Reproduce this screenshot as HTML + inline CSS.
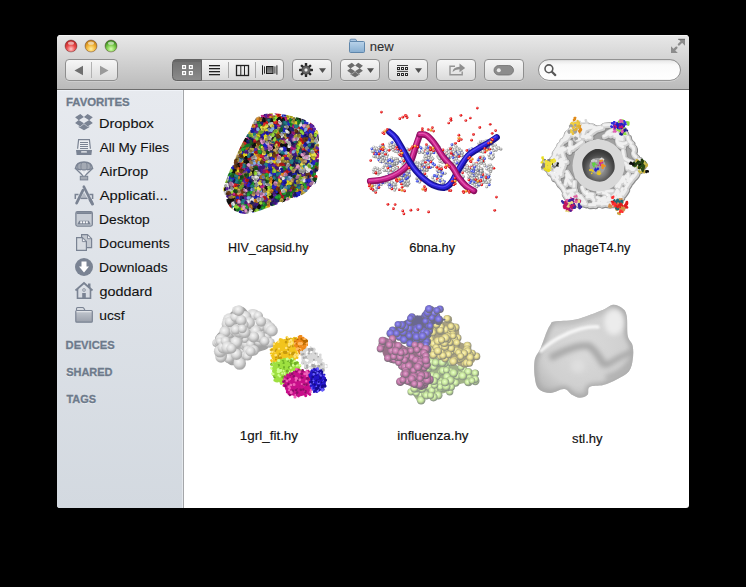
<!DOCTYPE html>
<html><head><meta charset="utf-8"><style>
html,body{margin:0;padding:0;background:#000;width:746px;height:587px;overflow:hidden}
svg{display:block}
text{font-family:"Liberation Sans",sans-serif}
</style></head><body><svg width="746" height="587" viewBox="0 0 746 587"><defs><linearGradient id="tbg" x1="0" y1="0" x2="0" y2="1">
<stop offset="0" stop-color="#e8e8e8"/><stop offset="1" stop-color="#bababa"/></linearGradient>
<linearGradient id="sbg" x1="0" y1="0" x2="0" y2="1">
<stop offset="0" stop-color="#e7eaef"/><stop offset="1" stop-color="#d3d9e0"/></linearGradient>
<linearGradient id="btn" x1="0" y1="0" x2="0" y2="1">
<stop offset="0" stop-color="#f7f7f7"/><stop offset="1" stop-color="#dadada"/></linearGradient>
<linearGradient id="btnsel" x1="0" y1="0" x2="0" y2="1">
<stop offset="0" stop-color="#6e6e6e"/><stop offset="1" stop-color="#8c8c8c"/></linearGradient>
<linearGradient id="fold" x1="0" y1="0" x2="0" y2="1">
<stop offset="0" stop-color="#b9d3ea"/><stop offset="1" stop-color="#88aed0"/></linearGradient>
<radialGradient id="red" cx="0.5" cy="0.75" r="0.65"><stop offset="0" stop-color="#ffc8c8"/><stop offset="0.55" stop-color="#ea4c4c"/><stop offset="1" stop-color="#c02828"/></radialGradient>
<radialGradient id="yel" cx="0.5" cy="0.75" r="0.65"><stop offset="0" stop-color="#fff0a0"/><stop offset="0.55" stop-color="#f2b53a"/><stop offset="1" stop-color="#c88418"/></radialGradient>
<radialGradient id="grn" cx="0.5" cy="0.75" r="0.65"><stop offset="0" stop-color="#d8ffb0"/><stop offset="0.55" stop-color="#7ccc4c"/><stop offset="1" stop-color="#3c8a20"/></radialGradient>
<clipPath id="win"><path d="M61,35 H685 Q689,35 689,39 V505 Q689,508 686,508 H60 Q57,508 57,505 V39 Q57,35 61,35 Z"/></clipPath><linearGradient id="cfg" x1="0" y1="0" x2="0" y2="1"><stop offset="0" stop-color="#5a5a5a"/><stop offset="1" stop-color="#8a8a8a"/></linearGradient><radialGradient id="gearg" cx="0.5" cy="0.5" r="0.5"><stop offset="0.4" stop-color="#7a7a7a"/><stop offset="1" stop-color="#444"/></radialGradient><linearGradient id="srch" x1="0" y1="0" x2="0" y2="1"><stop offset="0" stop-color="#e4e4e4"/><stop offset="0.25" stop-color="#fafafa"/><stop offset="1" stop-color="#ffffff"/></linearGradient><linearGradient id="sfold" x1="0" y1="0" x2="0" y2="1"><stop offset="0" stop-color="#c3c8d0"/><stop offset="1" stop-color="#9aa0ab"/></linearGradient><filter id="bl3" x="-10%" y="-10%" width="120%" height="120%"><feGaussianBlur stdDeviation="0.35"/></filter><filter id="bl6" x="-10%" y="-10%" width="120%" height="120%"><feGaussianBlur stdDeviation="0.6"/></filter><filter id="bl12" x="-20%" y="-20%" width="140%" height="140%"><feGaussianBlur stdDeviation="1.2"/></filter><filter id="bl25" x="-20%" y="-20%" width="140%" height="140%"><feGaussianBlur stdDeviation="2.5"/></filter><clipPath id="capclip"><path d="M257.7,116.6 C262.2,113.6 269.1,113.1 276.4,113.4 C283.6,113.8 294.7,116.4 301.2,118.6 C307.8,120.9 312.8,123.5 315.7,126.9 C318.7,130.4 318.3,133.5 318.8,139.3 C319.3,145.2 319.3,154.9 318.8,162.2 C318.3,169.4 318.7,177.3 315.7,182.9 C312.8,188.4 306.4,192.2 301.2,195.3 C296.0,198.5 291.1,199.1 284.6,201.5 C278.0,204.0 268.4,207.8 261.8,209.9 C255.3,211.9 250.4,214.4 245.2,214.0 C240.0,213.7 234.3,211.5 230.7,207.7 C227.1,203.9 224.1,196.0 223.5,191.2 C222.8,186.3 224.0,185.6 226.6,178.7 C229.2,171.8 235.2,157.6 239.0,149.7 C242.8,141.7 246.2,136.6 249.4,131.1 C252.5,125.6 253.2,119.5 257.7,116.6 Z"/></clipPath><radialGradient id="gb" cx="0.38" cy="0.35" r="0.7"><stop offset="0" stop-color="#ffffff"/><stop offset="0.55" stop-color="#b8b8b8"/><stop offset="1" stop-color="#6a6a6a"/></radialGradient><radialGradient id="bb" cx="0.38" cy="0.35" r="0.7"><stop offset="0" stop-color="#c0c8ff"/><stop offset="0.55" stop-color="#4050f0"/><stop offset="1" stop-color="#2028a0"/></radialGradient><radialGradient id="rb" cx="0.38" cy="0.35" r="0.7"><stop offset="0" stop-color="#ffa0a0"/><stop offset="0.55" stop-color="#f01818"/><stop offset="1" stop-color="#a00000"/></radialGradient><radialGradient id="ob" cx="0.38" cy="0.35" r="0.7"><stop offset="0" stop-color="#ffd090"/><stop offset="0.55" stop-color="#f09020"/><stop offset="1" stop-color="#b05a00"/></radialGradient><radialGradient id="pg" cx="0.4" cy="0.35" r="0.65"><stop offset="0" stop-color="#fafafa"/><stop offset="0.55" stop-color="#d8d8d8"/><stop offset="1" stop-color="#9c9c9c"/></radialGradient><radialGradient id="hole" cx="0.5" cy="0.62" r="0.55"><stop offset="0" stop-color="#b0b0b0"/><stop offset="0.45" stop-color="#7c7c7c"/><stop offset="0.8" stop-color="#4a4a4a"/><stop offset="1" stop-color="#3a3a3a"/></radialGradient><radialGradient id="g1" cx="0.4" cy="0.35" r="0.58"><stop offset="0" stop-color="#f6f6f6"/><stop offset="0.55" stop-color="#dadada"/><stop offset="1" stop-color="#ababab"/></radialGradient><radialGradient id="iblue" cx="0.45" cy="0.42" r="0.52"><stop offset="0" stop-color="#a29cf2"/><stop offset="0.55" stop-color="#766edc"/><stop offset="1" stop-color="#6e6e7c"/></radialGradient><radialGradient id="iyel" cx="0.45" cy="0.42" r="0.52"><stop offset="0" stop-color="#fcf6bc"/><stop offset="0.55" stop-color="#e6da8a"/><stop offset="1" stop-color="#8e8c7a"/></radialGradient><radialGradient id="ipink" cx="0.45" cy="0.42" r="0.52"><stop offset="0" stop-color="#e4a6d0"/><stop offset="0.55" stop-color="#c67aac"/><stop offset="1" stop-color="#7c6c7a"/></radialGradient><radialGradient id="igrn" cx="0.45" cy="0.42" r="0.52"><stop offset="0" stop-color="#eaffcc"/><stop offset="0.55" stop-color="#c8e89c"/><stop offset="1" stop-color="#8a9684"/></radialGradient><radialGradient id="stlg" cx="0.5" cy="0.45" r="0.6"><stop offset="0" stop-color="#dadada"/><stop offset="0.7" stop-color="#d0d0d0"/><stop offset="1" stop-color="#bababa"/></radialGradient><clipPath id="stlc"><path d="M554.4,321.4 C558.6,320.6 567.8,321.4 575.9,319.5 C584.0,317.6 597.1,312.1 603.3,309.7 C609.5,307.2 609.8,305.0 613.1,304.8 C616.4,304.6 620.6,306.8 622.9,308.7 C625.2,310.6 626.0,311.9 626.8,316.5 C627.6,321.1 626.8,331.2 627.8,336.1 C628.8,341.0 631.9,342.0 632.7,345.9 C633.5,349.8 633.4,355.4 632.7,359.6 C632.1,363.9 631.4,368.1 628.8,371.4 C626.2,374.7 621.2,376.9 617.0,379.2 C612.8,381.5 607.9,383.8 603.3,385.1 C598.7,386.4 592.2,385.4 589.6,387.0 C587.0,388.6 589.2,393.0 587.6,394.8 C586.0,396.6 582.4,397.8 579.8,397.8 C577.2,397.8 574.6,396.3 572.0,394.8 C569.4,393.3 567.8,389.3 564.2,389.0 C560.6,388.7 554.8,392.9 550.5,392.9 C546.2,392.9 541.3,391.6 538.7,389.0 C536.1,386.4 535.4,382.1 534.8,377.2 C534.1,372.3 533.8,364.5 534.8,359.6 C535.8,354.7 538.8,352.5 540.7,347.9 C542.7,343.3 544.9,336.1 546.5,332.2 C548.1,328.3 549.2,326.2 550.5,324.4 C551.8,322.6 550.2,322.2 554.4,321.4 Z"/></clipPath></defs><rect x="0" y="0" width="746" height="587" fill="#000"/><g clip-path="url(#win)"><rect x="57" y="35" width="632" height="473" fill="#fff"/><rect x="57" y="35" width="632" height="54" fill="url(#tbg)"/><rect x="57" y="35" width="632" height="1" fill="#f4f4f4"/><rect x="57" y="89" width="632" height="1" fill="#6e6e6e"/><rect x="57" y="90" width="126" height="418" fill="url(#sbg)"/><rect x="57" y="90" width="126" height="1" fill="#f0f3f8"/><rect x="183" y="90" width="1" height="418" fill="#a4a6a9"/><rect x="182" y="90" width="1" height="418" fill="#eef1f5" opacity="0.6"/></g><circle cx="71" cy="46" r="6.5" fill="#d8d8d8" opacity="0.0"/><circle cx="71" cy="46" r="6" fill="url(#red)" stroke="rgba(60,20,20,0.45)" stroke-width="0.8"/><ellipse cx="71" cy="43.2" rx="3" ry="1.6" fill="#fff" opacity="0.55"/><circle cx="91" cy="46" r="6.5" fill="#d8d8d8" opacity="0.0"/><circle cx="91" cy="46" r="6" fill="url(#yel)" stroke="rgba(60,20,20,0.45)" stroke-width="0.8"/><ellipse cx="91" cy="43.2" rx="3" ry="1.6" fill="#fff" opacity="0.55"/><circle cx="111" cy="46" r="6.5" fill="#d8d8d8" opacity="0.0"/><circle cx="111" cy="46" r="6" fill="url(#grn)" stroke="rgba(60,20,20,0.45)" stroke-width="0.8"/><ellipse cx="111" cy="43.2" rx="3" ry="1.6" fill="#fff" opacity="0.55"/><rect x="349.5" y="41.5" width="15" height="11" rx="1" fill="url(#fold)" stroke="#5f86ab" stroke-width="1"/><path d="M350,41.5 V40 Q350,39.2 351,39.2 H355 Q356,39.2 356.3,40 L356.8,41.5 Z" fill="#a9c6e2" stroke="#5f86ab" stroke-width="0.9"/><g fill="#8c8c8c"><path d="M678.2,39 H685 V45.8 Z"/><path d="M671,46.2 V53 H677.8 Z"/></g><path d="M678.9,44.5 L682.2,41.2 M676.4,47.6 L673.6,50.4" stroke="#8c8c8c" stroke-width="2.3" stroke-linecap="round"/><rect x="678.2" y="38.8" width="6.8" height="1" fill="#6a6a6a"/><rect x="65.5" y="60.5" width="52" height="21" rx="3.5" fill="#f0f0f0" opacity="0.55"/><rect x="65.5" y="59.5" width="52" height="21" rx="3.5" fill="url(#btn)" stroke="#8e8e8e" stroke-width="1"/><rect x="91" y="62" width="1" height="16" fill="#b2b2b2"/><path d="M74.5,70.5 L83,65.8 V75.2 Z" fill="#6e6e6e"/><path d="M108.5,70.5 L100,65.8 V75.2 Z" fill="#9a9a9a"/><rect x="173.5" y="60.5" width="110" height="21" rx="3.5" fill="#f0f0f0" opacity="0.55"/><rect x="173.5" y="59.5" width="110" height="21" rx="3.5" fill="url(#btn)" stroke="#8e8e8e" stroke-width="1"/><path d="M176.5,59.5 H201.5 V80.5 H176.5 Q172.5,80.5 172.5,76.5 V63.5 Q172.5,59.5 176.5,59.5 Z" fill="url(#btnsel)" stroke="#626262" stroke-width="1"/><rect x="174" y="60" width="27" height="2" fill="#5a5a5a" opacity="0.35"/><rect x="228" y="62" width="1" height="16" fill="#a8a8a8"/><rect x="255" y="62" width="1" height="16" fill="#a8a8a8"/><rect x="182.7" y="65.7" width="2.7" height="2.7" fill="#3a3a3a" stroke="#fff" stroke-width="1.4"/><rect x="182.7" y="71.7" width="2.7" height="2.7" fill="#3a3a3a" stroke="#fff" stroke-width="1.4"/><rect x="189.5" y="65.7" width="2.7" height="2.7" fill="#3a3a3a" stroke="#fff" stroke-width="1.4"/><rect x="189.5" y="71.7" width="2.7" height="2.7" fill="#3a3a3a" stroke="#fff" stroke-width="1.4"/><rect x="209" y="65" width="11" height="1.3" fill="#222"/><rect x="209" y="68" width="11" height="1.3" fill="#222"/><rect x="209" y="71" width="11" height="1.3" fill="#222"/><rect x="209" y="74" width="11" height="1.3" fill="#222"/><rect x="236.5" y="65.5" width="12" height="10" fill="none" stroke="#222" stroke-width="1.3"/><rect x="240.3" y="65.5" width="1" height="10" fill="#222"/><rect x="244" y="65.5" width="1" height="10" fill="#222"/><rect x="266.5" y="66.5" width="6.5" height="7" fill="url(#cfg)" stroke="#1e1e1e" stroke-width="1"/><rect x="262" y="65.3" width="1" height="9.4" fill="#222"/><rect x="264" y="66.4" width="1" height="7.2" fill="#333"/><rect x="274.4" y="66.4" width="1" height="7.2" fill="#333"/><rect x="276.4" y="65.3" width="1" height="9.4" fill="#222"/><rect x="292.5" y="60.5" width="39" height="21" rx="3.5" fill="#f0f0f0" opacity="0.55"/><rect x="292.5" y="59.5" width="39" height="21" rx="3.5" fill="url(#btn)" stroke="#8e8e8e" stroke-width="1"/><rect x="304.8" y="63" width="2.4" height="3.6" rx="0.6" fill="#262626" transform="rotate(0 306 70)"/><rect x="304.8" y="63" width="2.4" height="3.6" rx="0.6" fill="#262626" transform="rotate(45 306 70)"/><rect x="304.8" y="63" width="2.4" height="3.6" rx="0.6" fill="#262626" transform="rotate(90 306 70)"/><rect x="304.8" y="63" width="2.4" height="3.6" rx="0.6" fill="#262626" transform="rotate(135 306 70)"/><rect x="304.8" y="63" width="2.4" height="3.6" rx="0.6" fill="#262626" transform="rotate(180 306 70)"/><rect x="304.8" y="63" width="2.4" height="3.6" rx="0.6" fill="#262626" transform="rotate(225 306 70)"/><rect x="304.8" y="63" width="2.4" height="3.6" rx="0.6" fill="#262626" transform="rotate(270 306 70)"/><rect x="304.8" y="63" width="2.4" height="3.6" rx="0.6" fill="#262626" transform="rotate(315 306 70)"/><circle cx="306" cy="70" r="4.6" fill="url(#gearg)"/><circle cx="306" cy="70" r="2" fill="#ececec" stroke="#333" stroke-width="0.5"/><path d="M319,68.3 H326 L322.5,73.1 Z" fill="#505050"/><rect x="340.5" y="60.5" width="39" height="21" rx="3.5" fill="#f0f0f0" opacity="0.55"/><rect x="340.5" y="59.5" width="39" height="21" rx="3.5" fill="url(#btn)" stroke="#8e8e8e" stroke-width="1"/><g transform="translate(347.2,62.8) scale(0.367)" fill="#6c6c6c"><path d="M12.6,0 L0,8.2 L8.7,15.2 L21.4,7.4 Z M0,22 L12.6,30.2 L21.4,22.9 L8.7,15 Z M21.4,22.9 L30.2,30.2 L42.8,22 L34.1,15 Z M42.8,8.2 L30.2,0 L21.4,7.4 L34.1,15.2 Z M21.5,24.5 L12.6,31.8 L8.8,29.3 V32.1 L21.5,39.7 L34.2,32.1 V29.3 L30.4,31.8 Z"/></g><path d="M367,68.3 H374 L370.5,73.1 Z" fill="#505050"/><rect x="388.5" y="60.5" width="39" height="21" rx="3.5" fill="#f0f0f0" opacity="0.55"/><rect x="388.5" y="59.5" width="39" height="21" rx="3.5" fill="url(#btn)" stroke="#8e8e8e" stroke-width="1"/><rect x="397" y="65" width="11" height="0.9" fill="#2a2a2a"/><rect x="397" y="70.9" width="11" height="0.9" fill="#2a2a2a"/><rect x="397.5" y="67.5" width="2" height="2" fill="#f6f6f6" stroke="#2a2a2a" stroke-width="1"/><rect x="401.5" y="67.5" width="2" height="2" fill="#f6f6f6" stroke="#2a2a2a" stroke-width="1"/><rect x="405.5" y="67.5" width="2" height="2" fill="#f6f6f6" stroke="#2a2a2a" stroke-width="1"/><rect x="397.5" y="73.5" width="2" height="2" fill="#f6f6f6" stroke="#2a2a2a" stroke-width="1"/><rect x="401.5" y="73.5" width="2" height="2" fill="#f6f6f6" stroke="#2a2a2a" stroke-width="1"/><rect x="405.5" y="73.5" width="2" height="2" fill="#f6f6f6" stroke="#2a2a2a" stroke-width="1"/><path d="M415,68.3 H422 L418.5,73.1 Z" fill="#505050"/><rect x="436.5" y="60.5" width="39" height="21" rx="3.5" fill="#f0f0f0" opacity="0.55"/><rect x="436.5" y="59.5" width="39" height="21" rx="3.5" fill="url(#btn)" stroke="#8e8e8e" stroke-width="1"/><path d="M455,66.2 H450 V74.8 H462.2 V71.5" stroke="#949494" stroke-width="1.4" fill="none"/><path d="M452.5,72 Q453,67 459.5,66.8 V63.6 L465.2,68 L459.5,72.2 V69.3 Q455,69.3 452.5,72 Z" fill="#8e8e8e"/><rect x="484.5" y="60.5" width="39" height="21" rx="3.5" fill="#f0f0f0" opacity="0.55"/><rect x="484.5" y="59.5" width="39" height="21" rx="3.5" fill="url(#btn)" stroke="#8e8e8e" stroke-width="1"/><rect x="494" y="65.5" width="19.5" height="9.5" rx="4.75" fill="#8c8c8c" stroke="#6f6f6f" stroke-width="0.8"/><circle cx="498.8" cy="70.2" r="2" fill="#e9e9e9"/><rect x="538.5" y="61" width="142" height="20.5" rx="10.2" fill="#f2f2f2" opacity="0.6"/><rect x="538.5" y="59.6" width="142" height="20.8" rx="10.4" fill="url(#srch)" stroke="#8a8a8a" stroke-width="1"/><circle cx="548.9" cy="68.8" r="3.9" fill="none" stroke="#585858" stroke-width="1.6"/><path d="M551.9,71.8 L555.3,75.1" stroke="#585858" stroke-width="2.2" stroke-linecap="round"/><g transform="translate(75.1,113.9) scale(0.4136)" fill="#7a8393"><path d="M12.6,0 L0,8.2 L8.7,15.2 L21.4,7.4 Z M0,22 L12.6,30.2 L21.4,22.9 L8.7,15 Z M21.4,22.9 L30.2,30.2 L42.8,22 L34.1,15 Z M42.8,8.2 L30.2,0 L21.4,7.4 L34.1,15.2 Z M21.5,24.5 L12.6,31.8 L8.8,29.3 V32.1 L21.5,39.7 L34.2,32.1 V29.3 L30.4,31.8 Z"/></g><path d="M77.6,148.8 L78.6,139.6 H89.4 L90.4,148.8" fill="#eceef2" stroke="#7a8393" stroke-width="1.2"/><g fill="#7a8393"><rect x="80" y="142" width="8" height="1"/><rect x="80" y="144" width="8" height="1"/><rect x="80" y="146" width="8" height="1"/><rect x="80" y="148" width="8" height="1"/></g><path d="M76,150 H92 L91.4,155 H76.6 Z" fill="#7a8393"/><rect x="81" y="151.2" width="6" height="1.4" rx="0.7" fill="#f4f5f8"/><path d="M75.3,168.6 C76,164 79,162 84,162 C89,162 92,164 92.7,168.6 C88,170 80,170 75.3,168.6 Z" fill="#a4aab4" stroke="#7a8393" stroke-width="1.3"/><path d="M81.6,162.5 C80.8,165 80.8,167 81.2,169.3 M86.4,162.5 C87.2,165 87.2,167 86.8,169.3 M78,163.8 C77.5,165.5 77.6,167 78,168.8 M90,163.8 C90.5,165.5 90.4,167 90,168.8" stroke="#7a8393" stroke-width="0.9" fill="none"/><path d="M76,169 L83,175.8 M92,169 L85,175.8" stroke="#7a8393" stroke-width="1.2"/><path d="M81.5,170.2 L83.5,175 M86.5,170.2 L84.5,175" stroke="#f4f5f8" stroke-width="1" fill="none"/><rect x="80.3" y="176.3" width="7.4" height="3.6" fill="#a4aab4" stroke="#7a8393" stroke-width="1"/><path d="M75.3,199 V194.6 H78.5 M92.6,199 V194.6 H89.4" stroke="#7a8393" stroke-width="1.5" fill="none"/><path d="M80.5,198.6 L84,192.5 L87.5,198.6 Z" fill="#b4bac4"/><rect x="80.5" y="197.8" width="7" height="1.3" fill="#7a8393"/><path d="M76.6,203.2 L83,190.2" stroke="#7a8393" stroke-width="2.7" stroke-linecap="round"/><path d="M83.8,186.6 L91.8,202.6" stroke="#7a8393" stroke-width="2.5" stroke-linecap="round"/><path d="M90,199.5 L92.5,204" stroke="#7a8393" stroke-width="3" stroke-linecap="round"/><rect x="75.9" y="211.7" width="16.4" height="14.4" rx="1.5" fill="#c9ced6" stroke="#7a8393" stroke-width="1.3"/><rect x="76.5" y="212.2" width="15.2" height="1.8" fill="#7a8393"/><path d="M77.2,224.5 L79.2,220.8 H88.8 L90.8,224.5 Z" fill="#7a8393"/><g fill="#f4f5f8"><rect x="80.2" y="221.3" width="2" height="2"/><rect x="83" y="221.3" width="2" height="2"/><rect x="85.8" y="221.3" width="2" height="2"/></g><path d="M81.6,234.6 H87.5 L91.6,238.7 V247.6 H81.6 Z" fill="#c4c9d1" stroke="#7a8393" stroke-width="1.2"/><path d="M87.5,234.8 V238.7 H91.4 Z" fill="#f4f5f8" stroke="#7a8393" stroke-width="0.9"/><path d="M76.6,237.6 H82.4 L86.4,241.6 V250.4 H76.6 Z" fill="#d8dce2" stroke="#7a8393" stroke-width="1.2"/><path d="M82.4,237.8 V241.6 H86.2 Z" fill="#f4f5f8" stroke="#7a8393" stroke-width="0.9"/><circle cx="84" cy="267" r="9" fill="#7a8393"/><path d="M81.5,261.5 H86.5 V266.5 H89 L84,272.5 L79,266.5 H81.5 Z" fill="#fff"/><path d="M77.5,289 V298.3 H90.5 V289" fill="#d8dce3" stroke="#7a8393" stroke-width="1.6"/><path d="M75.5,290.5 L84,283 L92.5,290.5" fill="none" stroke="#7a8393" stroke-width="1.8"/><rect x="88" y="283.5" width="2.5" height="4.5" fill="#7a8393"/><rect x="82.2" y="293" width="3.6" height="5.5" fill="#7a8393"/><circle cx="84" cy="290" r="1.7" fill="#7a8393"/><circle cx="84" cy="290" r="0.8" fill="#fff"/><path d="M76.5,310.5 V308.5 Q76.5,307.5 77.5,307.5 H82.5 Q83.5,307.5 84,308.5 L85,310.5" fill="#d6dae0" stroke="#7a8393" stroke-width="1.1"/><rect x="75.8" y="310.5" width="16.5" height="11.7" rx="1" fill="url(#sfold)" stroke="#7a8393" stroke-width="1.2"/><rect x="76.5" y="311.3" width="15" height="0.9" fill="#eef0f3"/><text x="65.92" y="106.8" font-family="Liberation Sans" font-size="11" font-weight="bold" fill="#ffffff" textLength="63.77" lengthAdjust="spacingAndGlyphs" opacity="0.5">FAVORITES</text><text x="65.92" y="105.8" font-family="Liberation Sans" font-size="11" font-weight="bold" fill="#6d7a8b" textLength="63.77" lengthAdjust="spacingAndGlyphs" stroke="#6d7a8b" stroke-width="0.3">FAVORITES</text><text x="65.64" y="349.8" font-family="Liberation Sans" font-size="11" font-weight="bold" fill="#ffffff" textLength="48.96" lengthAdjust="spacingAndGlyphs" opacity="0.5">DEVICES</text><text x="65.64" y="348.8" font-family="Liberation Sans" font-size="11" font-weight="bold" fill="#6d7a8b" textLength="48.96" lengthAdjust="spacingAndGlyphs" stroke="#6d7a8b" stroke-width="0.3">DEVICES</text><text x="66.15" y="376.9" font-family="Liberation Sans" font-size="11" font-weight="bold" fill="#ffffff" textLength="46.40" lengthAdjust="spacingAndGlyphs" opacity="0.5">SHARED</text><text x="66.15" y="375.9" font-family="Liberation Sans" font-size="11" font-weight="bold" fill="#6d7a8b" textLength="46.40" lengthAdjust="spacingAndGlyphs" stroke="#6d7a8b" stroke-width="0.3">SHARED</text><text x="66.40" y="403.7" font-family="Liberation Sans" font-size="11" font-weight="bold" fill="#ffffff" textLength="29.60" lengthAdjust="spacingAndGlyphs" opacity="0.5">TAGS</text><text x="66.40" y="402.7" font-family="Liberation Sans" font-size="11" font-weight="bold" fill="#6d7a8b" textLength="29.60" lengthAdjust="spacingAndGlyphs" stroke="#6d7a8b" stroke-width="0.3">TAGS</text><text x="98.92" y="128.2" font-family="Liberation Sans" font-size="13.5" font-weight="normal" fill="#111" textLength="54.98" lengthAdjust="spacingAndGlyphs" stroke="#111" stroke-width="0.1">Dropbox</text><text x="99.70" y="152.2" font-family="Liberation Sans" font-size="13.5" font-weight="normal" fill="#111" textLength="69.32" lengthAdjust="spacingAndGlyphs" stroke="#111" stroke-width="0.1">All My Files</text><text x="99.70" y="176.2" font-family="Liberation Sans" font-size="13.5" font-weight="normal" fill="#111" textLength="48.45" lengthAdjust="spacingAndGlyphs" stroke="#111" stroke-width="0.1">AirDrop</text><text x="99.70" y="200.2" font-family="Liberation Sans" font-size="13.5" font-weight="normal" fill="#111" textLength="68.10" lengthAdjust="spacingAndGlyphs" stroke="#111" stroke-width="0.1">Applicati...</text><text x="98.97" y="224.2" font-family="Liberation Sans" font-size="13.5" font-weight="normal" fill="#111" textLength="50.87" lengthAdjust="spacingAndGlyphs" stroke="#111" stroke-width="0.1">Desktop</text><text x="99.07" y="248.2" font-family="Liberation Sans" font-size="13.5" font-weight="normal" fill="#111" textLength="70.58" lengthAdjust="spacingAndGlyphs" stroke="#111" stroke-width="0.1">Documents</text><text x="99.07" y="272.2" font-family="Liberation Sans" font-size="13.5" font-weight="normal" fill="#111" textLength="68.59" lengthAdjust="spacingAndGlyphs" stroke="#111" stroke-width="0.1">Downloads</text><text x="99.47" y="296.2" font-family="Liberation Sans" font-size="13.5" font-weight="normal" fill="#111" textLength="52.68" lengthAdjust="spacingAndGlyphs" stroke="#111" stroke-width="0.1">goddard</text><text x="99.23" y="320.2" font-family="Liberation Sans" font-size="13.5" font-weight="normal" fill="#111" textLength="25.38" lengthAdjust="spacingAndGlyphs" stroke="#111" stroke-width="0.1">ucsf</text><text x="369.75" y="50.7" font-family="Liberation Sans" font-size="13" font-weight="normal" fill="#303030" textLength="23.96" lengthAdjust="spacingAndGlyphs" stroke="#303030" stroke-width="0.1">new</text><text x="227.96" y="252.2" font-family="Liberation Sans" font-size="12" font-weight="normal" fill="#111" textLength="80.57" lengthAdjust="spacingAndGlyphs" stroke="#111" stroke-width="0.15">HIV_capsid.hy</text><text x="409.26" y="252.2" font-family="Liberation Sans" font-size="12" font-weight="normal" fill="#111" textLength="45.89" lengthAdjust="spacingAndGlyphs" stroke="#111" stroke-width="0.15">6bna.hy</text><text x="563.51" y="252.2" font-family="Liberation Sans" font-size="12" font-weight="normal" fill="#111" textLength="66.94" lengthAdjust="spacingAndGlyphs" stroke="#111" stroke-width="0.15">phageT4.hy</text><text x="239.88" y="440" font-family="Liberation Sans" font-size="12" font-weight="normal" fill="#111" textLength="58.15" lengthAdjust="spacingAndGlyphs" stroke="#111" stroke-width="0.15">1grl_fit.hy</text><text x="397.27" y="440" font-family="Liberation Sans" font-size="12" font-weight="normal" fill="#111" textLength="71.29" lengthAdjust="spacingAndGlyphs" stroke="#111" stroke-width="0.15">influenza.hy</text><text x="572.13" y="443" font-family="Liberation Sans" font-size="12" font-weight="normal" fill="#111" textLength="30.39" lengthAdjust="spacingAndGlyphs" stroke="#111" stroke-width="0.15">stl.hy</text><path d="M258.3,118.7 C262.6,115.9 269.3,115.4 276.2,115.7 C283.1,116.0 293.7,118.5 300.0,120.7 C306.2,122.8 311.0,125.3 313.8,128.6 C316.6,131.9 316.3,134.8 316.7,140.5 C317.2,146.1 317.2,155.3 316.7,162.3 C316.3,169.2 316.6,176.8 313.8,182.1 C311.0,187.4 304.9,191.0 300.0,194.0 C295.0,197.0 290.3,197.6 284.1,199.9 C277.8,202.2 268.6,205.9 262.3,207.9 C256.1,209.9 251.4,212.2 246.4,211.8 C241.5,211.5 236.0,209.5 232.5,205.8 C229.1,202.2 226.3,194.6 225.7,190.0 C225.0,185.4 226.2,184.7 228.7,178.1 C231.1,171.5 236.9,157.9 240.5,150.4 C244.1,142.8 247.4,137.9 250.4,132.6 C253.4,127.3 254.0,121.5 258.3,118.7 Z" fill="#403448"/><g clip-path="url(#capclip)"><g filter="url(#bl3)"><path d="M270.3 114.5h0M279.1 116.3h0M287.6 115.9h0M267.4 131.7h0M266.5 130.6h0M265.6 133.7h0M271.1 137.4h0M300.0 143.9h0M310.0 140.9h0M298.5 144.3h0M298.4 145.1h0M260.2 159.4h0M296.2 159.4h0M242.6 161.9h0M244.1 162.3h0M299.0 174.3h0M270.5 185.1h0M235.6 187.9h0M255.2 189.6h0M253.2 187.1h0M223.0 190.1h0M269.0 191.6h0M296.7 189.3h0M267.6 197.6h0M242.2 208.0h0" stroke="#9e9815" stroke-width="3.2" stroke-linecap="round"/><path d="M272.2 112.5h0M270.9 113.8h0M277.9 116.8h0M277.6 115.9h0M276.2 115.8h0M288.1 116.4h0M291.9 117.1h0M293.6 122.2h0M266.7 130.9h0M256.4 135.9h0M259.3 136.5h0M265.2 134.6h0M269.6 136.7h0M269.5 138.1h0M270.5 135.6h0M299.9 142.8h0M301.3 143.6h0M308.8 142.3h0M309.9 140.7h0M257.8 144.2h0M252.5 155.4h0M310.9 154.8h0M258.7 159.2h0M261.0 158.7h0M283.3 158.3h0M294.8 160.2h0M296.8 159.7h0M301.0 157.9h0M274.0 161.2h0M309.3 162.0h0M272.6 167.4h0M275.3 166.8h0M299.5 174.8h0M280.3 182.0h0M286.6 182.0h0M270.5 185.4h0M269.7 184.4h0M286.4 183.8h0M289.8 182.7h0M235.9 186.9h0M237.3 189.4h0M236.6 188.6h0M222.7 191.9h0M286.1 190.7h0M297.0 189.6h0M233.7 199.0h0M290.4 195.6h0M290.3 195.8h0M266.1 206.4h0M230.4 207.9h0M242.8 209.1h0M243.0 207.6h0" stroke="#dcd41e" stroke-width="2.0" stroke-linecap="round"/><path d="M270.7 114.5h0M277.5 116.8h0M287.9 118.1h0M257.4 134.9h0M298.8 145.9h0M297.3 146.3h0M282.6 159.1h0M283.0 158.8h0M313.6 156.5h0M245.2 162.3h0M242.4 161.4h0M309.8 162.7h0M309.4 162.7h0M310.4 162.3h0M273.0 169.8h0M302.1 168.2h0M235.9 171.4h0M236.6 173.5h0M298.5 175.2h0M288.0 181.2h0M270.0 183.1h0M290.4 183.2h0M254.8 187.9h0M223.9 188.9h0M284.0 190.1h0M233.4 197.3h0M268.6 196.5h0M269.4 195.7h0M267.4 208.4h0M267.9 207.4h0M242.1 208.8h0" stroke="#dcd41e" stroke-width="3.2" stroke-linecap="round"/><path d="M271.7 114.0h0M292.8 122.9h0M294.4 124.1h0M257.8 135.1h0M258.3 136.4h0M267.7 136.8h0M309.6 141.1h0M258.9 144.0h0M257.6 143.4h0M297.9 152.5h0M243.3 155.1h0M259.3 159.4h0M283.9 158.7h0M282.8 159.5h0M296.0 159.0h0M313.8 159.7h0M314.7 158.9h0M313.1 157.8h0M321.2 159.3h0M267.9 161.2h0M273.2 160.9h0M273.6 161.6h0M274.1 168.7h0M236.7 171.8h0M279.4 182.2h0M286.4 180.1h0M270.7 185.4h0M287.6 183.2h0M288.8 181.7h0M237.3 187.8h0M234.9 188.3h0M222.7 190.0h0M222.3 190.3h0M268.2 191.5h0M284.7 190.0h0M286.0 191.6h0M296.8 192.1h0M233.1 197.7h0M268.7 196.5h0M290.5 196.5h0M290.0 196.2h0M265.8 207.2h0M231.3 210.6h0" stroke="#9e9815" stroke-width="2.0" stroke-linecap="round"/><path d="M271.4 114.6h0M287.8 116.2h0M291.5 116.3h0M291.7 117.3h0M295.0 124.8h0M266.5 130.3h0M258.5 135.4h0M266.3 135.1h0M300.2 143.3h0M310.0 140.6h0M310.0 140.6h0M298.7 145.1h0M297.7 151.5h0M297.9 154.3h0M297.1 152.0h0M244.2 154.2h0M253.6 155.8h0M255.6 155.1h0M310.5 154.0h0M310.4 153.7h0M295.6 159.4h0M300.2 158.8h0M300.9 160.2h0M300.4 159.3h0M313.5 156.8h0M312.2 157.6h0M320.0 159.1h0M319.4 157.7h0M319.9 159.5h0M319.6 159.9h0M244.3 162.2h0M244.0 163.5h0M267.7 163.6h0M267.7 161.9h0M273.4 168.9h0M302.8 168.8h0M299.1 175.3h0M279.6 181.6h0M286.9 184.8h0M288.1 182.6h0M235.3 187.3h0M253.8 190.1h0M223.7 192.1h0M223.4 190.5h0M266.3 190.5h0M267.6 192.1h0M297.6 192.1h0M296.4 190.6h0M295.5 189.5h0M233.2 197.6h0M267.9 196.9h0M230.7 209.5h0M231.2 209.4h0M231.2 209.2h0" stroke="#dcd41e" stroke-width="2.4" stroke-linecap="round"/><path d="M270.7 114.5h0M278.8 117.0h0M288.0 116.6h0M290.8 116.8h0M291.6 116.1h0M292.1 115.5h0M293.1 123.9h0M266.4 130.7h0M266.4 134.2h0M310.0 141.9h0M297.9 146.1h0M245.0 157.4h0M253.2 157.6h0M283.2 158.6h0M296.3 157.6h0M299.5 157.5h0M300.7 159.7h0M321.0 158.5h0M267.2 161.9h0M310.8 162.5h0M276.2 168.1h0M304.4 166.8h0M303.4 168.4h0M237.4 171.4h0M237.6 171.9h0M280.4 180.9h0M280.9 181.0h0M288.1 180.6h0M290.8 183.4h0M291.5 182.8h0M269.2 190.3h0M284.8 188.5h0M296.6 190.8h0M268.7 197.0h0M265.9 207.4h0M231.3 211.2h0M240.3 208.6h0M241.7 208.0h0" stroke="#9e9815" stroke-width="2.4" stroke-linecap="round"/><path d="M275.4 112.7h0M277.5 114.5h0M263.5 117.7h0M284.8 118.2h0M286.3 118.0h0M285.1 117.8h0M280.5 125.6h0M293.2 133.6h0M292.7 133.4h0M249.6 139.3h0M283.4 141.9h0M284.6 139.7h0M293.1 148.4h0M294.9 148.5h0M294.7 147.4h0M290.3 152.6h0M290.1 151.0h0M275.6 156.9h0M318.7 152.5h0M262.3 159.1h0M245.6 168.3h0M238.4 173.9h0M239.8 174.4h0M279.6 176.5h0M261.3 185.9h0M261.5 186.1h0M290.6 189.5h0M233.3 194.2h0M291.6 197.0h0M247.8 204.3h0M238.8 206.5h0" stroke="#8b1860" stroke-width="2.0" stroke-linecap="round"/><path d="M277.8 112.7h0M278.1 155.1h0M275.0 155.0h0M316.1 157.5h0M256.8 166.7h0M244.4 167.8h0M265.9 171.7h0M291.2 172.2h0M290.8 189.5h0M294.1 194.6h0M249.1 204.3h0M241.0 206.1h0" stroke="#c22286" stroke-width="3.2" stroke-linecap="round"/><path d="M276.7 112.9h0M264.2 116.4h0M261.9 115.8h0M270.2 116.6h0M285.5 118.6h0M285.5 118.7h0M256.0 125.9h0M279.3 125.1h0M279.0 126.2h0M293.1 127.7h0M293.2 126.6h0M293.6 133.1h0M293.2 133.4h0M285.2 142.4h0M292.3 149.3h0M292.8 148.4h0M294.6 147.4h0M290.9 153.1h0M291.1 153.5h0M276.6 156.6h0M277.1 155.6h0M319.2 155.5h0M318.9 152.6h0M265.1 159.3h0M318.0 156.5h0M257.0 165.7h0M263.7 169.8h0M291.9 170.9h0M239.6 173.7h0M239.2 171.8h0M279.4 174.9h0M262.1 187.1h0M261.7 186.1h0M263.4 186.2h0M248.9 202.3h0M239.0 206.3h0" stroke="#c22286" stroke-width="2.4" stroke-linecap="round"/><path d="M276.8 113.9h0M276.4 113.8h0M263.7 116.4h0M271.5 115.1h0M270.5 116.7h0M255.8 126.6h0M256.6 125.7h0M279.0 126.5h0M249.4 138.8h0M249.3 137.8h0M283.9 140.2h0M290.1 153.1h0M318.8 152.9h0M265.0 159.8h0M263.9 160.7h0M245.2 168.2h0M243.6 167.9h0M264.0 171.2h0M264.1 172.3h0M290.5 174.1h0M290.7 171.3h0M238.8 173.5h0M241.2 174.5h0M277.6 175.7h0M261.3 187.5h0M292.8 189.6h0M231.8 192.9h0M233.4 192.8h0M294.2 195.8h0M292.6 196.3h0M248.5 204.9h0" stroke="#c22286" stroke-width="2.0" stroke-linecap="round"/><path d="M276.6 113.8h0M264.4 116.3h0M269.7 115.6h0M280.2 126.8h0M293.6 125.6h0M293.0 126.0h0M248.7 137.6h0M283.3 140.8h0M317.6 155.0h0M318.9 153.5h0M316.8 157.1h0M317.0 156.1h0M257.9 165.3h0M257.4 167.0h0M255.9 165.0h0M243.5 168.0h0M265.1 171.4h0M265.2 171.8h0M291.1 172.3h0M289.6 171.6h0M238.4 172.3h0M279.4 175.7h0M290.8 196.5h0M292.1 196.7h0M249.1 204.4h0" stroke="#8b1860" stroke-width="2.4" stroke-linecap="round"/><path d="M278.2 114.5h0M278.1 114.2h0M279.8 117.8h0M279.3 119.0h0M266.8 123.6h0M273.6 123.1h0M311.9 122.4h0M311.3 123.6h0M300.9 128.0h0M311.2 128.3h0M287.0 136.3h0M301.5 139.3h0M243.7 141.8h0M245.0 145.0h0M253.7 142.1h0M305.1 150.2h0M286.3 153.9h0M274.4 164.4h0M284.2 165.4h0M240.2 168.6h0M268.1 171.2h0M266.8 171.0h0M310.8 176.2h0M246.5 178.5h0M315.4 176.0h0M315.0 176.5h0M316.0 176.3h0M234.7 184.7h0M237.5 192.7h0M240.5 195.0h0M259.5 196.3h0M238.3 200.3h0M227.9 206.5h0" stroke="#a11818" stroke-width="2.4" stroke-linecap="round"/><path d="M277.7 114.3h0M273.7 123.0h0M311.5 123.7h0M312.4 123.4h0M298.4 127.7h0M300.2 128.0h0M310.0 128.2h0M308.5 130.0h0M311.8 129.8h0M308.1 129.8h0M300.6 138.9h0M301.0 139.6h0M301.2 141.6h0M253.0 140.4h0M276.5 144.0h0M276.9 142.0h0M303.0 143.4h0M278.6 145.5h0M240.0 146.3h0M240.1 147.3h0M256.1 152.0h0M261.4 155.8h0M284.7 154.4h0M285.6 155.4h0M251.5 158.5h0M242.2 165.3h0M238.9 164.5h0M275.4 164.5h0M282.5 164.6h0M240.1 167.1h0M310.4 176.6h0M310.5 173.1h0M313.1 175.2h0M245.4 178.0h0M316.5 176.9h0M246.5 180.6h0M235.0 185.3h0M234.6 184.6h0M245.8 186.8h0M245.3 184.2h0M276.4 185.8h0M236.3 191.0h0M236.4 191.9h0M235.7 191.4h0M240.6 195.9h0M282.0 193.2h0M280.3 196.9h0M237.5 200.6h0M228.9 208.5h0M230.8 205.8h0" stroke="#e02222" stroke-width="2.8" stroke-linecap="round"/><path d="M278.9 114.1h0M279.9 114.4h0M281.5 118.2h0M280.3 117.6h0M266.9 122.3h0M272.5 123.6h0M277.1 121.8h0M311.5 124.3h0M311.2 122.9h0M300.3 129.3h0M289.6 138.0h0M300.6 141.8h0M245.7 142.7h0M242.9 144.4h0M255.0 140.1h0M303.3 142.6h0M303.5 142.7h0M280.0 144.5h0M303.1 148.9h0M255.4 153.1h0M317.8 152.3h0M261.8 155.5h0M286.2 154.1h0M275.1 165.0h0M274.4 164.5h0M274.9 165.4h0M282.4 164.4h0M290.8 165.9h0M291.2 165.0h0M238.8 168.3h0M269.3 173.1h0M268.1 171.9h0M266.7 171.4h0M287.9 172.3h0M285.2 172.7h0M310.9 173.9h0M246.2 177.7h0M246.3 178.1h0M244.3 179.4h0M314.8 178.5h0M246.3 181.3h0M246.4 180.6h0M276.0 186.1h0M275.2 185.7h0M308.6 187.0h0M307.2 187.5h0M237.7 192.4h0M239.4 195.4h0M242.2 194.8h0M282.2 193.5h0M259.1 195.4h0M259.4 196.7h0M263.3 197.7h0M283.1 197.4h0M281.9 194.7h0M237.0 201.0h0M237.5 201.1h0M270.0 202.5h0M268.6 201.5h0" stroke="#e02222" stroke-width="2.4" stroke-linecap="round"/><path d="M277.8 115.9h0M279.9 117.7h0M264.2 123.8h0M265.3 122.9h0M273.9 122.1h0M273.5 123.0h0M275.8 123.2h0M301.4 127.9h0M287.5 136.5h0M287.4 138.1h0M244.7 143.8h0M254.4 143.2h0M253.2 141.5h0M276.4 143.1h0M276.5 145.1h0M303.4 142.2h0M278.4 145.2h0M277.8 146.3h0M240.1 147.9h0M240.7 146.5h0M303.1 150.4h0M304.5 149.2h0M303.3 149.5h0M255.1 152.0h0M255.4 152.2h0M317.1 151.6h0M315.4 152.0h0M318.9 150.7h0M263.1 156.2h0M281.7 163.4h0M280.5 164.9h0M292.3 165.2h0M239.0 167.8h0M287.8 172.2h0M237.1 184.6h0M234.0 186.6h0M245.0 185.1h0M246.2 185.6h0M260.4 198.4h0M258.3 196.2h0M263.2 197.8h0M282.1 196.5h0M239.0 202.0h0M268.3 199.4h0M267.7 200.7h0" stroke="#e02222" stroke-width="2.0" stroke-linecap="round"/><path d="M278.6 115.0h0M311.9 123.7h0M300.2 129.6h0M299.2 128.4h0M287.5 138.0h0M300.9 140.0h0M302.6 140.2h0M255.7 141.8h0M303.1 142.0h0M304.7 142.3h0M301.9 143.1h0M278.2 144.8h0M302.9 148.0h0M305.1 149.2h0M315.7 152.0h0M316.4 151.1h0M263.2 157.6h0M284.7 155.5h0M250.3 157.1h0M250.2 156.1h0M241.3 164.5h0M273.6 164.5h0M291.3 163.9h0M238.8 166.4h0M246.5 179.1h0M246.8 180.7h0M235.8 186.3h0M236.4 185.4h0M245.1 185.1h0M246.8 184.1h0M277.3 187.3h0M306.8 189.0h0M307.9 188.2h0M236.5 192.6h0M240.8 193.4h0M241.2 194.5h0M282.3 193.5h0M263.8 196.7h0M282.2 196.4h0M238.2 202.3h0M268.0 201.1h0M269.3 200.2h0" stroke="#a11818" stroke-width="2.0" stroke-linecap="round"/><path d="M282.6 113.9h0M269.4 130.2h0M269.5 129.9h0M272.5 129.1h0M272.5 128.4h0M272.9 128.7h0M305.7 130.1h0M305.6 128.6h0M306.8 142.7h0M280.4 152.8h0M279.8 151.5h0M285.9 153.9h0M293.4 151.5h0M241.2 160.8h0M254.1 162.8h0M259.6 164.6h0M310.7 166.6h0M258.4 174.2h0M260.1 175.0h0M271.3 174.4h0M270.3 174.0h0M263.8 177.7h0M287.8 176.6h0M263.4 183.1h0M254.2 190.8h0M259.4 191.1h0M304.9 189.0h0M265.0 192.8h0M264.8 194.0h0M250.2 197.3h0" stroke="#5f7aa2" stroke-width="2.4" stroke-linecap="round"/><path d="M283.6 115.8h0M283.0 115.4h0M255.9 129.8h0M268.5 129.7h0M305.2 131.0h0M281.8 132.3h0M254.8 150.9h0M252.9 152.6h0M281.5 151.5h0M280.3 150.0h0M279.6 151.3h0M285.2 153.2h0M294.6 151.5h0M239.5 162.4h0M254.4 161.0h0M253.7 163.0h0M257.8 165.0h0M270.2 174.3h0M264.9 183.4h0M286.7 187.9h0M253.4 191.9h0M259.5 192.1h0M307.1 189.0h0M304.0 190.9h0M264.6 193.0h0M266.6 193.7h0M248.2 198.5h0" stroke="#84aae2" stroke-width="2.4" stroke-linecap="round"/><path d="M282.9 113.7h0M257.7 130.7h0M269.4 130.7h0M268.9 129.2h0M271.9 130.5h0M272.6 129.3h0M305.7 128.6h0M283.0 131.7h0M284.4 132.8h0M307.8 141.8h0M306.7 141.1h0M254.1 150.7h0M253.4 152.0h0M286.5 151.9h0M295.1 150.7h0M295.0 152.5h0M240.1 160.8h0M240.3 158.7h0M255.3 162.3h0M255.7 162.9h0M254.0 164.7h0M252.6 164.0h0M260.4 164.0h0M312.2 166.8h0M260.1 176.1h0M258.5 173.7h0M271.3 175.5h0M270.5 174.3h0M262.8 177.3h0M264.8 183.4h0M264.4 184.4h0M263.2 184.2h0M286.1 188.4h0M254.2 191.5h0M260.8 190.7h0M306.7 189.2h0M264.9 193.6h0M265.2 195.4h0M249.7 198.0h0" stroke="#84aae2" stroke-width="2.0" stroke-linecap="round"/><path d="M283.6 112.5h0M269.6 129.5h0M283.1 131.9h0M308.1 141.6h0M287.5 152.7h0M294.8 150.0h0M241.8 159.5h0M252.8 164.2h0M311.9 165.8h0M265.4 183.7h0M253.2 189.8h0M259.9 190.4h0M264.7 194.7h0M250.1 198.8h0" stroke="#5f7aa2" stroke-width="2.8" stroke-linecap="round"/><path d="M283.4 112.8h0M270.7 131.5h0M304.9 129.6h0M284.8 131.8h0M308.9 140.5h0M279.7 151.4h0M285.0 153.7h0M240.3 160.6h0M251.7 165.4h0M260.6 166.0h0M311.6 165.8h0M310.0 164.4h0M260.4 175.0h0M260.2 174.0h0M269.4 175.5h0M262.0 177.4h0M263.8 176.5h0M262.8 176.2h0M289.6 177.4h0M289.7 178.2h0M287.1 187.5h0M284.3 188.6h0M253.4 190.0h0M261.0 192.5h0M260.0 189.3h0M306.3 189.4h0M248.5 197.7h0" stroke="#84aae2" stroke-width="2.8" stroke-linecap="round"/><path d="M282.9 114.4h0M256.4 130.6h0M257.6 130.6h0M259.4 129.9h0M306.3 128.3h0M281.7 131.1h0M284.4 131.0h0M309.5 142.1h0M254.7 150.9h0M253.6 151.1h0M253.4 150.3h0M285.0 153.0h0M294.2 151.3h0M254.7 162.0h0M252.7 161.2h0M254.4 163.0h0M251.5 164.6h0M259.4 164.6h0M258.4 163.3h0M309.8 165.9h0M259.5 176.1h0M271.6 174.4h0M264.4 174.7h0M288.8 179.3h0M285.1 187.4h0M285.2 188.7h0M260.0 190.9h0M306.5 191.1h0M248.1 198.9h0" stroke="#5f7aa2" stroke-width="2.0" stroke-linecap="round"/><path d="M264.4 116.4h0M269.3 115.0h0M293.6 148.3h0M265.3 158.7h0M277.7 176.0h0M233.3 192.4h0M234.3 194.7h0" stroke="#8b1860" stroke-width="3.2" stroke-linecap="round"/><path d="M263.4 117.3h0M268.1 116.7h0M283.6 119.1h0M285.6 120.6h0M257.0 124.8h0M277.8 126.2h0M292.5 126.6h0M294.9 125.8h0M292.7 132.7h0M293.4 133.7h0M249.2 139.0h0M247.8 138.4h0M283.6 141.1h0M283.5 141.3h0M293.5 148.8h0M291.3 147.6h0M291.4 147.9h0M295.4 146.3h0M296.5 146.5h0M291.2 151.8h0M319.3 153.9h0M263.9 157.8h0M316.6 156.4h0M315.5 158.8h0M255.1 166.0h0M257.1 165.8h0M243.9 168.4h0M280.2 175.4h0M279.4 177.6h0M291.0 190.2h0M289.1 188.7h0M233.6 193.0h0M234.0 193.8h0M292.9 196.1h0M248.7 205.4h0M239.2 207.3h0M239.9 206.1h0" stroke="#c22286" stroke-width="2.8" stroke-linecap="round"/><path d="M266.2 115.3h0M311.9 126.0h0M310.4 125.0h0M313.7 130.6h0M256.7 131.6h0M305.4 133.9h0M291.7 135.1h0M281.9 138.9h0M282.1 140.2h0M293.1 138.9h0M294.4 145.7h0M255.6 149.7h0M266.5 147.5h0M316.7 148.7h0M246.4 154.3h0M296.1 155.0h0M287.4 158.7h0M317.2 162.6h0M271.9 164.7h0M247.3 168.9h0M264.0 167.5h0M303.8 174.4h0M244.7 179.7h0M244.5 181.3h0M244.1 181.0h0M310.1 185.7h0M247.9 198.1h0M267.2 201.0h0M231.4 204.9h0M256.7 202.2h0M276.0 204.6h0M243.4 212.8h0" stroke="#401876" stroke-width="2.8" stroke-linecap="round"/><path d="M266.6 116.2h0M311.1 127.3h0M311.3 126.7h0M255.8 129.5h0M256.0 129.0h0M313.7 130.5h0M314.4 129.3h0M255.2 131.4h0M257.8 132.8h0M265.2 132.9h0M305.8 133.5h0M306.9 132.1h0M290.7 134.8h0M262.1 139.5h0M280.2 139.1h0M290.1 138.4h0M292.4 141.4h0M291.3 139.4h0M271.3 145.4h0M271.0 144.7h0M271.5 145.3h0M256.2 148.7h0M266.9 148.2h0M268.2 147.6h0M318.4 149.1h0M245.7 151.4h0M288.2 157.9h0M287.6 157.6h0M246.5 170.0h0M247.3 168.4h0M260.6 168.1h0M260.4 166.9h0M259.0 167.4h0M265.2 167.6h0M277.8 167.8h0M275.8 166.8h0M303.2 174.3h0M301.8 174.4h0M303.2 174.6h0M245.4 181.1h0M244.1 181.9h0M310.1 184.7h0M308.8 184.9h0M229.0 188.3h0M245.2 185.0h0M273.1 193.3h0M273.3 193.2h0M227.6 196.3h0M266.3 198.9h0M273.3 198.6h0M231.6 204.1h0M245.0 204.2h0M245.1 201.9h0M255.9 205.0h0M275.5 201.2h0" stroke="#5a22a4" stroke-width="2.8" stroke-linecap="round"/><path d="M265.5 115.0h0M266.3 114.2h0M311.5 124.6h0M256.5 130.7h0M255.1 129.0h0M313.6 129.8h0M264.4 133.2h0M265.3 135.5h0M264.3 133.5h0M271.7 134.4h0M270.7 135.2h0M318.0 134.9h0M318.4 136.4h0M318.3 135.1h0M259.7 138.6h0M260.6 137.9h0M281.6 140.1h0M272.0 147.0h0M295.2 146.3h0M294.8 146.3h0M256.2 148.4h0M267.5 146.7h0M245.8 153.1h0M246.2 152.7h0M296.1 154.1h0M296.1 152.5h0M296.3 153.5h0M294.5 154.1h0M272.0 164.8h0M272.8 164.1h0M272.1 165.0h0M248.9 167.6h0M246.9 168.5h0M259.0 167.7h0M246.5 171.9h0M261.5 170.1h0M262.7 171.9h0M302.4 175.1h0M245.8 182.3h0M258.6 181.1h0M257.2 178.6h0M259.9 179.7h0M260.6 181.1h0M260.8 180.7h0M229.2 188.0h0M246.1 186.1h0M273.6 194.9h0M229.1 194.6h0M265.3 200.3h0M273.8 199.2h0M272.2 199.8h0M246.5 200.5h0M275.2 203.0h0M275.8 202.4h0" stroke="#5a22a4" stroke-width="2.4" stroke-linecap="round"/><path d="M264.6 114.7h0M255.6 129.2h0M255.3 130.3h0M313.5 129.0h0M257.3 131.6h0M263.9 134.2h0M271.1 134.6h0M318.8 134.1h0M318.3 135.7h0M318.5 137.4h0M261.7 140.9h0M271.2 145.3h0M270.1 146.2h0M293.8 143.4h0M256.1 148.7h0M267.5 146.9h0M317.5 149.1h0M286.7 158.4h0M317.6 160.4h0M271.6 164.1h0M249.0 168.1h0M245.9 168.5h0M259.0 168.4h0M244.7 171.9h0M245.6 172.4h0M244.4 172.2h0M261.9 171.4h0M257.9 180.1h0M261.0 181.8h0M261.5 181.8h0M307.7 184.2h0M228.5 188.6h0M229.1 187.8h0M228.5 186.5h0M245.8 186.5h0M274.8 193.5h0M247.3 197.9h0M246.4 198.1h0M265.4 197.6h0M266.5 198.7h0M273.9 200.1h0M273.9 198.6h0M275.0 198.5h0M243.0 213.6h0" stroke="#401876" stroke-width="2.0" stroke-linecap="round"/><path d="M265.7 115.1h0M257.0 131.9h0M256.0 130.7h0M270.3 133.2h0M306.5 135.0h0M291.5 135.4h0M318.3 135.6h0M263.0 139.7h0M281.8 141.6h0M282.6 140.6h0M291.4 138.3h0M294.8 146.8h0M294.4 144.2h0M256.4 149.0h0M317.3 147.7h0M246.3 151.1h0M285.3 158.9h0M286.0 158.3h0M315.7 159.9h0M316.3 160.8h0M318.5 160.3h0M262.2 166.8h0M264.1 167.3h0M276.0 167.0h0M276.1 167.5h0M246.5 170.8h0M246.6 171.8h0M261.0 171.5h0M261.3 170.2h0M245.2 179.6h0M256.8 178.8h0M261.5 181.5h0M262.5 181.3h0M309.4 184.8h0M228.5 186.1h0M246.1 187.1h0M247.2 185.2h0M230.3 195.3h0M244.4 197.8h0M246.4 198.0h0M244.6 198.8h0M265.3 200.3h0M266.8 197.5h0M272.3 198.4h0M232.9 204.4h0M229.8 203.9h0M232.2 204.0h0M245.9 202.8h0M256.6 203.9h0M256.5 204.9h0M257.4 205.4h0M245.1 214.0h0M244.8 212.1h0" stroke="#5a22a4" stroke-width="2.0" stroke-linecap="round"/><path d="M266.3 113.4h0M313.6 125.7h0M313.0 129.4h0M258.9 131.9h0M265.0 133.5h0M264.5 134.0h0M270.3 132.6h0M305.6 133.6h0M306.0 133.6h0M292.6 140.5h0M271.1 144.5h0M255.5 148.8h0M266.8 146.3h0M317.4 150.0h0M246.2 152.2h0M248.2 153.0h0M295.2 153.8h0M271.9 164.0h0M259.4 168.4h0M276.7 167.4h0M260.3 172.2h0M260.5 170.4h0M303.8 173.0h0M301.7 173.8h0M257.9 179.8h0M256.7 179.6h0M260.7 181.4h0M308.8 183.4h0M246.4 186.4h0M247.1 185.0h0M273.1 193.6h0M229.2 197.2h0M228.3 196.0h0M231.6 204.1h0M231.9 206.2h0M246.1 202.1h0M246.2 202.8h0M256.8 204.0h0M275.8 202.2h0M243.6 214.2h0" stroke="#401876" stroke-width="2.4" stroke-linecap="round"/><path d="M268.2 115.7h0M256.3 124.4h0M256.7 126.8h0M255.7 127.4h0M277.7 127.1h0M292.4 125.3h0M293.5 132.9h0M249.9 137.7h0M291.8 149.9h0M295.7 146.7h0M291.3 151.4h0M276.0 155.1h0M276.9 155.4h0M263.2 158.8h0M315.6 157.8h0M243.4 167.6h0M263.9 171.4h0M290.1 173.5h0M262.0 184.7h0M289.1 188.9h0M290.4 189.1h0M249.4 202.5h0M238.7 206.6h0M240.4 205.9h0" stroke="#8b1860" stroke-width="2.8" stroke-linecap="round"/><path d="M273.8 118.4h0M252.0 125.9h0M251.8 125.4h0M289.6 125.7h0M312.6 147.9h0M256.7 156.4h0M272.9 158.0h0M277.4 165.7h0M237.0 167.6h0M263.1 175.0h0M282.8 173.2h0M239.4 183.1h0M271.4 191.3h0M256.4 198.9h0M251.5 208.7h0" stroke="#a26318" stroke-width="3.2" stroke-linecap="round"/><path d="M273.1 118.9h0M272.5 117.3h0M272.7 116.9h0M258.5 119.0h0M252.9 124.1h0M264.8 127.8h0M263.9 124.9h0M291.1 126.1h0M278.1 133.3h0M247.5 147.2h0M259.3 154.0h0M256.2 155.0h0M257.9 154.9h0M258.9 162.1h0M256.7 160.2h0M280.6 160.9h0M279.0 164.0h0M237.5 167.8h0M279.3 170.3h0M262.9 175.7h0M263.6 176.7h0M281.7 173.9h0M236.3 178.1h0M262.7 176.9h0M262.7 176.4h0M262.1 177.5h0M271.6 178.8h0M271.2 181.9h0M271.4 190.5h0M271.1 190.4h0M300.4 190.7h0M301.7 190.6h0M300.7 192.2h0M238.6 199.7h0M239.3 198.1h0M250.8 206.1h0M268.6 206.0h0" stroke="#e28a22" stroke-width="2.4" stroke-linecap="round"/><path d="M270.6 117.1h0M254.1 126.2h0M264.2 125.3h0M290.2 126.2h0M290.0 126.2h0M290.1 126.2h0M277.8 132.5h0M246.1 147.9h0M246.7 146.9h0M314.8 149.3h0M258.8 156.9h0M259.3 158.9h0M274.9 157.5h0M274.8 157.8h0M276.3 158.4h0M258.1 161.2h0M256.5 161.5h0M280.4 160.6h0M281.1 163.5h0M280.1 164.6h0M318.0 166.5h0M319.4 165.8h0M311.0 168.5h0M264.2 176.3h0M281.0 174.0h0M261.1 177.7h0M270.1 180.5h0M270.9 179.6h0M299.0 191.6h0M251.0 206.6h0M268.8 205.0h0" stroke="#e28a22" stroke-width="2.8" stroke-linecap="round"/><path d="M273.1 117.7h0M272.6 117.0h0M259.0 117.8h0M262.7 126.8h0M262.6 126.1h0M263.4 125.6h0M290.5 125.6h0M289.3 124.5h0M277.9 133.0h0M247.6 147.4h0M275.0 156.8h0M276.2 157.6h0M257.5 161.5h0M280.3 161.8h0M320.3 164.1h0M238.0 169.1h0M310.8 168.5h0M312.5 167.3h0M279.0 170.6h0M236.6 174.7h0M262.9 175.2h0M236.6 177.3h0M261.0 177.8h0M260.7 176.8h0M271.0 177.8h0M270.8 178.5h0M269.7 180.8h0M270.4 180.1h0M240.5 182.7h0M299.1 191.1h0M299.0 189.3h0M299.5 192.1h0M239.9 201.0h0M239.9 199.6h0M256.8 201.8h0M250.3 205.3h0M268.8 206.8h0" stroke="#a26318" stroke-width="2.4" stroke-linecap="round"/><path d="M275.8 117.4h0M288.2 116.2h0M258.7 133.6h0M266.5 134.8h0M269.3 136.9h0M299.3 142.0h0M299.7 145.3h0M259.4 145.4h0M297.5 152.2h0M298.2 153.6h0M244.4 157.1h0M253.7 154.3h0M254.6 157.3h0M310.8 154.4h0M311.3 153.5h0M311.6 156.3h0M260.4 160.3h0M300.0 159.4h0M321.5 160.3h0M244.5 161.9h0M267.9 161.7h0M275.0 160.9h0M309.7 161.2h0M310.5 161.4h0M273.6 168.4h0M304.2 167.8h0M299.4 174.2h0M300.1 175.2h0M287.9 182.8h0M270.6 185.7h0M288.4 184.5h0M286.2 183.6h0M253.9 190.3h0M234.0 197.5h0M234.3 197.4h0M290.9 195.0h0M264.0 207.2h0M231.2 209.0h0" stroke="#9e9815" stroke-width="2.8" stroke-linecap="round"/><path d="M279.9 117.3h0M265.1 122.9h0M265.7 123.7h0M273.4 123.8h0M273.2 123.0h0M278.6 122.5h0M278.5 120.1h0M243.3 143.9h0M253.2 142.2h0M275.4 141.4h0M278.6 143.2h0M240.6 147.6h0M255.6 152.7h0M255.1 153.5h0M317.6 150.7h0M260.7 156.7h0M261.6 155.7h0M285.1 155.5h0M282.5 164.2h0M290.9 165.7h0M239.3 167.4h0M286.5 172.9h0M287.1 170.9h0M310.5 174.2h0M245.7 177.4h0M247.1 185.5h0M274.8 185.4h0M307.9 187.7h0M283.0 192.0h0M280.4 192.2h0M258.7 197.4h0M259.7 197.2h0M264.1 197.3h0M282.1 196.5h0M268.4 201.8h0" stroke="#a11818" stroke-width="2.8" stroke-linecap="round"/><path d="M279.3 118.5h0M264.7 124.1h0M277.4 121.4h0M275.2 121.9h0M288.0 137.0h0M242.9 143.1h0M261.4 155.9h0M285.0 155.6h0M250.2 156.3h0M249.7 158.0h0M250.5 158.4h0M240.0 163.3h0M241.0 164.2h0M291.3 164.7h0M239.2 166.7h0M269.5 171.2h0M285.5 173.1h0M314.9 176.3h0M315.2 178.4h0M246.5 180.2h0M275.8 185.5h0M307.4 186.6h0M307.9 188.1h0M240.5 194.6h0M280.6 192.8h0M282.0 193.4h0M264.1 197.9h0M263.3 198.4h0M230.3 206.6h0M230.1 207.2h0" stroke="#e02222" stroke-width="3.2" stroke-linecap="round"/><path d="M285.1 115.7h0M288.6 123.3h0M288.5 123.2h0M305.9 124.0h0M305.9 124.1h0M251.3 130.4h0M301.7 128.8h0M267.1 133.7h0M307.4 131.2h0M312.4 131.9h0M312.6 132.9h0M262.4 136.5h0M309.2 140.2h0M265.1 144.7h0M305.2 144.8h0M283.2 147.2h0M240.8 151.4h0M311.0 149.4h0M309.2 149.4h0M308.9 150.4h0M318.3 152.1h0M320.3 153.6h0M267.5 154.4h0M270.8 158.0h0M313.4 164.4h0M268.8 164.6h0M270.0 163.5h0M288.9 166.7h0M289.8 169.2h0M248.9 171.8h0M272.0 172.1h0M282.1 170.3h0M311.5 172.1h0M272.9 172.2h0M293.3 174.4h0M232.9 177.8h0M229.9 178.0h0M285.1 180.8h0M285.0 179.4h0M295.3 181.0h0M305.7 180.7h0M311.0 179.7h0M310.3 180.3h0M249.4 185.0h0M296.1 186.5h0M275.8 189.8h0M236.6 197.7h0M252.9 195.6h0M256.5 195.4h0M296.9 194.7h0M298.1 195.6h0M239.7 212.4h0M254.8 212.4h0" stroke="#18188d" stroke-width="2.0" stroke-linecap="round"/><path d="M284.5 114.5h0M282.7 116.0h0M288.7 123.1h0M307.6 122.9h0M276.2 126.2h0M275.4 125.8h0M302.0 128.9h0M312.8 132.8h0M305.2 146.0h0M305.6 145.7h0M306.5 145.9h0M240.8 152.1h0M319.9 153.2h0M267.2 155.7h0M271.7 158.4h0M307.6 161.6h0M306.0 160.6h0M313.3 160.9h0M234.8 166.8h0M268.8 170.0h0M248.2 173.5h0M248.9 172.1h0M248.8 170.7h0M280.7 171.6h0M281.4 169.5h0M311.4 171.7h0M296.8 175.5h0M284.0 180.2h0M297.6 181.1h0M306.5 179.8h0M307.0 180.9h0M249.1 186.3h0M284.0 184.0h0M298.8 184.4h0M298.7 185.0h0M298.7 183.4h0M273.0 186.9h0M275.6 191.1h0M300.0 191.9h0M237.3 198.5h0M254.6 195.2h0M253.9 195.8h0M252.7 195.9h0M257.3 195.9h0M258.0 196.5h0M295.5 195.9h0M297.1 197.0h0M240.9 211.9h0M241.5 212.0h0M254.8 212.3h0M252.9 213.5h0" stroke="#2222c4" stroke-width="2.0" stroke-linecap="round"/><path d="M285.0 114.8h0M288.9 124.5h0M284.6 128.4h0M282.8 130.1h0M302.6 129.9h0M308.7 132.5h0M311.0 131.9h0M262.2 135.5h0M302.3 136.3h0M307.8 138.9h0M284.9 150.3h0M241.6 151.9h0M320.7 154.2h0M267.3 154.3h0M270.8 159.0h0M308.8 161.5h0M307.2 162.2h0M311.8 162.8h0M268.1 163.4h0M233.6 168.2h0M233.7 167.7h0M233.0 168.3h0M290.5 169.8h0M248.9 171.8h0M270.6 172.1h0M295.1 173.8h0M251.0 177.2h0M285.7 182.8h0M305.6 180.9h0M283.6 184.5h0M297.8 184.8h0M298.2 184.0h0M299.9 184.7h0M273.5 185.8h0M296.5 186.6h0M275.2 190.8h0M238.0 198.1h0M237.2 197.7h0M254.4 197.3h0M256.6 197.9h0M296.3 195.8h0M240.0 211.4h0M253.4 211.6h0" stroke="#18188d" stroke-width="2.4" stroke-linecap="round"/><path d="M285.0 115.0h0M283.8 113.8h0M287.8 122.7h0M288.4 123.4h0M274.5 125.8h0M275.5 128.6h0M251.8 128.6h0M284.9 130.1h0M301.0 128.0h0M267.2 133.0h0M309.0 132.1h0M307.6 132.8h0M312.4 132.3h0M311.8 133.4h0M264.0 135.5h0M262.8 134.5h0M262.6 136.1h0M261.8 137.9h0M303.7 135.8h0M265.8 147.1h0M282.1 148.3h0M241.8 152.5h0M241.5 149.9h0M242.0 153.4h0M309.3 150.9h0M310.4 151.0h0M319.8 152.7h0M319.6 152.8h0M320.0 153.1h0M266.5 154.1h0M271.3 157.6h0M271.3 159.4h0M307.8 161.6h0M308.2 161.5h0M269.0 165.0h0M268.9 164.9h0M233.4 166.4h0M231.9 167.9h0M232.8 169.8h0M271.0 168.5h0M288.1 167.0h0M290.7 167.3h0M272.0 172.7h0M311.8 172.5h0M274.1 172.7h0M294.8 173.0h0M229.7 178.8h0M251.0 176.4h0M285.3 180.7h0M296.0 181.6h0M305.7 180.9h0M310.3 180.7h0M308.6 181.6h0M249.3 184.3h0M283.8 183.7h0M283.8 183.7h0M273.8 187.9h0M296.1 186.0h0M294.7 185.8h0M296.5 186.6h0M276.0 190.6h0M237.5 197.7h0M238.3 197.7h0M238.2 199.5h0M254.6 196.7h0M257.5 197.4h0M294.8 196.3h0M297.9 195.0h0M240.2 213.2h0M239.8 214.1h0M253.3 213.8h0M253.9 210.8h0" stroke="#2222c4" stroke-width="2.4" stroke-linecap="round"/><path d="M285.3 114.4h0M304.7 125.2h0M275.1 127.0h0M276.3 127.8h0M274.1 125.3h0M252.7 130.9h0M284.2 130.8h0M301.4 128.4h0M267.5 133.6h0M307.4 132.9h0M304.3 136.0h0M310.2 140.7h0M265.5 143.8h0M265.2 147.3h0M305.7 145.1h0M285.4 148.3h0M241.4 151.3h0M267.1 154.5h0M273.2 159.1h0M307.5 161.9h0M314.5 162.9h0M268.4 168.1h0M271.4 169.4h0M271.1 172.0h0M311.0 171.4h0M273.9 175.0h0M275.0 173.4h0M295.5 175.4h0M231.7 177.4h0M249.2 176.8h0M306.7 182.0h0M312.3 180.4h0M249.8 184.5h0M249.9 184.8h0M275.6 186.4h0M272.5 185.7h0M276.2 192.7h0M298.2 194.3h0M298.7 192.9h0M299.9 192.2h0M254.3 195.7h0M258.5 194.8h0M240.3 213.4h0M254.2 210.7h0" stroke="#18188d" stroke-width="2.8" stroke-linecap="round"/><path d="M289.1 114.5h0M291.5 114.7h0M295.9 122.5h0M296.4 123.6h0M266.2 129.9h0M266.4 130.5h0M264.7 136.5h0M266.1 135.1h0M269.4 134.6h0M300.4 143.4h0M257.2 145.5h0M256.6 144.9h0M259.0 144.7h0M299.1 145.4h0M298.8 153.2h0M243.6 155.9h0M246.2 154.9h0M245.2 155.5h0M254.3 154.6h0M309.9 155.8h0M261.9 160.6h0M260.3 159.3h0M282.5 157.9h0M297.2 160.6h0M314.0 158.9h0M268.2 162.1h0M266.6 161.8h0M272.9 159.5h0M274.6 162.1h0M272.6 161.1h0M302.8 167.5h0M303.6 169.1h0M238.1 171.0h0M239.1 171.3h0M299.1 174.8h0M278.9 179.8h0M280.1 181.1h0M287.0 179.8h0M287.7 181.2h0M271.0 184.6h0M287.2 184.3h0M287.4 183.9h0M290.4 183.3h0M253.4 188.7h0M254.4 188.0h0M269.2 190.3h0M268.0 189.2h0M285.4 189.4h0M285.0 189.6h0M233.2 198.1h0M268.5 196.8h0M290.4 196.5h0M289.9 197.2h0M265.8 207.4h0M242.7 208.5h0" stroke="#dcd41e" stroke-width="2.8" stroke-linecap="round"/><path d="M257.2 118.8h0M256.8 119.7h0M308.5 125.5h0M307.6 126.7h0M308.2 126.0h0M277.6 130.2h0M278.2 128.4h0M302.0 144.9h0M257.9 148.2h0M276.5 150.0h0M277.1 149.7h0M236.8 156.3h0M235.4 156.3h0M289.7 155.0h0M290.1 157.1h0M252.6 163.5h0M296.9 164.1h0M297.9 164.6h0M266.1 168.2h0M267.8 168.6h0M305.1 177.7h0M305.5 177.7h0M292.7 181.7h0M292.7 179.3h0M240.7 183.8h0M242.2 184.6h0M301.5 186.1h0M239.6 191.2h0" stroke="#907446" stroke-width="2.0" stroke-linecap="round"/><path d="M257.2 118.2h0M257.6 119.0h0M278.8 129.7h0M310.8 134.9h0M310.6 135.3h0M271.6 142.3h0M301.5 145.9h0M303.4 146.0h0M259.2 149.1h0M277.1 148.6h0M276.0 148.7h0M236.4 155.5h0M236.8 155.8h0M303.3 161.8h0M302.4 162.3h0M305.8 161.5h0M297.6 165.1h0M297.0 164.6h0M251.8 167.7h0M267.3 165.8h0M295.4 170.0h0M243.8 174.0h0M304.4 178.0h0M241.4 184.7h0M302.1 186.5h0M239.4 192.7h0M239.0 189.7h0M237.6 191.3h0M265.8 189.0h0M264.5 191.4h0M253.6 194.1h0M231.4 196.2h0" stroke="#c8a262" stroke-width="2.8" stroke-linecap="round"/><path d="M258.3 118.5h0M306.5 125.7h0M279.9 128.3h0M310.9 134.4h0M272.8 142.5h0M302.7 147.4h0M237.0 155.5h0M235.5 155.2h0M291.9 156.3h0M290.7 155.0h0M293.1 154.8h0M290.7 158.8h0M290.0 157.6h0M251.4 162.6h0M251.0 162.8h0M303.8 161.1h0M298.0 166.1h0M250.3 167.3h0M266.9 167.6h0M266.6 167.2h0M292.8 172.1h0M293.7 171.1h0M305.1 178.1h0M304.3 177.2h0M242.4 183.0h0M302.0 188.5h0M302.1 187.7h0M266.2 190.2h0M253.7 194.8h0M229.6 196.0h0" stroke="#c8a262" stroke-width="2.4" stroke-linecap="round"/><path d="M255.8 118.8h0M310.2 136.1h0M269.7 143.2h0M271.7 141.4h0M302.3 145.9h0M291.6 154.7h0M290.1 157.8h0M297.0 164.1h0M250.8 167.9h0M293.7 170.4h0M291.9 170.2h0M246.4 172.5h0M242.9 183.8h0M302.1 188.2h0M264.6 190.2h0M264.9 191.4h0M253.9 194.3h0M253.6 194.2h0M231.9 197.4h0" stroke="#907446" stroke-width="2.8" stroke-linecap="round"/><path d="M256.2 117.7h0M306.6 125.4h0M307.0 128.2h0M278.4 127.6h0M278.4 129.4h0M271.0 142.1h0M270.3 141.6h0M303.0 145.1h0M255.8 147.5h0M258.5 147.6h0M256.0 146.9h0M291.1 157.3h0M290.1 156.9h0M249.7 162.0h0M250.6 162.2h0M297.7 165.1h0M252.7 168.2h0M251.3 167.4h0M266.3 166.5h0M244.4 173.9h0M244.5 172.7h0M305.0 177.2h0M291.9 180.5h0M292.2 179.4h0M291.5 179.7h0M241.6 184.9h0M241.6 184.1h0M302.4 186.7h0M263.6 188.4h0M252.5 194.4h0M230.9 197.1h0M230.9 197.5h0" stroke="#c8a262" stroke-width="2.0" stroke-linecap="round"/><path d="M260.9 120.4h0M259.0 119.3h0M254.2 126.4h0M277.1 134.0h0M277.9 132.9h0M314.7 149.3h0M314.3 148.6h0M258.2 156.8h0M280.5 162.0h0M279.1 164.5h0M317.6 165.0h0M237.0 167.7h0M309.8 167.0h0M310.1 166.9h0M309.3 168.4h0M279.2 171.3h0M277.9 168.9h0M235.2 174.8h0M236.7 174.3h0M237.0 175.4h0M263.8 176.2h0M282.6 176.0h0M238.0 177.7h0M270.9 178.1h0M270.6 180.8h0M240.8 182.8h0M239.4 182.8h0M240.7 184.2h0M239.5 183.7h0M272.4 190.5h0M271.7 190.2h0M239.7 200.5h0M239.8 199.5h0M254.1 200.4h0M257.0 199.9h0M257.2 201.5h0M250.5 209.2h0M250.3 208.4h0M268.4 207.4h0M269.3 205.9h0" stroke="#e28a22" stroke-width="2.0" stroke-linecap="round"/><path d="M261.4 118.8h0M316.2 149.5h0M257.8 156.0h0M258.4 157.0h0M257.3 156.2h0M257.1 162.8h0M257.5 160.6h0M280.6 162.3h0M320.3 165.6h0M278.7 170.4h0M279.0 170.5h0M236.1 174.8h0M282.2 174.8h0M279.9 174.2h0M238.2 178.0h0M260.9 175.9h0M271.3 191.6h0M240.0 199.0h0M268.7 204.8h0M268.2 204.7h0" stroke="#a26318" stroke-width="2.0" stroke-linecap="round"/><path d="M257.8 119.5h0M252.8 125.9h0M264.2 128.3h0M246.6 147.8h0M315.8 149.2h0M257.8 156.1h0M258.0 157.6h0M274.9 159.4h0M278.1 164.5h0M319.5 165.3h0M236.7 168.7h0M237.3 168.2h0M278.1 170.1h0M236.3 173.8h0M282.4 174.3h0M238.8 177.6h0M237.4 177.6h0M271.0 178.9h0M271.6 181.8h0M254.4 200.7h0" stroke="#e28a22" stroke-width="3.2" stroke-linecap="round"/><path d="M259.9 119.0h0M252.4 125.4h0M277.4 133.7h0M279.4 134.2h0M246.8 147.6h0M246.5 148.7h0M314.3 148.9h0M259.0 154.1h0M258.7 155.5h0M281.2 161.7h0M276.5 164.0h0M280.3 164.9h0M319.0 164.7h0M236.5 167.8h0M311.0 169.5h0M237.1 174.2h0M263.9 175.8h0M237.4 178.7h0M270.7 179.1h0M268.9 179.5h0M241.4 184.0h0M271.6 192.4h0M256.4 201.2h0M250.2 207.6h0" stroke="#a26318" stroke-width="2.8" stroke-linecap="round"/><path d="M264.5 121.0h0M264.4 119.7h0M272.2 120.5h0M271.6 121.8h0M289.1 128.9h0M289.8 132.4h0M272.9 139.2h0M319.5 137.7h0M288.1 150.2h0M246.5 158.6h0M238.9 164.5h0M233.4 171.5h0M265.7 188.1h0M266.2 187.9h0M229.3 200.6h0M230.5 201.1h0M230.5 201.1h0M232.6 199.6h0M284.7 200.9h0M235.2 208.7h0M254.8 208.8h0" stroke="#0c0c0c" stroke-width="2.4" stroke-linecap="round"/><path d="M264.5 118.8h0M264.2 119.1h0M262.7 121.3h0M271.6 120.2h0M278.3 118.8h0M283.1 120.0h0M300.2 118.6h0M288.4 129.9h0M289.6 129.0h0M286.9 128.0h0M289.4 127.1h0M289.8 133.3h0M271.3 138.3h0M319.6 138.0h0M318.7 137.3h0M282.0 145.2h0M284.9 145.6h0M286.3 144.4h0M273.9 148.4h0M287.4 149.1h0M288.3 148.2h0M280.8 154.7h0M246.6 157.5h0M248.0 162.4h0M239.1 164.6h0M233.6 171.4h0M254.7 171.4h0M272.9 182.5h0M274.1 180.5h0M274.1 179.8h0M226.1 187.3h0M226.3 187.7h0M265.8 187.5h0M266.6 187.1h0M271.9 194.2h0M228.8 199.5h0M234.2 198.4h0M233.2 200.0h0M285.3 200.3h0M229.7 204.0h0M259.7 205.1h0M258.8 205.6h0M236.2 208.0h0M235.5 210.3h0" stroke="#121212" stroke-width="2.0" stroke-linecap="round"/><path d="M263.3 120.0h0M278.0 120.0h0M290.3 132.9h0M289.6 133.7h0M290.3 132.4h0M244.5 140.2h0M246.9 139.8h0M318.2 140.2h0M254.3 144.9h0M254.7 143.6h0M283.6 145.3h0M281.8 145.7h0M282.6 144.2h0M274.5 147.4h0M288.9 150.2h0M300.4 154.0h0M237.4 165.9h0M233.4 170.5h0M232.7 172.7h0M252.1 170.9h0M274.0 180.7h0M225.2 189.4h0M267.5 187.9h0M266.1 189.2h0M229.1 200.3h0M230.8 199.5h0M286.0 200.9h0M285.4 200.8h0M228.3 202.7h0M284.0 202.6h0M253.7 209.6h0M253.4 210.9h0" stroke="#121212" stroke-width="2.4" stroke-linecap="round"/><path d="M263.4 118.0h0M270.5 120.2h0M283.5 120.7h0M282.4 120.8h0M299.9 119.1h0M288.5 128.5h0M288.8 131.8h0M289.2 131.3h0M319.2 140.0h0M283.5 143.9h0M282.8 144.4h0M287.3 144.8h0M281.3 155.5h0M281.8 153.9h0M299.2 156.2h0M302.2 156.1h0M246.7 158.2h0M246.2 160.6h0M247.4 160.8h0M239.3 166.4h0M238.9 164.3h0M254.2 171.0h0M273.3 182.8h0M226.7 185.7h0M266.4 189.4h0M276.3 193.0h0M271.5 195.6h0M270.2 194.6h0M232.7 200.2h0M284.9 200.3h0M285.2 201.0h0M284.5 201.9h0M257.9 206.5h0M253.4 209.6h0" stroke="#0c0c0c" stroke-width="2.0" stroke-linecap="round"/><path d="M268.8 120.9h0M286.1 122.5h0M303.1 120.8h0M296.3 126.6h0M253.6 133.9h0M279.2 140.8h0M271.9 140.4h0M294.0 142.8h0M314.7 142.3h0M312.6 142.5h0M283.6 151.3h0M283.8 153.9h0M248.5 157.5h0M248.8 156.2h0M292.0 163.0h0M266.3 166.8h0M303.1 165.0h0M302.4 165.0h0M304.0 166.0h0M276.8 173.3h0M236.1 176.3h0M274.3 178.4h0M274.2 176.4h0M285.9 178.8h0M231.7 180.9h0M236.8 181.6h0M280.9 186.6h0M277.1 197.3h0M275.0 198.1h0M241.2 202.1h0M242.6 200.1h0M232.0 204.9h0M261.2 210.4h0" stroke="#18575f" stroke-width="2.4" stroke-linecap="round"/><path d="M270.2 120.2h0M268.6 120.1h0M303.5 121.3h0M249.3 137.4h0M248.4 135.9h0M278.8 139.6h0M278.4 139.7h0M278.4 140.1h0M273.1 141.9h0M273.7 141.9h0M293.2 141.3h0M314.5 142.2h0M314.8 142.6h0M314.6 142.2h0M310.1 144.4h0M309.8 146.1h0M300.3 152.8h0M300.3 153.3h0M241.6 158.3h0M241.9 156.0h0M297.4 160.6h0M299.2 160.9h0M244.8 167.1h0M265.2 165.3h0M303.8 166.0h0M304.4 167.2h0M236.9 177.9h0M274.2 178.0h0M285.6 176.9h0M229.6 181.4h0M229.7 180.6h0M236.1 180.3h0M276.8 180.7h0M276.8 180.8h0M275.5 180.0h0M298.4 186.7h0M297.6 186.5h0M299.5 185.9h0M277.0 197.2h0M276.2 196.1h0M244.4 200.3h0M241.3 202.4h0M232.1 206.7h0M232.0 205.1h0M260.8 210.7h0" stroke="#227a84" stroke-width="2.4" stroke-linecap="round"/><path d="M268.5 120.4h0M269.5 120.0h0M283.6 123.6h0M285.0 121.6h0M304.0 123.7h0M281.7 126.9h0M283.0 126.5h0M281.8 126.2h0M283.1 125.9h0M252.9 133.6h0M253.4 135.1h0M250.0 135.6h0M278.7 140.0h0M272.1 140.2h0M292.6 141.1h0M311.0 145.0h0M282.8 151.4h0M280.8 151.7h0M300.6 153.0h0M248.8 156.6h0M249.5 157.1h0M241.4 157.3h0M292.7 163.0h0M297.5 160.5h0M244.6 165.4h0M278.2 174.9h0M278.2 174.4h0M235.7 178.1h0M274.0 178.1h0M285.8 179.2h0M286.2 177.3h0M230.9 179.6h0M236.8 181.7h0M276.5 180.5h0M252.8 187.1h0M254.3 186.6h0M250.5 186.1h0M282.6 187.0h0M287.6 187.9h0M233.7 206.2h0M261.1 210.3h0" stroke="#227a84" stroke-width="2.0" stroke-linecap="round"/><path d="M270.4 121.2h0M303.9 122.3h0M281.9 127.1h0M294.9 127.0h0M278.3 139.8h0M300.8 152.8h0M300.7 150.6h0M241.5 157.6h0M291.2 162.4h0M298.3 161.0h0M299.8 161.9h0M243.6 164.9h0M244.7 165.3h0M266.3 165.7h0M266.7 164.1h0M274.5 178.3h0M285.9 176.6h0M287.0 175.7h0M229.7 180.6h0M230.7 179.6h0M276.9 180.4h0M282.5 186.7h0M288.6 186.4h0M287.6 186.1h0M242.0 201.3h0M230.3 205.8h0M261.7 211.0h0" stroke="#18575f" stroke-width="2.0" stroke-linecap="round"/><path d="M270.8 119.7h0M281.7 126.6h0M282.7 126.1h0M297.5 125.9h0M252.7 135.4h0M253.3 135.4h0M249.1 136.6h0M272.6 141.7h0M272.7 141.6h0M295.2 141.2h0M315.9 142.6h0M308.0 146.3h0M309.7 145.3h0M299.1 153.9h0M249.1 155.3h0M241.2 158.2h0M244.9 166.6h0M277.2 175.7h0M235.8 177.4h0M235.7 177.3h0M234.7 182.0h0M277.0 179.9h0M276.0 180.6h0M251.6 187.1h0M252.0 185.0h0M281.8 186.9h0M298.7 186.6h0M299.7 187.2h0M298.5 185.7h0M275.7 196.0h0M232.1 204.9h0M262.7 208.6h0" stroke="#18575f" stroke-width="2.8" stroke-linecap="round"/><path d="M271.9 119.7h0M271.6 121.2h0M272.5 120.6h0M278.1 119.1h0M278.8 118.5h0M283.3 119.2h0M299.7 118.2h0M300.2 116.7h0M245.5 139.1h0M244.5 139.4h0M271.1 140.6h0M317.8 139.2h0M254.6 145.2h0M286.1 145.4h0M274.4 149.4h0M274.1 147.4h0M281.1 155.7h0M280.4 155.1h0M302.2 155.3h0M301.0 156.6h0M246.1 158.4h0M245.4 158.2h0M246.4 157.3h0M246.6 162.8h0M248.3 162.3h0M238.8 164.5h0M238.3 164.8h0M235.4 170.2h0M254.2 172.3h0M253.7 170.2h0M226.3 187.0h0M276.5 192.9h0M275.4 193.9h0M276.8 191.6h0M271.4 197.0h0M270.1 196.6h0M270.8 196.4h0M227.7 200.1h0M232.6 200.0h0M285.2 200.3h0M229.7 203.2h0M227.8 202.9h0M283.7 202.6h0M284.0 201.9h0M260.0 206.8h0M259.2 207.0h0M235.1 209.8h0M255.2 209.7h0" stroke="#121212" stroke-width="2.8" stroke-linecap="round"/><path d="M275.4 118.3h0M274.4 119.0h0M274.9 132.0h0M275.3 131.3h0M252.4 135.2h0M272.8 134.2h0M273.1 135.9h0M315.1 134.9h0M258.7 137.8h0M274.9 138.9h0M275.8 139.8h0M308.1 165.1h0M228.9 171.7h0M266.7 178.7h0M295.1 185.5h0M268.8 187.7h0M269.0 186.9h0M231.2 191.0h0M230.4 189.5h0M232.6 191.0h0M256.5 211.5h0" stroke="#6c9b28" stroke-width="2.0" stroke-linecap="round"/><path d="M276.3 117.7h0M274.5 118.0h0M260.4 131.8h0M262.7 131.4h0M276.0 132.3h0M275.0 131.0h0M302.1 132.1h0M251.8 134.8h0M252.9 136.6h0M273.5 134.7h0M273.1 133.5h0M315.0 135.3h0M315.3 134.1h0M257.3 139.4h0M274.6 139.5h0M275.0 138.3h0M298.0 149.8h0M297.3 149.7h0M298.2 148.2h0M310.0 166.2h0M307.8 166.2h0M292.6 167.3h0M255.2 174.4h0M256.6 172.4h0M266.8 177.5h0M302.2 178.1h0M224.8 180.0h0M295.2 184.6h0M241.5 187.0h0M240.2 187.4h0M268.4 187.2h0M231.5 190.2h0M260.7 202.9h0M236.1 205.5h0M255.0 210.2h0" stroke="#96d838" stroke-width="2.4" stroke-linecap="round"/><path d="M274.8 119.2h0M260.7 131.8h0M274.5 131.5h0M302.0 131.4h0M251.8 135.2h0M256.6 139.6h0M257.1 138.1h0M308.9 166.8h0M291.2 169.0h0M229.8 170.1h0M273.9 173.0h0M266.7 178.4h0M267.2 177.4h0M267.3 178.0h0M301.7 178.2h0M299.6 179.5h0M225.7 181.3h0M225.3 181.5h0M295.2 184.6h0M295.0 185.0h0M295.2 184.2h0M301.0 182.6h0M300.6 182.6h0M242.3 188.2h0M240.9 187.2h0M269.0 187.0h0M269.6 185.6h0M233.2 190.5h0M260.6 203.0h0M260.3 202.6h0M236.0 207.5h0M266.0 208.6h0M266.7 208.5h0" stroke="#96d838" stroke-width="2.0" stroke-linecap="round"/><path d="M274.5 120.0h0M261.0 132.3h0M276.5 130.7h0M251.1 133.6h0M315.8 133.5h0M308.6 165.5h0M229.9 170.3h0M256.0 173.2h0M300.4 179.4h0M302.5 182.6h0M269.2 188.0h0M231.5 190.3h0M232.0 192.1h0M255.6 210.8h0M257.2 208.9h0" stroke="#96d838" stroke-width="3.2" stroke-linecap="round"/><path d="M273.8 118.7h0M259.3 131.2h0M262.4 131.2h0M302.4 131.4h0M251.4 136.6h0M258.8 138.8h0M291.3 165.7h0M291.8 167.7h0M274.4 171.6h0M274.1 171.8h0M256.4 174.3h0M267.6 176.7h0M301.2 179.2h0M225.8 181.4h0M295.0 184.0h0M301.6 182.7h0M302.7 183.3h0M235.6 207.2h0" stroke="#6c9b28" stroke-width="2.4" stroke-linecap="round"/><path d="M278.7 119.9h0M283.5 121.8h0M289.6 128.3h0M246.2 141.1h0M253.3 145.4h0M281.3 144.8h0M286.8 146.0h0M275.2 149.1h0M273.6 148.0h0M273.4 149.6h0M288.5 149.2h0M288.5 149.4h0M280.4 155.2h0M301.7 156.5h0M246.1 157.3h0M246.4 162.1h0M252.8 169.3h0M273.8 181.0h0M275.5 194.5h0M231.1 199.6h0M227.8 203.2h0M283.6 202.8h0M259.4 208.2h0M235.6 209.6h0M252.2 210.3h0" stroke="#0c0c0c" stroke-width="2.8" stroke-linecap="round"/><path d="M279.7 118.6h0M278.8 119.1h0M300.1 120.2h0M298.1 118.9h0M244.4 139.0h0M244.6 139.7h0M273.1 139.5h0M272.5 138.6h0M319.5 139.1h0M254.2 144.9h0M252.8 144.0h0M286.0 145.4h0M233.8 173.0h0M233.8 171.7h0M253.2 172.4h0M274.4 179.2h0M225.6 189.5h0M226.0 188.1h0M277.9 192.9h0M271.8 196.9h0M285.9 200.8h0M228.7 203.2h0M227.2 202.4h0M258.6 207.6h0M237.3 209.9h0" stroke="#0c0c0c" stroke-width="3.2" stroke-linecap="round"/><path d="M282.1 120.3h0M283.6 120.0h0M299.8 119.1h0M272.6 139.4h0M273.5 139.2h0M253.8 146.8h0M288.1 145.8h0M288.8 148.9h0M280.8 154.8h0M301.0 154.4h0M244.8 161.7h0M275.4 192.5h0M228.4 200.8h0M283.6 202.7h0M235.6 210.0h0M254.2 209.3h0" stroke="#121212" stroke-width="3.2" stroke-linecap="round"/><path d="M291.2 120.8h0M290.7 121.1h0M258.8 122.8h0M243.6 149.6h0M310.9 150.2h0M283.4 168.8h0M229.5 175.4h0M266.3 174.8h0M267.5 175.0h0M252.8 184.9h0M306.5 183.4h0M303.9 185.0h0M257.7 190.8h0M293.5 189.2h0M285.2 192.8h0M290.9 194.0h0M243.0 202.7h0M264.2 204.6h0M264.1 204.4h0M246.0 204.5h0M273.6 205.6h0" stroke="#187324" stroke-width="2.4" stroke-linecap="round"/><path d="M290.4 120.3h0M290.6 121.1h0M258.9 124.4h0M291.1 123.9h0M289.3 124.6h0M298.1 120.3h0M242.5 146.6h0M310.4 149.9h0M258.8 151.5h0M259.2 152.5h0M316.4 163.5h0M315.4 165.8h0M282.4 167.8h0M230.9 173.7h0M229.1 175.1h0M267.1 174.7h0M267.1 174.7h0M312.6 175.0h0M238.1 181.3h0M240.4 181.2h0M253.7 185.6h0M252.9 183.0h0M305.3 185.9h0M258.6 189.4h0M258.2 191.9h0M257.7 192.0h0M294.1 189.5h0M248.7 194.1h0M248.8 193.0h0M286.7 198.0h0M287.0 196.9h0M242.6 204.6h0M243.0 202.8h0M242.5 205.6h0M245.5 206.3h0M246.5 206.8h0M273.3 206.6h0M273.5 205.9h0M239.3 208.5h0" stroke="#22a032" stroke-width="2.8" stroke-linecap="round"/><path d="M290.5 119.6h0M291.1 125.8h0M297.5 120.4h0M298.8 121.9h0M260.2 126.5h0M244.9 148.2h0M243.8 147.7h0M248.6 146.1h0M248.6 145.6h0M248.7 145.8h0M261.7 146.5h0M243.0 148.8h0M243.5 149.4h0M310.6 149.8h0M260.4 151.1h0M317.1 166.1h0M317.0 163.4h0M313.4 167.1h0M228.7 175.4h0M229.1 175.8h0M313.7 173.6h0M314.9 174.1h0M241.3 180.5h0M252.1 184.0h0M252.2 184.7h0M304.5 183.9h0M294.7 190.0h0M294.2 189.6h0M248.9 192.8h0M283.5 193.4h0M290.4 194.1h0M290.6 194.2h0M290.6 194.1h0M278.6 198.3h0M278.8 195.2h0M286.7 198.3h0M264.2 204.3h0M263.5 204.6h0M264.1 204.6h0M263.2 208.0h0M263.4 207.3h0M273.6 205.7h0M274.6 204.0h0M239.2 209.0h0" stroke="#22a032" stroke-width="2.0" stroke-linecap="round"/><path d="M291.2 120.6h0M291.2 124.1h0M290.4 123.6h0M299.4 122.1h0M244.3 146.7h0M247.1 146.0h0M261.5 146.2h0M260.4 153.0h0M316.7 164.8h0M317.4 164.5h0M313.8 167.1h0M229.1 173.8h0M312.5 173.7h0M313.3 175.5h0M240.0 183.0h0M240.0 182.2h0M251.8 183.1h0M295.4 189.3h0M250.3 192.1h0M251.3 192.6h0M283.9 192.7h0M291.6 193.0h0M286.4 197.2h0M285.3 197.5h0M265.4 204.8h0M246.4 207.3h0M273.2 206.2h0M237.6 209.2h0" stroke="#187324" stroke-width="2.8" stroke-linecap="round"/><path d="M290.0 122.6h0M258.9 123.2h0M259.4 124.8h0M259.1 123.2h0M292.3 122.7h0M298.6 123.1h0M260.1 123.8h0M245.2 146.3h0M247.4 145.2h0M261.8 147.6h0M261.9 146.2h0M241.5 149.4h0M311.8 148.9h0M310.4 149.6h0M284.0 167.5h0M283.0 167.4h0M284.5 168.4h0M311.6 166.4h0M313.5 167.1h0M314.0 167.5h0M265.8 174.8h0M266.9 174.3h0M314.8 174.3h0M239.4 180.4h0M293.9 189.3h0M251.2 192.7h0M251.5 192.2h0M282.6 192.2h0M290.9 194.3h0M286.9 198.3h0M243.1 204.6h0M263.7 203.2h0M244.9 205.6h0M264.2 206.5h0M236.8 209.7h0M237.9 208.9h0" stroke="#22a032" stroke-width="2.4" stroke-linecap="round"/><path d="M293.9 121.0h0M294.0 118.7h0M286.3 136.8h0M285.1 134.8h0M312.6 139.7h0M283.2 142.6h0M252.0 149.9h0M239.9 152.2h0M277.2 152.5h0M236.9 158.7h0M285.2 160.0h0M302.4 194.2h0M281.8 199.5h0M281.4 199.8h0" stroke="#84782e" stroke-width="3.2" stroke-linecap="round"/><path d="M294.3 120.8h0M286.9 136.4h0M298.4 136.1h0M283.4 141.4h0M243.2 146.0h0M238.2 153.1h0M287.6 162.7h0M288.2 161.9h0M287.6 160.9h0M297.2 182.4h0M277.3 185.8h0M302.3 193.4h0" stroke="#b8a840" stroke-width="2.0" stroke-linecap="round"/><path d="M292.8 121.9h0M294.1 121.1h0M285.0 135.6h0M242.8 145.2h0M316.2 145.4h0M314.5 145.3h0M317.1 146.0h0M239.9 152.4h0M240.6 151.9h0M237.2 160.7h0M284.3 161.0h0M278.4 185.1h0M304.4 193.1h0M281.7 200.2h0" stroke="#b8a840" stroke-width="3.2" stroke-linecap="round"/><path d="M294.2 120.7h0M285.7 135.5h0M300.3 135.3h0M312.2 140.9h0M312.4 138.6h0M312.0 141.3h0M281.9 141.6h0M242.5 146.2h0M242.9 147.2h0M239.6 150.4h0M274.1 151.0h0M275.5 153.0h0M273.4 152.8h0M275.2 151.9h0M237.1 160.4h0M283.5 160.0h0M287.6 161.9h0M299.3 182.9h0M278.5 185.6h0M281.5 200.6h0M269.9 200.9h0M268.5 202.2h0" stroke="#b8a840" stroke-width="2.8" stroke-linecap="round"/><path d="M293.7 121.3h0M298.6 135.8h0M318.1 145.2h0M252.4 149.3h0M238.8 152.0h0M274.8 153.5h0M273.9 151.5h0M237.9 159.2h0M287.2 162.7h0M287.8 163.8h0M299.7 181.3h0" stroke="#84782e" stroke-width="2.4" stroke-linecap="round"/><path d="M295.6 120.1h0M297.4 117.0h0M279.3 129.6h0M251.7 143.4h0M251.9 142.4h0M257.0 167.8h0M257.5 169.3h0M233.3 176.2h0M233.4 174.7h0M249.2 176.1h0M247.4 175.1h0M240.6 178.7h0M241.4 177.5h0M295.7 176.3h0M293.7 177.0h0M265.9 181.3h0M268.1 182.8h0M289.3 194.9h0M287.0 194.7h0" stroke="#154018" stroke-width="2.0" stroke-linecap="round"/><path d="M297.2 118.4h0M297.5 116.9h0M297.1 118.3h0M296.8 118.4h0M282.6 129.9h0M252.4 143.3h0M269.3 152.9h0M267.5 150.8h0M255.8 168.3h0M254.5 168.6h0M256.7 166.8h0M234.7 174.4h0M233.2 175.1h0M241.4 178.2h0M241.3 178.2h0M294.1 175.7h0M294.6 176.4h0M314.8 179.8h0M236.7 190.4h0M235.0 190.7h0M288.4 195.1h0M289.3 193.3h0" stroke="#1e5a22" stroke-width="2.4" stroke-linecap="round"/><path d="M297.7 118.8h0M270.0 153.0h0M234.6 191.0h0M288.3 193.8h0" stroke="#154018" stroke-width="2.4" stroke-linecap="round"/><path d="M302.7 119.1h0M262.3 122.7h0M306.2 136.4h0M247.6 142.0h0M271.5 152.6h0M271.1 153.7h0M304.3 151.6h0M250.8 154.6h0M294.4 158.0h0M296.7 162.7h0M315.7 170.7h0M287.6 174.5h0M290.6 174.6h0M250.0 181.2h0M251.0 190.6h0M251.6 188.8h0M295.3 193.1h0M241.1 196.8h0M277.5 201.3h0M278.3 200.5h0M250.9 203.3h0M271.0 202.9h0M273.3 201.2h0M255.1 206.9h0" stroke="#18184f" stroke-width="2.0" stroke-linecap="round"/><path d="M305.2 117.6h0M305.0 119.3h0M292.2 129.4h0M306.2 136.0h0M306.9 135.2h0M249.0 143.5h0M291.3 141.4h0M293.5 141.2h0M272.9 152.3h0M303.0 152.8h0M295.3 156.6h0M295.7 161.5h0M293.1 164.4h0M298.2 171.0h0M317.9 169.0h0M232.6 180.8h0M250.7 181.1h0M250.3 180.1h0M317.3 182.4h0M250.0 189.4h0M250.3 190.6h0M275.5 201.6h0M276.9 199.2h0M252.2 202.3h0M273.5 203.1h0" stroke="#22226e" stroke-width="2.8" stroke-linecap="round"/><path d="M304.9 117.8h0M261.1 124.4h0M260.1 124.1h0M287.7 135.9h0M307.6 136.5h0M252.3 139.2h0M252.0 141.2h0M247.3 141.0h0M292.2 143.7h0M312.4 146.5h0M271.3 152.4h0M305.6 153.3h0M302.3 153.5h0M303.2 151.5h0M252.6 154.7h0M250.5 153.3h0M296.2 161.9h0M296.5 161.9h0M293.8 164.8h0M293.4 165.4h0M298.0 171.3h0M297.3 171.7h0M315.7 169.4h0M316.8 169.8h0M315.6 168.5h0M287.5 174.5h0M289.0 174.6h0M290.8 173.6h0M292.4 174.3h0M291.4 172.7h0M306.9 176.9h0M232.0 180.5h0M233.1 180.8h0M251.3 181.3h0M251.3 180.8h0M243.6 186.7h0M243.7 187.1h0M244.6 187.0h0M294.7 193.9h0M241.6 196.8h0M252.0 202.9h0M252.0 202.8h0M272.3 204.4h0M254.3 205.3h0" stroke="#22226e" stroke-width="2.4" stroke-linecap="round"/><path d="M304.4 119.7h0M261.3 123.7h0M290.8 129.0h0M289.0 134.9h0M287.1 137.5h0M306.7 136.0h0M250.3 138.4h0M251.5 141.1h0M247.5 142.1h0M249.5 141.3h0M313.1 146.5h0M272.2 153.8h0M294.7 160.5h0M297.0 162.1h0M296.8 162.7h0M296.1 172.3h0M292.2 174.3h0M307.9 176.4h0M307.6 176.3h0M232.5 182.9h0M250.2 182.9h0M316.6 183.6h0M316.0 183.8h0M295.3 194.0h0M275.8 198.7h0M271.3 204.5h0" stroke="#18184f" stroke-width="2.8" stroke-linecap="round"/><path d="M304.7 119.2h0M291.6 127.7h0M287.3 136.4h0M286.8 136.1h0M251.2 139.4h0M248.4 140.7h0M291.0 143.6h0M312.4 145.2h0M312.1 144.2h0M270.6 152.7h0M271.5 154.0h0M252.8 154.5h0M294.6 160.3h0M294.6 158.7h0M297.8 163.3h0M292.8 165.7h0M300.0 171.5h0M288.3 174.6h0M308.5 175.1h0M307.8 176.8h0M308.4 176.5h0M315.9 183.2h0M316.2 183.1h0M244.1 188.0h0M249.7 188.6h0M248.0 190.0h0M296.8 194.1h0M293.6 195.5h0M241.3 197.2h0M240.5 197.8h0M241.9 199.0h0M252.4 203.1h0M273.0 204.1h0M272.3 203.2h0M256.0 207.8h0M255.2 205.4h0" stroke="#22226e" stroke-width="2.0" stroke-linecap="round"/><path d="M304.0 118.8h0M261.5 124.0h0M292.3 129.3h0M291.0 129.2h0M292.7 142.8h0M293.2 143.6h0M249.4 156.0h0M294.2 157.9h0M293.1 164.5h0M293.4 163.8h0M299.4 173.0h0M232.4 181.2h0M234.4 180.6h0M244.5 187.6h0M242.6 187.9h0M249.5 188.4h0M254.9 206.7h0" stroke="#18184f" stroke-width="3.2" stroke-linecap="round"/><path d="M253.8 120.5h0M255.4 120.3h0M271.7 124.6h0M270.0 123.1h0M272.5 123.6h0M255.9 135.7h0M269.6 138.0h0M298.2 138.2h0M296.6 139.8h0M316.0 139.8h0M265.5 143.2h0M264.0 143.4h0M250.0 153.7h0M312.1 151.9h0M267.8 156.0h0M305.5 158.4h0M269.2 160.3h0M270.3 161.2h0M300.0 168.1h0M301.0 166.9h0M299.9 167.7h0M257.0 171.0h0M303.2 172.2h0M312.8 177.9h0M310.5 178.0h0M256.1 181.7h0M255.7 180.1h0M266.8 183.1h0M231.2 187.3h0M244.8 194.2h0M258.4 197.7h0M245.5 212.5h0" stroke="#878787" stroke-width="2.0" stroke-linecap="round"/><path d="M253.3 122.5h0M269.3 124.2h0M271.9 123.5h0M297.1 139.8h0M297.7 139.0h0M297.6 138.8h0M316.5 139.5h0M267.7 143.0h0M306.9 148.5h0M307.7 149.4h0M312.8 151.3h0M255.0 157.0h0M255.8 158.2h0M267.2 158.1h0M267.1 156.6h0M266.3 156.8h0M265.6 158.0h0M306.3 156.6h0M303.5 157.7h0M304.9 158.0h0M271.0 162.2h0M288.3 164.0h0M299.9 167.0h0M300.0 169.7h0M256.0 170.6h0M300.3 170.6h0M300.5 171.8h0M227.5 177.1h0M227.3 179.5h0M267.7 184.4h0M266.2 183.8h0M230.8 190.2h0M258.3 200.5h0M261.3 199.2h0M262.1 199.2h0M247.0 212.2h0" stroke="#bcbcbc" stroke-width="2.8" stroke-linecap="round"/><path d="M255.1 122.2h0M253.3 121.3h0M271.0 123.6h0M285.3 126.7h0M285.8 127.1h0M295.3 130.9h0M254.7 135.9h0M256.0 138.1h0M268.6 138.1h0M316.6 139.7h0M316.6 139.6h0M266.7 144.5h0M266.7 143.9h0M250.3 151.5h0M249.5 153.4h0M250.5 152.3h0M254.2 157.3h0M305.6 157.6h0M268.4 161.6h0M287.4 165.2h0M300.1 168.0h0M258.5 173.0h0M301.1 171.5h0M304.1 170.5h0M225.2 179.0h0M226.7 178.2h0M256.3 179.5h0M258.1 184.5h0M267.1 184.9h0M232.6 189.0h0M243.5 193.3h0M260.4 200.3h0M260.9 199.1h0M247.3 214.1h0M246.2 211.9h0" stroke="#bcbcbc" stroke-width="2.4" stroke-linecap="round"/><path d="M255.3 122.5h0M295.3 129.0h0M316.0 140.5h0M267.0 142.3h0M306.4 148.3h0M250.2 153.5h0M252.4 158.3h0M266.0 157.8h0M305.7 158.4h0M305.5 156.5h0M257.0 172.5h0M300.3 170.9h0M302.3 170.3h0M258.6 198.4h0M262.4 199.3h0M247.2 212.0h0" stroke="#878787" stroke-width="3.2" stroke-linecap="round"/><path d="M255.6 121.5h0M287.7 126.3h0M287.8 127.4h0M298.3 129.8h0M296.4 130.3h0M254.9 136.6h0M267.8 139.1h0M270.1 139.3h0M297.3 139.7h0M316.5 140.3h0M265.9 143.7h0M307.1 147.8h0M308.0 148.4h0M249.1 154.8h0M313.9 152.4h0M311.9 151.3h0M252.9 158.2h0M268.9 161.3h0M287.0 167.5h0M288.2 165.8h0M300.3 168.6h0M257.9 173.1h0M303.4 172.3h0M303.6 172.0h0M303.1 173.3h0M312.2 178.0h0M310.8 176.7h0M312.1 178.1h0M312.5 179.3h0M255.6 181.0h0M256.8 185.3h0M256.8 184.4h0M257.6 182.8h0M267.5 182.6h0M232.2 189.2h0M232.8 188.9h0M244.1 192.8h0M243.7 192.4h0M244.4 191.9h0M257.3 199.1h0M258.9 199.0h0M258.5 200.0h0M246.0 212.4h0" stroke="#bcbcbc" stroke-width="2.0" stroke-linecap="round"/><path d="M258.7 123.4h0M257.7 122.7h0M290.3 123.8h0M299.0 120.9h0M259.2 126.2h0M259.9 126.1h0M245.5 146.5h0M259.8 146.9h0M260.8 144.7h0M243.1 150.2h0M243.9 150.4h0M311.3 148.6h0M310.3 148.6h0M259.3 152.3h0M260.7 153.0h0M313.1 166.3h0M227.5 175.3h0M266.0 176.3h0M313.0 174.2h0M239.1 181.1h0M251.2 185.3h0M306.4 185.0h0M257.5 190.5h0M248.5 193.5h0M248.4 192.6h0M251.4 192.8h0M250.1 192.0h0M278.8 195.0h0M287.1 198.7h0M243.3 205.6h0M243.0 205.2h0M246.9 206.2h0M262.1 207.1h0" stroke="#187324" stroke-width="2.0" stroke-linecap="round"/><path d="M260.0 124.3h0M261.6 123.4h0M292.4 129.9h0M290.7 128.3h0M288.2 137.4h0M307.1 134.6h0M252.1 139.4h0M248.6 141.1h0M311.1 146.9h0M250.8 155.1h0M294.6 158.6h0M288.6 174.1h0M292.5 174.6h0M232.0 181.7h0M317.6 183.3h0M294.3 195.0h0M277.4 201.0h0M277.0 200.2h0M255.3 205.8h0" stroke="#22226e" stroke-width="3.2" stroke-linecap="round"/><path d="M270.8 124.7h0M298.0 130.0h0M254.8 137.0h0M270.6 137.2h0M312.1 151.2h0M271.2 161.7h0M258.9 173.1h0M301.7 170.9h0M255.2 181.4h0M255.3 181.3h0" stroke="#bcbcbc" stroke-width="3.2" stroke-linecap="round"/><path d="M278.1 123.2h0M310.4 129.6h0M308.7 130.5h0M287.7 138.6h0M276.8 143.4h0M276.5 143.2h0M277.9 143.7h0M240.3 147.8h0M238.9 148.2h0M255.9 152.1h0M249.0 159.0h0M243.0 163.8h0M240.9 164.7h0M274.7 165.6h0M280.7 164.2h0M290.1 165.2h0M269.4 171.5h0M286.4 173.8h0M309.8 176.0h0M247.0 180.3h0M247.4 179.9h0M277.6 187.9h0M236.6 194.4h0M264.9 198.2h0M281.9 197.0h0M237.8 200.4h0M229.8 207.0h0M230.6 205.2h0" stroke="#a11818" stroke-width="3.2" stroke-linecap="round"/><path d="M280.9 124.1h0M279.2 122.5h0M287.2 131.8h0M286.3 131.6h0M282.5 135.2h0M280.4 135.3h0M288.8 140.4h0M317.2 141.2h0M289.2 145.1h0M288.4 145.2h0M283.2 150.0h0M306.1 167.2h0M305.6 167.8h0M309.2 170.0h0M254.3 176.7h0M256.5 177.9h0M282.9 179.7h0M301.2 180.6h0M303.7 179.0h0M227.4 185.2h0M228.3 186.3h0M226.9 193.9h0M252.8 200.8h0M233.6 202.2h0M231.9 204.6h0M249.7 208.6h0M251.6 210.5h0" stroke="#a4a4a4" stroke-width="2.0" stroke-linecap="round"/><path d="M280.0 122.2h0M301.2 123.5h0M300.5 125.6h0M300.6 124.9h0M286.6 131.4h0M316.7 143.5h0M316.9 141.4h0M309.2 158.9h0M308.5 156.8h0M307.3 158.6h0M309.2 156.2h0M305.8 168.2h0M255.7 176.8h0M253.5 177.6h0M283.2 179.4h0M226.8 185.1h0M223.9 193.5h0M249.1 201.4h0M232.4 203.4h0M250.1 209.7h0M250.2 211.3h0" stroke="#e4e4e4" stroke-width="2.4" stroke-linecap="round"/><path d="M280.2 122.3h0M279.1 120.8h0M279.6 135.0h0M281.8 136.9h0M281.8 135.3h0M288.0 141.7h0M316.4 141.4h0M289.2 146.9h0M282.1 150.4h0M281.0 150.4h0M279.7 162.1h0M279.2 161.6h0M280.3 169.9h0M253.7 179.1h0M252.4 176.7h0M256.5 179.1h0M281.0 176.5h0M304.5 179.4h0M302.9 179.9h0M302.9 180.9h0M226.4 185.3h0M228.0 189.9h0M227.5 190.1h0M282.7 191.1h0M224.4 193.5h0M224.0 192.3h0M248.7 201.1h0M248.1 201.2h0M232.9 202.7h0M250.2 210.2h0M251.9 210.4h0" stroke="#e4e4e4" stroke-width="2.0" stroke-linecap="round"/><path d="M280.0 122.8h0M287.8 132.0h0M286.9 140.8h0M287.8 140.1h0M317.0 141.3h0M289.0 146.5h0M278.7 159.4h0M280.1 168.9h0M308.8 169.8h0M307.6 171.9h0M257.5 177.5h0M227.1 184.3h0M227.5 186.9h0M228.2 190.3h0M227.9 189.9h0M252.2 200.4h0M233.3 204.5h0" stroke="#e4e4e4" stroke-width="3.2" stroke-linecap="round"/><path d="M279.9 122.3h0M301.7 124.3h0M298.8 124.1h0M287.0 141.6h0M283.0 149.7h0M282.1 148.7h0M307.9 156.7h0M276.8 161.1h0M278.6 169.0h0M252.5 177.7h0M283.7 178.0h0M302.6 179.9h0M228.6 191.4h0M227.6 187.7h0M252.3 201.4h0M251.1 201.1h0M233.3 204.5h0M250.1 209.2h0" stroke="#a4a4a4" stroke-width="2.4" stroke-linecap="round"/><path d="M283.8 122.1h0M284.9 123.9h0M303.5 122.9h0M246.8 135.3h0M248.6 135.8h0M279.4 139.0h0M295.3 141.2h0M309.5 144.7h0M281.8 153.0h0M241.5 157.4h0M291.1 162.6h0M296.7 160.7h0M278.2 173.0h0M238.0 182.4h0M252.1 186.3h0M288.8 188.3h0" stroke="#18575f" stroke-width="3.2" stroke-linecap="round"/><path d="M286.6 123.8h0M284.9 122.4h0M302.7 121.4h0M304.7 122.3h0M295.4 125.8h0M295.4 125.6h0M296.3 126.2h0M254.5 134.9h0M254.8 133.9h0M248.7 134.6h0M271.6 140.9h0M294.8 139.7h0M294.3 141.5h0M315.3 142.8h0M309.4 145.2h0M281.9 151.9h0M300.2 152.9h0M248.4 156.6h0M249.6 154.4h0M291.8 162.7h0M290.7 161.1h0M299.4 161.8h0M243.8 164.6h0M243.6 167.0h0M266.7 165.4h0M265.2 165.0h0M303.5 165.6h0M279.8 173.5h0M277.3 174.5h0M235.4 175.7h0M237.2 176.5h0M274.5 178.5h0M274.0 178.0h0M286.1 177.7h0M236.3 181.9h0M236.9 180.2h0M251.8 186.3h0M281.1 188.5h0M281.6 185.8h0M281.8 186.1h0M288.9 186.2h0M290.2 187.2h0M287.2 188.0h0M276.6 196.5h0M276.2 195.8h0M233.0 204.8h0M259.7 210.5h0M260.9 209.8h0" stroke="#227a84" stroke-width="2.8" stroke-linecap="round"/><path d="M288.7 124.5h0M305.4 122.7h0M305.8 123.8h0M251.9 131.6h0M253.2 131.2h0M283.6 130.1h0M283.7 129.3h0M303.2 129.0h0M301.3 127.7h0M267.1 133.4h0M266.9 133.6h0M267.7 134.0h0M312.4 132.1h0M301.8 135.6h0M304.7 135.7h0M307.6 139.7h0M309.7 139.1h0M265.3 145.6h0M304.2 145.5h0M284.2 150.5h0M285.4 149.7h0M308.6 149.9h0M308.7 149.8h0M265.7 155.2h0M269.0 154.0h0M314.0 162.8h0M314.3 162.0h0M268.8 165.6h0M269.5 164.6h0M270.2 167.6h0M288.9 169.3h0M291.0 167.3h0M272.9 172.3h0M273.8 173.2h0M281.8 171.0h0M311.5 172.1h0M274.6 173.4h0M274.2 173.8h0M274.1 172.5h0M295.8 174.9h0M293.5 175.3h0M230.5 177.0h0M232.9 179.0h0M230.3 178.7h0M248.2 176.6h0M249.4 176.9h0M248.7 177.5h0M283.6 180.7h0M310.8 181.9h0M309.2 179.9h0M247.8 185.5h0M249.3 183.3h0M298.1 183.3h0M275.2 186.6h0M273.1 186.7h0M276.6 192.0h0M277.3 190.5h0M299.1 193.1h0M299.1 194.8h0" stroke="#2222c4" stroke-width="2.8" stroke-linecap="round"/><path d="M298.9 123.5h0M260.4 125.8h0M243.5 146.6h0M247.0 145.5h0M249.3 144.8h0M318.6 163.6h0M285.2 168.0h0M282.6 167.9h0M312.2 167.8h0M258.2 189.6h0M293.5 190.4h0M283.1 193.5h0M291.2 196.3h0M279.0 196.3h0M278.4 198.3h0M263.9 206.8h0M262.2 207.7h0M273.9 205.5h0M237.9 209.9h0M237.9 209.4h0" stroke="#187324" stroke-width="3.2" stroke-linecap="round"/><path d="M306.0 123.8h0M252.2 131.8h0M285.5 130.8h0M306.7 132.8h0M310.0 130.8h0M302.6 136.0h0M307.1 139.9h0M307.8 140.1h0M265.7 146.3h0M264.3 144.5h0M284.0 148.1h0M273.3 158.6h0M313.5 163.5h0M270.3 168.3h0M248.0 170.2h0M271.9 171.9h0M280.4 169.8h0M311.3 173.1h0M285.1 180.7h0M296.2 182.0h0M296.3 181.1h0M305.8 181.1h0M283.1 184.0h0M296.3 185.0h0M297.3 193.3h0M259.4 196.0h0" stroke="#2222c4" stroke-width="3.2" stroke-linecap="round"/><path d="M259.5 125.6h0M259.7 125.1h0M260.0 147.2h0M242.6 149.4h0M260.1 151.7h0M305.6 187.2h0M306.0 186.2h0M257.1 189.7h0M248.2 194.6h0M251.2 192.6h0M251.3 192.4h0M284.0 193.1h0M284.5 193.2h0M276.6 197.2h0M279.7 196.6h0M247.0 207.2h0M263.0 208.1h0" stroke="#22a032" stroke-width="3.2" stroke-linecap="round"/><path d="M266.1 127.2h0M267.2 126.3h0M271.7 125.6h0M264.2 129.5h0M251.3 133.8h0M317.8 133.4h0M295.0 138.0h0M275.7 145.9h0M276.3 146.4h0M276.1 146.1h0M263.1 149.3h0M314.0 155.8h0M260.8 183.8h0M259.8 189.8h0M257.6 188.4h0M268.7 194.2h0" stroke="#a7a135" stroke-width="2.8" stroke-linecap="round"/><path d="M267.1 126.0h0M266.2 126.8h0M266.6 125.1h0M263.2 129.2h0M250.0 132.3h0M251.6 132.4h0M316.5 132.5h0M315.3 133.3h0M264.7 137.9h0M277.2 146.9h0M276.0 147.0h0M261.9 147.1h0M263.8 148.8h0M263.0 149.2h0M264.3 153.1h0M263.1 153.5h0M264.6 154.0h0M269.8 154.9h0M270.6 154.0h0M288.0 153.0h0M314.6 153.9h0M302.1 164.0h0M302.6 165.6h0M259.5 189.1h0" stroke="#e8e04a" stroke-width="2.4" stroke-linecap="round"/><path d="M266.6 124.7h0M264.7 128.6h0M317.3 132.2h0M316.6 131.1h0M295.6 137.6h0M266.6 138.8h0M263.7 153.1h0M271.4 153.6h0M290.4 155.3h0M312.8 156.8h0M301.1 164.5h0M303.3 164.0h0M250.8 174.1h0M259.7 181.3h0M258.4 187.0h0M269.4 191.4h0" stroke="#a7a135" stroke-width="2.0" stroke-linecap="round"/><path d="M265.5 126.5h0M272.6 126.2h0M261.9 129.7h0M317.7 133.1h0M296.4 134.9h0M295.9 136.6h0M294.7 136.4h0M264.1 139.0h0M266.4 137.5h0M265.6 137.7h0M276.6 144.6h0M277.1 147.0h0M264.4 148.9h0M262.9 154.3h0M289.1 154.3h0M287.9 156.1h0M288.9 154.4h0M250.2 173.6h0M260.3 184.3h0M259.1 183.3h0M258.0 188.0h0M258.4 188.4h0M270.4 194.4h0M268.4 193.6h0M268.3 192.6h0" stroke="#e8e04a" stroke-width="2.0" stroke-linecap="round"/><path d="M271.4 126.0h0M261.4 127.5h0M264.2 128.0h0M249.0 132.7h0M316.5 132.5h0M293.8 138.0h0M314.2 154.7h0M301.5 164.4h0M249.5 173.2h0M250.8 172.9h0M260.9 184.1h0" stroke="#e8e04a" stroke-width="2.8" stroke-linecap="round"/><path d="M271.9 126.0h0M272.7 125.9h0M248.2 131.8h0M270.5 155.2h0M270.2 154.8h0M315.2 155.5h0M312.7 154.6h0M303.6 164.0h0M249.1 175.1h0M259.5 182.9h0M258.2 188.4h0M268.9 194.1h0" stroke="#e8e04a" stroke-width="3.2" stroke-linecap="round"/><path d="M273.1 127.5h0M272.7 126.2h0M263.2 128.9h0M249.3 133.2h0M250.6 132.6h0M266.3 139.8h0M262.9 148.8h0M264.6 152.5h0M268.6 154.8h0M288.6 156.2h0M288.9 154.6h0M314.4 156.9h0M300.3 166.1h0M260.6 181.1h0M269.4 194.3h0" stroke="#a7a135" stroke-width="2.4" stroke-linecap="round"/><path d="M287.1 126.7h0M286.9 127.0h0M255.4 136.7h0M254.4 137.4h0M268.6 137.2h0M296.5 137.8h0M249.4 151.1h0M312.4 152.4h0M254.1 156.7h0M286.8 167.1h0M256.9 174.1h0M301.2 171.6h0M226.7 178.1h0M312.0 179.9h0M256.1 186.1h0M256.4 184.2h0M269.1 184.9h0M232.1 188.6h0M243.9 192.6h0M242.6 192.2h0M262.9 199.1h0M246.4 212.3h0" stroke="#878787" stroke-width="2.8" stroke-linecap="round"/><path d="M286.9 127.3h0M296.5 130.2h0M296.3 130.3h0M268.2 138.0h0M316.1 140.0h0M307.4 148.2h0M306.9 147.3h0M312.5 151.6h0M252.6 157.6h0M267.8 158.6h0M270.6 162.8h0M289.0 165.0h0M288.3 165.3h0M302.6 171.8h0M304.7 171.3h0M226.1 179.0h0M226.7 177.9h0M255.7 179.8h0M255.5 185.4h0M267.5 184.0h0M231.8 188.4h0M258.6 199.2h0M262.1 198.1h0" stroke="#878787" stroke-width="2.4" stroke-linecap="round"/><path d="M296.8 126.6h0M282.4 152.3h0M241.5 156.4h0M292.2 160.7h0M266.1 164.2h0M304.0 166.1h0M231.1 180.0h0M298.9 187.8h0M242.6 202.0h0M243.3 199.3h0" stroke="#227a84" stroke-width="3.2" stroke-linecap="round"/><path d="M300.1 125.8h0M288.3 132.7h0M316.7 141.9h0M280.4 169.0h0M281.1 168.0h0M304.4 169.0h0M311.3 170.9h0M308.2 171.5h0M254.2 177.4h0M257.2 178.7h0M256.2 177.3h0M282.6 177.7h0M227.1 190.4h0M282.8 191.2h0M224.2 192.4h0M226.2 194.0h0M249.9 201.3h0M248.6 200.9h0M247.3 201.5h0" stroke="#a4a4a4" stroke-width="2.8" stroke-linecap="round"/><path d="M300.7 125.0h0M286.4 130.8h0M287.2 132.2h0M282.6 135.4h0M289.1 142.7h0M289.6 145.9h0M289.3 145.2h0M281.9 148.8h0M280.6 149.0h0M279.4 161.3h0M281.1 170.0h0M280.4 167.9h0M307.1 167.7h0M305.9 166.8h0M307.3 169.5h0M309.9 169.9h0M309.2 170.8h0M255.8 177.1h0M256.3 177.0h0M283.3 178.5h0M283.3 178.7h0M304.2 181.0h0M282.3 190.7h0M282.6 191.2h0M282.7 191.0h0M223.5 193.2h0M248.1 202.0h0M251.9 200.9h0M251.3 199.9h0M252.6 198.7h0M233.6 204.5h0" stroke="#e4e4e4" stroke-width="2.8" stroke-linecap="round"/><path d="M305.7 125.0h0M268.8 146.3h0M269.2 146.9h0M303.7 154.8h0M302.8 155.5h0M306.6 156.3h0M249.4 166.2h0M284.9 175.2h0M297.7 176.7h0M261.8 196.3h0M261.7 193.7h0M287.9 200.3h0M238.2 202.8h0M238.3 201.2h0M239.4 202.5h0M244.0 207.1h0" stroke="#a26d90" stroke-width="2.4" stroke-linecap="round"/><path d="M303.6 125.9h0M303.8 125.9h0M263.5 141.0h0M269.2 146.3h0M271.5 148.5h0M270.5 147.2h0M308.0 156.8h0M305.3 157.5h0M280.0 157.1h0M285.3 173.9h0M296.5 176.7h0M231.8 183.7h0M232.3 184.5h0M311.7 183.4h0M244.6 190.4h0M258.1 194.8h0M258.2 191.2h0M263.5 194.3h0M286.3 201.4h0M287.4 198.6h0M239.1 201.7h0M242.8 205.8h0" stroke="#e298c8" stroke-width="2.8" stroke-linecap="round"/><path d="M303.9 126.1h0M292.7 139.3h0M294.9 139.3h0M261.6 141.5h0M268.7 145.7h0M268.3 144.3h0M269.3 149.8h0M268.9 150.5h0M302.7 155.0h0M279.3 157.1h0M297.5 165.6h0M297.2 167.0h0M285.7 174.7h0M285.1 175.1h0M284.4 175.3h0M297.0 176.9h0M275.2 183.8h0M274.7 182.7h0M313.2 181.6h0M312.0 183.2h0M246.7 190.9h0M244.2 189.0h0M257.5 192.3h0M257.6 191.3h0M262.1 194.1h0M287.3 200.1h0M289.9 201.0h0M239.4 202.3h0M238.8 202.1h0M244.8 206.6h0M244.4 208.7h0M244.9 209.5h0" stroke="#e298c8" stroke-width="2.0" stroke-linecap="round"/><path d="M305.2 125.9h0M303.9 127.4h0M296.3 139.4h0M261.6 141.7h0M269.3 146.3h0M306.7 156.3h0M305.6 156.0h0M277.7 158.0h0M250.5 164.5h0M297.2 167.3h0M295.6 168.2h0M275.3 183.1h0M311.3 182.4h0M243.8 190.5h0M257.3 192.6h0M287.8 199.8h0M243.5 206.9h0M245.2 210.6h0" stroke="#a26d90" stroke-width="2.0" stroke-linecap="round"/><path d="M304.0 125.8h0M295.1 139.2h0M262.4 142.8h0M270.3 147.6h0M302.5 155.0h0M305.7 157.6h0M279.2 156.6h0M298.7 176.6h0M232.2 184.5h0" stroke="#e298c8" stroke-width="3.2" stroke-linecap="round"/><path d="M308.1 126.5h0M311.1 135.8h0M274.9 150.0h0M276.8 148.0h0M290.6 155.7h0M293.9 171.1h0M244.6 174.2h0M291.9 180.4h0M238.3 193.3h0M253.6 194.9h0" stroke="#c8a262" stroke-width="3.2" stroke-linecap="round"/><path d="M312.0 126.4h0M314.3 128.9h0M270.8 133.1h0M306.4 134.4h0M291.8 135.1h0M292.2 137.0h0M255.5 149.5h0M265.0 148.7h0M317.2 148.1h0M316.5 147.5h0M316.0 160.6h0M274.2 165.5h0M263.9 166.8h0M244.6 172.4h0M307.7 184.6h0M227.1 188.7h0M274.8 195.0h0M229.9 196.0h0M245.7 198.2h0M276.2 204.0h0M244.0 213.8h0M244.1 215.0h0" stroke="#5a22a4" stroke-width="3.2" stroke-linecap="round"/><path d="M251.9 131.5h0M266.9 132.5h0M262.4 137.7h0M304.2 135.9h0M305.4 143.7h0M269.8 169.9h0M248.9 172.0h0M281.6 169.0h0M282.1 171.3h0M311.4 171.9h0M247.7 177.1h0M295.5 182.4h0M295.5 181.1h0M285.2 182.5h0M285.0 182.9h0M295.5 186.0h0" stroke="#18188d" stroke-width="3.2" stroke-linecap="round"/><path d="M256.0 129.4h0M270.6 133.3h0M290.4 136.6h0M291.5 135.3h0M262.1 138.8h0M261.0 139.0h0M281.0 140.0h0M289.7 139.7h0M294.1 145.9h0M293.2 154.5h0M285.8 159.0h0M317.6 160.8h0M260.8 167.4h0M262.9 167.9h0M263.8 166.8h0M277.5 168.4h0M276.2 167.4h0M274.0 193.2h0M228.0 195.9h0M246.1 202.7h0M255.3 205.0h0M274.5 202.9h0" stroke="#401876" stroke-width="3.2" stroke-linecap="round"/><path d="M257.7 129.6h0M257.8 128.8h0M272.8 128.7h0M271.3 130.3h0M306.0 129.3h0M308.0 142.0h0M286.0 152.9h0M293.2 151.9h0M254.6 163.2h0M258.9 162.7h0M311.6 165.8h0M291.0 177.2h0M289.2 179.0h0M251.9 189.6h0M248.2 197.8h0" stroke="#84aae2" stroke-width="3.2" stroke-linecap="round"/><path d="M278.5 129.1h0M301.9 146.5h0M257.3 146.2h0M291.1 156.3h0M251.1 162.5h0M302.4 160.1h0M244.9 173.8h0M244.4 174.0h0M238.3 191.5h0M253.7 193.0h0M231.0 197.2h0" stroke="#907446" stroke-width="3.2" stroke-linecap="round"/><path d="M281.5 130.5h0M281.1 129.2h0M251.6 142.9h0M267.8 152.3h0M232.8 176.0h0M314.8 180.8h0M236.1 192.2h0" stroke="#154018" stroke-width="2.8" stroke-linecap="round"/><path d="M281.6 128.2h0M250.6 144.1h0M251.3 142.8h0M267.7 152.6h0M247.7 174.3h0M242.8 178.0h0M268.4 180.7h0M315.0 179.3h0M314.1 179.0h0M236.9 191.6h0M235.2 191.5h0" stroke="#1e5a22" stroke-width="2.0" stroke-linecap="round"/><path d="M280.3 130.8h0M281.1 129.3h0M255.5 166.8h0M231.6 176.1h0M247.9 174.7h0M242.3 176.4h0M266.7 180.6h0M267.0 181.8h0M316.1 179.0h0M287.8 195.4h0M287.8 193.9h0" stroke="#1e5a22" stroke-width="3.2" stroke-linecap="round"/><path d="M261.0 132.4h0M300.9 130.7h0M315.7 135.6h0M274.9 139.9h0M298.3 147.7h0M297.2 146.2h0M309.5 166.1h0M273.4 171.7h0M255.0 172.9h0M255.2 172.2h0M295.7 185.5h0M242.4 186.2h0M240.1 187.6h0M236.3 206.5h0M257.8 210.7h0M256.2 210.3h0" stroke="#6c9b28" stroke-width="3.2" stroke-linecap="round"/><path d="M275.5 131.0h0M300.9 130.8h0M250.1 135.7h0M271.3 134.5h0M315.4 134.3h0M257.9 137.8h0M298.2 147.8h0M309.0 166.1h0M291.0 167.6h0M230.7 170.1h0M228.5 170.2h0M267.7 179.2h0M299.8 178.1h0M300.1 177.0h0M223.8 181.2h0M226.3 181.6h0M301.5 182.4h0M241.3 188.4h0M270.7 187.3h0M260.7 202.8h0M260.9 202.2h0M261.4 202.9h0M236.4 207.8h0M264.8 209.6h0M266.1 211.0h0M264.2 210.2h0" stroke="#6c9b28" stroke-width="2.8" stroke-linecap="round"/><path d="M296.5 131.2h0M296.6 131.4h0M279.4 136.4h0M278.1 137.4h0M306.0 138.8h0M257.7 143.2h0M241.9 155.8h0M235.1 160.3h0M263.4 162.1h0M261.0 162.7h0M319.3 167.4h0M242.5 170.5h0M241.7 170.4h0M278.9 191.1h0M227.3 193.8h0" stroke="#4c290e" stroke-width="2.8" stroke-linecap="round"/><path d="M297.7 131.2h0M295.6 131.4h0M296.2 130.9h0M278.1 136.1h0M279.2 137.2h0M306.0 139.0h0M258.4 143.9h0M241.3 157.3h0M239.9 156.4h0M273.7 156.9h0M235.6 161.4h0M261.5 161.3h0M317.0 168.5h0M242.2 170.9h0M240.1 170.5h0M308.3 175.9h0M242.1 190.7h0M279.1 188.5h0M278.2 188.2h0M228.8 193.4h0" stroke="#6a3a14" stroke-width="2.0" stroke-linecap="round"/><path d="M296.5 131.4h0M308.5 174.4h0" stroke="#4c290e" stroke-width="3.2" stroke-linecap="round"/><path d="M295.7 130.3h0M304.7 140.4h0M241.0 155.7h0M235.6 167.3h0M236.4 166.5h0M235.9 166.3h0M241.3 171.7h0M243.0 190.4h0M228.9 192.7h0" stroke="#6a3a14" stroke-width="3.2" stroke-linecap="round"/><path d="M302.9 133.5h0M301.3 131.8h0M273.0 134.9h0M272.6 135.8h0M315.7 135.3h0M256.7 138.6h0M274.6 139.3h0M274.3 140.2h0M298.5 147.9h0M290.8 167.8h0M291.3 167.6h0M231.0 170.0h0M231.4 170.8h0M274.5 170.5h0M274.8 171.4h0M275.0 171.5h0M255.8 173.5h0M225.4 180.6h0M301.1 182.7h0M260.8 203.3h0M235.1 206.8h0M237.6 207.2h0M257.2 210.6h0M266.0 210.5h0M266.9 208.8h0" stroke="#96d838" stroke-width="2.8" stroke-linecap="round"/><path d="M278.6 135.1h0M258.7 141.2h0M257.8 142.2h0M241.2 155.8h0M275.4 155.4h0M274.6 154.7h0M235.6 161.4h0M236.4 166.1h0M316.0 168.6h0M240.8 170.6h0M307.3 175.7h0M293.5 189.4h0M243.7 191.9h0M243.2 190.6h0M243.8 190.3h0M278.6 189.4h0M228.4 193.5h0" stroke="#4c290e" stroke-width="2.4" stroke-linecap="round"/><path d="M277.2 135.3h0M277.7 135.5h0M306.9 138.7h0M258.7 143.8h0M274.2 153.2h0M274.5 155.2h0M235.1 162.8h0M234.7 166.0h0M315.9 167.0h0M308.3 174.3h0M309.1 174.2h0M293.1 187.7h0M294.5 187.6h0M242.6 190.9h0M242.5 192.6h0M228.2 192.6h0M229.0 193.6h0" stroke="#6a3a14" stroke-width="2.8" stroke-linecap="round"/><path d="M281.7 134.5h0M288.7 142.7h0M315.2 140.8h0M289.9 144.3h0M306.7 157.3h0M307.8 157.9h0M278.7 160.1h0M278.0 161.9h0M225.5 185.7h0M282.9 191.5h0M284.1 191.2h0" stroke="#a4a4a4" stroke-width="3.2" stroke-linecap="round"/><path d="M285.8 137.5h0M299.4 137.0h0M299.1 136.2h0M313.1 141.5h0M282.0 141.3h0M280.3 141.0h0M317.7 144.6h0M250.7 148.9h0M252.9 149.3h0M251.9 149.7h0M250.8 149.8h0M237.5 158.9h0M237.3 159.3h0M284.6 161.4h0M284.9 161.2h0M296.9 181.3h0M297.4 180.9h0M277.8 183.6h0M303.3 193.9h0M302.9 192.3h0M280.6 200.8h0M281.6 199.2h0M268.0 202.9h0M269.2 201.2h0" stroke="#b8a840" stroke-width="2.4" stroke-linecap="round"/><path d="M285.2 134.9h0M298.2 135.9h0M281.0 140.8h0M243.0 143.9h0M243.1 145.5h0M250.7 151.0h0M237.5 158.9h0M282.4 161.2h0M299.1 181.8h0M297.6 183.2h0M279.4 184.0h0M278.3 182.8h0M268.4 202.0h0" stroke="#84782e" stroke-width="2.8" stroke-linecap="round"/><path d="M287.3 134.6h0M305.5 135.1h0M252.0 140.0h0M292.4 143.5h0M313.7 144.5h0M312.1 145.5h0M304.6 152.1h0M303.4 152.2h0M251.7 154.6h0M292.4 165.3h0M296.6 171.2h0M316.7 170.4h0M315.9 169.5h0M289.6 174.0h0M290.8 173.2h0M291.5 175.8h0M308.2 176.5h0M250.1 181.6h0M316.4 182.8h0M245.3 187.2h0M295.4 194.6h0M240.2 199.6h0M243.0 197.9h0M252.3 202.4h0M251.8 201.6h0M255.3 206.6h0" stroke="#18184f" stroke-width="2.4" stroke-linecap="round"/><path d="M295.5 136.3h0M266.6 139.2h0M262.9 149.4h0M263.8 152.0h0M269.0 154.2h0M250.8 173.8h0M250.4 174.2h0" stroke="#a7a135" stroke-width="3.2" stroke-linecap="round"/><path d="M299.1 135.4h0M312.4 139.3h0M313.2 139.4h0M283.5 141.8h0M242.4 145.7h0M314.8 147.3h0M317.1 145.3h0M240.3 151.1h0M284.4 160.7h0M288.7 162.0h0M278.4 184.4h0M302.6 194.2h0M302.9 194.4h0M281.6 200.7h0M268.3 202.4h0M267.6 201.9h0" stroke="#84782e" stroke-width="2.0" stroke-linecap="round"/><path d="M310.9 137.4h0M310.0 135.3h0M271.8 140.6h0M257.6 146.3h0M276.8 147.1h0M238.4 156.1h0M290.5 157.6h0M250.5 161.1h0M304.0 163.1h0M303.6 163.0h0M251.5 167.6h0M252.0 169.6h0M265.8 168.6h0M293.2 171.6h0M306.5 177.1h0M293.3 179.6h0M301.7 186.7h0M239.2 191.8h0M264.9 190.0h0M229.5 197.1h0" stroke="#907446" stroke-width="2.4" stroke-linecap="round"/><path d="M293.1 140.4h0M295.9 138.9h0M261.1 139.7h0M263.5 141.8h0M271.0 148.1h0M304.3 153.6h0M280.0 157.9h0M248.6 165.7h0M298.7 168.0h0M285.9 174.6h0M298.0 177.0h0M230.3 184.5h0M231.6 185.4h0M275.2 182.2h0M312.1 183.6h0M244.8 190.3h0M244.4 190.3h0M258.3 193.2h0M256.6 193.7h0M243.3 206.3h0M245.6 210.0h0M245.8 211.4h0" stroke="#a26d90" stroke-width="2.8" stroke-linecap="round"/><path d="M294.2 139.8h0M261.3 141.2h0M301.6 154.7h0M301.8 154.2h0M306.8 157.8h0M278.7 158.3h0M248.5 164.2h0M249.1 164.5h0M247.8 164.8h0M249.1 165.6h0M296.9 167.2h0M298.3 166.3h0M296.9 176.8h0M230.7 183.0h0M274.6 183.4h0M276.4 182.9h0M310.9 184.0h0M245.8 190.1h0M260.9 196.2h0M262.4 195.1h0M239.0 200.8h0M243.7 207.0h0M243.4 208.5h0M245.9 210.4h0M245.9 211.1h0" stroke="#e298c8" stroke-width="2.4" stroke-linecap="round"/><path d="M306.7 140.6h0M306.0 139.7h0M242.9 156.9h0M273.9 153.3h0M236.6 159.6h0M261.9 162.2h0M236.4 165.1h0M237.0 165.8h0M318.2 167.7h0M306.6 174.3h0M292.2 186.6h0M293.5 187.7h0M278.9 190.3h0M227.8 194.2h0" stroke="#4c290e" stroke-width="2.0" stroke-linecap="round"/><path d="M304.3 138.4h0M258.2 143.1h0M258.6 144.5h0M240.3 154.6h0M273.2 155.4h0M236.6 161.7h0M235.4 160.4h0M261.8 160.5h0M262.8 162.1h0M262.7 162.4h0M318.7 168.4h0M317.8 168.6h0M240.3 171.3h0M307.2 174.6h0M291.1 187.9h0M292.4 186.9h0M276.9 189.5h0M279.7 190.4h0" stroke="#6a3a14" stroke-width="2.4" stroke-linecap="round"/><path d="M250.6 141.1h0M267.9 152.6h0M232.9 174.1h0M246.4 176.5h0M247.4 175.5h0M294.0 176.8h0M295.2 175.9h0M266.7 181.3h0" stroke="#1e5a22" stroke-width="2.8" stroke-linecap="round"/><path d="M269.5 148.2h0M269.3 148.8h0M278.9 157.6h0M286.1 174.8h0M296.8 177.3h0M230.8 183.0h0M275.4 184.3h0M310.8 184.0h0M261.5 193.7h0M288.0 199.4h0" stroke="#a26d90" stroke-width="3.2" stroke-linecap="round"/><path d="M267.8 152.7h0M255.9 168.5h0M245.6 174.8h0M241.3 177.0h0M294.1 176.4h0M265.9 181.6h0M314.6 178.8h0M313.9 179.1h0M234.9 191.2h0" stroke="#154018" stroke-width="3.2" stroke-linecap="round"/><path d="M279.9 151.0h0M240.4 161.1h0M263.1 176.9h0M288.3 179.0h0M264.1 182.1h0M285.9 187.3h0M253.3 189.4h0M305.8 190.7h0" stroke="#5f7aa2" stroke-width="3.2" stroke-linecap="round"/></g></g><path d="M449.4,157.9L447.0,158.3M447.0,158.3L445.6,156.0M445.6,156.0L446.5,153.3M446.5,153.3L448.9,152.9M448.9,152.9L450.3,155.2M450.3,155.2L450.8,155.5M392.2,164.9L390.3,166.8M390.3,166.8L388.1,165.9M388.1,165.9L387.6,163.1M387.6,163.1L389.4,161.2M389.4,161.2L391.7,162.1M391.7,162.1L393.2,165.4M393.2,165.4L391.2,162.8M391.2,162.8L388.5,165.1M441.1,176.1L438.7,176.6M438.7,176.6L437.2,174.3M437.2,174.3L438.1,171.6M438.1,171.6L440.5,171.2M440.5,171.2L442.0,173.5M442.0,173.5L442.4,174.1M442.4,174.1L445.0,173.2M445.0,173.2L442.7,173.0M384.2,148.4L382.8,150.7M382.8,150.7L380.4,150.4M380.4,150.4L379.4,147.8M379.4,147.8L380.9,145.5M380.9,145.5L383.2,145.8M383.2,145.8L386.3,149.7M386.3,149.7L385.7,151.0M403.2,175.6L401.2,177.1M401.2,177.1L399.0,175.8M399.0,175.8L399.0,172.9M399.0,172.9L401.0,171.4M401.0,171.4L403.1,172.8M403.1,172.8L404.1,175.6M404.1,175.6L406.3,174.8M406.3,174.8L404.3,175.4M473.4,174.9L471.8,177.1M471.8,177.1L469.5,176.5M469.5,176.5L468.7,173.8M468.7,173.8L470.3,171.6M470.3,171.6L472.6,172.2M472.6,172.2L472.8,175.4M408.9,153.9L406.9,155.5M406.9,155.5L404.8,154.3M404.8,154.3L404.6,151.4M404.6,151.4L406.6,149.8M406.6,149.8L408.8,151.0M408.8,151.0L411.3,155.8M411.3,155.8L410.7,155.9M458.0,156.1L456.2,158.0M456.2,158.0L453.9,157.0M453.9,157.0L453.5,154.2M453.5,154.2L455.3,152.3M455.3,152.3L457.6,153.3M457.6,153.3L459.6,153.5M459.6,153.5L457.6,153.2M457.6,153.2L454.9,155.0M458.6,153.1L456.6,154.7M456.6,154.7L454.5,153.4M454.5,153.4L454.4,150.5M454.4,150.5L456.4,148.9M456.4,148.9L458.5,150.2M458.5,150.2L459.8,154.6M496.2,150.0L493.8,150.5M493.8,150.5L492.3,148.4M492.3,148.4L493.0,145.6M493.0,145.6L495.4,145.1M495.4,145.1L497.0,147.2M497.0,147.2L498.5,147.6M498.5,147.6L500.9,148.9M500.9,148.9L498.8,148.6M399.6,177.4L397.3,178.1M397.3,178.1L395.7,176.0M395.7,176.0L396.4,173.2M396.4,173.2L398.7,172.6M398.7,172.6L400.3,174.7M400.3,174.7L402.0,175.3M402.0,175.3L400.6,174.7M400.6,174.7L398.3,173.7M408.9,183.6L407.3,185.7M407.3,185.7L405.0,185.1M405.0,185.1L404.2,182.3M404.2,182.3L405.9,180.2M405.9,180.2L408.2,180.8M408.2,180.8L408.5,181.0M457.2,163.8L454.9,164.3M454.9,164.3L453.3,162.0M453.3,162.0L454.2,159.3M454.2,159.3L456.5,158.9M456.5,158.9L458.1,161.1M458.1,161.1L459.7,161.5M459.7,161.5L458.2,161.6M458.2,161.6L457.0,162.9M478.9,185.2L476.8,186.7M476.8,186.7L474.7,185.2M474.7,185.2L474.7,182.3M474.7,182.3L476.8,180.9M476.8,180.9L478.9,182.3M478.9,182.3L478.9,184.7M478.9,184.7L476.7,181.9M476.7,181.9L476.0,182.2M487.5,178.0L485.6,179.7M485.6,179.7L483.4,178.6M483.4,178.6L483.1,175.7M483.1,175.7L485.0,174.0M485.0,174.0L487.3,175.1M487.3,175.1L487.4,175.9M487.6,148.8L485.3,149.6M485.3,149.6L483.6,147.6M483.6,147.6L484.2,144.8M484.2,144.8L486.5,144.0M486.5,144.0L488.2,146.1M488.2,146.1L485.0,146.9M478.7,170.7L476.5,171.6M476.5,171.6L474.7,169.8M474.7,169.8L475.1,166.9M475.1,166.9L477.4,166.0M477.4,166.0L479.2,167.9M479.2,167.9L478.9,170.4M478.9,170.4L478.2,169.9M478.2,169.9L478.4,168.0M474.2,181.6L472.4,183.5M472.4,183.5L470.1,182.6M470.1,182.6L469.6,179.8M469.6,179.8L471.4,177.8M471.4,177.8L473.7,178.7M473.7,178.7L476.4,179.9M476.4,179.9L477.9,178.1M460.9,153.4L458.7,154.5M458.7,154.5L456.8,152.9M456.8,152.9L457.0,150.0M457.0,150.0L459.2,148.8M459.2,148.8L461.2,150.5M461.2,150.5L458.7,153.8M476.7,177.8L474.7,179.4M474.7,179.4L472.6,178.1M472.6,178.1L472.5,175.2M472.5,175.2L474.5,173.6M474.5,173.6L476.6,175.0M476.6,175.0L474.2,178.1M488.5,145.5L487.1,147.9M487.1,147.9L484.8,147.7M484.8,147.7L483.7,145.1M483.7,145.1L485.0,142.7M485.0,142.7L487.4,142.9M487.4,142.9L488.3,146.9M488.3,146.9L487.3,146.8M487.3,146.8L487.4,146.4M395.5,166.7L394.3,169.2M394.3,169.2L391.9,169.1M391.9,169.1L390.7,166.6M390.7,166.6L392.0,164.2M392.0,164.2L394.4,164.2M394.4,164.2L397.2,167.9M406.3,184.7L404.0,185.6M404.0,185.6L402.2,183.6M402.2,183.6L402.7,180.8M402.7,180.8L405.0,180.0M405.0,180.0L406.8,181.9M406.8,181.9L408.0,184.2M383.7,160.4L381.7,161.9M381.7,161.9L379.6,160.6M379.6,160.6L379.5,157.7M379.5,157.7L381.5,156.2M381.5,156.2L383.6,157.5M383.6,157.5L385.9,163.1M397.3,149.9L395.2,151.3M395.2,151.3L393.1,149.9M393.1,149.9L393.1,147.0M393.1,147.0L395.2,145.6M395.2,145.6L397.3,147.0M397.3,147.0L398.1,151.0M398.1,151.0L399.6,153.7M386.5,157.5L384.1,158.0M384.1,158.0L382.6,155.7M382.6,155.7L383.5,153.0M383.5,153.0L385.9,152.6M385.9,152.6L387.4,154.9M387.4,154.9L386.7,157.1M386.7,157.1L386.8,159.0M386.8,159.0L384.6,158.7M441.3,169.6L439.3,171.3M439.3,171.3L437.2,170.1M437.2,170.1L436.9,167.2M436.9,167.2L438.9,165.6M438.9,165.6L441.1,166.8M441.1,166.8L440.9,169.8M440.9,169.8L441.4,169.0M380.0,152.7L377.7,153.5M377.7,153.5L375.9,151.5M375.9,151.5L376.5,148.7M376.5,148.7L378.8,147.9M378.8,147.9L380.5,149.9M380.5,149.9L377.5,151.7M377.5,151.7L376.9,152.1M386.5,181.7L384.1,182.1M384.1,182.1L382.6,179.8M382.6,179.8L383.5,177.2M383.5,177.2L385.9,176.8M385.9,176.8L387.4,179.1M387.4,179.1L389.2,183.5M390.1,165.4L387.8,166.5M387.8,166.5L385.9,164.7M385.9,164.7L386.3,161.9M386.3,161.9L388.5,160.8M388.5,160.8L390.4,162.6M390.4,162.6L390.6,166.2M390.6,166.2L391.6,165.5M437.2,179.1L435.5,181.1M435.5,181.1L433.2,180.3M433.2,180.3L432.6,177.6M432.6,177.6L434.3,175.5M434.3,175.5L436.6,176.3M436.6,176.3L438.2,179.5M438.2,179.5L438.8,180.2M438.8,180.2L440.2,178.5M387.9,168.1L386.5,170.4M386.5,170.4L384.2,170.2M384.2,170.2L383.1,167.6M383.1,167.6L384.5,165.3M384.5,165.3L386.8,165.5M386.8,165.5L390.2,166.2M481.3,177.9L479.3,179.5M479.3,179.5L477.1,178.3M477.1,178.3L476.9,175.4M476.9,175.4L478.9,173.8M478.9,173.8L481.1,175.0M481.1,175.0L483.1,179.4M483.1,179.4L482.8,180.8M482.8,180.8L482.2,178.8M431.4,159.8L429.3,161.2M429.3,161.2L427.3,159.7M427.3,159.7L427.3,156.8M427.3,156.8L429.4,155.5M429.4,155.5L431.5,156.9M431.5,156.9L431.8,159.7M431.8,159.7L432.8,158.6M409.8,152.6L407.9,154.4M407.9,154.4L405.7,153.4M405.7,153.4L405.3,150.6M405.3,150.6L407.1,148.8M407.1,148.8L409.4,149.8M409.4,149.8L408.8,154.9M408.8,154.9L407.8,154.6M407.8,154.6L408.3,156.8M385.7,180.3L384.4,182.8M384.4,182.8L382.0,182.7M382.0,182.7L380.9,180.2M380.9,180.2L382.1,177.7M382.1,177.7L384.5,177.8M384.5,177.8L385.1,179.7M385.1,179.7L383.4,180.1M383.4,180.1L385.1,180.3M444.1,184.5L441.9,185.6M441.9,185.6L440.0,183.9M440.0,183.9L440.3,181.0M440.3,181.0L442.5,179.9M442.5,179.9L444.4,181.6M444.4,181.6L441.7,184.8M441.7,184.8L443.3,182.4M404.7,156.7L402.4,157.5M402.4,157.5L400.6,155.5M400.6,155.5L401.2,152.7M401.2,152.7L403.5,151.9M403.5,151.9L405.3,153.9M405.3,153.9L403.8,156.4M403.8,156.4L402.9,158.2M402.9,158.2L402.0,156.1M421.3,150.8L419.3,152.4M419.3,152.4L417.1,151.1M417.1,151.1L417.0,148.2M417.0,148.2L419.0,146.6M419.0,146.6L421.1,147.9M421.1,147.9L422.0,150.9M422.0,150.9L423.2,152.6M423.2,152.6L422.8,152.2M382.6,157.9L381.2,160.2M381.2,160.2L378.8,159.8M378.8,159.8L377.8,157.2M377.8,157.2L379.3,154.9M379.3,154.9L381.7,155.2M381.7,155.2L380.7,160.2M380.7,160.2L383.0,161.6M383.0,161.6L380.3,161.5M483.6,161.4L481.2,161.8M481.2,161.8L479.8,159.5M479.8,159.5L480.7,156.8M480.7,156.8L483.0,156.5M483.0,156.5L484.5,158.7M484.5,158.7L484.3,163.9M484.3,163.9L484.6,165.8M401.2,153.1L398.9,153.8M398.9,153.8L397.2,151.7M397.2,151.7L397.9,149.0M397.9,149.0L400.2,148.3M400.2,148.3L401.9,150.3M401.9,150.3L402.9,154.6M402.9,154.6L404.5,152.2M404.5,152.2L406.8,154.4M486.2,177.6L484.7,179.9M484.7,179.9L482.3,179.5M482.3,179.5L481.4,176.8M481.4,176.8L482.9,174.6M482.9,174.6L485.3,174.9M485.3,174.9L488.9,176.3M488.9,176.3L489.1,174.3M489.1,174.3L490.6,171.5M491.1,169.6L488.8,170.1M488.8,170.1L487.2,167.9M487.2,167.9L488.0,165.2M488.0,165.2L490.4,164.7M490.4,164.7L491.9,166.8M491.9,166.8L488.4,167.8M488.4,167.8L486.7,168.8M423.8,170.1L421.4,170.2M421.4,170.2L420.1,167.8M420.1,167.8L421.2,165.3M421.2,165.3L423.6,165.1M423.6,165.1L424.9,167.5M424.9,167.5L425.0,169.3M425.0,169.3L426.0,167.1M426.0,167.1L425.4,166.9M376.0,189.7L373.6,190.4M373.6,190.4L372.0,188.3M372.0,188.3L372.6,185.5M372.6,185.5L374.9,184.8M374.9,184.8L376.6,186.9M376.6,186.9L378.2,187.7M398.4,161.3L397.0,163.6M397.0,163.6L394.6,163.3M394.6,163.3L393.6,160.7M393.6,160.7L395.1,158.4M395.1,158.4L397.4,158.7M397.4,158.7L400.9,161.7M400.9,161.7L402.1,160.7M477.5,167.7L476.1,170.1M476.1,170.1L473.7,169.8M473.7,169.8L472.7,167.2M472.7,167.2L474.1,164.9M474.1,164.9L476.5,165.1M476.5,165.1L474.9,170.5M393.2,175.6L391.2,177.1M391.2,177.1L389.0,175.8M389.0,175.8L388.9,172.9M388.9,172.9L391.0,171.4M391.0,171.4L393.1,172.7M393.1,172.7L393.9,176.9M393.9,176.9L394.5,175.8M443.2,154.0L441.4,155.9M441.4,155.9L439.2,155.0M439.2,155.0L438.7,152.1M438.7,152.1L440.5,150.3M440.5,150.3L442.8,151.2M442.8,151.2L445.1,154.7M445.1,154.7L443.2,156.1M462.6,178.1L461.0,180.2M461.0,180.2L458.7,179.7M458.7,179.7L457.9,176.9M457.9,176.9L459.5,174.8M459.5,174.8L461.9,175.3M461.9,175.3L463.3,176.4M430.8,152.9L428.4,153.2M428.4,153.2L427.1,150.8M427.1,150.8L428.1,148.2M428.1,148.2L430.5,148.0M430.5,148.0L431.9,150.3M431.9,150.3L429.4,153.3M393.2,184.6L392.0,187.0M392.0,187.0L389.6,187.0M389.6,187.0L388.4,184.5M388.4,184.5L389.6,182.0M389.6,182.0L392.0,182.1M392.0,182.1L395.4,183.1M395.4,183.1L395.8,185.0M395.8,185.0L394.0,185.2M421.2,171.3L418.9,172.0M418.9,172.0L417.2,169.9M417.2,169.9L417.9,167.1M417.9,167.1L420.2,166.4M420.2,166.4L421.9,168.5M421.9,168.5L419.3,170.8M488.4,145.4L486.1,146.1M486.1,146.1L484.4,144.1M484.4,144.1L485.0,141.3M485.0,141.3L487.3,140.6M487.3,140.6L489.0,142.6M489.0,142.6L489.3,143.4M489.3,143.4L491.9,144.0M491.9,144.0L491.7,143.5M427.4,170.1L425.0,170.6M425.0,170.6L423.6,168.3M423.6,168.3L424.5,165.6M424.5,165.6L426.8,165.2M426.8,165.2L428.3,167.5M428.3,167.5L426.5,170.3M426.5,170.3L426.0,167.6M426.0,167.6L428.3,166.5M403.9,183.7L401.5,183.9M401.5,183.9L400.2,181.6M400.2,181.6L401.2,179.0M401.2,179.0L403.6,178.7M403.6,178.7L405.0,181.1M405.0,181.1L405.0,183.9M405.0,183.9L403.5,182.8M473.0,153.7L470.7,154.5M470.7,154.5L468.9,152.6M468.9,152.6L469.5,149.8M469.5,149.8L471.8,148.9M471.8,148.9L473.5,150.9M473.5,150.9L470.9,151.3M470.9,151.3L471.0,149.2M471.0,149.2L473.1,149.6M459.7,153.9L458.0,155.8M458.0,155.8L455.7,155.0M455.7,155.0L455.2,152.1M455.2,152.1L456.9,150.2M456.9,150.2L459.2,151.1M459.2,151.1L462.0,152.8M462.0,152.8L462.0,155.2M418.6,165.1L417.0,167.3M417.0,167.3L414.7,166.9M414.7,166.9L413.8,164.1M413.8,164.1L415.4,161.9M415.4,161.9L417.7,162.4M417.7,162.4L421.3,163.5M421.3,163.5L422.1,161.7M422.1,161.7L424.2,159.2M429.6,149.5L428.0,151.6M428.0,151.6L425.7,151.0M425.7,151.0L425.0,148.3M425.0,148.3L426.6,146.1M426.6,146.1L428.9,146.8M428.9,146.8L427.5,150.6M427.5,150.6L426.2,151.8M484.6,149.9L483.0,152.0M483.0,152.0L480.6,151.4M480.6,151.4L479.9,148.7M479.9,148.7L481.5,146.5M481.5,146.5L483.9,147.2M483.9,147.2L485.4,147.6M406.0,178.7L404.6,181.0M404.6,181.0L402.2,180.8M402.2,180.8L401.2,178.2M401.2,178.2L402.6,175.8M402.6,175.8L405.0,176.1M405.0,176.1L408.7,176.9M408.7,176.9L406.9,178.3M484.2,144.2L482.8,146.6M482.8,146.6L480.4,146.4M480.4,146.4L479.4,143.8M479.4,143.8L480.7,141.4M480.7,141.4L483.1,141.6M483.1,141.6L486.5,143.2M486.5,143.2L486.4,140.6M486.4,140.6L485.2,142.4M441.6,157.0L439.4,158.0M439.4,158.0L437.6,156.1M437.6,156.1L438.0,153.3M438.0,153.3L440.3,152.3M440.3,152.3L442.1,154.2M442.1,154.2L440.2,157.0M440.2,157.0L438.6,157.4M438.6,157.4L438.6,154.8M428.6,158.1L426.2,158.8M426.2,158.8L424.6,156.8M424.6,156.8L425.2,154.0M425.2,154.0L427.5,153.3M427.5,153.3L429.2,155.4M429.2,155.4L426.4,156.3M474.7,175.7L472.4,176.5M472.4,176.5L470.7,174.5M470.7,174.5L471.3,171.7M471.3,171.7L473.6,170.9M473.6,170.9L475.3,172.9M475.3,172.9L474.7,176.6M474.7,176.6L474.8,175.9M474.8,175.9L473.3,175.9M467.5,168.2L466.1,170.5M466.1,170.5L463.7,170.1M463.7,170.1L462.8,167.5M462.8,167.5L464.2,165.2M464.2,165.2L466.6,165.6M466.6,165.6L467.3,169.6M467.3,169.6L464.7,168.2M464.7,168.2L466.9,166.1M406.2,168.9L404.6,170.9M404.6,170.9L402.2,170.3M402.2,170.3L401.6,167.5M401.6,167.5L403.2,165.4M403.2,165.4L405.6,166.1M405.6,166.1L403.9,167.3M403.9,167.3L402.8,169.8M483.3,182.6L481.7,184.8M481.7,184.8L479.4,184.3M479.4,184.3L478.5,181.6M478.5,181.6L480.1,179.4M480.1,179.4L482.4,179.9M482.4,179.9L485.7,181.0M485.7,181.0L485.0,178.5M432.6,166.4L430.4,167.6M430.4,167.6L428.5,165.9M428.5,165.9L428.7,163.0M428.7,163.0L430.9,161.9M430.9,161.9L432.8,163.5M432.8,163.5L434.6,164.8M406.5,164.0L404.1,164.4M404.1,164.4L402.6,162.1M402.6,162.1L403.6,159.4M403.6,159.4L405.9,159.1M405.9,159.1L407.4,161.4M407.4,161.4L404.9,161.8M404.9,161.8L402.4,163.1M402.4,163.1L403.9,161.0M482.5,171.7L480.7,173.7M480.7,173.7L478.4,172.8M478.4,172.8L477.9,170.0M477.9,170.0L479.7,168.1M479.7,168.1L482.0,168.9M482.0,168.9L481.0,169.2M481.0,169.2L479.1,169.7M479.1,169.7L476.4,168.6M409.4,175.7L407.5,177.4M407.5,177.4L405.3,176.3M405.3,176.3L405.0,173.4M405.0,173.4L406.9,171.7M406.9,171.7L409.1,172.9M409.1,172.9L409.5,174.9M409.5,174.9L407.3,174.2M455.1,148.9L452.8,149.4M452.8,149.4L451.2,147.3M451.2,147.3L452.0,144.6M452.0,144.6L454.3,144.0M454.3,144.0L455.9,146.2M455.9,146.2L456.2,149.8M456.2,149.8L458.8,151.9M458.8,151.9L457.3,152.6M424.5,165.0L422.9,167.2M422.9,167.2L420.6,166.7M420.6,166.7L419.7,164.0M419.7,164.0L421.3,161.8M421.3,161.8L423.6,162.3M423.6,162.3L425.7,165.1M425.7,165.1L427.0,167.4M427.0,167.4L428.7,167.3M421.3,180.1L419.5,182.0M419.5,182.0L417.3,181.2M417.3,181.2L416.7,178.4M416.7,178.4L418.5,176.4M418.5,176.4L420.8,177.3M420.8,177.3L420.3,178.7M420.3,178.7L417.7,177.8M417.7,177.8L419.9,178.2M469.1,170.6L466.9,171.8M466.9,171.8L464.9,170.1M464.9,170.1L465.2,167.3M465.2,167.3L467.4,166.1M467.4,166.1L469.3,167.8M469.3,167.8L469.7,168.2M469.7,168.2L467.3,168.0M377.9,171.2L376.2,173.2M376.2,173.2L373.9,172.5M373.9,172.5L373.3,169.7M373.3,169.7L375.0,167.6M375.0,167.6L377.3,168.4M377.3,168.4L378.9,169.7M378.9,169.7L376.1,170.0M493.5,156.8L491.6,158.7M491.6,158.7L489.4,157.7M489.4,157.7L488.9,154.9M488.9,154.9L490.8,153.0M490.8,153.0L493.0,154.0M493.0,154.0L492.4,158.1M444.1,160.3L442.4,162.3M442.4,162.3L440.0,161.5M440.0,161.5L439.5,158.7M439.5,158.7L441.2,156.7M441.2,156.7L443.5,157.5M443.5,157.5L445.0,160.3M445.0,160.3L445.8,159.5M445.8,159.5L447.0,161.8M380.1,172.4L378.2,174.1M378.2,174.1L376.0,172.9M376.0,172.9L375.7,170.1M375.7,170.1L377.7,168.3M377.7,168.3L379.9,169.5M379.9,169.5L377.6,171.0M377.6,171.0L377.7,172.6M476.3,167.6L474.3,169.3M474.3,169.3L472.1,168.1M472.1,168.1L471.9,165.2M471.9,165.2L473.8,163.5M473.8,163.5L476.0,164.7M476.0,164.7L474.2,168.9M474.2,168.9L472.9,167.0M472.9,167.0L471.2,167.7M406.0,173.9L404.1,175.7M404.1,175.7L401.8,174.6M401.8,174.6L401.5,171.7M401.5,171.7L403.4,170.0M403.4,170.0L405.6,171.1M405.6,171.1L408.7,171.4M408.7,171.4L409.9,169.2M409.9,169.2L407.3,168.0M473.0,178.7L471.2,180.7M471.2,180.7L468.9,179.9M468.9,179.9L468.4,177.1M468.4,177.1L470.1,175.1M470.1,175.1L472.4,175.9M472.4,175.9L474.2,178.2M474.2,178.2L472.2,178.6M482.8,160.9L481.3,163.2M481.3,163.2L478.9,162.7M478.9,162.7L478.1,160.0M478.1,160.0L479.6,157.8M479.6,157.8L481.9,158.2M481.9,158.2L481.5,161.3M393.2,147.3L390.9,148.1M390.9,148.1L389.2,146.1M389.2,146.1L389.8,143.3M389.8,143.3L392.1,142.5M392.1,142.5L393.8,144.5M393.8,144.5L390.9,145.5M390.9,145.5L390.8,148.3M390.8,148.3L389.1,150.3M488.9,182.3L486.5,182.4M486.5,182.4L485.1,180.0M485.1,180.0L486.2,177.5M486.2,177.5L488.6,177.3M488.6,177.3L489.9,179.7M489.9,179.7L489.3,184.8M489.3,184.8L486.7,186.8M483.4,145.2L481.5,147.0M481.5,147.0L479.3,146.0M479.3,146.0L478.9,143.2M478.9,143.2L480.8,141.4M480.8,141.4L483.0,142.4M483.0,142.4L482.1,143.8M482.1,143.8L484.5,143.8M484.5,143.8L483.4,144.0M376.4,150.6L374.6,152.5M374.6,152.5L372.4,151.6M372.4,151.6L371.9,148.8M371.9,148.8L373.7,146.9M373.7,146.9L376.0,147.8M376.0,147.8L375.7,151.5M375.7,151.5L377.4,150.7M377.4,150.7L378.2,149.9M458.4,151.3L457.0,153.6M457.0,153.6L454.6,153.3M454.6,153.3L453.6,150.7M453.6,150.7L455.0,148.3M455.0,148.3L457.4,148.6M457.4,148.6L457.7,149.5M377.9,151.5L376.6,153.9M376.6,153.9L374.2,153.7M374.2,153.7L373.1,151.1M373.1,151.1L374.5,148.7M374.5,148.7L376.9,148.9M376.9,148.9L375.7,154.2M375.7,154.2L375.3,156.8M375.3,156.8L373.8,156.3M393.3,172.9L391.4,174.7M391.4,174.7L389.2,173.6M389.2,173.6L388.8,170.8M388.8,170.8L390.7,169.0M390.7,169.0L393.0,170.1M393.0,170.1L390.8,173.6M390.8,173.6L389.9,173.2M389.9,173.2L391.1,172.8M421.2,167.4L419.9,169.8M419.9,169.8L417.5,169.7M417.5,169.7L416.4,167.1M416.4,167.1L417.7,164.7M417.7,164.7L420.1,164.8M420.1,164.8L421.4,167.1M451.1,153.2L449.1,154.8M449.1,154.8L447.0,153.5M447.0,153.5L446.8,150.6M446.8,150.6L448.9,149.0M448.9,149.0L451.0,150.3M451.0,150.3L450.6,155.3M450.6,155.3L448.5,158.0M448.5,158.0L448.4,156.5M461.5,155.7L459.1,156.4M459.1,156.4L457.5,154.3M457.5,154.3L458.2,151.6M458.2,151.6L460.5,150.9M460.5,150.9L462.2,153.0M462.2,153.0L459.8,153.0M459.8,153.0L459.4,153.0M381.2,184.5L378.8,184.7M378.8,184.7L377.4,182.4M377.4,182.4L378.5,179.8M378.5,179.8L380.9,179.5M380.9,179.5L382.2,181.9M382.2,181.9L382.8,182.6M396.8,163.7L394.4,164.2M394.4,164.2L392.8,162.1M392.8,162.1L393.6,159.3M393.6,159.3L395.9,158.8M395.9,158.8L397.5,160.9M397.5,160.9L396.6,163.6M396.6,163.6L394.3,164.4M394.3,164.4L394.4,163.4M455.7,153.0L454.1,155.1M454.1,155.1L451.7,154.5M451.7,154.5L451.0,151.8M451.0,151.8L452.6,149.7M452.6,149.7L454.9,150.3M454.9,150.3L453.8,153.5M383.2,155.0L381.0,155.9M381.0,155.9L379.1,154.0M379.1,154.0L379.6,151.2M379.6,151.2L381.9,150.3M381.9,150.3L383.7,152.2M383.7,152.2L384.7,153.3M384.7,153.3L382.3,152.0M435.5,150.5L434.0,152.8M434.0,152.8L431.6,152.4M431.6,152.4L430.7,149.8M430.7,149.8L432.2,147.5M432.2,147.5L434.5,147.8M434.5,147.8L438.0,148.1M438.0,148.1L438.8,146.6M455.2,156.5L453.0,157.6M453.0,157.6L451.1,155.8M451.1,155.8L451.4,153.0M451.4,153.0L453.7,151.9M453.7,151.9L455.6,153.7M455.6,153.7L456.2,155.1M478.8,168.9L476.7,170.3M476.7,170.3L474.6,168.8M474.6,168.8L474.7,165.9M474.7,165.9L476.8,164.5M476.8,164.5L478.8,166.0M478.8,166.0L478.5,167.3M481.9,171.2L480.4,173.5M480.4,173.5L478.0,173.0M478.0,173.0L477.2,170.4M477.2,170.4L478.7,168.1M478.7,168.1L481.0,168.6M481.0,168.6L481.1,171.1M475.9,171.8L473.7,172.8M473.7,172.8L471.8,170.9M471.8,170.9L472.3,168.1M472.3,168.1L474.5,167.1M474.5,167.1L476.4,169.0M476.4,169.0L473.5,171.6M423.5,175.2L422.2,177.6M422.2,177.6L419.8,177.4M419.8,177.4L418.8,174.7M418.8,174.7L420.1,172.4M420.1,172.4L422.5,172.6M422.5,172.6L426.1,176.3M394.2,161.7L392.4,163.5M392.4,163.5L390.1,162.5M390.1,162.5L389.8,159.7M389.8,159.7L391.6,157.8M391.6,157.8L393.9,158.9M393.9,158.9L392.1,161.2M404.1,174.2L402.1,175.6M402.1,175.6L400.0,174.2M400.0,174.2L399.9,171.4M399.9,171.4L402.0,169.9M402.0,169.9L404.1,171.3M404.1,171.3L403.0,175.7M403.0,175.7L401.5,175.2M394.0,187.5L391.9,188.9M391.9,188.9L389.8,187.5M389.8,187.5L389.8,184.6M389.8,184.6L391.9,183.1M391.9,183.1L394.0,184.6M394.0,184.6L394.6,190.1M394.6,190.1L395.8,187.9M423.9,167.5L421.5,167.9M421.5,167.9L420.0,165.6M420.0,165.6L420.9,162.9M420.9,162.9L423.3,162.6M423.3,162.6L424.8,164.8M424.8,164.8L424.7,169.4M424.7,169.4L422.1,169.0M422.1,169.0L419.8,167.6" stroke="#9a9a9a" stroke-width="0.9" fill="none"/><g><circle cx="426.4" cy="167.3" r="1.35" fill="url(#rb)"/><circle cx="391.8" cy="162.3" r="1.35" fill="url(#rb)"/><circle cx="470.3" cy="118.0" r="1.35" fill="url(#rb)"/><circle cx="407.1" cy="117.6" r="1.35" fill="url(#rb)"/><circle cx="494.7" cy="210.3" r="1.35" fill="url(#rb)"/><circle cx="392.5" cy="133.6" r="1.35" fill="url(#rb)"/><circle cx="476.7" cy="163.0" r="1.35" fill="url(#rb)"/><circle cx="403.9" cy="213.8" r="1.35" fill="url(#rb)"/><circle cx="496.4" cy="197.1" r="1.35" fill="url(#rb)"/><circle cx="405.3" cy="115.4" r="1.35" fill="url(#rb)"/><circle cx="466.9" cy="150.4" r="1.35" fill="url(#rb)"/><circle cx="417.9" cy="209.6" r="1.35" fill="url(#rb)"/><circle cx="477.3" cy="108.1" r="1.35" fill="url(#rb)"/><circle cx="395.1" cy="204.5" r="1.35" fill="url(#rb)"/><circle cx="428.6" cy="211.9" r="1.35" fill="url(#rb)"/><circle cx="419.3" cy="115.7" r="1.35" fill="url(#rb)"/><circle cx="449.2" cy="190.5" r="1.35" fill="url(#rb)"/><circle cx="402.8" cy="117.2" r="1.35" fill="url(#rb)"/><circle cx="410.9" cy="210.2" r="1.35" fill="url(#rb)"/><circle cx="465.8" cy="120.5" r="1.35" fill="url(#rb)"/><circle cx="399.8" cy="118.7" r="1.35" fill="url(#rb)"/><circle cx="375.7" cy="192.5" r="1.35" fill="url(#rb)"/><circle cx="451.0" cy="120.3" r="1.35" fill="url(#rb)"/><circle cx="422.3" cy="130.6" r="1.35" fill="url(#rb)"/><circle cx="402.8" cy="210.9" r="1.35" fill="url(#rb)"/><circle cx="471.6" cy="140.2" r="1.35" fill="url(#rb)"/><circle cx="395.2" cy="149.8" r="1.35" fill="url(#rb)"/><circle cx="450.8" cy="118.6" r="1.35" fill="url(#rb)"/><circle cx="495.6" cy="130.6" r="1.35" fill="url(#rb)"/><circle cx="406.2" cy="115.8" r="1.35" fill="url(#rb)"/><circle cx="479.8" cy="127.4" r="1.35" fill="url(#rb)"/><circle cx="387.9" cy="204.3" r="1.35" fill="url(#rb)"/><circle cx="473.5" cy="134.4" r="1.35" fill="url(#rb)"/><circle cx="392.5" cy="186.4" r="1.35" fill="url(#rb)"/><circle cx="393.4" cy="208.7" r="1.35" fill="url(#rb)"/><circle cx="381.4" cy="112.1" r="1.35" fill="url(#rb)"/><circle cx="492.2" cy="133.3" r="1.35" fill="url(#rb)"/><circle cx="458.9" cy="135.2" r="1.35" fill="url(#rb)"/><circle cx="460.9" cy="115.3" r="1.35" fill="url(#rb)"/><circle cx="397.5" cy="167.3" r="1.35" fill="url(#rb)"/><circle cx="449.4" cy="157.9" r="1.5" fill="url(#gb)"/><circle cx="447.0" cy="158.3" r="1.4" fill="url(#rb)"/><circle cx="445.6" cy="156.0" r="1.4" fill="url(#bb)"/><circle cx="446.5" cy="153.3" r="1.4" fill="url(#rb)"/><circle cx="448.9" cy="152.9" r="1.5" fill="url(#gb)"/><circle cx="450.3" cy="155.2" r="1.5" fill="url(#gb)"/><circle cx="450.8" cy="155.5" r="1.4" fill="url(#bb)"/><circle cx="392.2" cy="164.9" r="1.5" fill="url(#gb)"/><circle cx="390.3" cy="166.8" r="1.5" fill="url(#gb)"/><circle cx="388.1" cy="165.9" r="1.4" fill="url(#bb)"/><circle cx="387.6" cy="163.1" r="1.5" fill="url(#gb)"/><circle cx="389.4" cy="161.2" r="1.5" fill="url(#gb)"/><circle cx="391.7" cy="162.1" r="1.5" fill="url(#gb)"/><circle cx="393.2" cy="165.4" r="1.5" fill="url(#gb)"/><circle cx="391.2" cy="162.8" r="1.5" fill="url(#gb)"/><circle cx="388.5" cy="165.1" r="1.4" fill="url(#bb)"/><circle cx="441.1" cy="176.1" r="1.4" fill="url(#bb)"/><circle cx="438.7" cy="176.6" r="1.5" fill="url(#gb)"/><circle cx="437.2" cy="174.3" r="1.5" fill="url(#gb)"/><circle cx="438.1" cy="171.6" r="1.4" fill="url(#bb)"/><circle cx="440.5" cy="171.2" r="1.5" fill="url(#gb)"/><circle cx="442.0" cy="173.5" r="1.4" fill="url(#bb)"/><circle cx="442.4" cy="174.1" r="1.5" fill="url(#gb)"/><circle cx="445.0" cy="173.2" r="1.5" fill="url(#gb)"/><circle cx="442.7" cy="173.0" r="1.4" fill="url(#bb)"/><circle cx="384.2" cy="148.4" r="1.5" fill="url(#gb)"/><circle cx="382.8" cy="150.7" r="1.5" fill="url(#gb)"/><circle cx="380.4" cy="150.4" r="1.5" fill="url(#gb)"/><circle cx="379.4" cy="147.8" r="1.4" fill="url(#bb)"/><circle cx="380.9" cy="145.5" r="1.5" fill="url(#gb)"/><circle cx="383.2" cy="145.8" r="1.4" fill="url(#bb)"/><circle cx="386.3" cy="149.7" r="1.5" fill="url(#gb)"/><circle cx="385.7" cy="151.0" r="1.5" fill="url(#gb)"/><circle cx="403.2" cy="175.6" r="1.5" fill="url(#gb)"/><circle cx="401.2" cy="177.1" r="1.5" fill="url(#gb)"/><circle cx="399.0" cy="175.8" r="1.5" fill="url(#gb)"/><circle cx="399.0" cy="172.9" r="1.5" fill="url(#gb)"/><circle cx="401.0" cy="171.4" r="1.5" fill="url(#gb)"/><circle cx="403.1" cy="172.8" r="1.4" fill="url(#rb)"/><circle cx="404.1" cy="175.6" r="1.5" fill="url(#gb)"/><circle cx="406.3" cy="174.8" r="1.4" fill="url(#rb)"/><circle cx="404.3" cy="175.4" r="1.5" fill="url(#gb)"/><circle cx="473.4" cy="174.9" r="1.5" fill="url(#gb)"/><circle cx="471.8" cy="177.1" r="1.4" fill="url(#bb)"/><circle cx="469.5" cy="176.5" r="1.5" fill="url(#gb)"/><circle cx="468.7" cy="173.8" r="1.5" fill="url(#gb)"/><circle cx="470.3" cy="171.6" r="1.5" fill="url(#gb)"/><circle cx="472.6" cy="172.2" r="1.5" fill="url(#gb)"/><circle cx="472.8" cy="175.4" r="1.5" fill="url(#gb)"/><circle cx="408.9" cy="153.9" r="1.5" fill="url(#gb)"/><circle cx="406.9" cy="155.5" r="1.5" fill="url(#gb)"/><circle cx="404.8" cy="154.3" r="1.5" fill="url(#gb)"/><circle cx="404.6" cy="151.4" r="1.5" fill="url(#gb)"/><circle cx="406.6" cy="149.8" r="1.5" fill="url(#gb)"/><circle cx="408.8" cy="151.0" r="1.5" fill="url(#gb)"/><circle cx="411.3" cy="155.8" r="1.4" fill="url(#rb)"/><circle cx="410.7" cy="155.9" r="1.5" fill="url(#gb)"/><circle cx="458.0" cy="156.1" r="1.4" fill="url(#rb)"/><circle cx="456.2" cy="158.0" r="1.4" fill="url(#bb)"/><circle cx="453.9" cy="157.0" r="1.4" fill="url(#bb)"/><circle cx="453.5" cy="154.2" r="1.5" fill="url(#gb)"/><circle cx="455.3" cy="152.3" r="1.5" fill="url(#gb)"/><circle cx="457.6" cy="153.3" r="1.5" fill="url(#gb)"/><circle cx="459.6" cy="153.5" r="1.5" fill="url(#gb)"/><circle cx="457.6" cy="153.2" r="1.5" fill="url(#gb)"/><circle cx="454.9" cy="155.0" r="1.5" fill="url(#gb)"/><circle cx="458.6" cy="153.1" r="1.5" fill="url(#gb)"/><circle cx="456.6" cy="154.7" r="1.4" fill="url(#bb)"/><circle cx="454.5" cy="153.4" r="1.4" fill="url(#rb)"/><circle cx="454.4" cy="150.5" r="1.5" fill="url(#gb)"/><circle cx="456.4" cy="148.9" r="1.5" fill="url(#gb)"/><circle cx="458.5" cy="150.2" r="1.5" fill="url(#gb)"/><circle cx="459.8" cy="154.6" r="1.5" fill="url(#gb)"/><circle cx="496.2" cy="150.0" r="1.5" fill="url(#gb)"/><circle cx="493.8" cy="150.5" r="1.5" fill="url(#gb)"/><circle cx="492.3" cy="148.4" r="1.5" fill="url(#gb)"/><circle cx="493.0" cy="145.6" r="1.5" fill="url(#gb)"/><circle cx="495.4" cy="145.1" r="1.5" fill="url(#gb)"/><circle cx="497.0" cy="147.2" r="1.5" fill="url(#gb)"/><circle cx="498.5" cy="147.6" r="1.5" fill="url(#gb)"/><circle cx="500.9" cy="148.9" r="1.5" fill="url(#gb)"/><circle cx="498.8" cy="148.6" r="1.5" fill="url(#gb)"/><circle cx="399.6" cy="177.4" r="1.5" fill="url(#gb)"/><circle cx="397.3" cy="178.1" r="1.5" fill="url(#gb)"/><circle cx="395.7" cy="176.0" r="1.4" fill="url(#rb)"/><circle cx="396.4" cy="173.2" r="1.5" fill="url(#gb)"/><circle cx="398.7" cy="172.6" r="1.4" fill="url(#bb)"/><circle cx="400.3" cy="174.7" r="1.5" fill="url(#gb)"/><circle cx="402.0" cy="175.3" r="1.4" fill="url(#bb)"/><circle cx="400.6" cy="174.7" r="1.5" fill="url(#gb)"/><circle cx="398.3" cy="173.7" r="1.5" fill="url(#gb)"/><circle cx="408.9" cy="183.6" r="1.5" fill="url(#gb)"/><circle cx="407.3" cy="185.7" r="1.5" fill="url(#gb)"/><circle cx="405.0" cy="185.1" r="1.5" fill="url(#gb)"/><circle cx="404.2" cy="182.3" r="1.5" fill="url(#gb)"/><circle cx="405.9" cy="180.2" r="1.5" fill="url(#gb)"/><circle cx="408.2" cy="180.8" r="1.5" fill="url(#gb)"/><circle cx="408.5" cy="181.0" r="1.5" fill="url(#gb)"/><circle cx="457.2" cy="163.8" r="1.5" fill="url(#gb)"/><circle cx="454.9" cy="164.3" r="1.5" fill="url(#gb)"/><circle cx="453.3" cy="162.0" r="1.5" fill="url(#gb)"/><circle cx="454.2" cy="159.3" r="1.5" fill="url(#gb)"/><circle cx="456.5" cy="158.9" r="1.5" fill="url(#gb)"/><circle cx="458.1" cy="161.1" r="1.5" fill="url(#gb)"/><circle cx="459.7" cy="161.5" r="1.5" fill="url(#gb)"/><circle cx="458.2" cy="161.6" r="1.5" fill="url(#gb)"/><circle cx="457.0" cy="162.9" r="1.4" fill="url(#bb)"/><circle cx="478.9" cy="185.2" r="1.4" fill="url(#bb)"/><circle cx="476.8" cy="186.7" r="1.5" fill="url(#gb)"/><circle cx="474.7" cy="185.2" r="1.5" fill="url(#gb)"/><circle cx="474.7" cy="182.3" r="1.5" fill="url(#gb)"/><circle cx="476.8" cy="180.9" r="1.4" fill="url(#bb)"/><circle cx="478.9" cy="182.3" r="1.4" fill="url(#bb)"/><circle cx="478.9" cy="184.7" r="1.4" fill="url(#bb)"/><circle cx="476.7" cy="181.9" r="1.5" fill="url(#gb)"/><circle cx="476.0" cy="182.2" r="1.5" fill="url(#gb)"/><circle cx="487.5" cy="178.0" r="1.5" fill="url(#gb)"/><circle cx="485.6" cy="179.7" r="1.5" fill="url(#gb)"/><circle cx="483.4" cy="178.6" r="1.5" fill="url(#gb)"/><circle cx="483.1" cy="175.7" r="1.5" fill="url(#gb)"/><circle cx="485.0" cy="174.0" r="1.5" fill="url(#gb)"/><circle cx="487.3" cy="175.1" r="1.4" fill="url(#bb)"/><circle cx="487.4" cy="175.9" r="1.5" fill="url(#gb)"/><circle cx="487.6" cy="148.8" r="1.4" fill="url(#bb)"/><circle cx="485.3" cy="149.6" r="1.4" fill="url(#rb)"/><circle cx="483.6" cy="147.6" r="1.5" fill="url(#gb)"/><circle cx="484.2" cy="144.8" r="1.4" fill="url(#rb)"/><circle cx="486.5" cy="144.0" r="1.5" fill="url(#gb)"/><circle cx="488.2" cy="146.1" r="1.5" fill="url(#gb)"/><circle cx="485.0" cy="146.9" r="1.5" fill="url(#gb)"/><circle cx="478.7" cy="170.7" r="1.4" fill="url(#bb)"/><circle cx="476.5" cy="171.6" r="1.5" fill="url(#gb)"/><circle cx="474.7" cy="169.8" r="1.5" fill="url(#gb)"/><circle cx="475.1" cy="166.9" r="1.5" fill="url(#gb)"/><circle cx="477.4" cy="166.0" r="1.5" fill="url(#gb)"/><circle cx="479.2" cy="167.9" r="1.5" fill="url(#gb)"/><circle cx="478.9" cy="170.4" r="1.5" fill="url(#gb)"/><circle cx="478.2" cy="169.9" r="1.4" fill="url(#rb)"/><circle cx="478.4" cy="168.0" r="1.5" fill="url(#gb)"/><circle cx="474.2" cy="181.6" r="1.4" fill="url(#bb)"/><circle cx="472.4" cy="183.5" r="1.5" fill="url(#gb)"/><circle cx="470.1" cy="182.6" r="1.4" fill="url(#bb)"/><circle cx="469.6" cy="179.8" r="1.4" fill="url(#bb)"/><circle cx="471.4" cy="177.8" r="1.5" fill="url(#gb)"/><circle cx="473.7" cy="178.7" r="1.5" fill="url(#gb)"/><circle cx="476.4" cy="179.9" r="1.5" fill="url(#gb)"/><circle cx="477.9" cy="178.1" r="1.5" fill="url(#gb)"/><circle cx="460.9" cy="153.4" r="1.5" fill="url(#gb)"/><circle cx="458.7" cy="154.5" r="1.5" fill="url(#gb)"/><circle cx="456.8" cy="152.9" r="1.5" fill="url(#gb)"/><circle cx="457.0" cy="150.0" r="1.5" fill="url(#gb)"/><circle cx="459.2" cy="148.8" r="1.5" fill="url(#gb)"/><circle cx="461.2" cy="150.5" r="1.5" fill="url(#gb)"/><circle cx="458.7" cy="153.8" r="1.5" fill="url(#gb)"/><circle cx="476.7" cy="177.8" r="1.5" fill="url(#gb)"/><circle cx="474.7" cy="179.4" r="1.5" fill="url(#gb)"/><circle cx="472.6" cy="178.1" r="1.4" fill="url(#bb)"/><circle cx="472.5" cy="175.2" r="1.4" fill="url(#bb)"/><circle cx="474.5" cy="173.6" r="1.4" fill="url(#bb)"/><circle cx="476.6" cy="175.0" r="1.5" fill="url(#gb)"/><circle cx="474.2" cy="178.1" r="1.5" fill="url(#gb)"/><circle cx="488.5" cy="145.5" r="1.5" fill="url(#gb)"/><circle cx="487.1" cy="147.9" r="1.4" fill="url(#bb)"/><circle cx="484.8" cy="147.7" r="1.5" fill="url(#gb)"/><circle cx="483.7" cy="145.1" r="1.5" fill="url(#gb)"/><circle cx="485.0" cy="142.7" r="1.4" fill="url(#bb)"/><circle cx="487.4" cy="142.9" r="1.5" fill="url(#gb)"/><circle cx="488.3" cy="146.9" r="1.5" fill="url(#gb)"/><circle cx="487.3" cy="146.8" r="1.5" fill="url(#gb)"/><circle cx="487.4" cy="146.4" r="1.4" fill="url(#bb)"/><circle cx="395.5" cy="166.7" r="1.5" fill="url(#gb)"/><circle cx="394.3" cy="169.2" r="1.5" fill="url(#gb)"/><circle cx="391.9" cy="169.1" r="1.5" fill="url(#gb)"/><circle cx="390.7" cy="166.6" r="1.5" fill="url(#gb)"/><circle cx="392.0" cy="164.2" r="1.5" fill="url(#gb)"/><circle cx="394.4" cy="164.2" r="1.5" fill="url(#gb)"/><circle cx="397.2" cy="167.9" r="1.5" fill="url(#gb)"/><circle cx="406.3" cy="184.7" r="1.5" fill="url(#gb)"/><circle cx="404.0" cy="185.6" r="1.5" fill="url(#gb)"/><circle cx="402.2" cy="183.6" r="1.5" fill="url(#gb)"/><circle cx="402.7" cy="180.8" r="1.5" fill="url(#gb)"/><circle cx="405.0" cy="180.0" r="1.5" fill="url(#gb)"/><circle cx="406.8" cy="181.9" r="1.5" fill="url(#gb)"/><circle cx="408.0" cy="184.2" r="1.5" fill="url(#gb)"/><circle cx="383.7" cy="160.4" r="1.5" fill="url(#gb)"/><circle cx="381.7" cy="161.9" r="1.4" fill="url(#bb)"/><circle cx="379.6" cy="160.6" r="1.4" fill="url(#rb)"/><circle cx="379.5" cy="157.7" r="1.5" fill="url(#gb)"/><circle cx="381.5" cy="156.2" r="1.5" fill="url(#gb)"/><circle cx="383.6" cy="157.5" r="1.4" fill="url(#bb)"/><circle cx="385.9" cy="163.1" r="1.5" fill="url(#gb)"/><circle cx="397.3" cy="149.9" r="1.4" fill="url(#bb)"/><circle cx="395.2" cy="151.3" r="1.5" fill="url(#gb)"/><circle cx="393.1" cy="149.9" r="1.5" fill="url(#gb)"/><circle cx="393.1" cy="147.0" r="1.4" fill="url(#rb)"/><circle cx="395.2" cy="145.6" r="1.5" fill="url(#gb)"/><circle cx="397.3" cy="147.0" r="1.4" fill="url(#bb)"/><circle cx="398.1" cy="151.0" r="1.4" fill="url(#bb)"/><circle cx="399.6" cy="153.7" r="1.5" fill="url(#gb)"/><circle cx="386.5" cy="157.5" r="1.5" fill="url(#gb)"/><circle cx="384.1" cy="158.0" r="1.5" fill="url(#gb)"/><circle cx="382.6" cy="155.7" r="1.5" fill="url(#gb)"/><circle cx="383.5" cy="153.0" r="1.5" fill="url(#gb)"/><circle cx="385.9" cy="152.6" r="1.5" fill="url(#gb)"/><circle cx="387.4" cy="154.9" r="1.5" fill="url(#gb)"/><circle cx="386.7" cy="157.1" r="1.5" fill="url(#gb)"/><circle cx="386.8" cy="159.0" r="1.5" fill="url(#gb)"/><circle cx="384.6" cy="158.7" r="1.5" fill="url(#gb)"/><circle cx="441.3" cy="169.6" r="1.4" fill="url(#rb)"/><circle cx="439.3" cy="171.3" r="1.5" fill="url(#gb)"/><circle cx="437.2" cy="170.1" r="1.5" fill="url(#gb)"/><circle cx="436.9" cy="167.2" r="1.4" fill="url(#rb)"/><circle cx="438.9" cy="165.6" r="1.5" fill="url(#gb)"/><circle cx="441.1" cy="166.8" r="1.5" fill="url(#gb)"/><circle cx="440.9" cy="169.8" r="1.4" fill="url(#bb)"/><circle cx="441.4" cy="169.0" r="1.4" fill="url(#rb)"/><circle cx="380.0" cy="152.7" r="1.5" fill="url(#gb)"/><circle cx="377.7" cy="153.5" r="1.5" fill="url(#gb)"/><circle cx="375.9" cy="151.5" r="1.5" fill="url(#gb)"/><circle cx="376.5" cy="148.7" r="1.4" fill="url(#rb)"/><circle cx="378.8" cy="147.9" r="1.5" fill="url(#gb)"/><circle cx="380.5" cy="149.9" r="1.4" fill="url(#rb)"/><circle cx="377.5" cy="151.7" r="1.5" fill="url(#gb)"/><circle cx="376.9" cy="152.1" r="1.4" fill="url(#bb)"/><circle cx="386.5" cy="181.7" r="1.5" fill="url(#gb)"/><circle cx="384.1" cy="182.1" r="1.4" fill="url(#bb)"/><circle cx="382.6" cy="179.8" r="1.5" fill="url(#gb)"/><circle cx="383.5" cy="177.2" r="1.5" fill="url(#gb)"/><circle cx="385.9" cy="176.8" r="1.4" fill="url(#bb)"/><circle cx="387.4" cy="179.1" r="1.4" fill="url(#bb)"/><circle cx="389.2" cy="183.5" r="1.5" fill="url(#gb)"/><circle cx="390.1" cy="165.4" r="1.5" fill="url(#gb)"/><circle cx="387.8" cy="166.5" r="1.5" fill="url(#gb)"/><circle cx="385.9" cy="164.7" r="1.4" fill="url(#bb)"/><circle cx="386.3" cy="161.9" r="1.5" fill="url(#gb)"/><circle cx="388.5" cy="160.8" r="1.4" fill="url(#bb)"/><circle cx="390.4" cy="162.6" r="1.5" fill="url(#gb)"/><circle cx="390.6" cy="166.2" r="1.5" fill="url(#gb)"/><circle cx="391.6" cy="165.5" r="1.5" fill="url(#gb)"/><circle cx="437.2" cy="179.1" r="1.4" fill="url(#rb)"/><circle cx="435.5" cy="181.1" r="1.5" fill="url(#gb)"/><circle cx="433.2" cy="180.3" r="1.5" fill="url(#gb)"/><circle cx="432.6" cy="177.6" r="1.5" fill="url(#gb)"/><circle cx="434.3" cy="175.5" r="1.4" fill="url(#bb)"/><circle cx="436.6" cy="176.3" r="1.4" fill="url(#bb)"/><circle cx="438.2" cy="179.5" r="1.4" fill="url(#rb)"/><circle cx="438.8" cy="180.2" r="1.5" fill="url(#gb)"/><circle cx="440.2" cy="178.5" r="1.5" fill="url(#gb)"/><circle cx="387.9" cy="168.1" r="1.4" fill="url(#rb)"/><circle cx="386.5" cy="170.4" r="1.5" fill="url(#gb)"/><circle cx="384.2" cy="170.2" r="1.5" fill="url(#gb)"/><circle cx="383.1" cy="167.6" r="1.5" fill="url(#gb)"/><circle cx="384.5" cy="165.3" r="1.5" fill="url(#gb)"/><circle cx="386.8" cy="165.5" r="1.5" fill="url(#gb)"/><circle cx="390.2" cy="166.2" r="1.4" fill="url(#bb)"/><circle cx="481.3" cy="177.9" r="1.4" fill="url(#bb)"/><circle cx="479.3" cy="179.5" r="1.5" fill="url(#gb)"/><circle cx="477.1" cy="178.3" r="1.5" fill="url(#gb)"/><circle cx="476.9" cy="175.4" r="1.5" fill="url(#gb)"/><circle cx="478.9" cy="173.8" r="1.5" fill="url(#gb)"/><circle cx="481.1" cy="175.0" r="1.5" fill="url(#gb)"/><circle cx="483.1" cy="179.4" r="1.4" fill="url(#bb)"/><circle cx="482.8" cy="180.8" r="1.5" fill="url(#gb)"/><circle cx="482.2" cy="178.8" r="1.5" fill="url(#gb)"/><circle cx="431.4" cy="159.8" r="1.5" fill="url(#gb)"/><circle cx="429.3" cy="161.2" r="1.4" fill="url(#bb)"/><circle cx="427.3" cy="159.7" r="1.4" fill="url(#bb)"/><circle cx="427.3" cy="156.8" r="1.5" fill="url(#gb)"/><circle cx="429.4" cy="155.5" r="1.4" fill="url(#bb)"/><circle cx="431.5" cy="156.9" r="1.5" fill="url(#gb)"/><circle cx="431.8" cy="159.7" r="1.5" fill="url(#gb)"/><circle cx="432.8" cy="158.6" r="1.5" fill="url(#gb)"/><circle cx="409.8" cy="152.6" r="1.5" fill="url(#gb)"/><circle cx="407.9" cy="154.4" r="1.4" fill="url(#rb)"/><circle cx="405.7" cy="153.4" r="1.5" fill="url(#gb)"/><circle cx="405.3" cy="150.6" r="1.5" fill="url(#gb)"/><circle cx="407.1" cy="148.8" r="1.5" fill="url(#gb)"/><circle cx="409.4" cy="149.8" r="1.4" fill="url(#rb)"/><circle cx="408.8" cy="154.9" r="1.5" fill="url(#gb)"/><circle cx="407.8" cy="154.6" r="1.5" fill="url(#gb)"/><circle cx="408.3" cy="156.8" r="1.5" fill="url(#gb)"/><circle cx="385.7" cy="180.3" r="1.5" fill="url(#gb)"/><circle cx="384.4" cy="182.8" r="1.5" fill="url(#gb)"/><circle cx="382.0" cy="182.7" r="1.4" fill="url(#bb)"/><circle cx="380.9" cy="180.2" r="1.5" fill="url(#gb)"/><circle cx="382.1" cy="177.7" r="1.5" fill="url(#gb)"/><circle cx="384.5" cy="177.8" r="1.4" fill="url(#rb)"/><circle cx="385.1" cy="179.7" r="1.4" fill="url(#bb)"/><circle cx="383.4" cy="180.1" r="1.5" fill="url(#gb)"/><circle cx="385.1" cy="180.3" r="1.5" fill="url(#gb)"/><circle cx="444.1" cy="184.5" r="1.4" fill="url(#bb)"/><circle cx="441.9" cy="185.6" r="1.5" fill="url(#gb)"/><circle cx="440.0" cy="183.9" r="1.5" fill="url(#gb)"/><circle cx="440.3" cy="181.0" r="1.4" fill="url(#bb)"/><circle cx="442.5" cy="179.9" r="1.5" fill="url(#gb)"/><circle cx="444.4" cy="181.6" r="1.4" fill="url(#bb)"/><circle cx="441.7" cy="184.8" r="1.5" fill="url(#gb)"/><circle cx="443.3" cy="182.4" r="1.5" fill="url(#gb)"/><circle cx="404.7" cy="156.7" r="1.5" fill="url(#gb)"/><circle cx="402.4" cy="157.5" r="1.5" fill="url(#gb)"/><circle cx="400.6" cy="155.5" r="1.4" fill="url(#bb)"/><circle cx="401.2" cy="152.7" r="1.5" fill="url(#gb)"/><circle cx="403.5" cy="151.9" r="1.4" fill="url(#bb)"/><circle cx="405.3" cy="153.9" r="1.5" fill="url(#gb)"/><circle cx="403.8" cy="156.4" r="1.5" fill="url(#gb)"/><circle cx="402.9" cy="158.2" r="1.5" fill="url(#gb)"/><circle cx="402.0" cy="156.1" r="1.4" fill="url(#bb)"/><circle cx="421.3" cy="150.8" r="1.4" fill="url(#bb)"/><circle cx="419.3" cy="152.4" r="1.5" fill="url(#gb)"/><circle cx="417.1" cy="151.1" r="1.5" fill="url(#gb)"/><circle cx="417.0" cy="148.2" r="1.5" fill="url(#gb)"/><circle cx="419.0" cy="146.6" r="1.4" fill="url(#bb)"/><circle cx="421.1" cy="147.9" r="1.4" fill="url(#bb)"/><circle cx="422.0" cy="150.9" r="1.5" fill="url(#gb)"/><circle cx="423.2" cy="152.6" r="1.5" fill="url(#gb)"/><circle cx="422.8" cy="152.2" r="1.5" fill="url(#gb)"/><circle cx="382.6" cy="157.9" r="1.5" fill="url(#gb)"/><circle cx="381.2" cy="160.2" r="1.5" fill="url(#gb)"/><circle cx="378.8" cy="159.8" r="1.4" fill="url(#bb)"/><circle cx="377.8" cy="157.2" r="1.5" fill="url(#gb)"/><circle cx="379.3" cy="154.9" r="1.5" fill="url(#gb)"/><circle cx="381.7" cy="155.2" r="1.5" fill="url(#gb)"/><circle cx="380.7" cy="160.2" r="1.5" fill="url(#gb)"/><circle cx="383.0" cy="161.6" r="1.5" fill="url(#gb)"/><circle cx="380.3" cy="161.5" r="1.5" fill="url(#gb)"/><circle cx="483.6" cy="161.4" r="1.5" fill="url(#gb)"/><circle cx="481.2" cy="161.8" r="1.5" fill="url(#gb)"/><circle cx="479.8" cy="159.5" r="1.5" fill="url(#gb)"/><circle cx="480.7" cy="156.8" r="1.5" fill="url(#gb)"/><circle cx="483.0" cy="156.5" r="1.5" fill="url(#gb)"/><circle cx="484.5" cy="158.7" r="1.4" fill="url(#bb)"/><circle cx="484.3" cy="163.9" r="1.5" fill="url(#gb)"/><circle cx="484.6" cy="165.8" r="1.5" fill="url(#gb)"/><circle cx="401.2" cy="153.1" r="1.5" fill="url(#gb)"/><circle cx="398.9" cy="153.8" r="1.5" fill="url(#gb)"/><circle cx="397.2" cy="151.7" r="1.5" fill="url(#gb)"/><circle cx="397.9" cy="149.0" r="1.4" fill="url(#rb)"/><circle cx="400.2" cy="148.3" r="1.5" fill="url(#gb)"/><circle cx="401.9" cy="150.3" r="1.5" fill="url(#gb)"/><circle cx="402.9" cy="154.6" r="1.5" fill="url(#gb)"/><circle cx="404.5" cy="152.2" r="1.5" fill="url(#gb)"/><circle cx="406.8" cy="154.4" r="1.4" fill="url(#bb)"/><circle cx="486.2" cy="177.6" r="1.5" fill="url(#gb)"/><circle cx="484.7" cy="179.9" r="1.5" fill="url(#gb)"/><circle cx="482.3" cy="179.5" r="1.5" fill="url(#gb)"/><circle cx="481.4" cy="176.8" r="1.4" fill="url(#bb)"/><circle cx="482.9" cy="174.6" r="1.4" fill="url(#rb)"/><circle cx="485.3" cy="174.9" r="1.5" fill="url(#gb)"/><circle cx="488.9" cy="176.3" r="1.4" fill="url(#bb)"/><circle cx="489.1" cy="174.3" r="1.5" fill="url(#gb)"/><circle cx="490.6" cy="171.5" r="1.5" fill="url(#gb)"/><circle cx="491.1" cy="169.6" r="1.5" fill="url(#gb)"/><circle cx="488.8" cy="170.1" r="1.5" fill="url(#gb)"/><circle cx="487.2" cy="167.9" r="1.4" fill="url(#bb)"/><circle cx="488.0" cy="165.2" r="1.5" fill="url(#gb)"/><circle cx="490.4" cy="164.7" r="1.5" fill="url(#gb)"/><circle cx="491.9" cy="166.8" r="1.5" fill="url(#gb)"/><circle cx="488.4" cy="167.8" r="1.5" fill="url(#gb)"/><circle cx="486.7" cy="168.8" r="1.5" fill="url(#gb)"/><circle cx="423.8" cy="170.1" r="1.5" fill="url(#gb)"/><circle cx="421.4" cy="170.2" r="1.5" fill="url(#gb)"/><circle cx="420.1" cy="167.8" r="1.5" fill="url(#gb)"/><circle cx="421.2" cy="165.3" r="1.4" fill="url(#bb)"/><circle cx="423.6" cy="165.1" r="1.5" fill="url(#gb)"/><circle cx="424.9" cy="167.5" r="1.5" fill="url(#gb)"/><circle cx="425.0" cy="169.3" r="1.4" fill="url(#rb)"/><circle cx="426.0" cy="167.1" r="1.5" fill="url(#gb)"/><circle cx="425.4" cy="166.9" r="1.5" fill="url(#gb)"/><circle cx="376.0" cy="189.7" r="1.5" fill="url(#gb)"/><circle cx="373.6" cy="190.4" r="1.5" fill="url(#gb)"/><circle cx="372.0" cy="188.3" r="1.5" fill="url(#gb)"/><circle cx="372.6" cy="185.5" r="1.5" fill="url(#gb)"/><circle cx="374.9" cy="184.8" r="1.5" fill="url(#gb)"/><circle cx="376.6" cy="186.9" r="1.5" fill="url(#gb)"/><circle cx="378.2" cy="187.7" r="1.4" fill="url(#bb)"/><circle cx="398.4" cy="161.3" r="1.5" fill="url(#gb)"/><circle cx="397.0" cy="163.6" r="1.4" fill="url(#bb)"/><circle cx="394.6" cy="163.3" r="1.4" fill="url(#bb)"/><circle cx="393.6" cy="160.7" r="1.4" fill="url(#bb)"/><circle cx="395.1" cy="158.4" r="1.5" fill="url(#gb)"/><circle cx="397.4" cy="158.7" r="1.5" fill="url(#gb)"/><circle cx="400.9" cy="161.7" r="1.4" fill="url(#bb)"/><circle cx="402.1" cy="160.7" r="1.5" fill="url(#gb)"/><circle cx="477.5" cy="167.7" r="1.5" fill="url(#gb)"/><circle cx="476.1" cy="170.1" r="1.5" fill="url(#gb)"/><circle cx="473.7" cy="169.8" r="1.5" fill="url(#gb)"/><circle cx="472.7" cy="167.2" r="1.5" fill="url(#gb)"/><circle cx="474.1" cy="164.9" r="1.5" fill="url(#gb)"/><circle cx="476.5" cy="165.1" r="1.4" fill="url(#bb)"/><circle cx="474.9" cy="170.5" r="1.4" fill="url(#bb)"/><circle cx="393.2" cy="175.6" r="1.5" fill="url(#gb)"/><circle cx="391.2" cy="177.1" r="1.4" fill="url(#rb)"/><circle cx="389.0" cy="175.8" r="1.5" fill="url(#gb)"/><circle cx="388.9" cy="172.9" r="1.5" fill="url(#gb)"/><circle cx="391.0" cy="171.4" r="1.4" fill="url(#rb)"/><circle cx="393.1" cy="172.7" r="1.4" fill="url(#bb)"/><circle cx="393.9" cy="176.9" r="1.5" fill="url(#gb)"/><circle cx="394.5" cy="175.8" r="1.5" fill="url(#gb)"/><circle cx="443.2" cy="154.0" r="1.5" fill="url(#gb)"/><circle cx="441.4" cy="155.9" r="1.5" fill="url(#gb)"/><circle cx="439.2" cy="155.0" r="1.5" fill="url(#gb)"/><circle cx="438.7" cy="152.1" r="1.5" fill="url(#gb)"/><circle cx="440.5" cy="150.3" r="1.4" fill="url(#bb)"/><circle cx="442.8" cy="151.2" r="1.5" fill="url(#gb)"/><circle cx="445.1" cy="154.7" r="1.5" fill="url(#gb)"/><circle cx="443.2" cy="156.1" r="1.5" fill="url(#gb)"/><circle cx="462.6" cy="178.1" r="1.4" fill="url(#bb)"/><circle cx="461.0" cy="180.2" r="1.4" fill="url(#rb)"/><circle cx="458.7" cy="179.7" r="1.5" fill="url(#gb)"/><circle cx="457.9" cy="176.9" r="1.5" fill="url(#gb)"/><circle cx="459.5" cy="174.8" r="1.5" fill="url(#gb)"/><circle cx="461.9" cy="175.3" r="1.5" fill="url(#gb)"/><circle cx="463.3" cy="176.4" r="1.5" fill="url(#gb)"/><circle cx="430.8" cy="152.9" r="1.5" fill="url(#gb)"/><circle cx="428.4" cy="153.2" r="1.4" fill="url(#bb)"/><circle cx="427.1" cy="150.8" r="1.5" fill="url(#gb)"/><circle cx="428.1" cy="148.2" r="1.4" fill="url(#bb)"/><circle cx="430.5" cy="148.0" r="1.5" fill="url(#gb)"/><circle cx="431.9" cy="150.3" r="1.5" fill="url(#gb)"/><circle cx="429.4" cy="153.3" r="1.5" fill="url(#gb)"/><circle cx="393.2" cy="184.6" r="1.4" fill="url(#bb)"/><circle cx="392.0" cy="187.0" r="1.4" fill="url(#bb)"/><circle cx="389.6" cy="187.0" r="1.4" fill="url(#bb)"/><circle cx="388.4" cy="184.5" r="1.5" fill="url(#gb)"/><circle cx="389.6" cy="182.0" r="1.5" fill="url(#gb)"/><circle cx="392.0" cy="182.1" r="1.5" fill="url(#gb)"/><circle cx="395.4" cy="183.1" r="1.5" fill="url(#gb)"/><circle cx="395.8" cy="185.0" r="1.5" fill="url(#gb)"/><circle cx="394.0" cy="185.2" r="1.5" fill="url(#gb)"/><circle cx="421.2" cy="171.3" r="1.4" fill="url(#bb)"/><circle cx="418.9" cy="172.0" r="1.5" fill="url(#gb)"/><circle cx="417.2" cy="169.9" r="1.4" fill="url(#bb)"/><circle cx="417.9" cy="167.1" r="1.5" fill="url(#gb)"/><circle cx="420.2" cy="166.4" r="1.5" fill="url(#gb)"/><circle cx="421.9" cy="168.5" r="1.4" fill="url(#bb)"/><circle cx="419.3" cy="170.8" r="1.4" fill="url(#rb)"/><circle cx="488.4" cy="145.4" r="1.5" fill="url(#gb)"/><circle cx="486.1" cy="146.1" r="1.5" fill="url(#gb)"/><circle cx="484.4" cy="144.1" r="1.5" fill="url(#gb)"/><circle cx="485.0" cy="141.3" r="1.5" fill="url(#gb)"/><circle cx="487.3" cy="140.6" r="1.5" fill="url(#gb)"/><circle cx="489.0" cy="142.6" r="1.5" fill="url(#gb)"/><circle cx="489.3" cy="143.4" r="1.5" fill="url(#gb)"/><circle cx="491.9" cy="144.0" r="1.5" fill="url(#gb)"/><circle cx="491.7" cy="143.5" r="1.5" fill="url(#gb)"/><circle cx="427.4" cy="170.1" r="1.5" fill="url(#gb)"/><circle cx="425.0" cy="170.6" r="1.5" fill="url(#gb)"/><circle cx="423.6" cy="168.3" r="1.5" fill="url(#gb)"/><circle cx="424.5" cy="165.6" r="1.5" fill="url(#gb)"/><circle cx="426.8" cy="165.2" r="1.5" fill="url(#gb)"/><circle cx="428.3" cy="167.5" r="1.5" fill="url(#gb)"/><circle cx="426.5" cy="170.3" r="1.5" fill="url(#gb)"/><circle cx="426.0" cy="167.6" r="1.4" fill="url(#rb)"/><circle cx="428.3" cy="166.5" r="1.5" fill="url(#gb)"/><circle cx="403.9" cy="183.7" r="1.5" fill="url(#gb)"/><circle cx="401.5" cy="183.9" r="1.4" fill="url(#rb)"/><circle cx="400.2" cy="181.6" r="1.4" fill="url(#bb)"/><circle cx="401.2" cy="179.0" r="1.5" fill="url(#gb)"/><circle cx="403.6" cy="178.7" r="1.5" fill="url(#gb)"/><circle cx="405.0" cy="181.1" r="1.5" fill="url(#gb)"/><circle cx="405.0" cy="183.9" r="1.5" fill="url(#gb)"/><circle cx="403.5" cy="182.8" r="1.5" fill="url(#gb)"/><circle cx="473.0" cy="153.7" r="1.5" fill="url(#gb)"/><circle cx="470.7" cy="154.5" r="1.5" fill="url(#gb)"/><circle cx="468.9" cy="152.6" r="1.5" fill="url(#gb)"/><circle cx="469.5" cy="149.8" r="1.4" fill="url(#bb)"/><circle cx="471.8" cy="148.9" r="1.4" fill="url(#bb)"/><circle cx="473.5" cy="150.9" r="1.5" fill="url(#gb)"/><circle cx="470.9" cy="151.3" r="1.5" fill="url(#gb)"/><circle cx="471.0" cy="149.2" r="1.5" fill="url(#gb)"/><circle cx="473.1" cy="149.6" r="1.4" fill="url(#bb)"/><circle cx="459.7" cy="153.9" r="1.5" fill="url(#gb)"/><circle cx="458.0" cy="155.8" r="1.5" fill="url(#gb)"/><circle cx="455.7" cy="155.0" r="1.4" fill="url(#bb)"/><circle cx="455.2" cy="152.1" r="1.5" fill="url(#gb)"/><circle cx="456.9" cy="150.2" r="1.5" fill="url(#gb)"/><circle cx="459.2" cy="151.1" r="1.5" fill="url(#gb)"/><circle cx="462.0" cy="152.8" r="1.4" fill="url(#bb)"/><circle cx="462.0" cy="155.2" r="1.5" fill="url(#gb)"/><circle cx="418.6" cy="165.1" r="1.4" fill="url(#bb)"/><circle cx="417.0" cy="167.3" r="1.5" fill="url(#gb)"/><circle cx="414.7" cy="166.9" r="1.5" fill="url(#gb)"/><circle cx="413.8" cy="164.1" r="1.5" fill="url(#gb)"/><circle cx="415.4" cy="161.9" r="1.5" fill="url(#gb)"/><circle cx="417.7" cy="162.4" r="1.5" fill="url(#gb)"/><circle cx="421.3" cy="163.5" r="1.4" fill="url(#bb)"/><circle cx="422.1" cy="161.7" r="1.5" fill="url(#gb)"/><circle cx="424.2" cy="159.2" r="1.5" fill="url(#gb)"/><circle cx="429.6" cy="149.5" r="1.5" fill="url(#gb)"/><circle cx="428.0" cy="151.6" r="1.5" fill="url(#gb)"/><circle cx="425.7" cy="151.0" r="1.4" fill="url(#rb)"/><circle cx="425.0" cy="148.3" r="1.5" fill="url(#gb)"/><circle cx="426.6" cy="146.1" r="1.5" fill="url(#gb)"/><circle cx="428.9" cy="146.8" r="1.4" fill="url(#bb)"/><circle cx="427.5" cy="150.6" r="1.5" fill="url(#gb)"/><circle cx="426.2" cy="151.8" r="1.5" fill="url(#gb)"/><circle cx="484.6" cy="149.9" r="1.5" fill="url(#gb)"/><circle cx="483.0" cy="152.0" r="1.5" fill="url(#gb)"/><circle cx="480.6" cy="151.4" r="1.5" fill="url(#gb)"/><circle cx="479.9" cy="148.7" r="1.5" fill="url(#gb)"/><circle cx="481.5" cy="146.5" r="1.4" fill="url(#bb)"/><circle cx="483.9" cy="147.2" r="1.5" fill="url(#gb)"/><circle cx="485.4" cy="147.6" r="1.4" fill="url(#rb)"/><circle cx="406.0" cy="178.7" r="1.4" fill="url(#bb)"/><circle cx="404.6" cy="181.0" r="1.5" fill="url(#gb)"/><circle cx="402.2" cy="180.8" r="1.4" fill="url(#bb)"/><circle cx="401.2" cy="178.2" r="1.5" fill="url(#gb)"/><circle cx="402.6" cy="175.8" r="1.5" fill="url(#gb)"/><circle cx="405.0" cy="176.1" r="1.5" fill="url(#gb)"/><circle cx="408.7" cy="176.9" r="1.5" fill="url(#gb)"/><circle cx="406.9" cy="178.3" r="1.4" fill="url(#bb)"/><circle cx="484.2" cy="144.2" r="1.5" fill="url(#gb)"/><circle cx="482.8" cy="146.6" r="1.5" fill="url(#gb)"/><circle cx="480.4" cy="146.4" r="1.5" fill="url(#gb)"/><circle cx="479.4" cy="143.8" r="1.5" fill="url(#gb)"/><circle cx="480.7" cy="141.4" r="1.5" fill="url(#gb)"/><circle cx="483.1" cy="141.6" r="1.5" fill="url(#gb)"/><circle cx="486.5" cy="143.2" r="1.4" fill="url(#bb)"/><circle cx="486.4" cy="140.6" r="1.5" fill="url(#gb)"/><circle cx="485.2" cy="142.4" r="1.5" fill="url(#gb)"/><circle cx="441.6" cy="157.0" r="1.5" fill="url(#gb)"/><circle cx="439.4" cy="158.0" r="1.5" fill="url(#gb)"/><circle cx="437.6" cy="156.1" r="1.5" fill="url(#gb)"/><circle cx="438.0" cy="153.3" r="1.5" fill="url(#gb)"/><circle cx="440.3" cy="152.3" r="1.4" fill="url(#bb)"/><circle cx="442.1" cy="154.2" r="1.4" fill="url(#bb)"/><circle cx="440.2" cy="157.0" r="1.4" fill="url(#bb)"/><circle cx="438.6" cy="157.4" r="1.5" fill="url(#gb)"/><circle cx="438.6" cy="154.8" r="1.5" fill="url(#gb)"/><circle cx="428.6" cy="158.1" r="1.5" fill="url(#gb)"/><circle cx="426.2" cy="158.8" r="1.5" fill="url(#gb)"/><circle cx="424.6" cy="156.8" r="1.5" fill="url(#gb)"/><circle cx="425.2" cy="154.0" r="1.5" fill="url(#gb)"/><circle cx="427.5" cy="153.3" r="1.4" fill="url(#bb)"/><circle cx="429.2" cy="155.4" r="1.5" fill="url(#gb)"/><circle cx="426.4" cy="156.3" r="1.5" fill="url(#gb)"/><circle cx="474.7" cy="175.7" r="1.5" fill="url(#gb)"/><circle cx="472.4" cy="176.5" r="1.5" fill="url(#gb)"/><circle cx="470.7" cy="174.5" r="1.5" fill="url(#gb)"/><circle cx="471.3" cy="171.7" r="1.5" fill="url(#gb)"/><circle cx="473.6" cy="170.9" r="1.5" fill="url(#gb)"/><circle cx="475.3" cy="172.9" r="1.5" fill="url(#gb)"/><circle cx="474.7" cy="176.6" r="1.5" fill="url(#gb)"/><circle cx="474.8" cy="175.9" r="1.5" fill="url(#gb)"/><circle cx="473.3" cy="175.9" r="1.4" fill="url(#bb)"/><circle cx="467.5" cy="168.2" r="1.5" fill="url(#gb)"/><circle cx="466.1" cy="170.5" r="1.5" fill="url(#gb)"/><circle cx="463.7" cy="170.1" r="1.5" fill="url(#gb)"/><circle cx="462.8" cy="167.5" r="1.4" fill="url(#bb)"/><circle cx="464.2" cy="165.2" r="1.4" fill="url(#bb)"/><circle cx="466.6" cy="165.6" r="1.5" fill="url(#gb)"/><circle cx="467.3" cy="169.6" r="1.5" fill="url(#gb)"/><circle cx="464.7" cy="168.2" r="1.5" fill="url(#gb)"/><circle cx="466.9" cy="166.1" r="1.4" fill="url(#rb)"/><circle cx="406.2" cy="168.9" r="1.5" fill="url(#gb)"/><circle cx="404.6" cy="170.9" r="1.4" fill="url(#bb)"/><circle cx="402.2" cy="170.3" r="1.4" fill="url(#bb)"/><circle cx="401.6" cy="167.5" r="1.5" fill="url(#gb)"/><circle cx="403.2" cy="165.4" r="1.5" fill="url(#gb)"/><circle cx="405.6" cy="166.1" r="1.5" fill="url(#gb)"/><circle cx="403.9" cy="167.3" r="1.5" fill="url(#gb)"/><circle cx="402.8" cy="169.8" r="1.5" fill="url(#gb)"/><circle cx="483.3" cy="182.6" r="1.5" fill="url(#gb)"/><circle cx="481.7" cy="184.8" r="1.4" fill="url(#rb)"/><circle cx="479.4" cy="184.3" r="1.5" fill="url(#gb)"/><circle cx="478.5" cy="181.6" r="1.5" fill="url(#gb)"/><circle cx="480.1" cy="179.4" r="1.5" fill="url(#gb)"/><circle cx="482.4" cy="179.9" r="1.5" fill="url(#gb)"/><circle cx="485.7" cy="181.0" r="1.5" fill="url(#gb)"/><circle cx="485.0" cy="178.5" r="1.5" fill="url(#gb)"/><circle cx="432.6" cy="166.4" r="1.5" fill="url(#gb)"/><circle cx="430.4" cy="167.6" r="1.4" fill="url(#bb)"/><circle cx="428.5" cy="165.9" r="1.5" fill="url(#gb)"/><circle cx="428.7" cy="163.0" r="1.5" fill="url(#gb)"/><circle cx="430.9" cy="161.9" r="1.4" fill="url(#rb)"/><circle cx="432.8" cy="163.5" r="1.4" fill="url(#bb)"/><circle cx="434.6" cy="164.8" r="1.4" fill="url(#bb)"/><circle cx="406.5" cy="164.0" r="1.4" fill="url(#rb)"/><circle cx="404.1" cy="164.4" r="1.5" fill="url(#gb)"/><circle cx="402.6" cy="162.1" r="1.4" fill="url(#bb)"/><circle cx="403.6" cy="159.4" r="1.5" fill="url(#gb)"/><circle cx="405.9" cy="159.1" r="1.5" fill="url(#gb)"/><circle cx="407.4" cy="161.4" r="1.5" fill="url(#gb)"/><circle cx="404.9" cy="161.8" r="1.5" fill="url(#gb)"/><circle cx="402.4" cy="163.1" r="1.5" fill="url(#gb)"/><circle cx="403.9" cy="161.0" r="1.4" fill="url(#rb)"/><circle cx="482.5" cy="171.7" r="1.5" fill="url(#gb)"/><circle cx="480.7" cy="173.7" r="1.5" fill="url(#gb)"/><circle cx="478.4" cy="172.8" r="1.4" fill="url(#bb)"/><circle cx="477.9" cy="170.0" r="1.5" fill="url(#gb)"/><circle cx="479.7" cy="168.1" r="1.4" fill="url(#rb)"/><circle cx="482.0" cy="168.9" r="1.5" fill="url(#gb)"/><circle cx="481.0" cy="169.2" r="1.5" fill="url(#gb)"/><circle cx="479.1" cy="169.7" r="1.4" fill="url(#bb)"/><circle cx="476.4" cy="168.6" r="1.4" fill="url(#bb)"/><circle cx="409.4" cy="175.7" r="1.5" fill="url(#gb)"/><circle cx="407.5" cy="177.4" r="1.4" fill="url(#bb)"/><circle cx="405.3" cy="176.3" r="1.5" fill="url(#gb)"/><circle cx="405.0" cy="173.4" r="1.5" fill="url(#gb)"/><circle cx="406.9" cy="171.7" r="1.5" fill="url(#gb)"/><circle cx="409.1" cy="172.9" r="1.4" fill="url(#bb)"/><circle cx="409.5" cy="174.9" r="1.5" fill="url(#gb)"/><circle cx="407.3" cy="174.2" r="1.5" fill="url(#gb)"/><circle cx="455.1" cy="148.9" r="1.4" fill="url(#bb)"/><circle cx="452.8" cy="149.4" r="1.5" fill="url(#gb)"/><circle cx="451.2" cy="147.3" r="1.5" fill="url(#gb)"/><circle cx="452.0" cy="144.6" r="1.4" fill="url(#bb)"/><circle cx="454.3" cy="144.0" r="1.5" fill="url(#gb)"/><circle cx="455.9" cy="146.2" r="1.5" fill="url(#gb)"/><circle cx="456.2" cy="149.8" r="1.5" fill="url(#gb)"/><circle cx="458.8" cy="151.9" r="1.4" fill="url(#rb)"/><circle cx="457.3" cy="152.6" r="1.4" fill="url(#bb)"/><circle cx="424.5" cy="165.0" r="1.4" fill="url(#rb)"/><circle cx="422.9" cy="167.2" r="1.5" fill="url(#gb)"/><circle cx="420.6" cy="166.7" r="1.5" fill="url(#gb)"/><circle cx="419.7" cy="164.0" r="1.5" fill="url(#gb)"/><circle cx="421.3" cy="161.8" r="1.5" fill="url(#gb)"/><circle cx="423.6" cy="162.3" r="1.4" fill="url(#bb)"/><circle cx="425.7" cy="165.1" r="1.5" fill="url(#gb)"/><circle cx="427.0" cy="167.4" r="1.5" fill="url(#gb)"/><circle cx="428.7" cy="167.3" r="1.4" fill="url(#rb)"/><circle cx="421.3" cy="180.1" r="1.4" fill="url(#rb)"/><circle cx="419.5" cy="182.0" r="1.5" fill="url(#gb)"/><circle cx="417.3" cy="181.2" r="1.4" fill="url(#bb)"/><circle cx="416.7" cy="178.4" r="1.5" fill="url(#gb)"/><circle cx="418.5" cy="176.4" r="1.5" fill="url(#gb)"/><circle cx="420.8" cy="177.3" r="1.5" fill="url(#gb)"/><circle cx="420.3" cy="178.7" r="1.5" fill="url(#gb)"/><circle cx="417.7" cy="177.8" r="1.5" fill="url(#gb)"/><circle cx="419.9" cy="178.2" r="1.5" fill="url(#gb)"/><circle cx="469.1" cy="170.6" r="1.5" fill="url(#gb)"/><circle cx="466.9" cy="171.8" r="1.5" fill="url(#gb)"/><circle cx="464.9" cy="170.1" r="1.5" fill="url(#gb)"/><circle cx="465.2" cy="167.3" r="1.5" fill="url(#gb)"/><circle cx="467.4" cy="166.1" r="1.5" fill="url(#gb)"/><circle cx="469.3" cy="167.8" r="1.4" fill="url(#rb)"/><circle cx="469.7" cy="168.2" r="1.5" fill="url(#gb)"/><circle cx="467.3" cy="168.0" r="1.5" fill="url(#gb)"/><circle cx="377.9" cy="171.2" r="1.5" fill="url(#gb)"/><circle cx="376.2" cy="173.2" r="1.4" fill="url(#rb)"/><circle cx="373.9" cy="172.5" r="1.5" fill="url(#gb)"/><circle cx="373.3" cy="169.7" r="1.5" fill="url(#gb)"/><circle cx="375.0" cy="167.6" r="1.5" fill="url(#gb)"/><circle cx="377.3" cy="168.4" r="1.5" fill="url(#gb)"/><circle cx="378.9" cy="169.7" r="1.5" fill="url(#gb)"/><circle cx="376.1" cy="170.0" r="1.5" fill="url(#gb)"/><circle cx="493.5" cy="156.8" r="1.5" fill="url(#gb)"/><circle cx="491.6" cy="158.7" r="1.5" fill="url(#gb)"/><circle cx="489.4" cy="157.7" r="1.5" fill="url(#gb)"/><circle cx="488.9" cy="154.9" r="1.5" fill="url(#gb)"/><circle cx="490.8" cy="153.0" r="1.4" fill="url(#bb)"/><circle cx="493.0" cy="154.0" r="1.5" fill="url(#gb)"/><circle cx="492.4" cy="158.1" r="1.5" fill="url(#gb)"/><circle cx="444.1" cy="160.3" r="1.5" fill="url(#gb)"/><circle cx="442.4" cy="162.3" r="1.5" fill="url(#gb)"/><circle cx="440.0" cy="161.5" r="1.5" fill="url(#gb)"/><circle cx="439.5" cy="158.7" r="1.5" fill="url(#gb)"/><circle cx="441.2" cy="156.7" r="1.5" fill="url(#gb)"/><circle cx="443.5" cy="157.5" r="1.5" fill="url(#gb)"/><circle cx="445.0" cy="160.3" r="1.5" fill="url(#gb)"/><circle cx="445.8" cy="159.5" r="1.5" fill="url(#gb)"/><circle cx="447.0" cy="161.8" r="1.5" fill="url(#gb)"/><circle cx="380.1" cy="172.4" r="1.5" fill="url(#gb)"/><circle cx="378.2" cy="174.1" r="1.5" fill="url(#gb)"/><circle cx="376.0" cy="172.9" r="1.4" fill="url(#rb)"/><circle cx="375.7" cy="170.1" r="1.5" fill="url(#gb)"/><circle cx="377.7" cy="168.3" r="1.5" fill="url(#gb)"/><circle cx="379.9" cy="169.5" r="1.5" fill="url(#gb)"/><circle cx="377.6" cy="171.0" r="1.5" fill="url(#gb)"/><circle cx="377.7" cy="172.6" r="1.5" fill="url(#gb)"/><circle cx="476.3" cy="167.6" r="1.5" fill="url(#gb)"/><circle cx="474.3" cy="169.3" r="1.5" fill="url(#gb)"/><circle cx="472.1" cy="168.1" r="1.5" fill="url(#gb)"/><circle cx="471.9" cy="165.2" r="1.5" fill="url(#gb)"/><circle cx="473.8" cy="163.5" r="1.5" fill="url(#gb)"/><circle cx="476.0" cy="164.7" r="1.5" fill="url(#gb)"/><circle cx="474.2" cy="168.9" r="1.5" fill="url(#gb)"/><circle cx="472.9" cy="167.0" r="1.4" fill="url(#rb)"/><circle cx="471.2" cy="167.7" r="1.4" fill="url(#rb)"/><circle cx="406.0" cy="173.9" r="1.5" fill="url(#gb)"/><circle cx="404.1" cy="175.7" r="1.5" fill="url(#gb)"/><circle cx="401.8" cy="174.6" r="1.4" fill="url(#bb)"/><circle cx="401.5" cy="171.7" r="1.5" fill="url(#gb)"/><circle cx="403.4" cy="170.0" r="1.4" fill="url(#bb)"/><circle cx="405.6" cy="171.1" r="1.5" fill="url(#gb)"/><circle cx="408.7" cy="171.4" r="1.5" fill="url(#gb)"/><circle cx="409.9" cy="169.2" r="1.5" fill="url(#gb)"/><circle cx="407.3" cy="168.0" r="1.5" fill="url(#gb)"/><circle cx="473.0" cy="178.7" r="1.5" fill="url(#gb)"/><circle cx="471.2" cy="180.7" r="1.4" fill="url(#bb)"/><circle cx="468.9" cy="179.9" r="1.4" fill="url(#rb)"/><circle cx="468.4" cy="177.1" r="1.5" fill="url(#gb)"/><circle cx="470.1" cy="175.1" r="1.5" fill="url(#gb)"/><circle cx="472.4" cy="175.9" r="1.5" fill="url(#gb)"/><circle cx="474.2" cy="178.2" r="1.5" fill="url(#gb)"/><circle cx="472.2" cy="178.6" r="1.5" fill="url(#gb)"/><circle cx="482.8" cy="160.9" r="1.4" fill="url(#rb)"/><circle cx="481.3" cy="163.2" r="1.5" fill="url(#gb)"/><circle cx="478.9" cy="162.7" r="1.5" fill="url(#gb)"/><circle cx="478.1" cy="160.0" r="1.4" fill="url(#bb)"/><circle cx="479.6" cy="157.8" r="1.4" fill="url(#bb)"/><circle cx="481.9" cy="158.2" r="1.5" fill="url(#gb)"/><circle cx="481.5" cy="161.3" r="1.5" fill="url(#gb)"/><circle cx="393.2" cy="147.3" r="1.5" fill="url(#gb)"/><circle cx="390.9" cy="148.1" r="1.5" fill="url(#gb)"/><circle cx="389.2" cy="146.1" r="1.5" fill="url(#gb)"/><circle cx="389.8" cy="143.3" r="1.5" fill="url(#gb)"/><circle cx="392.1" cy="142.5" r="1.4" fill="url(#bb)"/><circle cx="393.8" cy="144.5" r="1.5" fill="url(#gb)"/><circle cx="390.9" cy="145.5" r="1.5" fill="url(#gb)"/><circle cx="390.8" cy="148.3" r="1.5" fill="url(#gb)"/><circle cx="389.1" cy="150.3" r="1.4" fill="url(#rb)"/><circle cx="488.9" cy="182.3" r="1.5" fill="url(#gb)"/><circle cx="486.5" cy="182.4" r="1.5" fill="url(#gb)"/><circle cx="485.1" cy="180.0" r="1.5" fill="url(#gb)"/><circle cx="486.2" cy="177.5" r="1.4" fill="url(#rb)"/><circle cx="488.6" cy="177.3" r="1.4" fill="url(#bb)"/><circle cx="489.9" cy="179.7" r="1.5" fill="url(#gb)"/><circle cx="489.3" cy="184.8" r="1.4" fill="url(#bb)"/><circle cx="486.7" cy="186.8" r="1.5" fill="url(#gb)"/><circle cx="483.4" cy="145.2" r="1.5" fill="url(#gb)"/><circle cx="481.5" cy="147.0" r="1.5" fill="url(#gb)"/><circle cx="479.3" cy="146.0" r="1.5" fill="url(#gb)"/><circle cx="478.9" cy="143.2" r="1.5" fill="url(#gb)"/><circle cx="480.8" cy="141.4" r="1.5" fill="url(#gb)"/><circle cx="483.0" cy="142.4" r="1.5" fill="url(#gb)"/><circle cx="482.1" cy="143.8" r="1.5" fill="url(#gb)"/><circle cx="484.5" cy="143.8" r="1.5" fill="url(#gb)"/><circle cx="483.4" cy="144.0" r="1.5" fill="url(#gb)"/><circle cx="376.4" cy="150.6" r="1.4" fill="url(#rb)"/><circle cx="374.6" cy="152.5" r="1.5" fill="url(#gb)"/><circle cx="372.4" cy="151.6" r="1.5" fill="url(#gb)"/><circle cx="371.9" cy="148.8" r="1.4" fill="url(#bb)"/><circle cx="373.7" cy="146.9" r="1.5" fill="url(#gb)"/><circle cx="376.0" cy="147.8" r="1.5" fill="url(#gb)"/><circle cx="375.7" cy="151.5" r="1.4" fill="url(#bb)"/><circle cx="377.4" cy="150.7" r="1.5" fill="url(#gb)"/><circle cx="378.2" cy="149.9" r="1.5" fill="url(#gb)"/><circle cx="458.4" cy="151.3" r="1.4" fill="url(#bb)"/><circle cx="457.0" cy="153.6" r="1.5" fill="url(#gb)"/><circle cx="454.6" cy="153.3" r="1.4" fill="url(#bb)"/><circle cx="453.6" cy="150.7" r="1.4" fill="url(#bb)"/><circle cx="455.0" cy="148.3" r="1.5" fill="url(#gb)"/><circle cx="457.4" cy="148.6" r="1.5" fill="url(#gb)"/><circle cx="457.7" cy="149.5" r="1.5" fill="url(#gb)"/><circle cx="377.9" cy="151.5" r="1.5" fill="url(#gb)"/><circle cx="376.6" cy="153.9" r="1.4" fill="url(#bb)"/><circle cx="374.2" cy="153.7" r="1.4" fill="url(#rb)"/><circle cx="373.1" cy="151.1" r="1.5" fill="url(#gb)"/><circle cx="374.5" cy="148.7" r="1.5" fill="url(#gb)"/><circle cx="376.9" cy="148.9" r="1.5" fill="url(#gb)"/><circle cx="375.7" cy="154.2" r="1.4" fill="url(#bb)"/><circle cx="375.3" cy="156.8" r="1.5" fill="url(#gb)"/><circle cx="373.8" cy="156.3" r="1.5" fill="url(#gb)"/><circle cx="393.3" cy="172.9" r="1.5" fill="url(#gb)"/><circle cx="391.4" cy="174.7" r="1.5" fill="url(#gb)"/><circle cx="389.2" cy="173.6" r="1.4" fill="url(#bb)"/><circle cx="388.8" cy="170.8" r="1.5" fill="url(#gb)"/><circle cx="390.7" cy="169.0" r="1.5" fill="url(#gb)"/><circle cx="393.0" cy="170.1" r="1.5" fill="url(#gb)"/><circle cx="390.8" cy="173.6" r="1.5" fill="url(#gb)"/><circle cx="389.9" cy="173.2" r="1.5" fill="url(#gb)"/><circle cx="391.1" cy="172.8" r="1.5" fill="url(#gb)"/><circle cx="421.2" cy="167.4" r="1.4" fill="url(#rb)"/><circle cx="419.9" cy="169.8" r="1.4" fill="url(#bb)"/><circle cx="417.5" cy="169.7" r="1.4" fill="url(#bb)"/><circle cx="416.4" cy="167.1" r="1.5" fill="url(#gb)"/><circle cx="417.7" cy="164.7" r="1.5" fill="url(#gb)"/><circle cx="420.1" cy="164.8" r="1.5" fill="url(#gb)"/><circle cx="421.4" cy="167.1" r="1.4" fill="url(#rb)"/><circle cx="451.1" cy="153.2" r="1.5" fill="url(#gb)"/><circle cx="449.1" cy="154.8" r="1.5" fill="url(#gb)"/><circle cx="447.0" cy="153.5" r="1.5" fill="url(#gb)"/><circle cx="446.8" cy="150.6" r="1.5" fill="url(#gb)"/><circle cx="448.9" cy="149.0" r="1.5" fill="url(#gb)"/><circle cx="451.0" cy="150.3" r="1.5" fill="url(#gb)"/><circle cx="450.6" cy="155.3" r="1.5" fill="url(#gb)"/><circle cx="448.5" cy="158.0" r="1.4" fill="url(#bb)"/><circle cx="448.4" cy="156.5" r="1.5" fill="url(#gb)"/><circle cx="461.5" cy="155.7" r="1.5" fill="url(#gb)"/><circle cx="459.1" cy="156.4" r="1.4" fill="url(#rb)"/><circle cx="457.5" cy="154.3" r="1.4" fill="url(#bb)"/><circle cx="458.2" cy="151.6" r="1.5" fill="url(#gb)"/><circle cx="460.5" cy="150.9" r="1.5" fill="url(#gb)"/><circle cx="462.2" cy="153.0" r="1.5" fill="url(#gb)"/><circle cx="459.8" cy="153.0" r="1.4" fill="url(#bb)"/><circle cx="459.4" cy="153.0" r="1.5" fill="url(#gb)"/><circle cx="381.2" cy="184.5" r="1.5" fill="url(#gb)"/><circle cx="378.8" cy="184.7" r="1.4" fill="url(#bb)"/><circle cx="377.4" cy="182.4" r="1.4" fill="url(#bb)"/><circle cx="378.5" cy="179.8" r="1.5" fill="url(#gb)"/><circle cx="380.9" cy="179.5" r="1.5" fill="url(#gb)"/><circle cx="382.2" cy="181.9" r="1.5" fill="url(#gb)"/><circle cx="382.8" cy="182.6" r="1.4" fill="url(#bb)"/><circle cx="396.8" cy="163.7" r="1.5" fill="url(#gb)"/><circle cx="394.4" cy="164.2" r="1.5" fill="url(#gb)"/><circle cx="392.8" cy="162.1" r="1.5" fill="url(#gb)"/><circle cx="393.6" cy="159.3" r="1.5" fill="url(#gb)"/><circle cx="395.9" cy="158.8" r="1.5" fill="url(#gb)"/><circle cx="397.5" cy="160.9" r="1.5" fill="url(#gb)"/><circle cx="396.6" cy="163.6" r="1.5" fill="url(#gb)"/><circle cx="394.3" cy="164.4" r="1.5" fill="url(#gb)"/><circle cx="394.4" cy="163.4" r="1.5" fill="url(#gb)"/><circle cx="455.7" cy="153.0" r="1.4" fill="url(#bb)"/><circle cx="454.1" cy="155.1" r="1.4" fill="url(#rb)"/><circle cx="451.7" cy="154.5" r="1.4" fill="url(#rb)"/><circle cx="451.0" cy="151.8" r="1.5" fill="url(#gb)"/><circle cx="452.6" cy="149.7" r="1.5" fill="url(#gb)"/><circle cx="454.9" cy="150.3" r="1.5" fill="url(#gb)"/><circle cx="453.8" cy="153.5" r="1.4" fill="url(#bb)"/><circle cx="383.2" cy="155.0" r="1.5" fill="url(#gb)"/><circle cx="381.0" cy="155.9" r="1.5" fill="url(#gb)"/><circle cx="379.1" cy="154.0" r="1.4" fill="url(#rb)"/><circle cx="379.6" cy="151.2" r="1.4" fill="url(#bb)"/><circle cx="381.9" cy="150.3" r="1.4" fill="url(#bb)"/><circle cx="383.7" cy="152.2" r="1.4" fill="url(#bb)"/><circle cx="384.7" cy="153.3" r="1.5" fill="url(#gb)"/><circle cx="382.3" cy="152.0" r="1.5" fill="url(#gb)"/><circle cx="435.5" cy="150.5" r="1.5" fill="url(#gb)"/><circle cx="434.0" cy="152.8" r="1.4" fill="url(#bb)"/><circle cx="431.6" cy="152.4" r="1.5" fill="url(#gb)"/><circle cx="430.7" cy="149.8" r="1.4" fill="url(#rb)"/><circle cx="432.2" cy="147.5" r="1.5" fill="url(#gb)"/><circle cx="434.5" cy="147.8" r="1.5" fill="url(#gb)"/><circle cx="438.0" cy="148.1" r="1.5" fill="url(#gb)"/><circle cx="438.8" cy="146.6" r="1.5" fill="url(#gb)"/><circle cx="455.2" cy="156.5" r="1.5" fill="url(#gb)"/><circle cx="453.0" cy="157.6" r="1.4" fill="url(#bb)"/><circle cx="451.1" cy="155.8" r="1.5" fill="url(#gb)"/><circle cx="451.4" cy="153.0" r="1.4" fill="url(#rb)"/><circle cx="453.7" cy="151.9" r="1.5" fill="url(#gb)"/><circle cx="455.6" cy="153.7" r="1.5" fill="url(#gb)"/><circle cx="456.2" cy="155.1" r="1.5" fill="url(#gb)"/><circle cx="478.8" cy="168.9" r="1.5" fill="url(#gb)"/><circle cx="476.7" cy="170.3" r="1.4" fill="url(#bb)"/><circle cx="474.6" cy="168.8" r="1.4" fill="url(#bb)"/><circle cx="474.7" cy="165.9" r="1.5" fill="url(#gb)"/><circle cx="476.8" cy="164.5" r="1.5" fill="url(#gb)"/><circle cx="478.8" cy="166.0" r="1.5" fill="url(#gb)"/><circle cx="478.5" cy="167.3" r="1.5" fill="url(#gb)"/><circle cx="481.9" cy="171.2" r="1.5" fill="url(#gb)"/><circle cx="480.4" cy="173.5" r="1.5" fill="url(#gb)"/><circle cx="478.0" cy="173.0" r="1.5" fill="url(#gb)"/><circle cx="477.2" cy="170.4" r="1.5" fill="url(#gb)"/><circle cx="478.7" cy="168.1" r="1.5" fill="url(#gb)"/><circle cx="481.0" cy="168.6" r="1.5" fill="url(#gb)"/><circle cx="481.1" cy="171.1" r="1.5" fill="url(#gb)"/><circle cx="475.9" cy="171.8" r="1.5" fill="url(#gb)"/><circle cx="473.7" cy="172.8" r="1.5" fill="url(#gb)"/><circle cx="471.8" cy="170.9" r="1.4" fill="url(#bb)"/><circle cx="472.3" cy="168.1" r="1.5" fill="url(#gb)"/><circle cx="474.5" cy="167.1" r="1.4" fill="url(#bb)"/><circle cx="476.4" cy="169.0" r="1.5" fill="url(#gb)"/><circle cx="473.5" cy="171.6" r="1.4" fill="url(#bb)"/><circle cx="423.5" cy="175.2" r="1.5" fill="url(#gb)"/><circle cx="422.2" cy="177.6" r="1.5" fill="url(#gb)"/><circle cx="419.8" cy="177.4" r="1.5" fill="url(#gb)"/><circle cx="418.8" cy="174.7" r="1.5" fill="url(#gb)"/><circle cx="420.1" cy="172.4" r="1.5" fill="url(#gb)"/><circle cx="422.5" cy="172.6" r="1.5" fill="url(#gb)"/><circle cx="426.1" cy="176.3" r="1.5" fill="url(#gb)"/><circle cx="394.2" cy="161.7" r="1.5" fill="url(#gb)"/><circle cx="392.4" cy="163.5" r="1.5" fill="url(#gb)"/><circle cx="390.1" cy="162.5" r="1.5" fill="url(#gb)"/><circle cx="389.8" cy="159.7" r="1.4" fill="url(#bb)"/><circle cx="391.6" cy="157.8" r="1.5" fill="url(#gb)"/><circle cx="393.9" cy="158.9" r="1.5" fill="url(#gb)"/><circle cx="392.1" cy="161.2" r="1.4" fill="url(#bb)"/><circle cx="404.1" cy="174.2" r="1.4" fill="url(#bb)"/><circle cx="402.1" cy="175.6" r="1.4" fill="url(#bb)"/><circle cx="400.0" cy="174.2" r="1.5" fill="url(#gb)"/><circle cx="399.9" cy="171.4" r="1.5" fill="url(#gb)"/><circle cx="402.0" cy="169.9" r="1.5" fill="url(#gb)"/><circle cx="404.1" cy="171.3" r="1.5" fill="url(#gb)"/><circle cx="403.0" cy="175.7" r="1.4" fill="url(#bb)"/><circle cx="401.5" cy="175.2" r="1.5" fill="url(#gb)"/><circle cx="394.0" cy="187.5" r="1.5" fill="url(#gb)"/><circle cx="391.9" cy="188.9" r="1.4" fill="url(#rb)"/><circle cx="389.8" cy="187.5" r="1.5" fill="url(#gb)"/><circle cx="389.8" cy="184.6" r="1.4" fill="url(#bb)"/><circle cx="391.9" cy="183.1" r="1.5" fill="url(#gb)"/><circle cx="394.0" cy="184.6" r="1.5" fill="url(#gb)"/><circle cx="394.6" cy="190.1" r="1.5" fill="url(#gb)"/><circle cx="395.8" cy="187.9" r="1.5" fill="url(#gb)"/><circle cx="423.9" cy="167.5" r="1.4" fill="url(#bb)"/><circle cx="421.5" cy="167.9" r="1.5" fill="url(#gb)"/><circle cx="420.0" cy="165.6" r="1.5" fill="url(#gb)"/><circle cx="420.9" cy="162.9" r="1.5" fill="url(#gb)"/><circle cx="423.3" cy="162.6" r="1.5" fill="url(#gb)"/><circle cx="424.8" cy="164.8" r="1.5" fill="url(#gb)"/><circle cx="424.7" cy="169.4" r="1.5" fill="url(#gb)"/><circle cx="422.1" cy="169.0" r="1.5" fill="url(#gb)"/><circle cx="419.8" cy="167.6" r="1.5" fill="url(#gb)"/></g><path d="M370.1,181.2 C372.0,181.0 377.8,180.8 381.6,179.9 C385.4,179.1 389.5,177.8 393.1,176.1 C396.7,174.4 400.3,172.2 403.3,169.7 C406.3,167.1 408.9,164.9 411.0,160.8 C413.1,156.8 414.6,149.8 416.1,145.4 C417.6,141.0 419.3,136.4 419.9,134.6 " fill="none" stroke="#8a1060" stroke-width="6.4" stroke-linecap="round"/><path d="M370.1,181.2 C372.0,181.0 377.8,180.8 381.6,179.9 C385.4,179.1 389.5,177.8 393.1,176.1 C396.7,174.4 400.3,172.2 403.3,169.7 C406.3,167.1 408.9,164.9 411.0,160.8 C413.1,156.8 414.6,149.8 416.1,145.4 C417.6,141.0 419.3,136.4 419.9,134.6 " fill="none" stroke="#c8208a" stroke-width="3.968" stroke-linecap="round" transform="translate(-0.4,-0.5)"/><path d="M370.1,181.2 C372.0,181.0 377.8,180.8 381.6,179.9 C385.4,179.1 389.5,177.8 393.1,176.1 C396.7,174.4 400.3,172.2 403.3,169.7 C406.3,167.1 408.9,164.9 411.0,160.8 C413.1,156.8 414.6,149.8 416.1,145.4 C417.6,141.0 419.3,136.4 419.9,134.6 " fill="none" stroke="#f070c0" stroke-width="1.2800000000000002" stroke-linecap="round" transform="translate(-0.8,-1.0)" opacity="0.7"/><path d="M389.3,132.0 C390.4,133.0 393.4,134.7 395.7,137.8 C398.0,140.9 401.0,146.5 403.3,150.5 C405.6,154.5 407.6,158.6 409.7,162.0 C411.8,165.4 413.8,168.2 416.1,171.0 C418.4,173.8 420.9,176.3 423.7,178.6 C426.5,180.9 429.2,183.5 432.7,185.0 C436.2,186.5 441.3,188.1 444.5,187.7 C447.7,187.2 449.3,185.4 451.7,182.3 C454.1,179.2 456.3,173.7 459.0,169.3 C461.7,165.0 464.6,159.6 467.7,156.2 C470.8,152.8 474.4,151.2 477.8,149.0 C481.2,146.8 484.9,145.1 488.0,143.2 C491.1,141.3 495.2,138.4 496.7,137.4 " fill="none" stroke="#16108a" stroke-width="6.4" stroke-linecap="round"/><path d="M389.3,132.0 C390.4,133.0 393.4,134.7 395.7,137.8 C398.0,140.9 401.0,146.5 403.3,150.5 C405.6,154.5 407.6,158.6 409.7,162.0 C411.8,165.4 413.8,168.2 416.1,171.0 C418.4,173.8 420.9,176.3 423.7,178.6 C426.5,180.9 429.2,183.5 432.7,185.0 C436.2,186.5 441.3,188.1 444.5,187.7 C447.7,187.2 449.3,185.4 451.7,182.3 C454.1,179.2 456.3,173.7 459.0,169.3 C461.7,165.0 464.6,159.6 467.7,156.2 C470.8,152.8 474.4,151.2 477.8,149.0 C481.2,146.8 484.9,145.1 488.0,143.2 C491.1,141.3 495.2,138.4 496.7,137.4 " fill="none" stroke="#2a20d8" stroke-width="3.968" stroke-linecap="round" transform="translate(-0.4,-0.5)"/><path d="M389.3,132.0 C390.4,133.0 393.4,134.7 395.7,137.8 C398.0,140.9 401.0,146.5 403.3,150.5 C405.6,154.5 407.6,158.6 409.7,162.0 C411.8,165.4 413.8,168.2 416.1,171.0 C418.4,173.8 420.9,176.3 423.7,178.6 C426.5,180.9 429.2,183.5 432.7,185.0 C436.2,186.5 441.3,188.1 444.5,187.7 C447.7,187.2 449.3,185.4 451.7,182.3 C454.1,179.2 456.3,173.7 459.0,169.3 C461.7,165.0 464.6,159.6 467.7,156.2 C470.8,152.8 474.4,151.2 477.8,149.0 C481.2,146.8 484.9,145.1 488.0,143.2 C491.1,141.3 495.2,138.4 496.7,137.4 " fill="none" stroke="#6a60ff" stroke-width="1.2800000000000002" stroke-linecap="round" transform="translate(-0.8,-1.0)" opacity="0.7"/><path d="M419.9,134.6 C421.0,134.7 423.9,133.8 426.3,135.2 C428.7,136.6 431.1,139.1 434.0,142.9 C436.9,146.7 440.8,153.8 444.0,158.0 C447.2,162.2 450.5,164.7 453.0,168.0 C455.5,171.3 456.8,175.0 459.0,178.0 C461.2,181.0 463.5,183.8 466.0,186.0 C468.5,188.2 472.7,190.2 474.0,191.0 " fill="none" stroke="#8a1060" stroke-width="6.4" stroke-linecap="round"/><path d="M419.9,134.6 C421.0,134.7 423.9,133.8 426.3,135.2 C428.7,136.6 431.1,139.1 434.0,142.9 C436.9,146.7 440.8,153.8 444.0,158.0 C447.2,162.2 450.5,164.7 453.0,168.0 C455.5,171.3 456.8,175.0 459.0,178.0 C461.2,181.0 463.5,183.8 466.0,186.0 C468.5,188.2 472.7,190.2 474.0,191.0 " fill="none" stroke="#c8208a" stroke-width="3.968" stroke-linecap="round" transform="translate(-0.4,-0.5)"/><path d="M419.9,134.6 C421.0,134.7 423.9,133.8 426.3,135.2 C428.7,136.6 431.1,139.1 434.0,142.9 C436.9,146.7 440.8,153.8 444.0,158.0 C447.2,162.2 450.5,164.7 453.0,168.0 C455.5,171.3 456.8,175.0 459.0,178.0 C461.2,181.0 463.5,183.8 466.0,186.0 C468.5,188.2 472.7,190.2 474.0,191.0 " fill="none" stroke="#f070c0" stroke-width="1.2800000000000002" stroke-linecap="round" transform="translate(-0.8,-1.0)" opacity="0.7"/><g><circle cx="385" cy="131" r="1.6" fill="url(#ob)"/><circle cx="387.3" cy="129.4" r="1.3" fill="url(#rb)"/><circle cx="382.8" cy="132.7" r="1.3" fill="url(#rb)"/><circle cx="384.1" cy="133.7" r="1.3" fill="url(#rb)"/><circle cx="383" cy="147" r="1.6" fill="url(#ob)"/><circle cx="382.8" cy="144.2" r="1.3" fill="url(#rb)"/><circle cx="382.9" cy="149.8" r="1.3" fill="url(#rb)"/><circle cx="381.1" cy="149.1" r="1.3" fill="url(#rb)"/><circle cx="399" cy="179" r="1.6" fill="url(#ob)"/><circle cx="396.5" cy="180.2" r="1.3" fill="url(#rb)"/><circle cx="396.2" cy="179.4" r="1.3" fill="url(#rb)"/><circle cx="397.2" cy="181.2" r="1.3" fill="url(#rb)"/><circle cx="415" cy="146" r="1.6" fill="url(#ob)"/><circle cx="412.5" cy="147.2" r="1.3" fill="url(#rb)"/><circle cx="412.3" cy="146.9" r="1.3" fill="url(#rb)"/><circle cx="417.7" cy="146.9" r="1.3" fill="url(#rb)"/><circle cx="431" cy="130" r="1.6" fill="url(#ob)"/><circle cx="432.4" cy="127.6" r="1.3" fill="url(#rb)"/><circle cx="433.6" cy="131.1" r="1.3" fill="url(#rb)"/><circle cx="428.2" cy="129.5" r="1.3" fill="url(#rb)"/><circle cx="433" cy="148" r="1.6" fill="url(#ob)"/><circle cx="430.3" cy="147.2" r="1.3" fill="url(#rb)"/><circle cx="430.7" cy="149.6" r="1.3" fill="url(#rb)"/><circle cx="433.5" cy="150.8" r="1.3" fill="url(#rb)"/><circle cx="447" cy="165" r="1.6" fill="url(#ob)"/><circle cx="449.3" cy="166.6" r="1.3" fill="url(#rb)"/><circle cx="445.1" cy="167.0" r="1.3" fill="url(#rb)"/><circle cx="445.9" cy="167.6" r="1.3" fill="url(#rb)"/><circle cx="455" cy="181" r="1.6" fill="url(#ob)"/><circle cx="452.2" cy="181.3" r="1.3" fill="url(#rb)"/><circle cx="455.3" cy="183.8" r="1.3" fill="url(#rb)"/><circle cx="455.0" cy="178.2" r="1.3" fill="url(#rb)"/><circle cx="466" cy="191" r="1.6" fill="url(#ob)"/><circle cx="463.2" cy="191.2" r="1.3" fill="url(#rb)"/><circle cx="468.8" cy="191.2" r="1.3" fill="url(#rb)"/><circle cx="463.7" cy="192.6" r="1.3" fill="url(#rb)"/><circle cx="478" cy="181" r="1.6" fill="url(#ob)"/><circle cx="480.7" cy="180.4" r="1.3" fill="url(#rb)"/><circle cx="480.8" cy="181.1" r="1.3" fill="url(#rb)"/><circle cx="475.7" cy="179.5" r="1.3" fill="url(#rb)"/><circle cx="487" cy="150" r="1.6" fill="url(#ob)"/><circle cx="489.7" cy="149.3" r="1.3" fill="url(#rb)"/><circle cx="485.1" cy="152.1" r="1.3" fill="url(#rb)"/><circle cx="484.7" cy="148.4" r="1.3" fill="url(#rb)"/><circle cx="472" cy="159" r="1.6" fill="url(#ob)"/><circle cx="470.1" cy="161.1" r="1.3" fill="url(#rb)"/><circle cx="471.1" cy="161.7" r="1.3" fill="url(#rb)"/><circle cx="469.8" cy="157.2" r="1.3" fill="url(#rb)"/><circle cx="372" cy="186" r="1.6" fill="url(#ob)"/><circle cx="369.6" cy="184.5" r="1.3" fill="url(#rb)"/><circle cx="370.9" cy="188.6" r="1.3" fill="url(#rb)"/><circle cx="369.2" cy="186.0" r="1.3" fill="url(#rb)"/><circle cx="402" cy="190" r="1.6" fill="url(#ob)"/><circle cx="399.2" cy="189.7" r="1.3" fill="url(#rb)"/><circle cx="402.1" cy="187.2" r="1.3" fill="url(#rb)"/><circle cx="404.6" cy="190.9" r="1.3" fill="url(#rb)"/><circle cx="459" cy="138" r="1.6" fill="url(#ob)"/><circle cx="461.3" cy="139.5" r="1.3" fill="url(#rb)"/><circle cx="459.0" cy="140.8" r="1.3" fill="url(#rb)"/><circle cx="458.6" cy="140.8" r="1.3" fill="url(#rb)"/><circle cx="491" cy="142" r="1.6" fill="url(#ob)"/><circle cx="491.8" cy="139.3" r="1.3" fill="url(#rb)"/><circle cx="488.5" cy="143.3" r="1.3" fill="url(#rb)"/><circle cx="492.8" cy="139.8" r="1.3" fill="url(#rb)"/><circle cx="402" cy="153" r="1.6" fill="url(#ob)"/><circle cx="399.7" cy="154.6" r="1.3" fill="url(#rb)"/><circle cx="401.4" cy="155.7" r="1.3" fill="url(#rb)"/><circle cx="400.8" cy="150.5" r="1.3" fill="url(#rb)"/><circle cx="423" cy="189" r="1.6" fill="url(#ob)"/><circle cx="425.4" cy="190.4" r="1.3" fill="url(#rb)"/><circle cx="425.8" cy="188.7" r="1.3" fill="url(#rb)"/><circle cx="424.4" cy="186.6" r="1.3" fill="url(#rb)"/><circle cx="411.4" cy="148.3" r="1.3" fill="url(#rb)"/><circle cx="469.3" cy="192.4" r="1.3" fill="url(#rb)"/><circle cx="450.9" cy="190.6" r="1.3" fill="url(#rb)"/><circle cx="376.0" cy="172.7" r="1.3" fill="url(#rb)"/><circle cx="448.7" cy="123.0" r="1.3" fill="url(#rb)"/><circle cx="450.5" cy="148.7" r="1.3" fill="url(#rb)"/><circle cx="372.8" cy="189.6" r="1.3" fill="url(#rb)"/><circle cx="443.1" cy="149.9" r="1.3" fill="url(#rb)"/><circle cx="370.7" cy="160.5" r="1.3" fill="url(#rb)"/><circle cx="455.6" cy="143.3" r="1.3" fill="url(#rb)"/><circle cx="493.9" cy="168.2" r="1.3" fill="url(#rb)"/><circle cx="468.5" cy="158.5" r="1.3" fill="url(#rb)"/><circle cx="425.5" cy="162.2" r="1.3" fill="url(#rb)"/><circle cx="426.4" cy="144.5" r="1.3" fill="url(#rb)"/><circle cx="425.0" cy="173.7" r="1.3" fill="url(#rb)"/><circle cx="462.6" cy="172.7" r="1.3" fill="url(#rb)"/><circle cx="379.0" cy="187.5" r="1.3" fill="url(#rb)"/><circle cx="453.9" cy="184.7" r="1.3" fill="url(#rb)"/><circle cx="439.1" cy="168.8" r="1.3" fill="url(#rb)"/><circle cx="409.1" cy="167.9" r="1.3" fill="url(#rb)"/><circle cx="490.2" cy="124.2" r="1.3" fill="url(#rb)"/><circle cx="396.6" cy="147.0" r="1.3" fill="url(#rb)"/><circle cx="422.3" cy="128.5" r="1.3" fill="url(#rb)"/><circle cx="385.5" cy="154.2" r="1.3" fill="url(#rb)"/><circle cx="480.1" cy="157.5" r="1.3" fill="url(#rb)"/></g><polygon points="573.7,129.0 618.7,128.1 641.2,165.9 616.9,202.8 573.7,202.8 549.4,165.9" fill="#a0a0a0" stroke="#a0a0a0" stroke-width="3" stroke-linejoin="round"/><g filter="url(#bl6)"><path d="M618.2,198.4Q619.7,201.9 617.7,204.3M574.0,198.0Q574.3,194.4 572.2,193.7M606.4,136.3Q608.1,132.8 612.1,131.5M575.0,201.5Q571.1,201.2 569.6,197.5M613.5,201.9Q610.5,199.5 608.7,199.9M625.7,164.0Q627.7,164.9 628.1,169.4M619.1,192.4Q618.8,196.3 619.5,199.5M566.1,185.4Q566.6,181.1 568.3,178.0M623.7,193.5Q621.9,191.0 623.3,189.7M605.8,198.1Q602.7,199.4 599.3,202.1M577.6,140.3Q578.5,140.0 577.8,135.7M604.2,190.9Q599.7,193.5 598.8,192.7M550.4,165.0Q552.7,165.0 553.2,161.4M557.5,160.4Q557.7,161.7 559.5,163.4M586.0,137.9Q590.9,135.9 592.2,133.0M622.2,194.1Q621.3,197.9 618.2,200.0M621.0,180.4Q621.0,184.5 619.7,188.0M571.3,178.9Q570.0,177.0 567.5,172.7M618.0,191.1Q617.3,194.8 613.7,197.1M637.1,163.7Q636.9,165.6 634.8,170.2M568.2,180.0Q567.7,176.8 567.4,175.9M577.7,140.6Q578.1,138.1 578.7,136.6M570.0,196.9Q570.5,196.2 572.7,196.2M583.1,129.3Q585.4,128.3 587.4,128.5M602.9,201.2Q601.7,200.4 598.0,198.5M582.7,137.5Q587.5,138.4 588.6,135.6M557.6,170.6Q558.3,169.9 558.0,166.1M568.9,149.2Q573.5,150.5 574.4,148.5M641.3,165.2Q643.0,163.8 640.9,162.6M558.9,175.0Q559.1,173.9 557.1,170.1M573.5,199.4Q571.6,195.7 571.6,194.8M618.5,135.7Q619.8,137.4 620.7,140.4M590.9,198.0Q587.3,196.5 587.5,192.8M593.4,197.6Q592.1,196.6 587.9,198.1M575.7,191.2Q572.8,191.5 568.4,192.4M574.7,187.4Q574.7,185.3 575.0,182.8M562.0,172.2Q561.8,171.5 563.7,168.3M623.2,178.2Q626.6,183.3 626.2,184.4M614.5,130.3Q616.1,134.3 616.6,134.7M615.5,137.0Q617.9,138.0 623.1,138.1M586.9,139.0Q587.4,138.2 591.1,138.4M561.7,175.7Q560.9,172.5 559.6,168.4M571.6,185.0Q569.2,182.7 569.0,181.3M617.9,140.5Q617.7,144.1 620.8,146.4M631.3,163.9Q630.8,168.2 634.0,170.6M568.6,135.5Q573.2,134.6 575.2,136.6M569.8,152.5Q570.9,148.9 573.0,148.2M626.9,177.0Q625.9,178.6 622.1,180.1M632.5,164.0Q631.4,167.3 630.6,167.5M591.9,134.2Q592.8,132.0 594.8,130.6M571.6,148.1Q570.3,145.5 571.0,143.0M582.6,199.6Q580.2,199.0 577.9,194.9M558.5,178.6Q557.2,174.8 554.0,173.7M569.3,132.6Q567.6,133.4 567.0,135.7M617.5,182.5Q618.0,186.7 617.2,187.4M586.6,130.0Q590.5,128.5 594.3,128.2M633.4,164.8Q630.8,164.3 630.2,167.5M585.3,131.2Q583.6,130.4 583.5,133.3M564.4,166.1Q562.1,162.4 563.0,160.2M557.6,168.7Q561.2,165.3 562.0,164.1M616.8,197.7Q616.3,198.9 613.2,202.3M558.3,150.8Q560.4,151.6 560.0,153.9M570.7,133.0Q571.8,128.9 574.9,128.3M614.4,130.2Q616.4,128.2 619.5,129.4M633.2,177.5Q630.5,180.8 628.4,181.6M610.1,201.0Q605.8,201.8 603.3,200.1M583.9,136.6Q583.5,135.1 585.0,132.1M574.6,131.4Q575.8,129.4 580.8,130.9M559.7,154.3Q563.4,151.1 566.2,150.1M578.9,127.4Q578.1,126.4 575.4,128.5M558.6,151.2Q561.0,149.8 563.9,148.9M620.8,199.5Q617.8,199.9 614.0,203.4M625.3,159.2Q627.0,161.3 632.4,162.7M593.5,195.3Q590.1,194.2 588.6,195.6M619.3,145.3Q623.3,147.9 623.6,147.8M628.7,174.7Q629.8,176.9 628.2,179.2M623.7,151.7Q624.6,156.6 624.5,159.1M583.3,127.2Q580.6,127.3 580.3,128.3M577.7,128.6Q576.7,130.5 575.9,130.7M585.5,203.1Q584.0,200.7 581.0,196.9M574.5,132.5Q574.6,134.9 574.2,135.2M615.9,132.1Q619.5,136.5 619.5,137.7M613.2,191.9Q608.8,192.0 606.7,192.1M640.7,168.9Q640.1,166.6 640.4,166.9M609.9,196.6Q606.5,193.6 604.1,193.8M576.5,147.3Q578.3,145.6 582.6,142.8M620.7,144.0Q625.2,145.3 627.0,143.7M564.9,141.3Q568.0,140.0 569.6,136.8M553.1,164.3Q554.9,162.6 558.1,158.2M609.1,198.8Q608.2,201.2 604.7,203.9M561.8,174.5Q559.7,174.0 555.7,171.0M624.3,182.1Q620.9,184.5 616.6,183.2M555.3,157.9Q554.4,155.6 556.6,152.6M594.7,201.6Q594.6,200.7 592.4,198.0M575.6,135.6Q578.6,135.5 579.8,132.1M628.5,167.0Q629.6,169.5 632.8,170.8M556.4,163.7Q558.6,163.8 561.6,160.4M556.0,154.2Q558.6,152.4 559.1,151.6M596.8,130.6Q594.9,131.6 593.5,132.8M595.9,130.6Q599.1,130.0 602.8,128.7M633.8,176.8Q630.7,179.6 631.5,180.2M586.9,194.7Q584.3,193.4 582.8,188.2M619.7,196.0Q618.5,201.4 617.9,202.9M611.1,136.1Q612.3,134.9 616.8,134.7M604.7,137.1Q610.1,134.1 612.0,134.9M565.0,159.9Q563.4,157.7 562.8,153.3M561.8,166.9Q562.8,163.2 567.1,162.7M603.0,201.8Q603.3,201.0 605.5,199.9M617.4,136.9Q618.3,139.8 623.1,140.5M552.6,165.5Q553.1,164.4 554.8,167.2M610.0,198.6Q608.4,202.1 605.0,202.1M576.2,139.5Q578.1,140.7 580.4,140.1M572.7,127.1Q575.8,127.2 580.5,126.9M581.4,126.2Q584.4,126.4 587.5,126.0M587.4,126.9Q588.3,126.3 592.6,126.8M595.1,128.3Q597.0,129.4 600.8,128.2M604.7,126.1Q608.9,125.5 612.2,125.9M612.2,125.9Q616.6,125.6 618.0,125.7M620.8,125.5Q620.4,128.8 623.6,130.1M623.7,131.6Q626.3,133.8 626.3,136.0M628.6,138.2Q628.8,142.0 632.0,144.1M631.7,146.5Q634.9,147.4 634.6,151.4M634.0,153.3Q633.6,155.4 636.7,157.9M639.6,160.5Q639.8,164.2 643.3,166.7M644.2,164.8Q641.2,167.0 640.2,170.9M637.4,173.1Q637.2,175.7 633.8,178.6M633.6,177.9Q633.8,179.2 630.4,182.8M629.2,184.8Q627.5,187.4 626.3,189.1M626.7,190.7Q625.1,193.7 623.7,195.2M621.8,198.3Q618.3,200.6 617.6,204.7M617.7,204.6Q614.1,205.2 610.0,204.6M610.0,205.3Q605.4,203.8 602.5,205.3M602.0,204.1Q597.2,204.6 594.3,204.1M595.6,205.8Q594.0,205.2 590.3,205.8M586.5,204.9Q583.0,203.1 578.9,204.9M581.6,204.1Q579.0,203.2 574.6,204.1M572.3,204.0Q569.1,202.6 569.4,199.6M568.1,199.2Q565.9,195.7 565.3,194.8M565.5,192.5Q563.4,187.7 561.3,186.1M559.7,184.4Q558.5,181.4 556.9,180.1M554.5,178.8Q554.2,175.4 550.2,172.3M550.3,173.2Q549.0,169.3 547.3,168.7M548.7,166.1Q549.5,163.6 552.2,160.8M552.9,159.3Q554.5,158.6 556.0,154.6M555.3,153.5Q556.8,151.5 559.6,147.0M560.0,145.6Q563.2,143.3 562.9,141.3M564.0,141.5Q565.8,137.8 567.7,135.9M569.1,133.1Q571.9,130.8 572.6,127.7" stroke="#8a8a8a" stroke-width="6.8" fill="none" stroke-linecap="round"/><path d="M618.2,198.4Q619.7,201.9 617.7,204.3M574.0,198.0Q574.3,194.4 572.2,193.7M606.4,136.3Q608.1,132.8 612.1,131.5M575.0,201.5Q571.1,201.2 569.6,197.5M613.5,201.9Q610.5,199.5 608.7,199.9M625.7,164.0Q627.7,164.9 628.1,169.4M619.1,192.4Q618.8,196.3 619.5,199.5M566.1,185.4Q566.6,181.1 568.3,178.0M623.7,193.5Q621.9,191.0 623.3,189.7M605.8,198.1Q602.7,199.4 599.3,202.1M577.6,140.3Q578.5,140.0 577.8,135.7M604.2,190.9Q599.7,193.5 598.8,192.7M550.4,165.0Q552.7,165.0 553.2,161.4M557.5,160.4Q557.7,161.7 559.5,163.4M586.0,137.9Q590.9,135.9 592.2,133.0M622.2,194.1Q621.3,197.9 618.2,200.0M621.0,180.4Q621.0,184.5 619.7,188.0M571.3,178.9Q570.0,177.0 567.5,172.7M618.0,191.1Q617.3,194.8 613.7,197.1M637.1,163.7Q636.9,165.6 634.8,170.2M568.2,180.0Q567.7,176.8 567.4,175.9M577.7,140.6Q578.1,138.1 578.7,136.6M570.0,196.9Q570.5,196.2 572.7,196.2M583.1,129.3Q585.4,128.3 587.4,128.5M602.9,201.2Q601.7,200.4 598.0,198.5M582.7,137.5Q587.5,138.4 588.6,135.6M557.6,170.6Q558.3,169.9 558.0,166.1M568.9,149.2Q573.5,150.5 574.4,148.5M641.3,165.2Q643.0,163.8 640.9,162.6M558.9,175.0Q559.1,173.9 557.1,170.1M573.5,199.4Q571.6,195.7 571.6,194.8M618.5,135.7Q619.8,137.4 620.7,140.4M590.9,198.0Q587.3,196.5 587.5,192.8M593.4,197.6Q592.1,196.6 587.9,198.1M575.7,191.2Q572.8,191.5 568.4,192.4M574.7,187.4Q574.7,185.3 575.0,182.8M562.0,172.2Q561.8,171.5 563.7,168.3M623.2,178.2Q626.6,183.3 626.2,184.4M614.5,130.3Q616.1,134.3 616.6,134.7M615.5,137.0Q617.9,138.0 623.1,138.1M586.9,139.0Q587.4,138.2 591.1,138.4M561.7,175.7Q560.9,172.5 559.6,168.4M571.6,185.0Q569.2,182.7 569.0,181.3M617.9,140.5Q617.7,144.1 620.8,146.4M631.3,163.9Q630.8,168.2 634.0,170.6M568.6,135.5Q573.2,134.6 575.2,136.6M569.8,152.5Q570.9,148.9 573.0,148.2M626.9,177.0Q625.9,178.6 622.1,180.1M632.5,164.0Q631.4,167.3 630.6,167.5M591.9,134.2Q592.8,132.0 594.8,130.6M571.6,148.1Q570.3,145.5 571.0,143.0M582.6,199.6Q580.2,199.0 577.9,194.9M558.5,178.6Q557.2,174.8 554.0,173.7M569.3,132.6Q567.6,133.4 567.0,135.7M617.5,182.5Q618.0,186.7 617.2,187.4M586.6,130.0Q590.5,128.5 594.3,128.2M633.4,164.8Q630.8,164.3 630.2,167.5M585.3,131.2Q583.6,130.4 583.5,133.3M564.4,166.1Q562.1,162.4 563.0,160.2M557.6,168.7Q561.2,165.3 562.0,164.1M616.8,197.7Q616.3,198.9 613.2,202.3M558.3,150.8Q560.4,151.6 560.0,153.9M570.7,133.0Q571.8,128.9 574.9,128.3M614.4,130.2Q616.4,128.2 619.5,129.4M633.2,177.5Q630.5,180.8 628.4,181.6M610.1,201.0Q605.8,201.8 603.3,200.1M583.9,136.6Q583.5,135.1 585.0,132.1M574.6,131.4Q575.8,129.4 580.8,130.9M559.7,154.3Q563.4,151.1 566.2,150.1M578.9,127.4Q578.1,126.4 575.4,128.5M558.6,151.2Q561.0,149.8 563.9,148.9M620.8,199.5Q617.8,199.9 614.0,203.4M625.3,159.2Q627.0,161.3 632.4,162.7M593.5,195.3Q590.1,194.2 588.6,195.6M619.3,145.3Q623.3,147.9 623.6,147.8M628.7,174.7Q629.8,176.9 628.2,179.2M623.7,151.7Q624.6,156.6 624.5,159.1M583.3,127.2Q580.6,127.3 580.3,128.3M577.7,128.6Q576.7,130.5 575.9,130.7M585.5,203.1Q584.0,200.7 581.0,196.9M574.5,132.5Q574.6,134.9 574.2,135.2M615.9,132.1Q619.5,136.5 619.5,137.7M613.2,191.9Q608.8,192.0 606.7,192.1M640.7,168.9Q640.1,166.6 640.4,166.9M609.9,196.6Q606.5,193.6 604.1,193.8M576.5,147.3Q578.3,145.6 582.6,142.8M620.7,144.0Q625.2,145.3 627.0,143.7M564.9,141.3Q568.0,140.0 569.6,136.8M553.1,164.3Q554.9,162.6 558.1,158.2M609.1,198.8Q608.2,201.2 604.7,203.9M561.8,174.5Q559.7,174.0 555.7,171.0M624.3,182.1Q620.9,184.5 616.6,183.2M555.3,157.9Q554.4,155.6 556.6,152.6M594.7,201.6Q594.6,200.7 592.4,198.0M575.6,135.6Q578.6,135.5 579.8,132.1M628.5,167.0Q629.6,169.5 632.8,170.8M556.4,163.7Q558.6,163.8 561.6,160.4M556.0,154.2Q558.6,152.4 559.1,151.6M596.8,130.6Q594.9,131.6 593.5,132.8M595.9,130.6Q599.1,130.0 602.8,128.7M633.8,176.8Q630.7,179.6 631.5,180.2M586.9,194.7Q584.3,193.4 582.8,188.2M619.7,196.0Q618.5,201.4 617.9,202.9M611.1,136.1Q612.3,134.9 616.8,134.7M604.7,137.1Q610.1,134.1 612.0,134.9M565.0,159.9Q563.4,157.7 562.8,153.3M561.8,166.9Q562.8,163.2 567.1,162.7M603.0,201.8Q603.3,201.0 605.5,199.9M617.4,136.9Q618.3,139.8 623.1,140.5M552.6,165.5Q553.1,164.4 554.8,167.2M610.0,198.6Q608.4,202.1 605.0,202.1M576.2,139.5Q578.1,140.7 580.4,140.1M572.7,127.1Q575.8,127.2 580.5,126.9M581.4,126.2Q584.4,126.4 587.5,126.0M587.4,126.9Q588.3,126.3 592.6,126.8M595.1,128.3Q597.0,129.4 600.8,128.2M604.7,126.1Q608.9,125.5 612.2,125.9M612.2,125.9Q616.6,125.6 618.0,125.7M620.8,125.5Q620.4,128.8 623.6,130.1M623.7,131.6Q626.3,133.8 626.3,136.0M628.6,138.2Q628.8,142.0 632.0,144.1M631.7,146.5Q634.9,147.4 634.6,151.4M634.0,153.3Q633.6,155.4 636.7,157.9M639.6,160.5Q639.8,164.2 643.3,166.7M644.2,164.8Q641.2,167.0 640.2,170.9M637.4,173.1Q637.2,175.7 633.8,178.6M633.6,177.9Q633.8,179.2 630.4,182.8M629.2,184.8Q627.5,187.4 626.3,189.1M626.7,190.7Q625.1,193.7 623.7,195.2M621.8,198.3Q618.3,200.6 617.6,204.7M617.7,204.6Q614.1,205.2 610.0,204.6M610.0,205.3Q605.4,203.8 602.5,205.3M602.0,204.1Q597.2,204.6 594.3,204.1M595.6,205.8Q594.0,205.2 590.3,205.8M586.5,204.9Q583.0,203.1 578.9,204.9M581.6,204.1Q579.0,203.2 574.6,204.1M572.3,204.0Q569.1,202.6 569.4,199.6M568.1,199.2Q565.9,195.7 565.3,194.8M565.5,192.5Q563.4,187.7 561.3,186.1M559.7,184.4Q558.5,181.4 556.9,180.1M554.5,178.8Q554.2,175.4 550.2,172.3M550.3,173.2Q549.0,169.3 547.3,168.7M548.7,166.1Q549.5,163.6 552.2,160.8M552.9,159.3Q554.5,158.6 556.0,154.6M555.3,153.5Q556.8,151.5 559.6,147.0M560.0,145.6Q563.2,143.3 562.9,141.3M564.0,141.5Q565.8,137.8 567.7,135.9M569.1,133.1Q571.9,130.8 572.6,127.7" stroke="#d0d0d0" stroke-width="5.4" fill="none" stroke-linecap="round" transform="translate(-0.3,-0.4)"/><path d="M618.2,198.4Q619.7,201.9 617.7,204.3M574.0,198.0Q574.3,194.4 572.2,193.7M606.4,136.3Q608.1,132.8 612.1,131.5M575.0,201.5Q571.1,201.2 569.6,197.5M613.5,201.9Q610.5,199.5 608.7,199.9M625.7,164.0Q627.7,164.9 628.1,169.4M619.1,192.4Q618.8,196.3 619.5,199.5M566.1,185.4Q566.6,181.1 568.3,178.0M623.7,193.5Q621.9,191.0 623.3,189.7M605.8,198.1Q602.7,199.4 599.3,202.1M577.6,140.3Q578.5,140.0 577.8,135.7M604.2,190.9Q599.7,193.5 598.8,192.7M550.4,165.0Q552.7,165.0 553.2,161.4M557.5,160.4Q557.7,161.7 559.5,163.4M586.0,137.9Q590.9,135.9 592.2,133.0M622.2,194.1Q621.3,197.9 618.2,200.0M621.0,180.4Q621.0,184.5 619.7,188.0M571.3,178.9Q570.0,177.0 567.5,172.7M618.0,191.1Q617.3,194.8 613.7,197.1M637.1,163.7Q636.9,165.6 634.8,170.2M568.2,180.0Q567.7,176.8 567.4,175.9M577.7,140.6Q578.1,138.1 578.7,136.6M570.0,196.9Q570.5,196.2 572.7,196.2M583.1,129.3Q585.4,128.3 587.4,128.5M602.9,201.2Q601.7,200.4 598.0,198.5M582.7,137.5Q587.5,138.4 588.6,135.6M557.6,170.6Q558.3,169.9 558.0,166.1M568.9,149.2Q573.5,150.5 574.4,148.5M641.3,165.2Q643.0,163.8 640.9,162.6M558.9,175.0Q559.1,173.9 557.1,170.1M573.5,199.4Q571.6,195.7 571.6,194.8M618.5,135.7Q619.8,137.4 620.7,140.4M590.9,198.0Q587.3,196.5 587.5,192.8M593.4,197.6Q592.1,196.6 587.9,198.1M575.7,191.2Q572.8,191.5 568.4,192.4M574.7,187.4Q574.7,185.3 575.0,182.8M562.0,172.2Q561.8,171.5 563.7,168.3M623.2,178.2Q626.6,183.3 626.2,184.4M614.5,130.3Q616.1,134.3 616.6,134.7M615.5,137.0Q617.9,138.0 623.1,138.1M586.9,139.0Q587.4,138.2 591.1,138.4M561.7,175.7Q560.9,172.5 559.6,168.4M571.6,185.0Q569.2,182.7 569.0,181.3M617.9,140.5Q617.7,144.1 620.8,146.4M631.3,163.9Q630.8,168.2 634.0,170.6M568.6,135.5Q573.2,134.6 575.2,136.6M569.8,152.5Q570.9,148.9 573.0,148.2M626.9,177.0Q625.9,178.6 622.1,180.1M632.5,164.0Q631.4,167.3 630.6,167.5M591.9,134.2Q592.8,132.0 594.8,130.6M571.6,148.1Q570.3,145.5 571.0,143.0M582.6,199.6Q580.2,199.0 577.9,194.9M558.5,178.6Q557.2,174.8 554.0,173.7M569.3,132.6Q567.6,133.4 567.0,135.7M617.5,182.5Q618.0,186.7 617.2,187.4M586.6,130.0Q590.5,128.5 594.3,128.2M633.4,164.8Q630.8,164.3 630.2,167.5M585.3,131.2Q583.6,130.4 583.5,133.3M564.4,166.1Q562.1,162.4 563.0,160.2M557.6,168.7Q561.2,165.3 562.0,164.1M616.8,197.7Q616.3,198.9 613.2,202.3M558.3,150.8Q560.4,151.6 560.0,153.9M570.7,133.0Q571.8,128.9 574.9,128.3M614.4,130.2Q616.4,128.2 619.5,129.4M633.2,177.5Q630.5,180.8 628.4,181.6M610.1,201.0Q605.8,201.8 603.3,200.1M583.9,136.6Q583.5,135.1 585.0,132.1M574.6,131.4Q575.8,129.4 580.8,130.9M559.7,154.3Q563.4,151.1 566.2,150.1M578.9,127.4Q578.1,126.4 575.4,128.5M558.6,151.2Q561.0,149.8 563.9,148.9M620.8,199.5Q617.8,199.9 614.0,203.4M625.3,159.2Q627.0,161.3 632.4,162.7M593.5,195.3Q590.1,194.2 588.6,195.6M619.3,145.3Q623.3,147.9 623.6,147.8M628.7,174.7Q629.8,176.9 628.2,179.2M623.7,151.7Q624.6,156.6 624.5,159.1M583.3,127.2Q580.6,127.3 580.3,128.3M577.7,128.6Q576.7,130.5 575.9,130.7M585.5,203.1Q584.0,200.7 581.0,196.9M574.5,132.5Q574.6,134.9 574.2,135.2M615.9,132.1Q619.5,136.5 619.5,137.7M613.2,191.9Q608.8,192.0 606.7,192.1M640.7,168.9Q640.1,166.6 640.4,166.9M609.9,196.6Q606.5,193.6 604.1,193.8M576.5,147.3Q578.3,145.6 582.6,142.8M620.7,144.0Q625.2,145.3 627.0,143.7M564.9,141.3Q568.0,140.0 569.6,136.8M553.1,164.3Q554.9,162.6 558.1,158.2M609.1,198.8Q608.2,201.2 604.7,203.9M561.8,174.5Q559.7,174.0 555.7,171.0M624.3,182.1Q620.9,184.5 616.6,183.2M555.3,157.9Q554.4,155.6 556.6,152.6M594.7,201.6Q594.6,200.7 592.4,198.0M575.6,135.6Q578.6,135.5 579.8,132.1M628.5,167.0Q629.6,169.5 632.8,170.8M556.4,163.7Q558.6,163.8 561.6,160.4M556.0,154.2Q558.6,152.4 559.1,151.6M596.8,130.6Q594.9,131.6 593.5,132.8M595.9,130.6Q599.1,130.0 602.8,128.7M633.8,176.8Q630.7,179.6 631.5,180.2M586.9,194.7Q584.3,193.4 582.8,188.2M619.7,196.0Q618.5,201.4 617.9,202.9M611.1,136.1Q612.3,134.9 616.8,134.7M604.7,137.1Q610.1,134.1 612.0,134.9M565.0,159.9Q563.4,157.7 562.8,153.3M561.8,166.9Q562.8,163.2 567.1,162.7M603.0,201.8Q603.3,201.0 605.5,199.9M617.4,136.9Q618.3,139.8 623.1,140.5M552.6,165.5Q553.1,164.4 554.8,167.2M610.0,198.6Q608.4,202.1 605.0,202.1M576.2,139.5Q578.1,140.7 580.4,140.1M572.7,127.1Q575.8,127.2 580.5,126.9M581.4,126.2Q584.4,126.4 587.5,126.0M587.4,126.9Q588.3,126.3 592.6,126.8M595.1,128.3Q597.0,129.4 600.8,128.2M604.7,126.1Q608.9,125.5 612.2,125.9M612.2,125.9Q616.6,125.6 618.0,125.7M620.8,125.5Q620.4,128.8 623.6,130.1M623.7,131.6Q626.3,133.8 626.3,136.0M628.6,138.2Q628.8,142.0 632.0,144.1M631.7,146.5Q634.9,147.4 634.6,151.4M634.0,153.3Q633.6,155.4 636.7,157.9M639.6,160.5Q639.8,164.2 643.3,166.7M644.2,164.8Q641.2,167.0 640.2,170.9M637.4,173.1Q637.2,175.7 633.8,178.6M633.6,177.9Q633.8,179.2 630.4,182.8M629.2,184.8Q627.5,187.4 626.3,189.1M626.7,190.7Q625.1,193.7 623.7,195.2M621.8,198.3Q618.3,200.6 617.6,204.7M617.7,204.6Q614.1,205.2 610.0,204.6M610.0,205.3Q605.4,203.8 602.5,205.3M602.0,204.1Q597.2,204.6 594.3,204.1M595.6,205.8Q594.0,205.2 590.3,205.8M586.5,204.9Q583.0,203.1 578.9,204.9M581.6,204.1Q579.0,203.2 574.6,204.1M572.3,204.0Q569.1,202.6 569.4,199.6M568.1,199.2Q565.9,195.7 565.3,194.8M565.5,192.5Q563.4,187.7 561.3,186.1M559.7,184.4Q558.5,181.4 556.9,180.1M554.5,178.8Q554.2,175.4 550.2,172.3M550.3,173.2Q549.0,169.3 547.3,168.7M548.7,166.1Q549.5,163.6 552.2,160.8M552.9,159.3Q554.5,158.6 556.0,154.6M555.3,153.5Q556.8,151.5 559.6,147.0M560.0,145.6Q563.2,143.3 562.9,141.3M564.0,141.5Q565.8,137.8 567.7,135.9M569.1,133.1Q571.9,130.8 572.6,127.7" stroke="#f0f0f0" stroke-width="2.8" fill="none" stroke-linecap="round" transform="translate(-0.8,-1.0)"/></g><circle cx="553.2" cy="161.1" r="0.9" fill="#fff" opacity="0.7"/><circle cx="607.2" cy="195.2" r="0.9" fill="#fff" opacity="0.7"/><circle cx="560.6" cy="182.0" r="0.9" fill="#fff" opacity="0.7"/><circle cx="554.7" cy="172.2" r="0.9" fill="#fff" opacity="0.7"/><circle cx="569.7" cy="153.6" r="0.9" fill="#fff" opacity="0.7"/><circle cx="618.3" cy="124.1" r="0.9" fill="#fff" opacity="0.7"/><circle cx="631.0" cy="178.9" r="0.9" fill="#fff" opacity="0.7"/><circle cx="586.9" cy="193.5" r="0.9" fill="#fff" opacity="0.7"/><polygon points="618.8,176.8 598.0,188.5 577.2,176.8 577.2,153.2 598.0,141.5 618.8,153.2" fill="#d8d8d8" stroke="#d8d8d8" stroke-width="5" stroke-linejoin="round"/><circle cx="598.5" cy="165.4" r="26" fill="#d8d8d8"/><path d="M614.4,169.7 C613.2,174.3 607.4,180.1 602.8,181.3 C598.2,182.6 590.2,180.4 586.8,177.1 C583.5,173.7 581.3,165.7 582.6,161.1 C583.8,156.5 589.6,150.7 594.2,149.5 C598.8,148.2 606.8,150.4 610.2,153.7 C613.5,157.1 615.7,165.1 614.4,169.7 Z" fill="url(#hole)"/><circle cx="597.5" cy="166" r="8" fill="#a0a0a0" filter="url(#bl6)"/><g filter="url(#bl3)"><path d="M593.5 160.0h0M592.1 160.9h0M596.1 161.0h0" stroke="#c8c8c8" stroke-width="2.4" stroke-linecap="round"/><path d="M594.2 160.3h0M594.2 160.7h0M593.4 161.1h0" stroke="#c8c8c8" stroke-width="2.0" stroke-linecap="round"/><path d="M603.3 159.6h0M601.8 158.5h0M600.5 159.3h0M602.8 160.1h0" stroke="#e0e0e0" stroke-width="2.0" stroke-linecap="round"/><path d="M594.5 163.2h0M593.9 166.4h0M592.9 163.4h0M594.4 164.2h0" stroke="#60d040" stroke-width="2.0" stroke-linecap="round"/><path d="M595.0 164.0h0M596.6 164.8h0" stroke="#60d040" stroke-width="1.6" stroke-linecap="round"/><path d="M593.4 164.9h0" stroke="#60d040" stroke-width="2.4" stroke-linecap="round"/><path d="M598.1 165.2h0M600.5 163.7h0M600.5 165.4h0" stroke="#d02090" stroke-width="1.6" stroke-linecap="round"/><path d="M600.1 163.0h0M600.3 163.6h0" stroke="#d02090" stroke-width="2.4" stroke-linecap="round"/><path d="M602.2 162.6h0" stroke="#d02090" stroke-width="2.0" stroke-linecap="round"/><path d="M595.1 169.9h0M596.8 169.5h0M595.8 170.7h0M595.3 169.7h0" stroke="#2020d0" stroke-width="2.0" stroke-linecap="round"/><path d="M595.3 168.3h0" stroke="#2020d0" stroke-width="1.6" stroke-linecap="round"/><path d="M597.9 168.8h0" stroke="#2020d0" stroke-width="2.4" stroke-linecap="round"/><path d="M603.2 165.2h0M602.2 165.1h0M602.1 165.5h0M602.6 167.8h0" stroke="#f09020" stroke-width="2.4" stroke-linecap="round"/><path d="M604.8 165.9h0M603.1 166.2h0M600.8 160.8h0M602.3 160.4h0M600.7 161.4h0" stroke="#f09020" stroke-width="2.0" stroke-linecap="round"/><path d="M602.7 165.7h0M603.6 166.0h0M600.2 160.6h0" stroke="#f09020" stroke-width="1.6" stroke-linecap="round"/><path d="M592.1 170.3h0M593.0 171.1h0M592.5 171.3h0M591.7 173.4h0M593.1 171.1h0M597.8 172.1h0" stroke="#e8c820" stroke-width="1.6" stroke-linecap="round"/><path d="M590.1 170.1h0M599.4 171.8h0M597.8 173.6h0M599.1 174.0h0" stroke="#e8c820" stroke-width="2.4" stroke-linecap="round"/><path d="M591.4 169.8h0M600.3 173.6h0" stroke="#e8c820" stroke-width="2.0" stroke-linecap="round"/></g><g filter="url(#bl3)"><path d="M580.4 129.4h0M577.7 126.5h0M579.0 129.6h0M574.3 126.7h0M579.9 131.0h0M578.4 127.1h0M579.2 126.9h0M578.3 128.8h0M574.0 121.3h0M579.6 124.7h0M579.9 123.6h0M575.0 124.6h0M577.4 125.4h0M573.9 120.0h0" stroke="#e08a1a" stroke-width="2.4" stroke-linecap="round"/><path d="M579.7 129.6h0M580.3 130.2h0M576.4 126.8h0M577.3 127.6h0M579.3 130.1h0M580.8 130.9h0M579.6 129.9h0M579.2 127.1h0M580.4 126.9h0M578.8 125.7h0M577.0 130.0h0M574.8 122.8h0M579.7 123.4h0M576.5 124.6h0M575.4 119.8h0" stroke="#e08a1a" stroke-width="1.6" stroke-linecap="round"/><path d="M580.3 129.0h0M577.3 126.5h0M579.8 129.5h0M579.4 128.2h0M573.7 126.3h0M573.4 127.9h0M573.7 127.2h0M579.6 132.4h0M578.8 131.1h0M576.8 128.6h0M575.3 128.7h0M576.5 129.4h0M574.4 122.1h0M575.1 124.5h0M573.7 122.2h0M580.4 124.9h0M580.5 124.0h0M577.5 124.2h0M575.7 126.0h0M575.5 117.8h0M575.1 118.9h0" stroke="#e08a1a" stroke-width="2.0" stroke-linecap="round"/><path d="M580.9 129.7h0M578.7 127.3h0M580.2 129.0h0M574.1 127.0h0M574.8 118.1h0" stroke="#e08a1a" stroke-width="2.8" stroke-linecap="round"/><path d="M575.0 127.9h0M576.6 128.0h0M586.1 122.0h0M585.8 120.3h0M579.7 121.9h0M574.5 122.5h0M573.5 127.1h0M577.7 129.1h0M577.4 128.5h0" stroke="#d8d8d8" stroke-width="2.8" stroke-linecap="round"/><path d="M576.0 128.0h0M575.1 123.1h0M575.0 123.8h0M571.5 131.2h0M570.8 132.6h0" stroke="#d8d8d8" stroke-width="1.6" stroke-linecap="round"/><path d="M574.9 129.8h0M586.0 121.6h0M586.1 122.0h0M586.5 121.9h0M580.3 122.5h0M580.8 123.3h0M576.0 122.2h0M573.4 125.5h0M572.5 127.1h0M573.6 125.9h0M572.4 125.2h0M572.6 124.7h0M573.7 126.0h0M571.1 131.5h0M578.1 128.4h0M577.7 127.8h0" stroke="#d8d8d8" stroke-width="2.0" stroke-linecap="round"/><path d="M577.3 128.9h0M578.7 122.6h0M580.4 123.8h0M575.7 122.7h0M574.5 122.4h0M573.5 124.5h0M571.9 125.4h0M570.3 131.5h0M570.2 131.0h0M577.6 128.0h0" stroke="#d8d8d8" stroke-width="2.4" stroke-linecap="round"/><path d="M573.6 130.4h0M575.5 123.7h0M569.5 130.5h0M574.0 130.1h0M571.1 125.4h0M572.0 126.2h0M572.1 125.2h0M569.8 126.8h0M569.8 126.6h0" stroke="#a0a0a0" stroke-width="1.6" stroke-linecap="round"/><path d="M573.0 130.4h0M574.6 130.6h0M575.9 130.8h0M575.3 132.3h0M575.4 129.7h0M576.0 138.7h0M575.4 139.4h0M574.3 124.1h0M574.2 124.5h0M573.7 124.1h0M569.2 131.3h0M576.2 126.7h0M575.5 125.2h0M569.8 126.0h0M571.2 125.8h0" stroke="#a0a0a0" stroke-width="2.0" stroke-linecap="round"/><path d="M575.0 131.8h0M575.4 137.9h0M574.1 125.4h0M569.1 132.5h0M574.6 132.1h0M574.3 132.5h0M571.2 124.8h0M576.2 124.4h0M574.9 125.1h0" stroke="#a0a0a0" stroke-width="2.8" stroke-linecap="round"/><path d="M573.8 123.7h0M574.6 123.1h0M574.3 124.8h0M574.4 123.0h0M573.2 124.8h0M570.8 129.9h0M576.6 123.3h0M575.4 123.3h0" stroke="#f0d040" stroke-width="2.0" stroke-linecap="round"/><path d="M575.1 123.3h0M572.0 123.2h0M571.2 124.2h0" stroke="#f0d040" stroke-width="2.8" stroke-linecap="round"/><path d="M573.3 126.5h0M573.3 128.1h0M574.0 127.5h0M578.7 122.8h0M578.2 122.4h0M579.0 122.6h0M576.7 123.9h0M576.7 123.6h0M579.4 123.5h0M579.0 123.8h0M573.2 132.9h0M573.5 132.3h0M578.5 124.4h0M576.3 124.0h0" stroke="#e8c040" stroke-width="2.0" stroke-linecap="round"/><path d="M572.7 127.3h0M577.6 121.0h0M578.4 122.5h0M577.8 124.9h0M576.9 124.3h0M578.2 123.0h0M577.1 122.7h0M577.5 124.9h0M577.9 125.6h0" stroke="#e8c040" stroke-width="2.4" stroke-linecap="round"/><path d="M572.8 128.0h0M577.6 123.1h0M572.9 131.9h0M573.0 132.5h0M577.8 127.1h0" stroke="#e8c040" stroke-width="1.6" stroke-linecap="round"/><path d="M576.7 126.2h0M572.9 133.8h0" stroke="#e8c040" stroke-width="2.8" stroke-linecap="round"/><path d="M571.2 123.2h0M576.3 122.9h0M576.1 123.7h0" stroke="#f0d040" stroke-width="1.6" stroke-linecap="round"/><path d="M572.4 124.9h0M570.9 130.9h0M570.9 131.2h0M571.1 132.1h0M571.7 131.0h0M577.6 123.8h0" stroke="#f0d040" stroke-width="2.4" stroke-linecap="round"/><path d="M575.3 129.8h0M574.3 131.4h0M573.6 130.1h0M576.7 138.8h0M576.9 138.5h0M568.5 131.4h0M569.2 130.9h0M575.8 131.6h0M575.5 132.2h0M571.9 125.9h0M575.3 124.9h0M571.0 125.1h0" stroke="#a0a0a0" stroke-width="2.4" stroke-linecap="round"/><path d="M579.4 126.2h0M574.5 130.1h0" stroke="#e0b030" stroke-width="2.4" stroke-linecap="round"/><path d="M579.0 128.0h0M577.4 126.3h0M578.7 126.4h0M576.7 128.8h0" stroke="#e0b030" stroke-width="2.0" stroke-linecap="round"/><path d="M578.7 125.5h0M575.7 129.4h0M577.0 129.0h0" stroke="#e0b030" stroke-width="1.6" stroke-linecap="round"/><path d="M575.8 129.4h0" stroke="#e0b030" stroke-width="2.8" stroke-linecap="round"/><path d="M620.7 126.6h0M615.8 131.4h0M617.5 123.7h0M616.6 123.3h0M617.4 124.1h0M617.3 124.2h0M618.1 124.6h0" stroke="#e060b0" stroke-width="1.6" stroke-linecap="round"/><path d="M619.6 129.4h0M619.5 128.0h0M615.4 131.4h0M617.0 124.1h0M618.0 125.5h0M620.3 122.5h0M620.4 123.8h0M623.7 130.3h0M615.0 127.5h0M614.9 127.4h0M621.3 120.3h0M614.3 126.3h0M614.6 123.3h0" stroke="#e060b0" stroke-width="2.0" stroke-linecap="round"/><path d="M621.1 129.4h0M620.4 127.7h0M613.9 131.6h0M615.3 131.4h0M619.8 123.6h0M620.7 122.8h0M623.0 132.0h0M615.4 128.0h0M620.6 120.9h0M616.0 127.2h0M613.7 127.2h0M615.1 127.5h0M614.9 123.7h0M616.2 123.9h0M616.0 123.3h0M619.8 124.9h0M618.7 125.5h0" stroke="#e060b0" stroke-width="2.4" stroke-linecap="round"/><path d="M619.2 122.4h0M627.0 122.1h0M628.5 122.4h0M617.3 124.1h0M620.3 125.2h0M619.6 125.8h0M617.4 129.5h0M619.0 128.6h0M619.8 130.5h0M621.1 124.3h0M621.6 123.1h0M622.6 125.1h0M623.1 120.6h0M620.5 129.1h0M624.9 133.3h0M624.2 133.7h0" stroke="#90e040" stroke-width="2.4" stroke-linecap="round"/><path d="M618.8 122.0h0M619.5 122.3h0M620.2 122.5h0M628.4 123.5h0M617.6 124.4h0M620.2 126.6h0M619.4 130.9h0M621.3 124.5h0M620.5 123.4h0M623.6 126.3h0M623.4 128.2h0M623.7 127.4h0M623.8 122.2h0M622.4 120.6h0M619.4 128.6h0M619.8 128.0h0M620.1 129.7h0M618.5 129.5h0M622.2 125.5h0M623.7 127.3h0M625.7 134.2h0M624.0 133.6h0M623.2 133.3h0" stroke="#90e040" stroke-width="2.0" stroke-linecap="round"/><path d="M619.4 121.6h0M628.2 124.5h0M619.0 125.1h0M618.2 124.9h0M618.8 124.7h0M620.5 124.6h0M620.9 124.3h0M621.5 125.9h0M622.2 120.9h0M623.6 122.1h0M622.9 128.0h0M623.3 127.1h0" stroke="#90e040" stroke-width="2.8" stroke-linecap="round"/><path d="M627.8 123.7h0M617.5 130.3h0M624.0 126.4h0M622.4 127.0h0" stroke="#90e040" stroke-width="1.6" stroke-linecap="round"/><path d="M624.2 130.9h0M621.5 128.1h0M623.0 126.2h0M621.6 126.1h0M618.0 127.3h0M621.5 133.0h0" stroke="#1a1a90" stroke-width="2.8" stroke-linecap="round"/><path d="M625.3 129.4h0M624.1 130.6h0M625.3 130.2h0M617.9 127.5h0M620.4 134.0h0M621.6 134.2h0" stroke="#1a1a90" stroke-width="2.4" stroke-linecap="round"/><path d="M627.2 130.5h0M618.4 128.0h0M618.0 126.9h0M622.8 132.8h0M621.8 134.5h0" stroke="#1a1a90" stroke-width="2.0" stroke-linecap="round"/><path d="M613.1 126.5h0M611.0 126.4h0M611.4 126.8h0M625.7 122.3h0M625.5 122.4h0M620.3 124.8h0M619.2 126.7h0M620.5 125.2h0M619.7 127.2h0M621.0 125.5h0" stroke="#3030e0" stroke-width="1.6" stroke-linecap="round"/><path d="M611.9 126.9h0M624.1 121.2h0M624.5 122.1h0M625.7 124.2h0M620.9 125.5h0M614.0 122.3h0M613.9 122.9h0M612.1 123.2h0M619.7 127.3h0M619.0 128.2h0M621.7 126.0h0" stroke="#3030e0" stroke-width="2.4" stroke-linecap="round"/><path d="M611.4 126.2h0M620.2 126.0h0M614.6 121.9h0M619.4 126.7h0M619.8 125.6h0M620.9 126.5h0" stroke="#3030e0" stroke-width="2.0" stroke-linecap="round"/><path d="M614.5 129.5h0M620.5 123.2h0M622.5 131.6h0M622.2 131.0h0M622.3 132.1h0M614.4 127.0h0M615.2 127.0h0M620.6 121.1h0M622.0 121.5h0M620.5 120.4h0M614.2 128.9h0M615.5 124.5h0M619.9 124.7h0" stroke="#e060b0" stroke-width="2.8" stroke-linecap="round"/><path d="M622.2 125.4h0M620.9 125.5h0M618.0 127.0h0" stroke="#1a1a90" stroke-width="1.6" stroke-linecap="round"/><path d="M622.3 125.5h0M622.1 126.9h0M621.9 125.3h0M617.8 125.3h0M617.2 124.7h0M621.6 124.4h0" stroke="#2020c8" stroke-width="2.8" stroke-linecap="round"/><path d="M621.5 124.5h0M615.2 126.9h0M616.7 126.4h0M623.8 125.9h0M622.5 126.0h0M621.4 123.9h0" stroke="#2020c8" stroke-width="2.4" stroke-linecap="round"/><path d="M623.3 125.9h0M616.9 126.1h0M618.1 124.6h0M618.6 125.1h0M619.0 124.1h0M614.7 127.2h0M624.2 124.1h0M624.0 125.5h0M617.8 124.1h0M616.3 124.4h0" stroke="#2020c8" stroke-width="2.0" stroke-linecap="round"/><path d="M614.1 124.8h0M620.0 128.1h0M621.9 126.2h0" stroke="#3030e0" stroke-width="2.8" stroke-linecap="round"/><path d="M619.8 127.2h0M620.5 126.7h0M614.7 125.8h0M614.7 126.6h0M622.6 126.0h0M621.0 126.7h0" stroke="#c01870" stroke-width="2.4" stroke-linecap="round"/><path d="M620.2 127.5h0M622.7 126.4h0" stroke="#c01870" stroke-width="1.6" stroke-linecap="round"/><path d="M620.2 125.8h0M619.9 125.1h0M615.0 127.0h0M615.0 126.6h0M616.0 126.4h0M622.4 127.8h0M621.1 126.8h0" stroke="#c01870" stroke-width="2.0" stroke-linecap="round"/><path d="M614.3 127.0h0M615.0 128.7h0M623.8 126.3h0M622.6 125.0h0M616.4 124.2h0M617.1 122.6h0M620.1 125.4h0M620.1 123.9h0" stroke="#2020c8" stroke-width="1.6" stroke-linecap="round"/><path d="M644.2 167.5h0M640.2 163.7h0M641.7 163.1h0M643.2 166.7h0M642.4 165.8h0M640.3 167.7h0M646.8 164.9h0" stroke="#c8b040" stroke-width="2.8" stroke-linecap="round"/><path d="M643.1 168.3h0M644.3 167.5h0M643.1 167.5h0M642.4 162.3h0M642.5 163.4h0M637.8 160.6h0M636.7 160.1h0M642.4 165.6h0M639.7 166.8h0M640.6 167.2h0M638.5 167.1h0M643.8 171.1h0M644.9 171.3h0M643.7 172.3h0M641.5 165.8h0M645.7 164.6h0M643.0 167.3h0M642.1 168.0h0M643.2 168.6h0" stroke="#c8b040" stroke-width="2.4" stroke-linecap="round"/><path d="M644.3 166.3h0M641.0 165.1h0M641.6 162.4h0M636.6 161.6h0M637.2 160.8h0M641.2 166.9h0M639.2 167.7h0M641.9 168.5h0M641.1 167.2h0M646.1 166.3h0M645.4 165.9h0M642.9 167.3h0" stroke="#c8b040" stroke-width="2.0" stroke-linecap="round"/><path d="M642.0 163.0h0M643.4 163.0h0M644.3 161.9h0M641.8 168.3h0M634.8 166.1h0M642.1 168.1h0M643.7 164.8h0M644.5 164.3h0" stroke="#406020" stroke-width="2.8" stroke-linecap="round"/><path d="M642.5 164.3h0M641.3 163.0h0M643.6 163.5h0M644.7 162.7h0M645.3 162.8h0M641.1 167.7h0M641.4 167.6h0M635.9 165.6h0M633.2 165.3h0M633.4 164.9h0M641.1 167.1h0M643.7 164.8h0" stroke="#406020" stroke-width="2.4" stroke-linecap="round"/><path d="M643.1 165.0h0M640.3 167.3h0M633.3 165.1h0M641.5 167.7h0M643.8 166.0h0M643.6 164.8h0" stroke="#406020" stroke-width="2.0" stroke-linecap="round"/><path d="M642.8 164.0h0M639.6 166.3h0M641.5 167.9h0M641.9 167.1h0" stroke="#406020" stroke-width="1.6" stroke-linecap="round"/><path d="M643.0 163.2h0M642.5 162.5h0M643.1 161.6h0M641.6 165.2h0M642.6 165.5h0M640.1 171.9h0" stroke="#d0c050" stroke-width="1.6" stroke-linecap="round"/><path d="M642.9 162.4h0M642.3 164.3h0M642.1 163.4h0M640.4 165.2h0M640.1 165.4h0M640.8 167.1h0M640.7 166.5h0M639.8 166.6h0M641.0 164.8h0M639.9 166.8h0M639.1 166.4h0M639.7 166.1h0M641.8 165.1h0M643.0 165.0h0M641.0 171.9h0M639.1 171.1h0M644.5 162.6h0" stroke="#d0c050" stroke-width="2.4" stroke-linecap="round"/><path d="M643.5 161.6h0M639.4 167.0h0M637.7 167.6h0M639.8 172.0h0M640.3 172.8h0M643.3 164.5h0M644.5 163.0h0M644.0 162.0h0M645.2 164.1h0" stroke="#d0c050" stroke-width="2.0" stroke-linecap="round"/><path d="M640.6 163.8h0M639.9 163.3h0M639.6 163.8h0M641.1 163.9h0M635.9 161.8h0M641.3 164.7h0M639.9 168.9h0M644.7 172.8h0M645.0 172.3h0M641.5 165.7h0M646.9 166.5h0M643.0 168.2h0" stroke="#c8b040" stroke-width="1.6" stroke-linecap="round"/><path d="M640.2 162.5h0M638.4 162.1h0M637.7 162.9h0M630.8 162.7h0M631.2 163.6h0M639.4 163.5h0M646.4 172.0h0M646.4 171.2h0M647.6 171.4h0" stroke="#101010" stroke-width="2.4" stroke-linecap="round"/><path d="M639.8 164.1h0M638.9 163.4h0M630.0 163.8h0M640.3 164.8h0M647.6 171.1h0" stroke="#101010" stroke-width="2.0" stroke-linecap="round"/><path d="M640.2 164.2h0M642.4 166.2h0M641.6 164.9h0" stroke="#d0c050" stroke-width="2.8" stroke-linecap="round"/><path d="M634.1 163.7h0M634.4 162.5h0M637.8 161.8h0M639.0 162.9h0M637.6 162.2h0M642.4 167.0h0M642.6 165.8h0M642.4 164.4h0M642.6 161.4h0M639.6 167.5h0M639.2 167.9h0M635.5 164.3h0M635.4 164.1h0M640.6 166.3h0M639.0 166.7h0" stroke="#203a10" stroke-width="2.0" stroke-linecap="round"/><path d="M636.1 163.7h0M638.7 161.9h0M643.0 165.4h0M636.6 164.6h0M640.4 167.7h0" stroke="#203a10" stroke-width="1.6" stroke-linecap="round"/><path d="M634.0 165.0h0M638.6 162.0h0M642.5 161.3h0M642.0 160.2h0M636.8 163.6h0M634.7 164.8h0" stroke="#203a10" stroke-width="2.8" stroke-linecap="round"/><path d="M634.0 163.0h0M641.3 165.7h0M642.9 161.5h0M642.4 163.1h0M639.2 168.0h0M638.9 168.1h0M639.1 168.1h0M640.2 166.6h0M640.5 166.1h0" stroke="#203a10" stroke-width="2.4" stroke-linecap="round"/><path d="M633.3 164.3h0M631.6 163.4h0" stroke="#101010" stroke-width="2.8" stroke-linecap="round"/><path d="M639.0 163.9h0M640.9 163.0h0M643.3 166.4h0M642.8 170.8h0M639.8 163.3h0M640.2 165.3h0M639.6 164.8h0M642.5 165.4h0" stroke="#2a4a18" stroke-width="2.4" stroke-linecap="round"/><path d="M639.3 164.0h0M643.6 166.5h0M641.9 168.7h0M642.0 169.8h0M643.8 168.3h0M640.8 164.1h0M639.3 164.8h0M642.7 164.9h0M644.3 166.9h0M643.8 166.3h0" stroke="#2a4a18" stroke-width="2.0" stroke-linecap="round"/><path d="M640.2 163.8h0M641.4 163.1h0M641.9 166.4h0M642.6 166.5h0M639.9 164.5h0M639.7 164.9h0M639.9 164.2h0" stroke="#2a4a18" stroke-width="1.6" stroke-linecap="round"/><path d="M643.0 165.3h0M642.9 169.2h0M640.7 164.0h0M639.7 165.7h0M642.9 166.1h0" stroke="#2a4a18" stroke-width="2.8" stroke-linecap="round"/><path d="M639.3 164.9h0M640.7 164.2h0M639.6 165.1h0M648.3 171.6h0" stroke="#101010" stroke-width="1.6" stroke-linecap="round"/><path d="M618.1 207.2h0M618.9 208.1h0M620.2 204.5h0M620.1 204.1h0M626.6 202.3h0M627.0 202.0h0M626.3 203.5h0M621.6 203.8h0M621.9 204.0h0M621.5 204.0h0M626.0 205.1h0M625.5 205.4h0M620.0 207.7h0M621.2 206.8h0M620.0 207.9h0M625.8 207.5h0M626.9 207.3h0M618.3 208.1h0M618.5 207.3h0" stroke="#e01c1c" stroke-width="2.4" stroke-linecap="round"/><path d="M618.4 208.8h0M619.4 207.5h0M619.9 205.7h0M618.9 205.9h0M619.8 206.1h0M612.7 202.5h0M625.3 206.6h0M621.1 205.7h0M621.2 207.8h0M626.0 207.2h0M617.7 207.3h0M617.9 207.7h0" stroke="#e01c1c" stroke-width="1.6" stroke-linecap="round"/><path d="M618.5 208.8h0M616.8 206.9h0M617.9 206.6h0M627.0 203.2h0M618.3 204.8h0M613.7 201.5h0M625.5 204.9h0M619.4 204.8h0M624.6 206.3h0" stroke="#e01c1c" stroke-width="2.8" stroke-linecap="round"/><path d="M622.0 208.4h0M621.5 206.6h0M619.2 201.5h0M619.6 202.3h0M620.9 206.3h0M621.4 201.6h0M621.6 208.0h0M617.9 213.3h0M619.3 214.0h0M619.9 209.0h0" stroke="#c8a040" stroke-width="2.0" stroke-linecap="round"/><path d="M622.1 209.0h0M622.6 201.7h0M618.9 213.4h0M617.4 208.7h0" stroke="#c8a040" stroke-width="1.6" stroke-linecap="round"/><path d="M620.8 207.0h0M622.0 207.7h0M620.2 201.5h0M618.7 200.0h0M619.8 204.8h0M620.2 205.2h0M619.2 206.6h0M621.6 202.1h0M621.7 202.5h0M621.1 208.4h0M622.2 206.9h0M622.0 207.0h0M622.7 209.6h0M619.8 214.1h0M618.4 213.4h0M618.3 208.6h0M616.6 209.8h0M617.5 209.6h0" stroke="#c8a040" stroke-width="2.4" stroke-linecap="round"/><path d="M618.9 200.6h0M619.1 205.5h0M621.8 201.5h0" stroke="#c8a040" stroke-width="2.8" stroke-linecap="round"/><path d="M617.1 205.2h0M618.1 204.0h0M617.6 206.7h0M617.8 201.6h0M618.5 202.9h0M618.0 203.8h0M615.9 204.4h0M616.8 205.6h0M622.3 202.1h0M622.9 202.7h0" stroke="#d09050" stroke-width="1.6" stroke-linecap="round"/><path d="M616.2 204.4h0M617.2 205.1h0M616.2 208.8h0M616.6 206.5h0M619.7 199.9h0M623.3 210.2h0M623.5 209.4h0M623.4 210.5h0M616.4 203.3h0M621.1 201.2h0M621.6 199.3h0M620.3 199.9h0M615.9 205.0h0M609.7 204.8h0M610.8 206.6h0M611.2 207.1h0M611.2 206.1h0M618.9 206.9h0M616.5 205.6h0M622.0 203.4h0M619.5 205.5h0M619.1 204.9h0" stroke="#d09050" stroke-width="2.4" stroke-linecap="round"/><path d="M617.6 204.9h0M618.2 203.8h0M618.9 206.1h0M618.9 204.1h0M618.8 205.8h0M616.6 206.7h0M617.5 201.1h0M617.4 200.3h0M617.2 201.6h0M619.3 201.5h0M619.3 201.6h0M618.3 203.0h0M616.9 201.9h0M621.5 200.5h0M619.8 199.0h0M616.2 205.3h0M615.6 205.4h0M617.5 208.0h0M617.4 207.4h0M622.1 202.6h0M619.0 205.4h0M620.5 206.8h0" stroke="#d09050" stroke-width="2.0" stroke-linecap="round"/><path d="M618.2 205.3h0M615.5 206.8h0M617.9 201.1h0M616.1 201.4h0M619.3 201.6h0M624.0 209.5h0M624.1 208.2h0M609.4 206.5h0M618.4 206.3h0M621.2 203.9h0M618.8 205.7h0" stroke="#d09050" stroke-width="2.8" stroke-linecap="round"/><path d="M613.6 203.7h0M616.2 204.1h0M621.1 211.0h0M620.8 211.4h0" stroke="#ff3030" stroke-width="2.8" stroke-linecap="round"/><path d="M612.4 203.6h0M613.7 203.5h0M612.9 197.9h0M612.3 196.8h0" stroke="#ff3030" stroke-width="1.6" stroke-linecap="round"/><path d="M612.5 203.9h0M612.7 204.5h0M614.3 205.9h0M615.0 204.7h0M613.5 196.6h0" stroke="#ff3030" stroke-width="2.0" stroke-linecap="round"/><path d="M617.9 200.1h0M618.4 200.9h0M617.9 199.5h0M621.7 200.8h0M616.4 208.4h0M617.3 207.7h0M618.3 208.7h0M614.1 200.5h0" stroke="#1a6a78" stroke-width="2.0" stroke-linecap="round"/><path d="M617.0 199.5h0M616.6 200.8h0M622.6 202.8h0M615.7 201.4h0M614.6 199.7h0" stroke="#1a6a78" stroke-width="1.6" stroke-linecap="round"/><path d="M619.4 201.6h0M620.4 203.2h0M617.4 201.3h0" stroke="#1a6a78" stroke-width="2.4" stroke-linecap="round"/><path d="M621.6 201.4h0M617.6 209.1h0M616.6 208.1h0M615.8 202.7h0" stroke="#1a6a78" stroke-width="2.8" stroke-linecap="round"/><path d="M616.7 206.4h0M618.7 206.0h0M616.1 205.9h0M620.7 204.1h0M620.3 204.3h0M627.1 204.5h0M618.3 205.4h0M619.5 204.8h0M613.0 201.9h0M613.2 202.2h0M611.7 201.7h0M621.5 205.0h0M620.2 203.7h0M622.7 205.7h0M620.7 203.6h0M620.7 205.4h0M621.2 204.1h0M620.1 207.3h0M627.4 207.6h0M617.8 207.6h0" stroke="#e01c1c" stroke-width="2.0" stroke-linecap="round"/><path d="M615.2 203.4h0M615.1 203.6h0M620.4 210.8h0M620.0 212.0h0M622.4 211.9h0M612.3 197.8h0M613.1 197.6h0" stroke="#ff3030" stroke-width="2.4" stroke-linecap="round"/><path d="M574.5 196.6h0M576.2 196.4h0M566.6 200.2h0M566.4 200.2h0M566.9 201.7h0M568.0 200.3h0M567.5 199.9h0M564.9 203.9h0M565.4 203.8h0M572.1 209.7h0M572.3 202.4h0M572.6 202.2h0" stroke="#e060a0" stroke-width="2.4" stroke-linecap="round"/><path d="M576.6 195.4h0M576.9 196.8h0M574.4 196.5h0M569.7 199.5h0M565.2 201.7h0M571.4 208.7h0M571.7 202.6h0" stroke="#e060a0" stroke-width="1.6" stroke-linecap="round"/><path d="M579.0 201.3h0M579.0 200.7h0M565.2 206.1h0M573.8 206.2h0M573.1 205.9h0M574.7 205.3h0M573.5 206.2h0M571.9 204.3h0M573.7 203.6h0M569.8 205.2h0M568.1 207.9h0M567.8 207.5h0M567.9 208.2h0M569.5 206.2h0M570.4 206.2h0M564.3 206.8h0M564.3 208.2h0M566.0 203.3h0M576.1 199.9h0M576.0 200.7h0M576.9 201.4h0M576.7 200.1h0" stroke="#c01860" stroke-width="2.0" stroke-linecap="round"/><path d="M579.8 201.8h0M566.7 208.1h0M568.7 209.7h0M567.2 210.3h0M565.6 205.8h0M563.9 206.7h0M572.8 205.9h0M574.5 206.4h0M573.5 207.6h0M572.5 206.5h0M572.9 207.5h0M573.7 205.1h0M568.2 204.7h0M569.2 206.1h0M569.1 206.3h0M566.7 209.1h0M565.9 207.4h0M565.8 204.5h0" stroke="#c01860" stroke-width="2.4" stroke-linecap="round"/><path d="M578.7 201.0h0M580.0 200.4h0M573.5 205.6h0M569.9 204.8h0M564.6 206.7h0M578.2 200.9h0" stroke="#c01860" stroke-width="1.6" stroke-linecap="round"/><path d="M578.8 201.5h0M578.7 200.7h0M572.0 205.2h0M573.6 206.4h0M573.7 207.7h0M567.4 204.2h0M567.2 207.1h0M568.5 205.5h0M573.5 204.4h0M567.8 209.0h0" stroke="#e8dc80" stroke-width="2.4" stroke-linecap="round"/><path d="M577.3 201.7h0M579.1 201.8h0M579.1 201.0h0M571.4 205.6h0M571.6 205.2h0M571.7 204.0h0M571.4 206.4h0M574.4 207.1h0M575.0 207.9h0M573.4 207.3h0M568.3 203.3h0M569.0 202.4h0M569.0 207.2h0M568.3 204.7h0M573.5 201.8h0M573.1 203.0h0M567.7 211.0h0M566.1 211.1h0" stroke="#e8dc80" stroke-width="2.0" stroke-linecap="round"/><path d="M570.5 199.9h0M571.1 199.3h0M566.3 203.1h0M575.7 201.7h0M571.7 203.3h0" stroke="#e060a0" stroke-width="2.8" stroke-linecap="round"/><path d="M570.9 197.8h0M570.8 201.3h0M565.5 203.4h0M576.8 201.5h0M576.3 202.4h0M575.3 201.7h0M575.8 202.0h0M571.2 207.9h0M571.6 208.0h0M571.7 208.6h0M572.8 202.5h0" stroke="#e060a0" stroke-width="2.0" stroke-linecap="round"/><path d="M572.0 207.0h0M572.8 201.2h0M573.1 199.5h0" stroke="#5a1a90" stroke-width="2.8" stroke-linecap="round"/><path d="M572.0 204.6h0M572.8 205.8h0M571.9 199.3h0M572.3 201.0h0M569.2 210.7h0" stroke="#5a1a90" stroke-width="2.0" stroke-linecap="round"/><path d="M572.3 205.7h0M570.5 210.3h0" stroke="#5a1a90" stroke-width="1.6" stroke-linecap="round"/><path d="M572.5 206.0h0M572.4 199.6h0M570.1 210.6h0M570.8 210.8h0M569.2 208.6h0" stroke="#5a1a90" stroke-width="2.4" stroke-linecap="round"/><path d="M574.1 207.6h0M569.7 204.8h0M580.7 206.9h0M579.7 208.0h0M571.2 204.9h0M580.4 206.9h0M579.0 204.5h0M570.3 200.4h0M569.8 200.5h0M573.0 206.1h0M572.8 205.5h0M573.5 206.4h0" stroke="#3a2aa0" stroke-width="2.8" stroke-linecap="round"/><path d="M575.1 207.0h0M570.3 205.5h0M574.2 206.8h0M568.9 204.6h0M568.3 204.6h0M579.5 206.8h0M573.5 205.5h0M573.7 206.2h0M562.9 202.6h0M563.2 202.4h0M562.1 201.3h0M573.0 207.4h0" stroke="#3a2aa0" stroke-width="2.4" stroke-linecap="round"/><path d="M574.4 207.5h0M574.7 207.9h0M571.7 205.0h0M571.0 206.4h0M570.4 205.1h0M573.8 207.5h0M573.1 207.7h0M573.1 207.0h0M580.3 206.6h0M580.3 207.6h0M580.9 207.0h0M574.2 204.3h0M573.6 205.0h0M573.8 205.1h0M570.2 204.7h0M569.8 204.2h0M578.9 205.8h0M578.7 206.1h0M568.7 201.1h0M569.6 200.4h0M572.8 206.4h0M572.4 205.0h0M564.1 203.2h0M572.0 204.5h0" stroke="#3a2aa0" stroke-width="2.0" stroke-linecap="round"/><path d="M573.2 206.6h0M572.2 207.9h0M574.0 203.5h0M572.9 205.7h0M570.8 200.7h0M574.9 205.5h0M563.3 201.9h0" stroke="#3a2aa0" stroke-width="1.6" stroke-linecap="round"/><path d="M568.4 209.6h0M567.5 209.6h0M564.2 205.6h0M566.2 205.1h0M571.5 207.6h0M573.3 205.3h0M569.5 206.7h0M567.9 208.1h0M569.9 205.7h0M570.7 206.0h0M565.3 207.7h0M565.3 202.3h0M565.5 203.6h0M566.6 203.9h0" stroke="#c01860" stroke-width="2.8" stroke-linecap="round"/><path d="M569.8 203.4h0M568.4 206.4h0M571.8 202.3h0" stroke="#e8dc80" stroke-width="2.8" stroke-linecap="round"/><path d="M568.5 204.8h0M572.1 203.2h0M568.9 211.7h0M567.6 210.8h0" stroke="#e8dc80" stroke-width="1.6" stroke-linecap="round"/><path d="M550.7 163.0h0M551.2 164.0h0M550.9 161.7h0M547.8 164.7h0M546.6 165.8h0M556.9 164.5h0M551.5 162.8h0" stroke="#202020" stroke-width="2.0" stroke-linecap="round"/><path d="M551.8 163.6h0M547.6 166.5h0M548.2 168.6h0M549.1 167.1h0M557.1 165.1h0M551.3 163.6h0M549.6 162.6h0M551.9 163.9h0" stroke="#202020" stroke-width="2.4" stroke-linecap="round"/><path d="M550.7 162.5h0M547.4 166.8h0M548.9 168.3h0M555.6 165.5h0M557.7 163.6h0M551.6 162.7h0" stroke="#202020" stroke-width="2.8" stroke-linecap="round"/><path d="M548.8 167.3h0M546.8 167.5h0M549.3 170.1h0M543.4 160.1h0M542.9 160.9h0M543.4 161.8h0M546.4 163.7h0M547.9 169.3h0M548.4 168.0h0M542.5 169.1h0M543.3 169.3h0M554.3 166.3h0M554.9 164.9h0M554.8 164.5h0" stroke="#c8c8c8" stroke-width="2.4" stroke-linecap="round"/><path d="M547.8 166.1h0M549.2 167.5h0M549.8 169.4h0M551.2 168.6h0M544.2 160.1h0M544.2 161.2h0M547.4 162.4h0M542.4 168.9h0M555.5 163.7h0" stroke="#c8c8c8" stroke-width="2.8" stroke-linecap="round"/><path d="M547.3 167.7h0M552.1 170.2h0M543.9 162.2h0M544.1 161.4h0M547.0 164.2h0M546.6 162.2h0M547.2 163.0h0M549.3 168.1h0M548.7 168.1h0M542.3 169.0h0M543.3 168.6h0M555.0 164.5h0" stroke="#c8c8c8" stroke-width="2.0" stroke-linecap="round"/><path d="M550.2 165.7h0M542.7 162.1h0M545.6 169.6h0M543.8 164.6h0M545.3 164.1h0M544.7 164.9h0M554.4 160.9h0M554.5 160.5h0M550.6 168.4h0M547.3 170.8h0M546.8 166.9h0M548.1 166.7h0M550.0 165.8h0M542.2 158.1h0M552.4 160.8h0M552.2 160.7h0M552.4 160.2h0M548.1 164.9h0" stroke="#e8dc1e" stroke-width="2.0" stroke-linecap="round"/><path d="M550.5 164.6h0M548.1 163.7h0M542.7 162.0h0M543.1 160.7h0M545.8 168.7h0M545.6 168.7h0M545.0 163.8h0M554.0 159.1h0M546.6 170.1h0M548.8 170.6h0M542.2 157.1h0M543.2 157.0h0M552.1 160.6h0M549.7 162.5h0" stroke="#e8dc1e" stroke-width="1.6" stroke-linecap="round"/><path d="M549.2 164.3h0M549.3 164.5h0M543.3 161.4h0M541.7 162.4h0M545.6 169.5h0M545.2 165.6h0M554.8 160.9h0M554.1 160.6h0M550.0 169.6h0M549.4 170.0h0M548.5 169.3h0M548.5 167.7h0M549.3 166.5h0M543.4 160.0h0M543.0 158.7h0M553.1 160.7h0M552.7 160.4h0M552.1 162.0h0M547.7 164.3h0" stroke="#e8dc1e" stroke-width="2.4" stroke-linecap="round"/><path d="M553.2 166.1h0M554.4 167.1h0M548.5 160.6h0M548.3 160.5h0M547.5 161.5h0M544.7 161.2h0M549.1 160.7h0M549.1 167.0h0M542.9 166.8h0M542.0 167.3h0M542.8 166.3h0" stroke="#808080" stroke-width="2.4" stroke-linecap="round"/><path d="M553.1 165.8h0M545.0 159.7h0M544.6 159.9h0M543.6 166.7h0M544.5 166.2h0" stroke="#808080" stroke-width="1.6" stroke-linecap="round"/><path d="M553.2 166.3h0M553.2 165.8h0M548.4 160.0h0M545.8 160.7h0M545.0 159.9h0M549.8 159.7h0M549.1 160.7h0M550.7 160.5h0M549.2 160.6h0M547.0 167.0h0M546.8 167.3h0M547.4 166.6h0M544.2 165.7h0M543.1 168.0h0" stroke="#808080" stroke-width="2.0" stroke-linecap="round"/><path d="M544.5 168.1h0M550.2 169.6h0M547.4 169.6h0M548.6 170.8h0M553.2 162.1h0M553.3 160.6h0M551.5 160.6h0M549.3 165.0h0M550.9 163.9h0" stroke="#e8dc1e" stroke-width="2.8" stroke-linecap="round"/><path d="M550.8 169.3h0M544.4 161.3h0M543.7 161.2h0M544.8 162.1h0M549.6 168.3h0" stroke="#c8c8c8" stroke-width="1.6" stroke-linecap="round"/><path d="M548.3 166.1h0M548.4 166.8h0M547.9 167.7h0M558.0 166.1h0" stroke="#202020" stroke-width="1.6" stroke-linecap="round"/><path d="M548.1 161.6h0M546.9 165.8h0M543.5 164.2h0M543.9 166.4h0M544.3 165.7h0" stroke="#808080" stroke-width="2.8" stroke-linecap="round"/><path d="M546.3 167.1h0M546.1 165.3h0M547.8 166.7h0M547.3 163.4h0M547.2 163.1h0M549.3 166.8h0M550.1 163.7h0M548.5 164.5h0M549.5 167.1h0" stroke="#f0e040" stroke-width="2.4" stroke-linecap="round"/><path d="M545.7 166.4h0M546.6 164.5h0M554.7 160.9h0M548.6 162.4h0M548.6 167.7h0M548.0 166.5h0M549.6 164.4h0M545.6 161.4h0" stroke="#f0e040" stroke-width="1.6" stroke-linecap="round"/><path d="M554.2 161.1h0M555.2 160.6h0M554.6 159.9h0M550.0 162.9h0M551.3 162.4h0M551.0 162.5h0M547.1 163.3h0M547.0 168.5h0M549.1 168.2h0M549.2 164.6h0M548.9 166.8h0M545.9 161.1h0M546.5 162.0h0M545.7 161.6h0M546.7 161.0h0" stroke="#f0e040" stroke-width="2.0" stroke-linecap="round"/><path d="M553.9 161.4h0M548.2 162.4h0M550.2 163.0h0M546.8 162.9h0M550.7 163.6h0M549.6 167.4h0M549.1 167.4h0M549.6 166.3h0" stroke="#f0e040" stroke-width="2.8" stroke-linecap="round"/></g><path d="M243.0,307.1 C245.1,307.7 247.4,311.9 250.0,312.9 C252.5,314.0 256.3,312.2 258.0,313.6 C259.8,314.9 258.8,319.2 260.3,321.0 C261.9,322.9 265.6,323.1 267.3,324.5 C269.0,325.8 270.3,327.2 270.7,329.1 C271.1,331.1 269.4,333.9 269.6,336.0 C269.8,338.1 272.2,339.7 271.9,341.8 C271.5,343.9 269.6,346.9 267.3,348.7 C265.0,350.4 261.1,350.7 258.0,352.2 C255.0,353.7 251.9,356.0 248.8,357.9 C245.7,359.8 242.6,362.6 239.6,363.7 C236.5,364.9 233.0,365.8 230.3,364.9 C227.6,363.9 225.9,360.0 223.4,357.9 C220.9,355.8 216.5,354.7 215.4,352.2 C214.2,349.7 216.5,345.5 216.5,343.0 C216.5,340.4 214.4,339.4 215.4,337.1 C216.3,334.8 220.3,331.6 222.2,329.1 C224.2,326.6 225.5,324.9 226.9,322.2 C228.2,319.5 228.6,315.1 230.3,312.9 C232.1,310.8 235.2,310.5 237.3,309.5 C239.4,308.5 240.9,306.6 243.0,307.1 Z" fill="#a2a2a2"/><g filter="url(#bl6)"><circle cx="228.0" cy="338.7" r="4.9" fill="url(#g1)"/><circle cx="249.9" cy="343.7" r="4.2" fill="url(#g1)"/><circle cx="229.3" cy="319.8" r="6.5" fill="url(#g1)"/><circle cx="241.9" cy="356.5" r="5.2" fill="url(#g1)"/><circle cx="252.0" cy="314.7" r="5.6" fill="url(#g1)"/><circle cx="265.6" cy="337.4" r="5.9" fill="url(#g1)"/><circle cx="259.1" cy="341.6" r="4.8" fill="url(#g1)"/><circle cx="242.0" cy="349.4" r="6.2" fill="url(#g1)"/><circle cx="237.4" cy="354.4" r="5.1" fill="url(#g1)"/><circle cx="239.8" cy="343.7" r="4.8" fill="url(#g1)"/><circle cx="244.1" cy="329.0" r="4.9" fill="url(#g1)"/><circle cx="248.7" cy="341.1" r="6.3" fill="url(#g1)"/><circle cx="253.9" cy="315.4" r="6.2" fill="url(#g1)"/><circle cx="247.8" cy="349.0" r="4.5" fill="url(#g1)"/><circle cx="263.4" cy="340.5" r="4.7" fill="url(#g1)"/><circle cx="261.6" cy="330.5" r="4.4" fill="url(#g1)"/><circle cx="231.3" cy="352.4" r="6.2" fill="url(#g1)"/><circle cx="216.4" cy="343.0" r="4.1" fill="url(#g1)"/><circle cx="256.7" cy="325.7" r="6.2" fill="url(#g1)"/><circle cx="218.4" cy="342.1" r="4.1" fill="url(#g1)"/><circle cx="225.6" cy="330.4" r="5.5" fill="url(#g1)"/><circle cx="265.6" cy="324.6" r="6.4" fill="url(#g1)"/><circle cx="267.3" cy="328.5" r="5.2" fill="url(#g1)"/><circle cx="244.8" cy="344.8" r="5.5" fill="url(#g1)"/><circle cx="247.2" cy="343.3" r="6.4" fill="url(#g1)"/><circle cx="244.1" cy="331.8" r="5.8" fill="url(#g1)"/><circle cx="228.0" cy="323.9" r="6.4" fill="url(#g1)"/><circle cx="244.9" cy="339.0" r="4.0" fill="url(#g1)"/><circle cx="238.6" cy="340.9" r="4.1" fill="url(#g1)"/><circle cx="250.6" cy="344.1" r="4.2" fill="url(#g1)"/><circle cx="251.3" cy="333.9" r="5.7" fill="url(#g1)"/><circle cx="234.8" cy="348.6" r="5.8" fill="url(#g1)"/><circle cx="228.8" cy="333.3" r="5.5" fill="url(#g1)"/><circle cx="232.9" cy="327.7" r="4.8" fill="url(#g1)"/><circle cx="235.8" cy="341.8" r="4.8" fill="url(#g1)"/><circle cx="236.3" cy="352.6" r="4.1" fill="url(#g1)"/><circle cx="247.8" cy="350.3" r="4.8" fill="url(#g1)"/><circle cx="227.1" cy="354.5" r="4.6" fill="url(#g1)"/><circle cx="225.0" cy="332.0" r="5.7" fill="url(#g1)"/><circle cx="233.7" cy="356.3" r="5.1" fill="url(#g1)"/><circle cx="233.9" cy="345.2" r="6.2" fill="url(#g1)"/><circle cx="240.7" cy="319.2" r="4.3" fill="url(#g1)"/><circle cx="245.4" cy="317.1" r="6.0" fill="url(#g1)"/><circle cx="230.4" cy="354.7" r="5.6" fill="url(#g1)"/><circle cx="261.9" cy="326.6" r="4.3" fill="url(#g1)"/><circle cx="231.2" cy="353.9" r="4.7" fill="url(#g1)"/><circle cx="234.5" cy="330.9" r="5.0" fill="url(#g1)"/><circle cx="238.2" cy="361.7" r="4.4" fill="url(#g1)"/><circle cx="239.7" cy="363.5" r="6.3" fill="url(#g1)"/><circle cx="227.1" cy="351.0" r="6.1" fill="url(#g1)"/><circle cx="253.4" cy="337.2" r="4.7" fill="url(#g1)"/><circle cx="234.2" cy="319.4" r="4.2" fill="url(#g1)"/><circle cx="248.9" cy="323.0" r="6.0" fill="url(#g1)"/><circle cx="258.3" cy="316.0" r="4.7" fill="url(#g1)"/><circle cx="253.4" cy="337.5" r="5.0" fill="url(#g1)"/><circle cx="269.9" cy="342.8" r="4.9" fill="url(#g1)"/><circle cx="228.9" cy="358.1" r="5.2" fill="url(#g1)"/><circle cx="260.5" cy="327.0" r="4.5" fill="url(#g1)"/><circle cx="245.7" cy="355.3" r="4.4" fill="url(#g1)"/><circle cx="230.0" cy="321.9" r="5.3" fill="url(#g1)"/><circle cx="239.1" cy="334.3" r="5.9" fill="url(#g1)"/><circle cx="243.8" cy="324.8" r="4.8" fill="url(#g1)"/><circle cx="234.8" cy="345.0" r="5.5" fill="url(#g1)"/><circle cx="235.3" cy="317.2" r="4.8" fill="url(#g1)"/><circle cx="221.2" cy="339.4" r="5.8" fill="url(#g1)"/><circle cx="236.5" cy="310.4" r="4.4" fill="url(#g1)"/><circle cx="236.1" cy="342.4" r="6.0" fill="url(#g1)"/><circle cx="236.5" cy="354.4" r="5.6" fill="url(#g1)"/><circle cx="239.6" cy="328.2" r="5.2" fill="url(#g1)"/><circle cx="255.8" cy="331.2" r="5.7" fill="url(#g1)"/><circle cx="241.3" cy="320.4" r="5.3" fill="url(#g1)"/><circle cx="239.2" cy="331.5" r="6.2" fill="url(#g1)"/><circle cx="269.7" cy="328.3" r="6.2" fill="url(#g1)"/><circle cx="261.0" cy="321.5" r="5.2" fill="url(#g1)"/><circle cx="221.2" cy="355.1" r="5.7" fill="url(#g1)"/><circle cx="253.7" cy="350.3" r="5.4" fill="url(#g1)"/><circle cx="220.0" cy="341.4" r="4.0" fill="url(#g1)"/><circle cx="222.4" cy="352.7" r="4.1" fill="url(#g1)"/><circle cx="221.0" cy="357.0" r="5.7" fill="url(#g1)"/><circle cx="248.4" cy="354.2" r="4.1" fill="url(#g1)"/><circle cx="259.6" cy="336.7" r="5.8" fill="url(#g1)"/><circle cx="220.2" cy="351.2" r="6.3" fill="url(#g1)"/><circle cx="247.5" cy="356.0" r="4.6" fill="url(#g1)"/><circle cx="250.6" cy="351.5" r="5.0" fill="url(#g1)"/><circle cx="235.7" cy="329.7" r="4.9" fill="url(#g1)"/><circle cx="238.8" cy="310.6" r="5.3" fill="url(#g1)"/><circle cx="271.9" cy="330.7" r="5.9" fill="url(#g1)"/><circle cx="223.4" cy="347.6" r="5.9" fill="url(#g1)"/><circle cx="254.0" cy="337.0" r="5.2" fill="url(#g1)"/><circle cx="244.7" cy="332.5" r="5.8" fill="url(#g1)"/><circle cx="225.7" cy="341.2" r="4.8" fill="url(#g1)"/><circle cx="227.7" cy="347.7" r="6.4" fill="url(#g1)"/><circle cx="231.5" cy="348.5" r="5.0" fill="url(#g1)"/><circle cx="264.8" cy="341.2" r="4.7" fill="url(#g1)"/><circle cx="242.4" cy="328.8" r="4.4" fill="url(#g1)"/></g><path d="M272.0,350.8 C272.5,347.8 273.4,344.4 275.7,342.4 C278.0,340.4 282.7,339.2 285.9,338.7 C289.2,338.2 293.2,337.9 295.2,339.6 C297.2,341.3 298.0,345.5 298.0,348.9 C298.0,352.3 297.7,357.6 295.2,360.1 C292.7,362.5 286.9,363.8 283.1,363.8 C279.4,363.8 274.8,362.2 272.9,360.1 C271.1,357.9 271.5,353.7 272.0,350.8 Z" fill="#f2c41e"/><g filter="url(#bl3)"><path d="M281.7 352.6h0M289.5 343.8h0" stroke="#ffe27a" stroke-width="3.2" stroke-linecap="round"/><path d="M272.2 349.4h0M292.0 341.1h0M291.0 351.8h0M298.6 347.9h0M280.3 339.5h0M299.4 350.7h0M285.3 358.7h0M294.2 338.4h0M283.5 362.9h0M291.4 361.6h0M284.7 360.4h0M281.2 341.5h0M293.9 347.1h0M297.8 342.0h0M281.5 358.8h0M295.3 340.6h0M291.2 359.2h0M290.8 339.2h0M280.7 359.2h0M295.9 355.1h0" stroke="#f2c41e" stroke-width="3.2" stroke-linecap="round"/><path d="M297.4 339.6h0M291.6 358.8h0M295.5 340.0h0M275.6 348.9h0M279.3 351.3h0M289.9 351.1h0M298.0 346.2h0M274.0 361.8h0M297.1 357.7h0M286.9 337.6h0M293.5 350.8h0M285.2 363.2h0M289.9 359.4h0M281.2 347.2h0M276.9 350.1h0M297.3 341.9h0M293.1 339.5h0M285.2 347.7h0M273.6 351.4h0M282.5 352.8h0M296.6 349.3h0M294.0 347.9h0M281.9 346.8h0M287.7 353.7h0" stroke="#f2c41e" stroke-width="2.8" stroke-linecap="round"/><path d="M281.1 349.9h0M273.3 351.2h0M289.7 340.4h0M296.3 338.0h0M276.0 344.1h0M279.0 361.8h0M285.1 355.6h0M282.7 355.7h0M283.8 356.9h0M283.5 347.3h0M270.6 349.8h0M284.3 341.6h0M297.5 354.1h0M271.6 355.8h0M279.1 354.5h0M286.5 352.4h0M275.5 360.1h0M280.2 345.8h0M271.2 360.3h0M286.4 339.5h0M282.3 347.0h0M277.6 345.0h0M270.8 353.5h0M273.7 359.7h0M292.7 360.9h0M279.5 354.6h0M278.8 347.9h0M277.4 347.1h0M295.2 345.1h0M285.9 349.6h0M271.7 361.7h0M274.3 343.2h0M290.6 340.3h0M274.1 345.7h0M275.5 344.8h0M279.9 349.0h0M276.5 360.8h0" stroke="#f2c41e" stroke-width="2.0" stroke-linecap="round"/><path d="M298.5 346.6h0M279.9 357.8h0M279.0 342.2h0M281.8 339.7h0M288.6 351.5h0M293.6 340.9h0M293.7 350.3h0M292.3 358.2h0M278.6 342.8h0M296.9 339.3h0M292.9 362.2h0M272.1 352.9h0M291.9 362.3h0M284.6 359.3h0M272.8 357.8h0M278.3 349.4h0M290.2 351.3h0M295.4 348.8h0M271.7 360.6h0M294.5 354.3h0M279.4 352.0h0M290.1 347.6h0M284.5 344.6h0M295.5 350.5h0M295.7 349.7h0M286.2 349.7h0M282.1 353.4h0M277.4 349.4h0M280.9 345.5h0M286.2 363.6h0M289.1 353.8h0M285.6 363.1h0M285.9 342.7h0" stroke="#f2c41e" stroke-width="2.4" stroke-linecap="round"/><path d="M278.8 358.0h0M290.4 339.6h0M286.1 342.2h0M271.8 350.5h0M292.9 353.2h0M287.3 339.2h0" stroke="#c89a10" stroke-width="2.8" stroke-linecap="round"/><path d="M283.5 360.4h0M274.8 351.3h0M291.5 343.7h0M278.8 361.5h0M278.4 341.7h0M273.9 344.1h0M286.1 347.9h0M272.2 351.7h0M294.8 354.2h0M292.5 346.1h0" stroke="#ffe27a" stroke-width="2.4" stroke-linecap="round"/><path d="M290.5 353.2h0M293.9 354.9h0M287.6 351.4h0M287.7 337.8h0M279.0 348.7h0M298.0 351.9h0M289.5 340.9h0M279.7 355.7h0" stroke="#ffe27a" stroke-width="2.0" stroke-linecap="round"/><path d="M292.6 354.0h0M286.0 352.4h0M288.9 345.8h0M284.4 352.3h0" stroke="#c89a10" stroke-width="3.2" stroke-linecap="round"/><path d="M294.1 352.6h0M276.0 357.1h0M289.4 346.7h0M295.3 338.6h0M295.6 342.0h0M279.8 354.0h0M280.9 357.8h0M297.5 348.3h0M292.7 346.3h0" stroke="#c89a10" stroke-width="2.4" stroke-linecap="round"/><path d="M275.7 355.2h0M292.7 360.8h0M294.9 356.6h0M289.0 345.3h0M291.0 340.1h0M282.3 362.2h0M283.2 363.2h0M297.5 355.2h0M292.2 342.7h0" stroke="#ffe27a" stroke-width="2.8" stroke-linecap="round"/><path d="M275.9 359.6h0M278.5 355.9h0M288.3 349.7h0M287.9 360.5h0M289.5 354.4h0M275.9 359.6h0M275.2 350.9h0M276.2 349.4h0" stroke="#c89a10" stroke-width="2.0" stroke-linecap="round"/></g><path d="M295.6,341.7 C296.3,339.8 298.6,337.2 300.3,337.0 C302.0,336.9 304.8,338.6 305.9,340.7 C306.9,342.9 307.6,347.9 306.8,350.0 C306.0,352.2 302.9,354.0 301.2,353.7 C299.5,353.4 297.5,350.2 296.6,348.2 C295.6,346.1 295.0,343.5 295.6,341.7 Z" fill="#f08a1a"/><g filter="url(#bl3)"><path d="M305.8 351.9h0M303.4 340.4h0M302.4 348.1h0M302.0 338.8h0M306.7 341.7h0M306.1 346.3h0M305.9 349.3h0M295.7 340.6h0M306.4 350.9h0" stroke="#ffb860" stroke-width="2.0" stroke-linecap="round"/><path d="M299.5 340.0h0M305.9 345.2h0M301.5 343.8h0M296.7 341.5h0M299.8 337.8h0M303.6 340.2h0M307.0 344.9h0M304.2 339.7h0M302.9 346.6h0M304.3 345.1h0M294.8 341.2h0M299.8 343.4h0M305.2 341.7h0M301.6 350.6h0M295.4 343.5h0M305.3 343.3h0M300.4 339.6h0M297.9 340.0h0M305.6 339.7h0M302.0 337.9h0M296.2 341.8h0M298.7 340.2h0M306.6 341.6h0M302.9 340.3h0M305.9 345.8h0M304.9 342.5h0M300.0 336.1h0M306.7 343.8h0M303.8 342.6h0M303.3 342.7h0M297.6 340.2h0M305.9 350.5h0M302.2 338.5h0M303.1 338.8h0" stroke="#f08a1a" stroke-width="2.0" stroke-linecap="round"/><path d="M298.2 349.2h0M300.5 344.0h0M301.8 348.7h0M298.7 344.9h0M301.4 345.3h0M298.9 345.0h0M300.9 339.6h0M306.4 342.2h0M306.4 343.4h0M305.7 345.0h0M304.4 351.1h0M299.5 339.4h0M301.1 336.5h0M302.3 340.3h0M305.7 349.3h0M306.8 351.3h0M304.6 351.7h0M303.9 346.6h0M305.6 346.5h0" stroke="#f08a1a" stroke-width="2.8" stroke-linecap="round"/><path d="M297.5 341.6h0M302.1 340.5h0M295.1 342.3h0M298.8 345.8h0M298.9 347.4h0M304.9 344.2h0M299.1 350.6h0M296.6 341.2h0M304.6 343.3h0M305.0 339.6h0M306.4 351.6h0" stroke="#b86800" stroke-width="2.4" stroke-linecap="round"/><path d="M297.9 349.3h0M303.4 344.3h0M301.2 345.0h0M297.6 340.1h0M304.7 348.6h0M301.5 348.7h0M304.4 350.8h0M300.9 342.0h0M299.9 352.7h0M303.8 343.4h0" stroke="#b86800" stroke-width="2.8" stroke-linecap="round"/><path d="M299.5 340.2h0M301.8 347.3h0M301.0 339.2h0M302.3 348.9h0M302.0 350.5h0M306.6 345.1h0M297.3 343.6h0M303.4 338.0h0M299.5 348.9h0M304.5 340.1h0M300.3 351.3h0M302.9 345.8h0M304.1 347.9h0M301.4 348.1h0M302.3 347.8h0M306.8 343.9h0M301.3 340.6h0M300.0 345.0h0M302.5 354.1h0M303.7 347.9h0M300.5 353.7h0M302.4 342.3h0M301.7 343.4h0M297.3 344.6h0M301.8 345.0h0M296.9 348.1h0M303.9 350.1h0M302.4 338.2h0M304.6 346.3h0M299.8 345.8h0M300.5 336.7h0M305.5 340.6h0M303.7 351.5h0M297.1 344.6h0M305.5 346.3h0M300.4 337.9h0M305.3 342.6h0M295.6 340.2h0M295.9 343.4h0" stroke="#f08a1a" stroke-width="2.4" stroke-linecap="round"/><path d="M304.3 347.0h0M304.5 341.3h0M301.4 343.4h0M299.2 344.1h0M306.3 346.5h0M305.1 340.7h0M295.4 344.2h0M300.3 349.3h0M302.1 345.2h0M302.0 344.0h0" stroke="#ffb860" stroke-width="2.4" stroke-linecap="round"/><path d="M306.7 343.0h0M305.4 339.6h0M304.5 339.7h0M295.2 343.7h0M304.5 351.6h0M304.9 340.3h0M298.4 348.6h0M301.4 351.6h0M301.4 354.3h0" stroke="#ffb860" stroke-width="2.8" stroke-linecap="round"/><path d="M304.1 347.5h0M301.4 339.6h0M305.1 342.4h0M296.4 343.9h0M303.8 341.3h0M303.2 345.1h0M304.6 341.1h0M299.4 350.1h0M303.5 340.8h0M301.2 338.7h0M300.4 345.4h0" stroke="#b86800" stroke-width="2.0" stroke-linecap="round"/><path d="M298.1 342.4h0M299.8 351.3h0M300.6 346.0h0M295.5 345.6h0M299.8 344.7h0M299.2 341.3h0M304.2 347.2h0M298.2 342.8h0M304.6 346.0h0M299.2 337.1h0M297.8 341.5h0" stroke="#f08a1a" stroke-width="3.2" stroke-linecap="round"/><path d="M306.3 351.2h0M299.3 343.7h0M302.3 352.3h0M297.1 349.1h0M301.0 343.5h0" stroke="#ffb860" stroke-width="3.2" stroke-linecap="round"/><path d="M303.1 351.5h0M306.5 340.8h0" stroke="#b86800" stroke-width="3.2" stroke-linecap="round"/></g><path d="M302.9,350.3 C304.5,348.2 308.5,347.7 311.3,348.5 C314.1,349.2 317.3,352.2 319.7,355.0 C322.0,357.8 324.8,362.2 325.2,365.2 C325.7,368.1 324.9,371.5 322.5,372.6 C320.0,373.7 313.8,373.5 310.4,371.7 C307.0,369.8 303.3,365.0 302.0,361.5 C300.8,357.9 301.4,352.5 302.9,350.3 Z" fill="#d8d8d8"/><g filter="url(#bl3)"><path d="M320.2 371.5h0M310.5 353.6h0M323.3 370.6h0M306.3 359.0h0M319.3 368.7h0M302.8 362.9h0M305.6 367.7h0M317.7 356.3h0" stroke="#a8a8a8" stroke-width="2.8" stroke-linecap="round"/><path d="M324.0 361.3h0M316.1 351.8h0M320.6 356.3h0M307.1 369.7h0M322.9 361.3h0M312.1 361.8h0M321.7 357.6h0M307.5 364.0h0" stroke="#ffffff" stroke-width="2.0" stroke-linecap="round"/><path d="M321.8 371.5h0M308.7 348.4h0M315.8 361.8h0M319.1 364.1h0M314.6 368.7h0M315.5 363.6h0M303.1 357.1h0M323.8 374.1h0M308.5 364.5h0M306.9 355.5h0M309.3 350.7h0M306.5 356.9h0M318.8 361.1h0M314.5 355.3h0M315.7 353.6h0M312.2 354.7h0M307.7 348.0h0M309.4 371.1h0M311.5 356.6h0M309.8 372.4h0M316.0 366.6h0M316.5 364.1h0M314.7 349.7h0M320.3 369.3h0M303.1 361.2h0M317.1 359.0h0M316.6 357.4h0M302.2 363.5h0M306.0 363.4h0M310.6 347.2h0M310.1 357.9h0M308.1 371.2h0M318.7 372.1h0" stroke="#d8d8d8" stroke-width="2.0" stroke-linecap="round"/><path d="M310.6 369.9h0M322.3 369.5h0M316.7 373.0h0M316.6 353.8h0M320.5 357.1h0M308.4 359.5h0M326.5 367.1h0M312.4 371.8h0M314.1 366.1h0M306.6 357.1h0M309.0 360.7h0M315.3 369.3h0M310.9 363.4h0M319.4 363.0h0M309.6 351.9h0M318.4 364.8h0M305.8 361.8h0M312.0 367.2h0M301.4 354.5h0M317.0 355.0h0M319.4 367.9h0M308.9 370.8h0M320.6 370.8h0M323.3 371.5h0M316.0 361.9h0M326.4 365.1h0M305.2 364.8h0M312.5 373.2h0M305.3 366.7h0M312.3 361.7h0M307.5 364.7h0M315.0 362.4h0M311.7 366.6h0" stroke="#d8d8d8" stroke-width="2.4" stroke-linecap="round"/><path d="M319.0 354.7h0M318.6 364.6h0M315.6 353.7h0M312.9 363.7h0M310.6 373.2h0M307.3 360.6h0M316.1 362.4h0" stroke="#ffffff" stroke-width="2.8" stroke-linecap="round"/><path d="M309.9 362.6h0M310.4 366.6h0M310.9 351.9h0M307.8 354.5h0M308.0 347.7h0M307.5 352.5h0" stroke="#ffffff" stroke-width="3.2" stroke-linecap="round"/><path d="M323.4 365.8h0M313.9 349.0h0M320.2 360.9h0M322.4 363.8h0M311.3 357.4h0M309.2 362.6h0M314.1 360.2h0M303.4 358.5h0M316.1 355.1h0M302.2 353.2h0M306.9 349.1h0M316.7 366.6h0M316.7 370.8h0M312.5 367.0h0M308.2 356.1h0" stroke="#d8d8d8" stroke-width="3.2" stroke-linecap="round"/><path d="M317.2 370.5h0M315.8 359.5h0M310.2 366.3h0M309.7 364.8h0M313.0 349.8h0M313.8 353.2h0M316.3 354.4h0M317.3 368.5h0M309.9 354.5h0M316.4 355.5h0M321.1 372.6h0M312.9 350.0h0M315.1 357.0h0M320.3 355.0h0M309.8 362.4h0M302.5 362.4h0M318.9 362.1h0M320.5 361.8h0M321.9 362.9h0M318.7 368.9h0M317.4 373.1h0M317.1 373.4h0M301.2 352.2h0" stroke="#d8d8d8" stroke-width="2.8" stroke-linecap="round"/><path d="M309.7 364.7h0M308.6 368.6h0M310.2 364.4h0M325.8 366.2h0M319.3 370.9h0M317.9 369.3h0M306.0 359.8h0M310.2 369.9h0M316.1 363.8h0M314.0 361.9h0" stroke="#ffffff" stroke-width="2.4" stroke-linecap="round"/><path d="M307.1 365.8h0M308.7 353.4h0M303.8 357.8h0M313.0 370.7h0M309.1 349.3h0M319.1 370.7h0M312.1 350.1h0M321.4 364.4h0M314.6 366.0h0M322.7 370.6h0M312.5 364.9h0M308.4 370.9h0M302.2 354.4h0" stroke="#a8a8a8" stroke-width="2.4" stroke-linecap="round"/><path d="M322.8 369.7h0M313.6 365.7h0M309.5 349.6h0M314.3 366.4h0M318.8 366.0h0M311.9 349.2h0" stroke="#a8a8a8" stroke-width="3.2" stroke-linecap="round"/><path d="M309.4 351.4h0M315.4 353.5h0M313.7 368.6h0M307.4 367.7h0M303.6 354.0h0M313.9 359.7h0M306.0 356.9h0M312.3 366.0h0" stroke="#a8a8a8" stroke-width="2.0" stroke-linecap="round"/></g><path d="M273.2,364.9 C274.8,361.8 279.6,359.9 283.5,359.3 C287.3,358.7 293.7,359.0 296.5,361.2 C299.3,363.3 300.2,368.8 300.2,372.3 C300.2,375.9 298.9,380.5 296.5,382.5 C294.0,384.5 289.0,385.2 285.3,384.4 C281.6,383.6 276.2,381.1 274.2,377.9 C272.2,374.6 271.7,368.0 273.2,364.9 Z" fill="#9ee040"/><g filter="url(#bl3)"><path d="M299.5 371.0h0M289.3 362.7h0M280.6 364.1h0M291.0 366.2h0M282.3 379.9h0M290.2 383.2h0M288.2 380.4h0M287.8 374.2h0M282.0 377.4h0M298.1 362.7h0M284.7 367.9h0M293.4 359.9h0M285.9 368.0h0M276.0 370.3h0M279.7 380.0h0M274.0 367.3h0M277.4 368.8h0M282.5 363.5h0M276.3 380.3h0M283.4 370.0h0M288.6 364.6h0M279.6 369.4h0M277.1 369.0h0M294.7 368.2h0M284.2 371.4h0M294.5 374.0h0M300.5 369.7h0M275.4 379.4h0" stroke="#9ee040" stroke-width="2.0" stroke-linecap="round"/><path d="M292.8 381.0h0M294.7 370.2h0M273.3 374.7h0M276.8 374.8h0M276.2 381.0h0M286.3 382.5h0M280.2 363.8h0M284.5 380.4h0M292.8 368.2h0M298.7 370.1h0M297.7 364.5h0M274.7 380.3h0M283.5 359.6h0M299.9 366.0h0M287.0 386.1h0M281.2 383.6h0M286.7 359.1h0M296.3 381.1h0M281.5 372.0h0M285.6 384.2h0M279.1 368.8h0M283.5 382.0h0M280.6 372.3h0M292.7 369.1h0M298.6 368.5h0M280.8 360.5h0" stroke="#9ee040" stroke-width="2.8" stroke-linecap="round"/><path d="M282.8 377.2h0M290.1 362.8h0M286.8 377.2h0M271.5 364.4h0M280.4 369.9h0M301.5 373.6h0M291.8 365.9h0M285.9 375.4h0" stroke="#70b028" stroke-width="2.8" stroke-linecap="round"/><path d="M283.5 362.9h0M277.9 365.8h0M278.8 365.2h0M274.4 376.6h0M297.1 362.4h0M281.7 370.4h0M282.1 373.6h0M291.9 383.9h0M292.8 359.6h0M279.9 369.5h0M289.5 367.2h0M291.2 364.0h0M295.4 364.2h0" stroke="#70b028" stroke-width="2.4" stroke-linecap="round"/><path d="M291.9 359.2h0M288.7 376.6h0M291.2 369.4h0M283.4 370.5h0M297.7 382.2h0M295.6 378.9h0M292.3 368.1h0M276.8 366.2h0M297.5 381.9h0M292.1 371.0h0M283.0 366.7h0M283.0 380.9h0M275.4 376.7h0M274.7 364.0h0" stroke="#9ee040" stroke-width="3.2" stroke-linecap="round"/><path d="M274.6 377.4h0M282.8 373.8h0M282.6 361.1h0M286.8 374.7h0M294.5 378.0h0M284.0 367.7h0M296.4 362.6h0M283.8 360.7h0M290.6 377.4h0M284.2 370.5h0M288.8 367.6h0M288.0 361.0h0M284.0 367.1h0" stroke="#70b028" stroke-width="2.0" stroke-linecap="round"/><path d="M271.7 368.6h0M298.5 382.8h0M272.4 373.8h0M288.8 371.7h0M281.0 370.5h0M299.7 365.4h0M293.2 365.3h0M280.0 370.9h0" stroke="#d0ff90" stroke-width="2.8" stroke-linecap="round"/><path d="M299.1 376.2h0M279.1 362.3h0M281.7 362.2h0M298.0 383.1h0M284.2 373.5h0M285.8 374.5h0M285.7 377.9h0M273.0 368.2h0M289.4 376.4h0M287.1 370.9h0M277.6 381.3h0M288.8 363.7h0M272.1 365.1h0M297.9 378.0h0M285.5 361.2h0M285.4 384.6h0M285.3 371.3h0M276.1 364.2h0M273.4 371.1h0M296.6 366.1h0M284.3 359.3h0M293.1 373.9h0M288.1 380.0h0M284.4 378.8h0M273.5 362.8h0M287.2 384.5h0M293.8 384.0h0M286.3 359.4h0" stroke="#9ee040" stroke-width="2.4" stroke-linecap="round"/><path d="M293.0 373.3h0M279.9 376.4h0M284.4 381.3h0M273.6 373.9h0M298.6 381.3h0M283.7 370.7h0M284.5 373.1h0M284.6 373.9h0" stroke="#d0ff90" stroke-width="2.0" stroke-linecap="round"/><path d="M296.9 365.4h0M278.8 372.1h0M271.3 367.7h0M278.3 370.4h0M295.7 377.4h0M294.5 373.1h0M292.3 372.0h0M282.2 373.5h0M289.6 377.4h0M278.6 375.2h0M290.7 367.7h0M292.3 358.9h0M277.8 371.7h0" stroke="#d0ff90" stroke-width="2.4" stroke-linecap="round"/><path d="M294.9 372.7h0M288.6 385.0h0M278.7 360.5h0M278.3 369.6h0M294.9 361.6h0M290.5 360.4h0M287.3 359.0h0" stroke="#d0ff90" stroke-width="3.2" stroke-linecap="round"/><path d="M291.1 360.7h0M294.4 384.0h0M295.3 363.4h0M287.3 371.1h0" stroke="#70b028" stroke-width="3.2" stroke-linecap="round"/></g><path d="M285.1,378.6 C286.6,375.4 291.6,372.3 295.3,371.2 C299.0,370.1 304.6,370.1 307.4,372.1 C310.2,374.1 311.9,379.7 312.0,383.3 C312.2,386.8 310.9,391.3 308.3,393.5 C305.7,395.6 299.9,396.7 296.2,396.3 C292.5,395.8 287.9,393.6 286.0,390.7 C284.2,387.8 283.5,381.9 285.1,378.6 Z" fill="#c8108a"/><g filter="url(#bl3)"><path d="M301.4 379.5h0M302.4 393.8h0M294.0 372.0h0M302.1 382.7h0M300.6 387.8h0M287.6 380.0h0M308.1 371.0h0M293.4 375.8h0M287.6 377.9h0M312.7 384.9h0M288.5 382.6h0M297.4 391.8h0M305.1 388.8h0M289.0 393.6h0M286.2 385.6h0M311.5 384.9h0M292.3 392.1h0M308.4 393.7h0M312.8 382.9h0M307.3 390.0h0M312.2 384.4h0M287.9 382.0h0M303.2 388.5h0M303.6 373.8h0M284.4 378.9h0M292.4 384.5h0" stroke="#c8108a" stroke-width="2.4" stroke-linecap="round"/><path d="M302.1 377.1h0M292.5 390.8h0M296.8 389.7h0M287.1 379.0h0M289.4 392.9h0M312.7 380.5h0M296.7 378.5h0" stroke="#901068" stroke-width="3.2" stroke-linecap="round"/><path d="M309.9 378.6h0M292.4 382.0h0M302.5 385.8h0M293.3 383.2h0M291.0 375.4h0M297.7 381.5h0M288.9 393.8h0M289.9 390.9h0M311.4 385.4h0M312.6 380.0h0M290.8 385.3h0M287.2 392.1h0M306.3 391.7h0M292.9 378.8h0M309.7 384.7h0M308.9 380.1h0M302.7 375.6h0M310.6 388.7h0M284.8 380.3h0M286.1 384.4h0M298.8 389.9h0M298.1 395.6h0M309.9 394.5h0M298.9 370.3h0M285.6 377.9h0M298.5 396.0h0M292.4 383.3h0" stroke="#c8108a" stroke-width="2.8" stroke-linecap="round"/><path d="M296.2 394.5h0M305.8 390.9h0M298.0 379.5h0M292.2 385.2h0M305.9 382.0h0M300.0 379.9h0M293.4 384.9h0M310.1 379.5h0M295.6 390.0h0M290.4 375.3h0" stroke="#901068" stroke-width="2.0" stroke-linecap="round"/><path d="M284.1 385.4h0M301.9 393.5h0M312.2 379.9h0M291.0 386.0h0M289.9 391.1h0M295.7 383.3h0M309.4 372.6h0M288.7 391.2h0M297.2 370.2h0M300.3 385.1h0M297.8 379.5h0M298.7 371.6h0M311.1 386.1h0M298.8 390.3h0M287.6 375.2h0M295.2 387.7h0M305.7 395.6h0M305.0 382.3h0" stroke="#c8108a" stroke-width="3.2" stroke-linecap="round"/><path d="M309.9 386.7h0M304.5 382.1h0M291.3 374.7h0M286.3 380.2h0M289.8 386.9h0M307.1 377.3h0M291.3 394.4h0M301.0 394.2h0M289.9 373.2h0M284.7 376.6h0M309.4 392.0h0M310.1 381.1h0M306.5 386.2h0M305.3 373.6h0M294.1 387.6h0M311.0 380.7h0M287.9 381.7h0M299.6 392.5h0M289.6 385.0h0M312.5 380.0h0M308.8 379.9h0M304.8 392.0h0M298.2 381.5h0M298.6 369.5h0M297.0 370.7h0M309.1 387.2h0" stroke="#c8108a" stroke-width="2.0" stroke-linecap="round"/><path d="M293.8 376.4h0M307.2 378.2h0M300.9 389.8h0M302.6 370.4h0M283.5 381.7h0M297.9 379.9h0M292.2 373.7h0M297.2 392.6h0M285.4 385.9h0M306.5 384.7h0M301.6 373.8h0" stroke="#901068" stroke-width="2.8" stroke-linecap="round"/><path d="M289.1 379.7h0M295.4 394.9h0M295.5 377.8h0M306.6 370.5h0M301.7 384.1h0M290.1 379.1h0M309.9 384.7h0M291.1 391.5h0" stroke="#f060b8" stroke-width="2.0" stroke-linecap="round"/><path d="M306.9 376.1h0M304.2 385.1h0M290.4 384.9h0M310.5 391.9h0M306.3 381.3h0M289.8 388.1h0M289.1 390.1h0M295.8 380.4h0M310.9 390.1h0M291.0 385.0h0M305.0 392.1h0M286.7 380.9h0M284.6 379.4h0" stroke="#f060b8" stroke-width="2.4" stroke-linecap="round"/><path d="M288.4 383.9h0M303.3 389.5h0M311.1 379.0h0M296.2 371.3h0M305.3 392.2h0M304.2 384.6h0M296.3 370.9h0M284.9 380.9h0M307.9 378.5h0M289.9 395.0h0M308.6 372.5h0" stroke="#901068" stroke-width="2.4" stroke-linecap="round"/><path d="M299.5 372.0h0M304.7 373.9h0M309.5 373.6h0M296.4 369.3h0M286.9 380.9h0M289.0 386.9h0M299.8 379.8h0M307.1 372.4h0" stroke="#f060b8" stroke-width="2.8" stroke-linecap="round"/><path d="M306.8 373.6h0M294.0 384.5h0M296.4 378.4h0M291.2 392.4h0M295.0 397.0h0" stroke="#f060b8" stroke-width="3.2" stroke-linecap="round"/></g><path d="M310.9,371.7 C312.3,369.3 317.0,368.9 319.3,369.8 C321.6,370.7 324.1,374.1 324.9,377.2 C325.6,380.3 325.6,386.0 323.9,388.4 C322.2,390.7 316.8,391.9 314.7,391.2 C312.5,390.4 311.6,387.0 310.9,383.7 C310.3,380.5 309.5,374.0 310.9,371.7 Z" fill="#2414c8"/><g filter="url(#bl3)"><path d="M313.0 389.8h0M312.2 375.9h0M312.1 380.7h0M316.1 389.8h0M313.2 383.0h0M324.5 374.7h0M314.8 374.1h0M311.8 380.8h0M320.4 387.0h0M321.2 374.4h0M314.1 390.4h0M311.2 380.3h0M322.9 389.6h0M325.0 384.3h0M314.2 380.3h0M310.7 372.9h0M323.6 379.3h0M310.4 375.4h0M313.2 372.3h0M316.6 391.8h0M316.0 377.5h0M322.4 377.3h0M313.9 392.0h0M321.1 371.1h0M318.2 375.0h0" stroke="#2414c8" stroke-width="2.0" stroke-linecap="round"/><path d="M315.3 384.8h0M311.6 385.6h0M317.3 368.9h0M315.5 388.9h0M317.7 381.5h0M314.9 374.0h0M313.8 386.1h0M321.3 387.9h0M325.0 380.4h0M319.0 385.1h0M314.6 380.4h0M312.5 387.8h0M313.9 382.4h0M316.7 390.5h0M316.6 375.6h0M322.4 382.8h0M318.5 379.1h0M319.2 384.1h0M319.6 378.6h0M316.7 385.6h0M319.7 387.6h0M312.1 387.6h0M311.0 385.8h0M322.1 381.3h0" stroke="#2414c8" stroke-width="2.8" stroke-linecap="round"/><path d="M323.0 376.8h0M324.3 381.6h0M315.2 378.3h0M318.3 382.1h0M312.2 388.0h0M315.3 373.7h0M322.4 385.6h0" stroke="#6a60ff" stroke-width="3.2" stroke-linecap="round"/><path d="M318.3 389.0h0M316.0 391.3h0M318.4 386.5h0M316.7 378.7h0M319.2 387.6h0M321.5 377.9h0M320.0 376.0h0M315.6 379.6h0M313.9 369.8h0M317.6 378.5h0M322.1 372.0h0M314.0 375.1h0M315.7 375.4h0M310.0 382.2h0M312.5 383.3h0M313.1 383.6h0M324.5 385.9h0M314.8 384.5h0" stroke="#140c90" stroke-width="2.4" stroke-linecap="round"/><path d="M324.7 378.5h0M312.0 371.4h0M314.6 391.5h0M313.7 377.5h0M317.2 391.6h0M322.3 390.0h0M322.7 379.0h0M315.1 374.0h0M325.2 386.1h0M312.9 372.9h0M317.7 376.9h0M323.5 389.4h0M323.3 377.2h0M322.1 376.2h0M310.4 382.0h0M318.1 372.4h0M323.2 385.2h0M316.9 382.3h0M315.7 382.3h0M321.8 376.2h0M318.7 382.6h0M323.1 378.1h0M320.3 379.2h0M314.3 370.9h0M310.0 376.5h0M320.1 388.5h0M314.4 378.7h0M317.5 384.1h0M312.9 369.9h0M321.3 374.8h0M319.5 380.6h0M321.1 370.4h0M315.5 378.2h0M316.6 379.8h0" stroke="#2414c8" stroke-width="2.4" stroke-linecap="round"/><path d="M317.7 369.0h0M320.6 387.4h0M320.1 373.6h0M316.8 386.8h0M314.3 371.3h0M316.7 372.8h0M313.4 379.8h0M313.6 374.1h0M318.6 383.1h0M314.4 379.1h0M323.2 382.1h0M322.5 389.7h0M312.2 370.3h0M322.4 390.3h0" stroke="#6a60ff" stroke-width="2.8" stroke-linecap="round"/><path d="M319.0 389.7h0M318.1 378.7h0M314.3 390.8h0M318.7 382.1h0M321.0 370.7h0M321.9 382.2h0M311.8 379.4h0M316.3 380.4h0M312.2 371.9h0" stroke="#140c90" stroke-width="2.0" stroke-linecap="round"/><path d="M322.3 388.3h0M313.1 382.6h0M323.7 378.3h0M315.2 371.3h0M313.6 389.5h0M318.0 370.0h0M310.7 384.1h0" stroke="#6a60ff" stroke-width="2.0" stroke-linecap="round"/><path d="M311.8 371.3h0M313.9 387.9h0M322.3 385.4h0M317.9 378.1h0M314.7 369.6h0M324.3 382.3h0M310.0 374.8h0M311.6 374.0h0M314.8 378.8h0M315.5 377.1h0M324.4 378.1h0" stroke="#2414c8" stroke-width="3.2" stroke-linecap="round"/><path d="M311.6 382.1h0M313.8 372.6h0M316.5 388.5h0M316.5 373.0h0M318.5 372.5h0M321.9 387.1h0M318.7 390.3h0M318.4 385.9h0M321.2 374.7h0M312.8 377.1h0M320.5 378.3h0M322.6 385.8h0" stroke="#140c90" stroke-width="2.8" stroke-linecap="round"/><path d="M318.1 389.5h0M317.5 372.9h0M313.7 374.3h0M320.7 375.4h0M317.9 390.9h0" stroke="#6a60ff" stroke-width="2.4" stroke-linecap="round"/><path d="M324.9 386.1h0M316.9 388.6h0M325.5 380.1h0M317.8 388.0h0" stroke="#140c90" stroke-width="3.2" stroke-linecap="round"/></g><g filter="url(#bl6)"><path d="M431.7,356.4 C433.4,355.5 437.3,357.2 440.5,358.1 C443.8,359.0 447.0,359.7 451.1,361.7 C455.3,363.8 461.4,368.5 465.3,370.5 C469.1,372.6 472.9,372.3 474.1,374.1 C475.3,375.8 473.8,379.6 472.3,381.1 C470.8,382.5 467.6,382.3 465.3,382.9 C462.9,383.5 461.1,383.1 458.2,384.6 C455.2,386.1 451.4,389.9 447.6,391.7 C443.8,393.5 438.8,394.0 435.3,395.2 C431.8,396.4 429.4,397.8 426.5,398.7 C423.5,399.6 420.0,401.7 417.7,400.5 C415.3,399.3 412.6,394.0 412.3,391.7 C412.0,389.3 413.2,387.0 415.9,386.4 C418.5,385.8 425.5,389.0 428.2,388.1 C430.8,387.2 431.7,383.7 431.7,381.1 C431.7,378.4 428.5,375.2 428.2,372.3 C427.9,369.3 429.4,366.1 430.0,363.4 C430.6,360.8 429.9,357.3 431.7,356.4 Z" fill="#a0b088"/><circle cx="441.0" cy="372.1" r="3.4" fill="url(#igrn)"/><circle cx="435.2" cy="388.3" r="3.8" fill="url(#igrn)"/><circle cx="449.7" cy="391.7" r="3.7" fill="url(#igrn)"/><circle cx="429.2" cy="386.8" r="4.0" fill="url(#igrn)"/><circle cx="438.1" cy="358.1" r="3.6" fill="url(#igrn)"/><circle cx="472.4" cy="374.4" r="3.7" fill="url(#igrn)"/><circle cx="449.0" cy="362.3" r="3.9" fill="url(#igrn)"/><circle cx="447.3" cy="383.5" r="3.4" fill="url(#igrn)"/><circle cx="455.4" cy="382.7" r="4.1" fill="url(#igrn)"/><circle cx="468.5" cy="382.4" r="3.8" fill="url(#igrn)"/><circle cx="464.0" cy="369.9" r="3.7" fill="url(#igrn)"/><circle cx="431.5" cy="358.2" r="3.9" fill="url(#igrn)"/><circle cx="416.3" cy="392.2" r="3.3" fill="url(#igrn)"/><circle cx="443.3" cy="388.6" r="3.5" fill="url(#igrn)"/><circle cx="459.8" cy="374.6" r="3.5" fill="url(#igrn)"/><circle cx="475.3" cy="373.4" r="3.7" fill="url(#igrn)"/><circle cx="468.2" cy="371.9" r="4.0" fill="url(#igrn)"/><circle cx="420.9" cy="395.1" r="3.6" fill="url(#igrn)"/><circle cx="421.1" cy="400.2" r="4.3" fill="url(#igrn)"/><circle cx="435.9" cy="383.8" r="4.3" fill="url(#igrn)"/><circle cx="433.5" cy="360.7" r="3.9" fill="url(#igrn)"/><circle cx="447.3" cy="387.9" r="3.4" fill="url(#igrn)"/><circle cx="440.2" cy="388.3" r="4.1" fill="url(#igrn)"/><circle cx="420.8" cy="388.9" r="4.1" fill="url(#igrn)"/><circle cx="469.6" cy="378.0" r="3.4" fill="url(#igrn)"/><circle cx="415.0" cy="392.0" r="3.5" fill="url(#igrn)"/><circle cx="440.5" cy="381.2" r="3.7" fill="url(#igrn)"/><circle cx="474.1" cy="380.0" r="4.2" fill="url(#igrn)"/><circle cx="470.2" cy="380.5" r="3.8" fill="url(#igrn)"/><circle cx="446.4" cy="368.5" r="4.0" fill="url(#igrn)"/><circle cx="457.2" cy="376.0" r="3.8" fill="url(#igrn)"/><circle cx="450.6" cy="372.1" r="4.2" fill="url(#igrn)"/><circle cx="425.1" cy="394.1" r="4.0" fill="url(#igrn)"/><circle cx="451.3" cy="387.0" r="3.7" fill="url(#igrn)"/><circle cx="450.9" cy="362.7" r="3.4" fill="url(#igrn)"/><circle cx="433.5" cy="376.8" r="3.8" fill="url(#igrn)"/><circle cx="411.0" cy="391.8" r="3.6" fill="url(#igrn)"/><circle cx="433.1" cy="365.1" r="4.1" fill="url(#igrn)"/><circle cx="434.7" cy="390.1" r="3.8" fill="url(#igrn)"/><circle cx="445.0" cy="371.9" r="3.9" fill="url(#igrn)"/><circle cx="444.7" cy="363.5" r="3.7" fill="url(#igrn)"/><circle cx="416.3" cy="393.0" r="3.4" fill="url(#igrn)"/><circle cx="426.4" cy="395.5" r="3.9" fill="url(#igrn)"/><circle cx="428.1" cy="368.5" r="4.1" fill="url(#igrn)"/><circle cx="431.0" cy="365.9" r="3.9" fill="url(#igrn)"/><circle cx="442.9" cy="370.8" r="4.1" fill="url(#igrn)"/><circle cx="436.6" cy="364.0" r="3.6" fill="url(#igrn)"/><circle cx="440.9" cy="383.7" r="3.9" fill="url(#igrn)"/><circle cx="439.4" cy="362.9" r="3.7" fill="url(#igrn)"/><circle cx="431.5" cy="362.2" r="3.8" fill="url(#igrn)"/><circle cx="422.1" cy="388.7" r="4.0" fill="url(#igrn)"/><circle cx="432.4" cy="375.7" r="3.9" fill="url(#igrn)"/><circle cx="446.4" cy="370.2" r="3.3" fill="url(#igrn)"/><circle cx="447.1" cy="376.9" r="4.2" fill="url(#igrn)"/><circle cx="431.4" cy="394.6" r="3.8" fill="url(#igrn)"/><circle cx="416.0" cy="388.9" r="3.6" fill="url(#igrn)"/><circle cx="453.7" cy="373.2" r="4.2" fill="url(#igrn)"/><circle cx="443.9" cy="360.4" r="4.0" fill="url(#igrn)"/><circle cx="433.8" cy="367.0" r="3.6" fill="url(#igrn)"/><circle cx="435.6" cy="362.7" r="3.9" fill="url(#igrn)"/><circle cx="468.8" cy="381.8" r="3.3" fill="url(#igrn)"/><circle cx="461.0" cy="367.2" r="3.4" fill="url(#igrn)"/><circle cx="440.2" cy="387.1" r="3.5" fill="url(#igrn)"/><circle cx="431.9" cy="390.5" r="3.6" fill="url(#igrn)"/><circle cx="450.4" cy="380.5" r="4.2" fill="url(#igrn)"/><circle cx="438.2" cy="395.3" r="4.3" fill="url(#igrn)"/><circle cx="443.2" cy="356.8" r="4.1" fill="url(#igrn)"/><circle cx="436.5" cy="376.5" r="3.9" fill="url(#igrn)"/><circle cx="475.3" cy="381.0" r="4.2" fill="url(#igrn)"/><circle cx="433.5" cy="397.3" r="4.1" fill="url(#igrn)"/><circle cx="446.2" cy="386.6" r="4.3" fill="url(#igrn)"/><circle cx="467.8" cy="382.3" r="3.5" fill="url(#igrn)"/><circle cx="462.7" cy="376.0" r="4.3" fill="url(#igrn)"/><circle cx="445.1" cy="382.3" r="4.1" fill="url(#igrn)"/><circle cx="475.1" cy="373.2" r="3.6" fill="url(#igrn)"/><circle cx="442.3" cy="362.7" r="4.1" fill="url(#igrn)"/><circle cx="475.3" cy="379.3" r="3.6" fill="url(#igrn)"/><circle cx="433.0" cy="354.5" r="3.5" fill="url(#igrn)"/><circle cx="430.6" cy="395.5" r="3.5" fill="url(#igrn)"/><circle cx="434.6" cy="385.1" r="3.6" fill="url(#igrn)"/><circle cx="472.0" cy="380.9" r="3.3" fill="url(#igrn)"/><circle cx="433.8" cy="381.1" r="4.0" fill="url(#igrn)"/><circle cx="414.4" cy="388.4" r="4.0" fill="url(#igrn)"/></g><g filter="url(#bl6)"><path d="M431.2,328.3 C432.6,325.1 435.3,324.2 438.2,323.1 C441.1,321.9 445.6,320.7 448.8,321.3 C452.1,321.8 455.9,324.2 457.6,326.6 C459.4,328.9 459.3,333.0 459.3,335.4 C459.3,337.7 456.7,339.2 457.6,340.7 C458.5,342.2 462.0,342.2 464.7,344.2 C467.3,346.3 471.7,350.4 473.5,353.0 C475.2,355.7 475.9,358.0 475.3,360.0 C474.7,362.1 472.0,364.2 470.0,365.4 C467.9,366.5 465.2,367.5 462.9,367.2 C460.5,366.9 458.2,365.0 455.8,363.6 C453.5,362.1 452.0,359.5 448.8,358.3 C445.6,357.2 439.4,357.7 436.5,356.5 C433.5,355.4 432.4,353.6 431.2,351.2 C430.0,348.9 429.4,346.2 429.4,342.4 C429.4,338.6 429.7,331.5 431.2,328.3 Z" fill="#a8a080"/><circle cx="456.0" cy="344.4" r="4.1" fill="url(#iyel)"/><circle cx="445.4" cy="352.3" r="4.2" fill="url(#iyel)"/><circle cx="444.6" cy="344.8" r="4.2" fill="url(#iyel)"/><circle cx="442.8" cy="341.8" r="3.6" fill="url(#iyel)"/><circle cx="467.5" cy="345.7" r="4.0" fill="url(#iyel)"/><circle cx="468.7" cy="353.2" r="3.5" fill="url(#iyel)"/><circle cx="440.0" cy="341.6" r="3.4" fill="url(#iyel)"/><circle cx="459.9" cy="359.2" r="3.9" fill="url(#iyel)"/><circle cx="448.4" cy="319.5" r="3.7" fill="url(#iyel)"/><circle cx="428.3" cy="333.4" r="3.3" fill="url(#iyel)"/><circle cx="432.9" cy="347.9" r="3.5" fill="url(#iyel)"/><circle cx="457.9" cy="337.9" r="3.6" fill="url(#iyel)"/><circle cx="464.8" cy="363.9" r="3.5" fill="url(#iyel)"/><circle cx="450.9" cy="351.8" r="3.8" fill="url(#iyel)"/><circle cx="465.2" cy="351.4" r="3.6" fill="url(#iyel)"/><circle cx="461.5" cy="357.9" r="3.8" fill="url(#iyel)"/><circle cx="456.9" cy="350.9" r="3.8" fill="url(#iyel)"/><circle cx="431.3" cy="339.3" r="4.1" fill="url(#iyel)"/><circle cx="451.2" cy="348.5" r="3.8" fill="url(#iyel)"/><circle cx="434.4" cy="351.5" r="4.0" fill="url(#iyel)"/><circle cx="441.3" cy="354.3" r="3.4" fill="url(#iyel)"/><circle cx="452.9" cy="341.0" r="3.8" fill="url(#iyel)"/><circle cx="443.0" cy="342.8" r="4.2" fill="url(#iyel)"/><circle cx="443.4" cy="354.2" r="4.2" fill="url(#iyel)"/><circle cx="467.3" cy="349.5" r="4.1" fill="url(#iyel)"/><circle cx="430.3" cy="339.6" r="3.8" fill="url(#iyel)"/><circle cx="428.9" cy="329.2" r="4.1" fill="url(#iyel)"/><circle cx="451.4" cy="333.3" r="3.4" fill="url(#iyel)"/><circle cx="445.8" cy="329.9" r="4.0" fill="url(#iyel)"/><circle cx="476.5" cy="356.4" r="3.8" fill="url(#iyel)"/><circle cx="454.2" cy="339.3" r="4.0" fill="url(#iyel)"/><circle cx="440.5" cy="331.0" r="4.0" fill="url(#iyel)"/><circle cx="433.6" cy="344.0" r="3.9" fill="url(#iyel)"/><circle cx="454.6" cy="360.0" r="3.4" fill="url(#iyel)"/><circle cx="445.3" cy="342.2" r="3.7" fill="url(#iyel)"/><circle cx="438.0" cy="341.3" r="4.2" fill="url(#iyel)"/><circle cx="439.9" cy="348.2" r="3.5" fill="url(#iyel)"/><circle cx="440.4" cy="326.7" r="4.1" fill="url(#iyel)"/><circle cx="433.0" cy="330.6" r="3.5" fill="url(#iyel)"/><circle cx="472.3" cy="353.3" r="3.5" fill="url(#iyel)"/><circle cx="433.4" cy="354.9" r="4.0" fill="url(#iyel)"/><circle cx="456.8" cy="342.9" r="3.7" fill="url(#iyel)"/><circle cx="441.1" cy="351.5" r="3.5" fill="url(#iyel)"/><circle cx="451.1" cy="331.8" r="3.7" fill="url(#iyel)"/><circle cx="459.7" cy="351.5" r="3.3" fill="url(#iyel)"/><circle cx="466.7" cy="363.1" r="4.0" fill="url(#iyel)"/><circle cx="453.4" cy="361.6" r="4.2" fill="url(#iyel)"/><circle cx="440.9" cy="326.9" r="3.6" fill="url(#iyel)"/><circle cx="447.2" cy="318.8" r="3.8" fill="url(#iyel)"/><circle cx="470.2" cy="354.9" r="3.4" fill="url(#iyel)"/><circle cx="467.9" cy="351.3" r="3.8" fill="url(#iyel)"/><circle cx="437.2" cy="323.3" r="3.5" fill="url(#iyel)"/><circle cx="436.2" cy="347.7" r="3.6" fill="url(#iyel)"/><circle cx="445.1" cy="358.6" r="3.8" fill="url(#iyel)"/><circle cx="440.4" cy="356.5" r="3.4" fill="url(#iyel)"/><circle cx="470.3" cy="357.5" r="4.0" fill="url(#iyel)"/><circle cx="455.7" cy="327.5" r="3.9" fill="url(#iyel)"/><circle cx="448.6" cy="354.6" r="3.6" fill="url(#iyel)"/><circle cx="430.5" cy="328.4" r="3.4" fill="url(#iyel)"/><circle cx="464.2" cy="353.6" r="3.8" fill="url(#iyel)"/><circle cx="443.0" cy="355.7" r="3.7" fill="url(#iyel)"/><circle cx="452.0" cy="328.5" r="4.3" fill="url(#iyel)"/><circle cx="449.4" cy="342.5" r="3.5" fill="url(#iyel)"/><circle cx="449.6" cy="342.5" r="3.7" fill="url(#iyel)"/><circle cx="458.6" cy="352.7" r="3.4" fill="url(#iyel)"/><circle cx="432.9" cy="332.6" r="3.7" fill="url(#iyel)"/><circle cx="437.9" cy="351.2" r="4.1" fill="url(#iyel)"/><circle cx="453.0" cy="334.5" r="3.5" fill="url(#iyel)"/><circle cx="447.9" cy="337.0" r="4.2" fill="url(#iyel)"/><circle cx="460.7" cy="356.5" r="3.5" fill="url(#iyel)"/><circle cx="440.3" cy="330.5" r="3.6" fill="url(#iyel)"/><circle cx="437.4" cy="323.8" r="3.4" fill="url(#iyel)"/><circle cx="447.5" cy="339.9" r="3.4" fill="url(#iyel)"/><circle cx="453.1" cy="336.1" r="3.3" fill="url(#iyel)"/><circle cx="451.0" cy="326.5" r="3.5" fill="url(#iyel)"/><circle cx="445.0" cy="346.8" r="4.0" fill="url(#iyel)"/><circle cx="436.4" cy="324.7" r="3.7" fill="url(#iyel)"/><circle cx="444.8" cy="338.3" r="3.9" fill="url(#iyel)"/><circle cx="444.5" cy="343.1" r="4.0" fill="url(#iyel)"/><circle cx="445.6" cy="338.1" r="4.3" fill="url(#iyel)"/><circle cx="469.6" cy="363.3" r="3.4" fill="url(#iyel)"/><circle cx="441.6" cy="340.1" r="3.6" fill="url(#iyel)"/></g><g filter="url(#bl6)"><path d="M392.6,331.8 C392.9,330.2 393.8,328.6 396.1,326.5 C398.5,324.4 403.8,321.2 406.8,319.5 C409.7,317.7 411.1,316.7 413.8,316.0 C416.4,315.2 420.3,316.0 422.6,315.1 C425.0,314.2 425.6,311.8 427.9,310.7 C430.3,309.5 434.8,307.7 436.7,308.0 C438.6,308.3 439.3,310.8 439.3,312.5 C439.3,314.1 435.7,316.6 436.7,317.8 C437.8,318.9 446.1,318.3 445.6,319.5 C445.0,320.6 436.2,322.4 433.2,324.8 C430.3,327.1 429.1,330.7 427.9,333.6 C426.7,336.5 426.1,339.8 426.1,342.4 C426.1,345.1 428.5,348.6 427.9,349.4 C427.3,350.3 424.4,348.3 422.6,347.7 C420.8,347.2 419.4,346.8 417.3,345.9 C415.2,345.1 412.9,343.9 410.3,342.4 C407.6,341.0 404.1,338.2 401.5,337.1 C398.8,336.1 395.9,337.1 394.4,336.2 C393.0,335.3 392.4,333.4 392.6,331.8 Z" fill="#6a6890"/><circle cx="412.4" cy="329.1" r="3.6" fill="url(#iblue)"/><circle cx="424.2" cy="330.9" r="3.5" fill="url(#iblue)"/><circle cx="438.4" cy="321.4" r="3.5" fill="url(#iblue)"/><circle cx="395.6" cy="334.5" r="3.9" fill="url(#iblue)"/><circle cx="423.3" cy="333.1" r="4.2" fill="url(#iblue)"/><circle cx="428.2" cy="323.9" r="4.3" fill="url(#iblue)"/><circle cx="436.6" cy="316.2" r="3.7" fill="url(#iblue)"/><circle cx="428.0" cy="335.1" r="3.3" fill="url(#iblue)"/><circle cx="402.5" cy="329.3" r="3.3" fill="url(#iblue)"/><circle cx="427.9" cy="322.4" r="4.1" fill="url(#iblue)"/><circle cx="404.1" cy="329.5" r="3.9" fill="url(#iblue)"/><circle cx="429.1" cy="330.8" r="4.0" fill="url(#iblue)"/><circle cx="392.6" cy="330.4" r="3.8" fill="url(#iblue)"/><circle cx="431.2" cy="309.6" r="3.3" fill="url(#iblue)"/><circle cx="399.1" cy="337.3" r="3.4" fill="url(#iblue)"/><circle cx="425.2" cy="315.8" r="3.9" fill="url(#iblue)"/><circle cx="421.4" cy="338.8" r="3.3" fill="url(#iblue)"/><circle cx="416.2" cy="340.9" r="3.3" fill="url(#iblue)"/><circle cx="401.7" cy="329.9" r="3.6" fill="url(#iblue)"/><circle cx="439.0" cy="320.3" r="4.0" fill="url(#iblue)"/><circle cx="404.1" cy="339.8" r="4.2" fill="url(#iblue)"/><circle cx="390.6" cy="333.5" r="4.2" fill="url(#iblue)"/><circle cx="434.8" cy="311.4" r="4.0" fill="url(#iblue)"/><circle cx="434.0" cy="313.2" r="4.0" fill="url(#iblue)"/><circle cx="426.3" cy="315.0" r="4.1" fill="url(#iblue)"/><circle cx="440.0" cy="309.2" r="3.8" fill="url(#iblue)"/><circle cx="409.2" cy="328.6" r="4.2" fill="url(#iblue)"/><circle cx="409.1" cy="322.4" r="3.5" fill="url(#iblue)"/><circle cx="416.6" cy="328.6" r="3.8" fill="url(#iblue)"/><circle cx="431.9" cy="317.9" r="3.3" fill="url(#iblue)"/><circle cx="414.8" cy="333.8" r="3.5" fill="url(#iblue)"/><circle cx="408.3" cy="334.6" r="3.4" fill="url(#iblue)"/><circle cx="429.3" cy="325.9" r="3.9" fill="url(#iblue)"/><circle cx="427.1" cy="341.5" r="3.9" fill="url(#iblue)"/><circle cx="419.0" cy="327.2" r="3.5" fill="url(#iblue)"/><circle cx="427.7" cy="312.8" r="4.2" fill="url(#iblue)"/><circle cx="403.5" cy="332.2" r="4.0" fill="url(#iblue)"/><circle cx="437.1" cy="310.6" r="3.6" fill="url(#iblue)"/><circle cx="438.8" cy="319.5" r="4.0" fill="url(#iblue)"/><circle cx="411.9" cy="317.0" r="3.7" fill="url(#iblue)"/><circle cx="410.0" cy="343.8" r="3.8" fill="url(#iblue)"/><circle cx="420.3" cy="333.5" r="4.0" fill="url(#iblue)"/><circle cx="423.3" cy="348.0" r="4.2" fill="url(#iblue)"/><circle cx="423.7" cy="332.2" r="3.6" fill="url(#iblue)"/><circle cx="410.4" cy="318.4" r="3.4" fill="url(#iblue)"/><circle cx="416.6" cy="329.8" r="3.7" fill="url(#iblue)"/><circle cx="419.4" cy="327.2" r="3.5" fill="url(#iblue)"/><circle cx="429.1" cy="309.1" r="4.2" fill="url(#iblue)"/><circle cx="424.6" cy="345.2" r="3.7" fill="url(#iblue)"/><circle cx="426.8" cy="333.3" r="3.9" fill="url(#iblue)"/><circle cx="430.2" cy="326.1" r="3.3" fill="url(#iblue)"/><circle cx="401.1" cy="329.0" r="3.9" fill="url(#iblue)"/><circle cx="396.6" cy="333.6" r="3.6" fill="url(#iblue)"/><circle cx="425.5" cy="321.3" r="3.3" fill="url(#iblue)"/><circle cx="416.0" cy="336.3" r="3.8" fill="url(#iblue)"/><circle cx="416.7" cy="337.2" r="4.2" fill="url(#iblue)"/><circle cx="426.7" cy="342.1" r="3.6" fill="url(#iblue)"/><circle cx="405.4" cy="327.1" r="3.7" fill="url(#iblue)"/><circle cx="401.8" cy="325.1" r="4.2" fill="url(#iblue)"/><circle cx="422.7" cy="336.3" r="4.3" fill="url(#iblue)"/><circle cx="427.3" cy="349.6" r="4.0" fill="url(#iblue)"/><circle cx="409.4" cy="335.9" r="3.4" fill="url(#iblue)"/><circle cx="398.1" cy="324.6" r="3.6" fill="url(#iblue)"/><circle cx="425.9" cy="345.1" r="3.6" fill="url(#iblue)"/></g><g filter="url(#bl6)"><path d="M382.6,342.4 C383.7,340.0 386.9,338.8 389.6,338.8 C392.2,338.8 395.2,340.9 398.4,342.4 C401.6,343.9 405.5,347.0 409.0,347.6 C412.5,348.2 416.6,345.0 419.6,345.9 C422.5,346.8 425.2,350.3 426.7,352.9 C428.1,355.6 428.7,359.1 428.4,361.7 C428.1,364.4 424.9,365.6 424.9,368.9 C424.9,372.1 428.4,378.3 428.4,381.2 C428.4,384.1 426.9,385.2 424.9,386.4 C422.8,387.6 419.0,388.5 416.0,388.2 C413.1,387.9 409.9,385.9 407.2,384.7 C404.6,383.5 401.1,383.2 400.2,381.2 C399.3,379.1 402.2,375.3 401.9,372.4 C401.6,369.4 400.7,365.6 398.4,363.5 C396.1,361.5 390.5,361.8 387.9,360.0 C385.2,358.3 383.4,355.9 382.6,352.9 C381.7,350.0 381.4,344.7 382.6,342.4 Z" fill="#987088"/><circle cx="392.0" cy="359.1" r="3.9" fill="url(#ipink)"/><circle cx="424.5" cy="384.8" r="3.8" fill="url(#ipink)"/><circle cx="422.9" cy="379.6" r="4.0" fill="url(#ipink)"/><circle cx="411.9" cy="357.7" r="3.9" fill="url(#ipink)"/><circle cx="424.5" cy="352.7" r="4.0" fill="url(#ipink)"/><circle cx="385.0" cy="341.0" r="3.5" fill="url(#ipink)"/><circle cx="394.6" cy="359.9" r="3.7" fill="url(#ipink)"/><circle cx="423.9" cy="349.3" r="3.6" fill="url(#ipink)"/><circle cx="403.6" cy="360.5" r="3.9" fill="url(#ipink)"/><circle cx="381.9" cy="345.0" r="3.6" fill="url(#ipink)"/><circle cx="405.9" cy="376.1" r="3.3" fill="url(#ipink)"/><circle cx="421.2" cy="385.8" r="4.3" fill="url(#ipink)"/><circle cx="407.5" cy="374.5" r="3.9" fill="url(#ipink)"/><circle cx="420.5" cy="346.3" r="3.7" fill="url(#ipink)"/><circle cx="421.3" cy="385.2" r="3.9" fill="url(#ipink)"/><circle cx="392.5" cy="338.9" r="3.8" fill="url(#ipink)"/><circle cx="388.9" cy="342.7" r="3.7" fill="url(#ipink)"/><circle cx="402.2" cy="365.8" r="4.3" fill="url(#ipink)"/><circle cx="425.1" cy="382.0" r="3.9" fill="url(#ipink)"/><circle cx="384.9" cy="341.5" r="3.7" fill="url(#ipink)"/><circle cx="420.0" cy="377.6" r="3.7" fill="url(#ipink)"/><circle cx="402.4" cy="349.8" r="3.4" fill="url(#ipink)"/><circle cx="382.6" cy="340.9" r="4.1" fill="url(#ipink)"/><circle cx="428.4" cy="380.2" r="4.0" fill="url(#ipink)"/><circle cx="402.5" cy="351.2" r="3.8" fill="url(#ipink)"/><circle cx="400.3" cy="381.7" r="4.3" fill="url(#ipink)"/><circle cx="400.3" cy="351.3" r="4.0" fill="url(#ipink)"/><circle cx="429.7" cy="379.7" r="4.1" fill="url(#ipink)"/><circle cx="403.8" cy="374.2" r="3.5" fill="url(#ipink)"/><circle cx="418.8" cy="379.3" r="4.2" fill="url(#ipink)"/><circle cx="398.6" cy="362.8" r="3.3" fill="url(#ipink)"/><circle cx="424.4" cy="367.9" r="3.4" fill="url(#ipink)"/><circle cx="397.1" cy="357.3" r="3.8" fill="url(#ipink)"/><circle cx="395.3" cy="350.7" r="3.8" fill="url(#ipink)"/><circle cx="418.2" cy="361.9" r="3.7" fill="url(#ipink)"/><circle cx="418.5" cy="374.0" r="3.4" fill="url(#ipink)"/><circle cx="418.6" cy="359.9" r="4.0" fill="url(#ipink)"/><circle cx="407.6" cy="376.0" r="3.5" fill="url(#ipink)"/><circle cx="411.0" cy="350.9" r="3.3" fill="url(#ipink)"/><circle cx="392.4" cy="345.8" r="3.6" fill="url(#ipink)"/><circle cx="419.7" cy="364.3" r="3.9" fill="url(#ipink)"/><circle cx="425.8" cy="349.2" r="4.2" fill="url(#ipink)"/><circle cx="414.3" cy="375.7" r="4.2" fill="url(#ipink)"/><circle cx="387.9" cy="358.2" r="3.8" fill="url(#ipink)"/><circle cx="391.8" cy="351.0" r="4.1" fill="url(#ipink)"/><circle cx="420.2" cy="353.8" r="3.4" fill="url(#ipink)"/><circle cx="405.1" cy="367.0" r="4.2" fill="url(#ipink)"/><circle cx="409.0" cy="366.0" r="4.1" fill="url(#ipink)"/><circle cx="413.6" cy="370.5" r="3.3" fill="url(#ipink)"/><circle cx="415.8" cy="360.2" r="3.8" fill="url(#ipink)"/><circle cx="407.3" cy="379.0" r="3.5" fill="url(#ipink)"/><circle cx="421.6" cy="382.5" r="3.3" fill="url(#ipink)"/><circle cx="407.8" cy="381.2" r="3.6" fill="url(#ipink)"/><circle cx="380.4" cy="348.7" r="3.7" fill="url(#ipink)"/><circle cx="406.2" cy="356.1" r="3.7" fill="url(#ipink)"/><circle cx="413.8" cy="377.1" r="4.2" fill="url(#ipink)"/><circle cx="423.8" cy="356.6" r="3.5" fill="url(#ipink)"/><circle cx="416.4" cy="384.8" r="3.3" fill="url(#ipink)"/><circle cx="411.7" cy="378.9" r="4.0" fill="url(#ipink)"/><circle cx="393.7" cy="356.7" r="3.4" fill="url(#ipink)"/><circle cx="425.3" cy="354.8" r="4.0" fill="url(#ipink)"/><circle cx="427.5" cy="375.3" r="3.5" fill="url(#ipink)"/><circle cx="398.4" cy="345.8" r="3.9" fill="url(#ipink)"/><circle cx="395.8" cy="351.2" r="4.1" fill="url(#ipink)"/><circle cx="415.5" cy="384.8" r="3.3" fill="url(#ipink)"/><circle cx="420.8" cy="362.1" r="3.8" fill="url(#ipink)"/><circle cx="426.6" cy="364.8" r="4.2" fill="url(#ipink)"/><circle cx="424.0" cy="353.1" r="3.8" fill="url(#ipink)"/><circle cx="405.7" cy="370.6" r="3.4" fill="url(#ipink)"/><circle cx="406.4" cy="372.7" r="3.6" fill="url(#ipink)"/><circle cx="419.9" cy="364.3" r="3.8" fill="url(#ipink)"/><circle cx="389.4" cy="345.1" r="3.7" fill="url(#ipink)"/><circle cx="414.9" cy="345.0" r="3.5" fill="url(#ipink)"/><circle cx="427.2" cy="380.3" r="4.2" fill="url(#ipink)"/><circle cx="404.6" cy="360.1" r="3.6" fill="url(#ipink)"/><circle cx="419.6" cy="384.7" r="4.0" fill="url(#ipink)"/><circle cx="417.0" cy="349.9" r="3.4" fill="url(#ipink)"/><circle cx="425.9" cy="356.1" r="3.8" fill="url(#ipink)"/><circle cx="425.6" cy="375.4" r="3.8" fill="url(#ipink)"/><circle cx="426.0" cy="360.4" r="4.2" fill="url(#ipink)"/><circle cx="421.4" cy="375.8" r="4.0" fill="url(#ipink)"/><circle cx="400.1" cy="357.3" r="3.6" fill="url(#ipink)"/><circle cx="414.4" cy="384.0" r="3.5" fill="url(#ipink)"/><circle cx="404.7" cy="352.1" r="3.6" fill="url(#ipink)"/><circle cx="402.9" cy="380.0" r="3.5" fill="url(#ipink)"/><circle cx="417.9" cy="367.1" r="4.2" fill="url(#ipink)"/><circle cx="401.1" cy="352.9" r="3.4" fill="url(#ipink)"/><circle cx="420.1" cy="378.5" r="3.3" fill="url(#ipink)"/><circle cx="405.8" cy="374.2" r="3.7" fill="url(#ipink)"/></g><path d="M554.4,321.4 C558.6,320.6 567.8,321.4 575.9,319.5 C584.0,317.6 597.1,312.1 603.3,309.7 C609.5,307.2 609.8,305.0 613.1,304.8 C616.4,304.6 620.6,306.8 622.9,308.7 C625.2,310.6 626.0,311.9 626.8,316.5 C627.6,321.1 626.8,331.2 627.8,336.1 C628.8,341.0 631.9,342.0 632.7,345.9 C633.5,349.8 633.4,355.4 632.7,359.6 C632.1,363.9 631.4,368.1 628.8,371.4 C626.2,374.7 621.2,376.9 617.0,379.2 C612.8,381.5 607.9,383.8 603.3,385.1 C598.7,386.4 592.2,385.4 589.6,387.0 C587.0,388.6 589.2,393.0 587.6,394.8 C586.0,396.6 582.4,397.8 579.8,397.8 C577.2,397.8 574.6,396.3 572.0,394.8 C569.4,393.3 567.8,389.3 564.2,389.0 C560.6,388.7 554.8,392.9 550.5,392.9 C546.2,392.9 541.3,391.6 538.7,389.0 C536.1,386.4 535.4,382.1 534.8,377.2 C534.1,372.3 533.8,364.5 534.8,359.6 C535.8,354.7 538.8,352.5 540.7,347.9 C542.7,343.3 544.9,336.1 546.5,332.2 C548.1,328.3 549.2,326.2 550.5,324.4 C551.8,322.6 550.2,322.2 554.4,321.4 Z" fill="url(#stlg)"/><g clip-path="url(#stlc)"><path d="M554.4,321.4 C558.6,320.6 567.8,321.4 575.9,319.5 C584.0,317.6 597.1,312.1 603.3,309.7 C609.5,307.2 609.8,305.0 613.1,304.8 C616.4,304.6 620.6,306.8 622.9,308.7 C625.2,310.6 626.0,311.9 626.8,316.5 C627.6,321.1 626.8,331.2 627.8,336.1 C628.8,341.0 631.9,342.0 632.7,345.9 C633.5,349.8 633.4,355.4 632.7,359.6 C632.1,363.9 631.4,368.1 628.8,371.4 C626.2,374.7 621.2,376.9 617.0,379.2 C612.8,381.5 607.9,383.8 603.3,385.1 C598.7,386.4 592.2,385.4 589.6,387.0 C587.0,388.6 589.2,393.0 587.6,394.8 C586.0,396.6 582.4,397.8 579.8,397.8 C577.2,397.8 574.6,396.3 572.0,394.8 C569.4,393.3 567.8,389.3 564.2,389.0 C560.6,388.7 554.8,392.9 550.5,392.9 C546.2,392.9 541.3,391.6 538.7,389.0 C536.1,386.4 535.4,382.1 534.8,377.2 C534.1,372.3 533.8,364.5 534.8,359.6 C535.8,354.7 538.8,352.5 540.7,347.9 C542.7,343.3 544.9,336.1 546.5,332.2 C548.1,328.3 549.2,326.2 550.5,324.4 C551.8,322.6 550.2,322.2 554.4,321.4 Z" fill="none" stroke="#a6a6a6" stroke-width="5" filter="url(#bl25)"/><g filter="url(#bl25)"><ellipse cx="614" cy="322" rx="10" ry="13" fill="#ececec"/><path d="M550,358 C565,350 580,344 589,346 C597,351 600,360 605,366" stroke="#a8a8a8" stroke-width="7" fill="none"/><path d="M605,366 C612,362 620,356 632,352" stroke="#a4a4a4" stroke-width="5" fill="none"/><path d="M606,378 C615,376 625,370 632,362" stroke="#b0b0b0" stroke-width="6" fill="none"/><circle cx="578" cy="366" r="7" fill="#dedede"/><path d="M556,325 C575,322 595,316 612,308" stroke="#c8c8c8" stroke-width="4" fill="none"/></g><g filter="url(#bl12)"><path d="M541,351 C550,342 565,333 580,329 C588,327 594,326 598,327" stroke="#f6f6f6" stroke-width="3.5" fill="none" stroke-linecap="round"/></g></g></svg></body></html>
